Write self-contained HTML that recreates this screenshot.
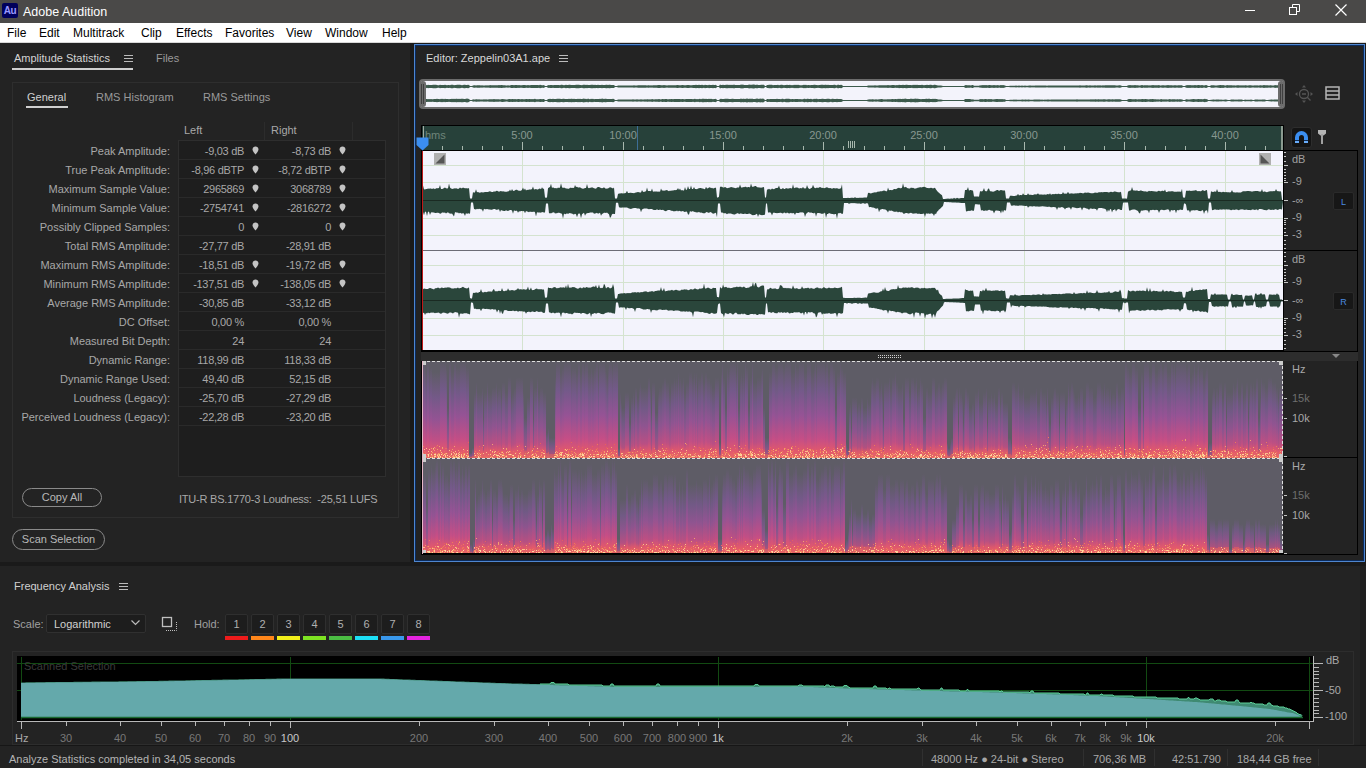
<!DOCTYPE html><html><head><meta charset="utf-8"><style>
*{margin:0;padding:0;box-sizing:border-box}
html,body{width:1366px;height:768px;overflow:hidden;background:#1a1a1a;font-family:"Liberation Sans",sans-serif;font-size:11px;color:#b0b0b0}
.a{position:absolute;white-space:nowrap}
</style></head><body>

<div class="a" style="left:0;top:0;width:1366px;height:23px;background:#4a4948"></div>
<div class="a" style="left:2px;top:3px;width:16px;height:15px;background:#00005b;border-radius:2px;color:#9999ff;font-weight:bold;font-size:10px;line-height:15px;text-align:center;letter-spacing:-0.5px">Au</div>
<div class="a" style="left:23px;top:4px;font-size:12.5px;color:#ffffff;line-height:16px">Adobe Audition</div>
<div class="a" style="left:1245px;top:10px;width:10px;height:1px;background:#fff"></div>
<svg class="a" style="left:1289px;top:4px" width="12" height="12"><rect x="0.5" y="3.5" width="7" height="7" fill="none" stroke="#fff"/><path d="M3.5 3.5V0.5H10.5V7.5H7.5" fill="none" stroke="#fff"/></svg>
<svg class="a" style="left:1335px;top:4px" width="12" height="12"><path d="M0.5 0.5L11.5 11.5M11.5 0.5L0.5 11.5" stroke="#fff" stroke-width="1.2"/></svg>
<div class="a" style="left:0;top:23px;width:1366px;height:19px;background:#ffffff"></div><div class="a" style="left:0;top:42px;width:1366px;height:1px;background:#d8d8d8"></div>
<div class="a" style="left:7px;top:26px;font-size:12px;color:#000;line-height:15px">File</div>
<div class="a" style="left:39px;top:26px;font-size:12px;color:#000;line-height:15px">Edit</div>
<div class="a" style="left:73px;top:26px;font-size:12px;color:#000;line-height:15px">Multitrack</div>
<div class="a" style="left:141px;top:26px;font-size:12px;color:#000;line-height:15px">Clip</div>
<div class="a" style="left:176px;top:26px;font-size:12px;color:#000;line-height:15px">Effects</div>
<div class="a" style="left:225px;top:26px;font-size:12px;color:#000;line-height:15px">Favorites</div>
<div class="a" style="left:286px;top:26px;font-size:12px;color:#000;line-height:15px">View</div>
<div class="a" style="left:325px;top:26px;font-size:12px;color:#000;line-height:15px">Window</div>
<div class="a" style="left:382px;top:26px;font-size:12px;color:#000;line-height:15px">Help</div>
<div class="a" style="left:0;top:43px;width:410px;height:519px;background:#232323"></div>
<div class="a" style="left:14px;top:51px;color:#d4d4d4;line-height:14px">Amplitude Statistics</div>
<div class="a" style="left:12px;top:68px;width:121px;height:2px;background:#cfcfcf"></div>
<svg class="a" style="left:124px;top:54px" width="9" height="8"><path d="M0 1.5H9M0 4.5H9M0 7.5H9" stroke="#bbb" stroke-width="1"/></svg>
<div class="a" style="left:156px;top:51px;color:#9a9a9a;line-height:14px">Files</div>
<div class="a" style="left:12px;top:82px;width:387px;height:436px;border:1px solid #2e2e2e"></div>
<div class="a" style="left:27px;top:90px;color:#cfcfcf;line-height:14px">General</div>
<div class="a" style="left:26px;top:106px;width:42px;height:2px;background:#cfcfcf"></div>
<div class="a" style="left:96px;top:90px;color:#9a9a9a;line-height:14px">RMS Histogram</div>
<div class="a" style="left:203px;top:90px;color:#9a9a9a;line-height:14px">RMS Settings</div>
<div class="a" style="left:184px;top:123px;color:#a8a8a8;line-height:14px">Left</div>
<div class="a" style="left:271px;top:123px;color:#a8a8a8;line-height:14px">Right</div>
<div class="a" style="left:264px;top:122px;width:1px;height:18px;background:#2c2c2c"></div>
<div class="a" style="left:352px;top:122px;width:1px;height:18px;background:#2c2c2c"></div>
<div class="a" style="left:178px;top:140px;width:208px;height:337px;background:#1e1e1e;border:1px solid #2e2e2e"></div>
<div class="a" style="left:179px;top:159px;width:206px;height:1px;background:#2a2a2a"></div>
<div class="a" style="right:1196px;top:144px;color:#a8a8a8;line-height:14px">Peak Amplitude:</div>
<div class="a" style="right:1122px;top:144px;letter-spacing:-0.3px;color:#a8a8a8;line-height:14px">-9,03 dB</div>
<div class="a" style="right:1035px;top:144px;letter-spacing:-0.3px;color:#a8a8a8;line-height:14px">-8,73 dB</div>
<svg class="a" style="left:252px;top:146px" width="7" height="9"><path d="M0.6 3.2C0.6 1.2 1.8 0.4 3.5 0.4C5.2 0.4 6.4 1.2 6.4 3.2C6.4 5 5 7 3.5 8.4C2 7 0.6 5 0.6 3.2Z" fill="#c4c4c4"/></svg>
<svg class="a" style="left:339px;top:146px" width="7" height="9"><path d="M0.6 3.2C0.6 1.2 1.8 0.4 3.5 0.4C5.2 0.4 6.4 1.2 6.4 3.2C6.4 5 5 7 3.5 8.4C2 7 0.6 5 0.6 3.2Z" fill="#c4c4c4"/></svg>
<div class="a" style="left:179px;top:178px;width:206px;height:1px;background:#2a2a2a"></div>
<div class="a" style="right:1196px;top:163px;color:#a8a8a8;line-height:14px">True Peak Amplitude:</div>
<div class="a" style="right:1122px;top:163px;letter-spacing:-0.3px;color:#a8a8a8;line-height:14px">-8,96 dBTP</div>
<div class="a" style="right:1035px;top:163px;letter-spacing:-0.3px;color:#a8a8a8;line-height:14px">-8,72 dBTP</div>
<svg class="a" style="left:252px;top:165px" width="7" height="9"><path d="M0.6 3.2C0.6 1.2 1.8 0.4 3.5 0.4C5.2 0.4 6.4 1.2 6.4 3.2C6.4 5 5 7 3.5 8.4C2 7 0.6 5 0.6 3.2Z" fill="#c4c4c4"/></svg>
<svg class="a" style="left:339px;top:165px" width="7" height="9"><path d="M0.6 3.2C0.6 1.2 1.8 0.4 3.5 0.4C5.2 0.4 6.4 1.2 6.4 3.2C6.4 5 5 7 3.5 8.4C2 7 0.6 5 0.6 3.2Z" fill="#c4c4c4"/></svg>
<div class="a" style="left:179px;top:197px;width:206px;height:1px;background:#2a2a2a"></div>
<div class="a" style="right:1196px;top:182px;color:#a8a8a8;line-height:14px">Maximum Sample Value:</div>
<div class="a" style="right:1122px;top:182px;letter-spacing:-0.3px;color:#a8a8a8;line-height:14px">2965869</div>
<div class="a" style="right:1035px;top:182px;letter-spacing:-0.3px;color:#a8a8a8;line-height:14px">3068789</div>
<svg class="a" style="left:252px;top:184px" width="7" height="9"><path d="M0.6 3.2C0.6 1.2 1.8 0.4 3.5 0.4C5.2 0.4 6.4 1.2 6.4 3.2C6.4 5 5 7 3.5 8.4C2 7 0.6 5 0.6 3.2Z" fill="#c4c4c4"/></svg>
<svg class="a" style="left:339px;top:184px" width="7" height="9"><path d="M0.6 3.2C0.6 1.2 1.8 0.4 3.5 0.4C5.2 0.4 6.4 1.2 6.4 3.2C6.4 5 5 7 3.5 8.4C2 7 0.6 5 0.6 3.2Z" fill="#c4c4c4"/></svg>
<div class="a" style="left:179px;top:216px;width:206px;height:1px;background:#2a2a2a"></div>
<div class="a" style="right:1196px;top:201px;color:#a8a8a8;line-height:14px">Minimum Sample Value:</div>
<div class="a" style="right:1122px;top:201px;letter-spacing:-0.3px;color:#a8a8a8;line-height:14px">-2754741</div>
<div class="a" style="right:1035px;top:201px;letter-spacing:-0.3px;color:#a8a8a8;line-height:14px">-2816272</div>
<svg class="a" style="left:252px;top:203px" width="7" height="9"><path d="M0.6 3.2C0.6 1.2 1.8 0.4 3.5 0.4C5.2 0.4 6.4 1.2 6.4 3.2C6.4 5 5 7 3.5 8.4C2 7 0.6 5 0.6 3.2Z" fill="#c4c4c4"/></svg>
<svg class="a" style="left:339px;top:203px" width="7" height="9"><path d="M0.6 3.2C0.6 1.2 1.8 0.4 3.5 0.4C5.2 0.4 6.4 1.2 6.4 3.2C6.4 5 5 7 3.5 8.4C2 7 0.6 5 0.6 3.2Z" fill="#c4c4c4"/></svg>
<div class="a" style="left:179px;top:235px;width:206px;height:1px;background:#2a2a2a"></div>
<div class="a" style="right:1196px;top:220px;color:#a8a8a8;line-height:14px">Possibly Clipped Samples:</div>
<div class="a" style="right:1122px;top:220px;letter-spacing:-0.3px;color:#a8a8a8;line-height:14px">0</div>
<div class="a" style="right:1035px;top:220px;letter-spacing:-0.3px;color:#a8a8a8;line-height:14px">0</div>
<svg class="a" style="left:252px;top:222px" width="7" height="9"><path d="M0.6 3.2C0.6 1.2 1.8 0.4 3.5 0.4C5.2 0.4 6.4 1.2 6.4 3.2C6.4 5 5 7 3.5 8.4C2 7 0.6 5 0.6 3.2Z" fill="#c4c4c4"/></svg>
<svg class="a" style="left:339px;top:222px" width="7" height="9"><path d="M0.6 3.2C0.6 1.2 1.8 0.4 3.5 0.4C5.2 0.4 6.4 1.2 6.4 3.2C6.4 5 5 7 3.5 8.4C2 7 0.6 5 0.6 3.2Z" fill="#c4c4c4"/></svg>
<div class="a" style="left:179px;top:254px;width:206px;height:1px;background:#2a2a2a"></div>
<div class="a" style="right:1196px;top:239px;color:#a8a8a8;line-height:14px">Total RMS Amplitude:</div>
<div class="a" style="right:1122px;top:239px;letter-spacing:-0.3px;color:#a8a8a8;line-height:14px">-27,77 dB</div>
<div class="a" style="right:1035px;top:239px;letter-spacing:-0.3px;color:#a8a8a8;line-height:14px">-28,91 dB</div>
<div class="a" style="left:179px;top:273px;width:206px;height:1px;background:#2a2a2a"></div>
<div class="a" style="right:1196px;top:258px;color:#a8a8a8;line-height:14px">Maximum RMS Amplitude:</div>
<div class="a" style="right:1122px;top:258px;letter-spacing:-0.3px;color:#a8a8a8;line-height:14px">-18,51 dB</div>
<div class="a" style="right:1035px;top:258px;letter-spacing:-0.3px;color:#a8a8a8;line-height:14px">-19,72 dB</div>
<svg class="a" style="left:252px;top:260px" width="7" height="9"><path d="M0.6 3.2C0.6 1.2 1.8 0.4 3.5 0.4C5.2 0.4 6.4 1.2 6.4 3.2C6.4 5 5 7 3.5 8.4C2 7 0.6 5 0.6 3.2Z" fill="#c4c4c4"/></svg>
<svg class="a" style="left:339px;top:260px" width="7" height="9"><path d="M0.6 3.2C0.6 1.2 1.8 0.4 3.5 0.4C5.2 0.4 6.4 1.2 6.4 3.2C6.4 5 5 7 3.5 8.4C2 7 0.6 5 0.6 3.2Z" fill="#c4c4c4"/></svg>
<div class="a" style="left:179px;top:292px;width:206px;height:1px;background:#2a2a2a"></div>
<div class="a" style="right:1196px;top:277px;color:#a8a8a8;line-height:14px">Minimum RMS Amplitude:</div>
<div class="a" style="right:1122px;top:277px;letter-spacing:-0.3px;color:#a8a8a8;line-height:14px">-137,51 dB</div>
<div class="a" style="right:1035px;top:277px;letter-spacing:-0.3px;color:#a8a8a8;line-height:14px">-138,05 dB</div>
<svg class="a" style="left:252px;top:279px" width="7" height="9"><path d="M0.6 3.2C0.6 1.2 1.8 0.4 3.5 0.4C5.2 0.4 6.4 1.2 6.4 3.2C6.4 5 5 7 3.5 8.4C2 7 0.6 5 0.6 3.2Z" fill="#c4c4c4"/></svg>
<svg class="a" style="left:339px;top:279px" width="7" height="9"><path d="M0.6 3.2C0.6 1.2 1.8 0.4 3.5 0.4C5.2 0.4 6.4 1.2 6.4 3.2C6.4 5 5 7 3.5 8.4C2 7 0.6 5 0.6 3.2Z" fill="#c4c4c4"/></svg>
<div class="a" style="left:179px;top:311px;width:206px;height:1px;background:#2a2a2a"></div>
<div class="a" style="right:1196px;top:296px;color:#a8a8a8;line-height:14px">Average RMS Amplitude:</div>
<div class="a" style="right:1122px;top:296px;letter-spacing:-0.3px;color:#a8a8a8;line-height:14px">-30,85 dB</div>
<div class="a" style="right:1035px;top:296px;letter-spacing:-0.3px;color:#a8a8a8;line-height:14px">-33,12 dB</div>
<div class="a" style="left:179px;top:330px;width:206px;height:1px;background:#2a2a2a"></div>
<div class="a" style="right:1196px;top:315px;color:#a8a8a8;line-height:14px">DC Offset:</div>
<div class="a" style="right:1122px;top:315px;letter-spacing:-0.3px;color:#a8a8a8;line-height:14px">0,00 %</div>
<div class="a" style="right:1035px;top:315px;letter-spacing:-0.3px;color:#a8a8a8;line-height:14px">0,00 %</div>
<div class="a" style="left:179px;top:349px;width:206px;height:1px;background:#2a2a2a"></div>
<div class="a" style="right:1196px;top:334px;color:#a8a8a8;line-height:14px">Measured Bit Depth:</div>
<div class="a" style="right:1122px;top:334px;letter-spacing:-0.3px;color:#a8a8a8;line-height:14px">24</div>
<div class="a" style="right:1035px;top:334px;letter-spacing:-0.3px;color:#a8a8a8;line-height:14px">24</div>
<div class="a" style="left:179px;top:368px;width:206px;height:1px;background:#2a2a2a"></div>
<div class="a" style="right:1196px;top:353px;color:#a8a8a8;line-height:14px">Dynamic Range:</div>
<div class="a" style="right:1122px;top:353px;letter-spacing:-0.3px;color:#a8a8a8;line-height:14px">118,99 dB</div>
<div class="a" style="right:1035px;top:353px;letter-spacing:-0.3px;color:#a8a8a8;line-height:14px">118,33 dB</div>
<div class="a" style="left:179px;top:387px;width:206px;height:1px;background:#2a2a2a"></div>
<div class="a" style="right:1196px;top:372px;color:#a8a8a8;line-height:14px">Dynamic Range Used:</div>
<div class="a" style="right:1122px;top:372px;letter-spacing:-0.3px;color:#a8a8a8;line-height:14px">49,40 dB</div>
<div class="a" style="right:1035px;top:372px;letter-spacing:-0.3px;color:#a8a8a8;line-height:14px">52,15 dB</div>
<div class="a" style="left:179px;top:406px;width:206px;height:1px;background:#2a2a2a"></div>
<div class="a" style="right:1196px;top:391px;color:#a8a8a8;line-height:14px">Loudness (Legacy):</div>
<div class="a" style="right:1122px;top:391px;letter-spacing:-0.3px;color:#a8a8a8;line-height:14px">-25,70 dB</div>
<div class="a" style="right:1035px;top:391px;letter-spacing:-0.3px;color:#a8a8a8;line-height:14px">-27,29 dB</div>
<div class="a" style="left:179px;top:425px;width:206px;height:1px;background:#2a2a2a"></div>
<div class="a" style="right:1196px;top:410px;color:#a8a8a8;line-height:14px">Perceived Loudness (Legacy):</div>
<div class="a" style="right:1122px;top:410px;letter-spacing:-0.3px;color:#a8a8a8;line-height:14px">-22,28 dB</div>
<div class="a" style="right:1035px;top:410px;letter-spacing:-0.3px;color:#a8a8a8;line-height:14px">-23,20 dB</div>
<div class="a" style="left:22px;top:488px;width:80px;height:19px;border:1px solid #8a8a8a;border-radius:10px;color:#b8b8b8;text-align:center;line-height:17px">Copy All</div>
<div class="a" style="left:179px;top:492px;letter-spacing:-0.22px;color:#a8a8a8;line-height:14px">ITU-R BS.1770-3 Loudness:&nbsp;&nbsp;-25,51 LUFS</div>
<div class="a" style="left:12px;top:529px;width:93px;height:21px;border:1px solid #8a8a8a;border-radius:11px;color:#b8b8b8;text-align:center;line-height:19px">Scan Selection</div>
<div class="a" style="left:414px;top:44px;width:951px;height:518px;background:#232323;border:1px solid #4f86cf;box-shadow:inset 0 0 0 1px #0b2b5c"></div>
<div class="a" style="left:426px;top:51px;color:#d8d8d8;line-height:14px">Editor: Zeppelin03A1.ape</div>
<svg class="a" style="left:559px;top:54px" width="9" height="8"><path d="M0 1.5H9M0 4.5H9M0 7.5H9" stroke="#bbb" stroke-width="1"/></svg>
<div class="a" style="left:419px;top:79px;width:866px;height:30px;background:#6c6c6c;border-radius:4px"></div>
<div class="a" style="left:421px;top:81px;width:862px;height:26px;background:#f3f3fb"></div>
<div class="a" style="left:419px;top:81px;width:7px;height:26px;background:#6c6c6c;border-radius:3px"></div>
<div class="a" style="left:421px;top:84px;width:1px;height:20px;background:#3f3f3f"></div><div class="a" style="left:423px;top:84px;width:1px;height:20px;background:#3f3f3f"></div>
<div class="a" style="left:1278px;top:81px;width:7px;height:26px;background:#6c6c6c;border-radius:3px"></div>
<div class="a" style="left:1280px;top:84px;width:1px;height:20px;background:#3f3f3f"></div><div class="a" style="left:1282px;top:84px;width:1px;height:20px;background:#3f3f3f"></div>
<svg class="a" style="left:1294px;top:84px" width="22" height="20"><g fill="none" stroke="#555" stroke-width="1.3"><circle cx="10" cy="10" r="4.5"/><path d="M8 10H12M13.3 13.3L16.5 16.5"/></g><g fill="#555"><path d="M10 1L8 3.5H12Z"/><path d="M10 19L8 16.5H12Z"/><path d="M1 10L3.5 8V12Z"/><path d="M19 10L16.5 8V12Z"/></g></svg>
<svg class="a" style="left:1325px;top:86px" width="16" height="15"><rect x="1" y="1" width="13" height="12" fill="none" stroke="#b5b5b5" stroke-width="1.5"/><path d="M1 5H14M1 9H14" stroke="#b5b5b5" stroke-width="1.5"/></svg>
<div class="a" style="left:421px;top:125px;width:863px;height:26px;background:#000"></div>
<div class="a" style="left:422px;top:126px;width:861px;height:24px;background:#27413a"></div>
<div class="a" style="left:422px;top:142px;width:1px;height:8px;background:#a8b8ae"></div><div class="a" style="left:442px;top:146px;width:1px;height:4px;background:#a8b8ae"></div><div class="a" style="left:462px;top:146px;width:1px;height:4px;background:#a8b8ae"></div><div class="a" style="left:482px;top:146px;width:1px;height:4px;background:#a8b8ae"></div><div class="a" style="left:502px;top:146px;width:1px;height:4px;background:#a8b8ae"></div><div class="a" style="left:522px;top:142px;width:1px;height:8px;background:#a8b8ae"></div><div class="a" style="left:542px;top:146px;width:1px;height:4px;background:#a8b8ae"></div><div class="a" style="left:562px;top:146px;width:1px;height:4px;background:#a8b8ae"></div><div class="a" style="left:583px;top:146px;width:1px;height:4px;background:#a8b8ae"></div><div class="a" style="left:603px;top:146px;width:1px;height:4px;background:#a8b8ae"></div><div class="a" style="left:623px;top:142px;width:1px;height:8px;background:#a8b8ae"></div><div class="a" style="left:643px;top:146px;width:1px;height:4px;background:#a8b8ae"></div><div class="a" style="left:663px;top:146px;width:1px;height:4px;background:#a8b8ae"></div><div class="a" style="left:683px;top:146px;width:1px;height:4px;background:#a8b8ae"></div><div class="a" style="left:703px;top:146px;width:1px;height:4px;background:#a8b8ae"></div><div class="a" style="left:723px;top:142px;width:1px;height:8px;background:#a8b8ae"></div><div class="a" style="left:743px;top:146px;width:1px;height:4px;background:#a8b8ae"></div><div class="a" style="left:763px;top:146px;width:1px;height:4px;background:#a8b8ae"></div><div class="a" style="left:783px;top:146px;width:1px;height:4px;background:#a8b8ae"></div><div class="a" style="left:803px;top:146px;width:1px;height:4px;background:#a8b8ae"></div><div class="a" style="left:823px;top:142px;width:1px;height:8px;background:#a8b8ae"></div><div class="a" style="left:843px;top:146px;width:1px;height:4px;background:#a8b8ae"></div><div class="a" style="left:864px;top:146px;width:1px;height:4px;background:#a8b8ae"></div><div class="a" style="left:884px;top:146px;width:1px;height:4px;background:#a8b8ae"></div><div class="a" style="left:904px;top:146px;width:1px;height:4px;background:#a8b8ae"></div><div class="a" style="left:924px;top:142px;width:1px;height:8px;background:#a8b8ae"></div><div class="a" style="left:944px;top:146px;width:1px;height:4px;background:#a8b8ae"></div><div class="a" style="left:964px;top:146px;width:1px;height:4px;background:#a8b8ae"></div><div class="a" style="left:984px;top:146px;width:1px;height:4px;background:#a8b8ae"></div><div class="a" style="left:1004px;top:146px;width:1px;height:4px;background:#a8b8ae"></div><div class="a" style="left:1024px;top:142px;width:1px;height:8px;background:#a8b8ae"></div><div class="a" style="left:1044px;top:146px;width:1px;height:4px;background:#a8b8ae"></div><div class="a" style="left:1064px;top:146px;width:1px;height:4px;background:#a8b8ae"></div><div class="a" style="left:1084px;top:146px;width:1px;height:4px;background:#a8b8ae"></div><div class="a" style="left:1104px;top:146px;width:1px;height:4px;background:#a8b8ae"></div><div class="a" style="left:1124px;top:142px;width:1px;height:8px;background:#a8b8ae"></div><div class="a" style="left:1145px;top:146px;width:1px;height:4px;background:#a8b8ae"></div><div class="a" style="left:1165px;top:146px;width:1px;height:4px;background:#a8b8ae"></div><div class="a" style="left:1185px;top:146px;width:1px;height:4px;background:#a8b8ae"></div><div class="a" style="left:1205px;top:146px;width:1px;height:4px;background:#a8b8ae"></div><div class="a" style="left:1225px;top:142px;width:1px;height:8px;background:#a8b8ae"></div><div class="a" style="left:1245px;top:146px;width:1px;height:4px;background:#a8b8ae"></div><div class="a" style="left:1265px;top:146px;width:1px;height:4px;background:#a8b8ae"></div>
<div class="a" style="left:492px;width:60px;text-align:center;top:128px;color:#879890;line-height:14px">5:00</div>
<div class="a" style="left:593px;width:60px;text-align:center;top:128px;color:#879890;line-height:14px">10:00</div>
<div class="a" style="left:693px;width:60px;text-align:center;top:128px;color:#879890;line-height:14px">15:00</div>
<div class="a" style="left:793px;width:60px;text-align:center;top:128px;color:#879890;line-height:14px">20:00</div>
<div class="a" style="left:894px;width:60px;text-align:center;top:128px;color:#879890;line-height:14px">25:00</div>
<div class="a" style="left:994px;width:60px;text-align:center;top:128px;color:#879890;line-height:14px">30:00</div>
<div class="a" style="left:1094px;width:60px;text-align:center;top:128px;color:#879890;line-height:14px">35:00</div>
<div class="a" style="left:1195px;width:60px;text-align:center;top:128px;color:#879890;line-height:14px">40:00</div>
<div class="a" style="left:425px;top:128px;color:#6f857a;line-height:14px">hms</div>
<div class="a" style="left:423px;top:126px;width:1px;height:14px;background:#a0aca4"></div>
<div class="a" style="left:637px;top:126px;width:1px;height:24px;background:#3d6e96"></div>
<svg class="a" style="left:847px;top:141px" width="9" height="7"><path d="M1.5 0V7M3.5 0V7M5.5 0V7M7.5 0V7" stroke="#a8b8ae" stroke-width="1"/></svg>
<div class="a" style="left:1281px;top:126px;width:2px;height:24px;background:#8a9a90"></div>
<div class="a" style="left:1291px;top:127px;width:21px;height:21px;background:#141414;border:1px solid #2d2d2d;border-radius:3px"></div>
<svg class="a" style="left:1294px;top:130px" width="15" height="15"><path d="M1 13V7.5A6.5 6.5 0 0 1 14 7.5V13H10V7.5A2.5 2.5 0 0 0 5 7.5V13Z" fill="#3b8ef0"/><path d="M1 10.5H5M10 10.5H14" stroke="#0d2a52" stroke-width="1"/><path d="M1 12H5M10 12H14" stroke="#7ab8ff" stroke-width="1.5"/></svg>
<svg class="a" style="left:1318px;top:130px" width="9" height="15"><path d="M0 0H8V3.5L5.5 5.5H2.5L0 3.5Z" fill="#b5b5b5"/><rect x="3" y="4" width="2" height="10" fill="#a0a0a0"/></svg>
<div class="a" style="left:421px;top:150px;width:863px;height:202px;background:#000"></div>
<div class="a" style="left:422px;top:151px;width:861px;height:199px;background:#f3f3fc"></div>
<div class="a" style="left:422px;top:165px;width:861px;height:1px;background:#d4e3cf"></div><div class="a" style="left:422px;top:182px;width:861px;height:1px;background:#d4e3cf"></div><div class="a" style="left:422px;top:218px;width:861px;height:1px;background:#d4e3cf"></div><div class="a" style="left:422px;top:235px;width:861px;height:1px;background:#d4e3cf"></div><div class="a" style="left:422px;top:265px;width:861px;height:1px;background:#d4e3cf"></div><div class="a" style="left:422px;top:282px;width:861px;height:1px;background:#d4e3cf"></div><div class="a" style="left:422px;top:318px;width:861px;height:1px;background:#d4e3cf"></div><div class="a" style="left:422px;top:335px;width:861px;height:1px;background:#d4e3cf"></div><div class="a" style="left:522px;top:151px;width:1px;height:199px;background:#d4e3cf"></div><div class="a" style="left:623px;top:151px;width:1px;height:199px;background:#d4e3cf"></div><div class="a" style="left:723px;top:151px;width:1px;height:199px;background:#d4e3cf"></div><div class="a" style="left:823px;top:151px;width:1px;height:199px;background:#d4e3cf"></div><div class="a" style="left:924px;top:151px;width:1px;height:199px;background:#d4e3cf"></div><div class="a" style="left:1024px;top:151px;width:1px;height:199px;background:#d4e3cf"></div><div class="a" style="left:1124px;top:151px;width:1px;height:199px;background:#d4e3cf"></div><div class="a" style="left:1225px;top:151px;width:1px;height:199px;background:#d4e3cf"></div><div class="a" style="left:422px;top:250px;width:861px;height:1px;background:#6c6c76"></div>
<svg class="a" style="left:0;top:0" width="1366" height="768"><path d="M422 189.0 L423 185.5 L424 189.3 L425 189.5 L426 189.0 L427 189.1 L428 188.4 L429 188.7 L430 188.4 L431 188.5 L432 188.9 L433 188.4 L434 188.5 L435 189.2 L436 188.3 L437 188.2 L438 188.3 L439 188.1 L440 185.1 L441 188.9 L442 189.0 L443 188.7 L444 188.0 L445 187.5 L446 188.3 L447 188.6 L448 188.3 L449 183.6 L450 187.5 L451 188.4 L452 188.7 L453 188.9 L454 188.3 L455 188.4 L456 188.3 L457 188.4 L458 188.9 L459 188.4 L460 187.6 L461 188.3 L462 188.3 L463 187.6 L464 188.1 L465 188.3 L466 188.2 L467 188.2 L468 188.4 L469 188.1 L470 198.5 L471 198.5 L472 198.5 L473 192.1 L474 192.7 L475 192.3 L476 189.2 L477 192.3 L478 192.0 L479 192.4 L480 192.7 L481 192.3 L482 192.2 L483 192.5 L484 192.3 L485 192.1 L486 191.9 L487 191.9 L488 191.9 L489 191.6 L490 191.2 L491 191.7 L492 192.0 L493 192.0 L494 191.3 L495 191.8 L496 191.1 L497 190.8 L498 191.2 L499 191.7 L500 191.3 L501 190.9 L502 191.5 L503 191.3 L504 191.5 L505 191.7 L506 191.7 L507 191.7 L508 191.3 L509 191.2 L510 189.4 L511 191.2 L512 189.1 L513 190.8 L514 191.0 L515 190.3 L516 189.7 L517 189.8 L518 190.5 L519 190.8 L520 190.7 L521 190.8 L522 189.8 L523 187.4 L524 189.9 L525 188.5 L526 190.4 L527 189.8 L528 189.9 L529 189.6 L530 189.4 L531 189.4 L532 189.0 L533 186.5 L534 189.6 L535 189.3 L536 188.9 L537 189.6 L538 189.6 L539 188.7 L540 188.6 L541 189.3 L542 187.2 L543 188.8 L544 188.8 L545 197.4 L546 197.7 L547 197.6 L548 188.3 L549 187.4 L550 187.0 L551 183.7 L552 187.9 L553 187.3 L554 188.1 L555 188.3 L556 187.9 L557 188.5 L558 187.5 L559 188.1 L560 187.4 L561 183.3 L562 187.3 L563 188.1 L564 187.6 L565 188.0 L566 188.4 L567 188.5 L568 188.7 L569 188.8 L570 187.7 L571 187.7 L572 188.1 L573 187.7 L574 188.1 L575 185.0 L576 187.0 L577 186.7 L578 187.6 L579 187.4 L580 187.2 L581 187.9 L582 188.4 L583 188.7 L584 188.4 L585 188.1 L586 188.0 L587 183.9 L588 187.8 L589 188.2 L590 187.7 L591 187.7 L592 187.3 L593 187.8 L594 188.2 L595 188.5 L596 188.7 L597 187.6 L598 187.0 L599 187.0 L600 187.6 L601 187.9 L602 188.3 L603 188.1 L604 187.3 L605 188.2 L606 188.7 L607 188.6 L608 188.5 L609 187.8 L610 187.2 L611 187.5 L612 188.0 L613 188.4 L614 187.6 L615 198.6 L616 198.5 L617 198.6 L618 193.9 L619 193.5 L620 193.4 L621 193.3 L622 193.2 L623 193.5 L624 193.3 L625 193.2 L626 192.7 L627 190.7 L628 193.1 L629 193.1 L630 192.7 L631 192.7 L632 193.0 L633 193.1 L634 193.2 L635 192.8 L636 192.6 L637 192.3 L638 191.9 L639 192.2 L640 192.5 L641 192.5 L642 190.0 L643 191.8 L644 191.9 L645 191.5 L646 191.2 L647 187.6 L648 191.0 L649 191.1 L650 191.0 L651 191.3 L652 188.5 L653 191.8 L654 191.6 L655 191.4 L656 191.4 L657 191.6 L658 191.8 L659 191.5 L660 191.8 L661 188.5 L662 190.5 L663 190.5 L664 190.7 L665 190.4 L666 190.3 L667 190.1 L668 190.7 L669 191.2 L670 190.6 L671 191.0 L672 190.2 L673 190.8 L674 190.1 L675 190.3 L676 189.9 L677 189.8 L678 188.0 L679 190.1 L680 188.5 L681 190.6 L682 190.1 L683 190.4 L684 190.5 L685 187.0 L686 190.1 L687 189.5 L688 185.9 L689 188.9 L690 189.1 L691 185.5 L692 189.0 L693 189.1 L694 186.9 L695 189.1 L696 188.9 L697 189.2 L698 188.5 L699 188.3 L700 188.0 L701 188.1 L702 188.4 L703 188.6 L704 188.9 L705 189.2 L706 186.8 L707 188.5 L708 188.2 L709 187.6 L710 187.2 L711 188.3 L712 187.7 L713 188.4 L714 188.3 L715 187.7 L716 187.7 L717 197.6 L718 197.6 L719 196.8 L720 186.8 L721 186.8 L722 186.7 L723 187.6 L724 187.4 L725 187.1 L726 187.5 L727 188.3 L728 187.9 L729 187.8 L730 187.4 L731 186.9 L732 187.3 L733 187.4 L734 187.7 L735 188.1 L736 188.3 L737 187.5 L738 187.6 L739 187.6 L740 184.6 L741 187.3 L742 187.8 L743 186.9 L744 187.2 L745 186.7 L746 186.7 L747 187.6 L748 187.1 L749 186.9 L750 187.5 L751 183.5 L752 186.7 L753 186.7 L754 186.6 L755 186.1 L756 186.1 L757 187.2 L758 187.2 L759 187.5 L760 187.6 L761 187.8 L762 187.4 L763 187.3 L764 187.1 L765 197.5 L766 197.6 L767 189.4 L768 189.4 L769 188.8 L770 189.4 L771 189.5 L772 188.5 L773 189.1 L774 189.3 L775 188.4 L776 188.0 L777 188.0 L778 187.7 L779 185.4 L780 188.6 L781 189.3 L782 188.7 L783 187.9 L784 188.9 L785 188.9 L786 188.1 L787 188.5 L788 188.5 L789 188.6 L790 188.0 L791 188.2 L792 188.6 L793 184.3 L794 188.3 L795 187.7 L796 187.4 L797 187.6 L798 187.7 L799 188.5 L800 188.2 L801 188.1 L802 188.5 L803 186.7 L804 188.5 L805 188.2 L806 188.4 L807 185.1 L808 187.8 L809 188.7 L810 188.9 L811 188.0 L812 187.8 L813 184.8 L814 187.2 L815 188.2 L816 188.0 L817 187.6 L818 188.0 L819 187.6 L820 187.1 L821 187.4 L822 188.0 L823 187.7 L824 188.2 L825 188.0 L826 187.5 L827 187.2 L828 187.8 L829 188.3 L830 188.0 L831 188.3 L832 188.7 L833 188.2 L834 188.1 L835 188.4 L836 188.3 L837 188.2 L838 188.6 L839 188.9 L840 188.4 L841 188.2 L842 184.3 L843 198.1 L844 198.1 L845 198.0 L846 198.1 L847 198.0 L848 197.8 L849 197.9 L850 198.0 L851 197.8 L852 197.7 L853 197.7 L854 197.9 L855 197.1 L856 198.0 L857 197.8 L858 197.9 L859 197.8 L860 197.7 L861 197.7 L862 197.7 L863 197.7 L864 197.5 L865 197.5 L866 197.6 L867 197.4 L868 193.1 L869 192.8 L870 193.3 L871 193.4 L872 193.1 L873 192.7 L874 192.5 L875 192.3 L876 192.6 L877 192.1 L878 191.6 L879 191.7 L880 191.3 L881 191.2 L882 191.2 L883 190.8 L884 190.6 L885 190.7 L886 191.2 L887 191.3 L888 187.6 L889 190.3 L890 189.9 L891 189.9 L892 190.2 L893 189.8 L894 189.0 L895 189.0 L896 189.3 L897 188.4 L898 188.1 L899 187.7 L900 188.2 L901 188.2 L902 187.7 L903 183.2 L904 187.2 L905 187.2 L906 186.8 L907 187.9 L908 188.2 L909 188.5 L910 188.5 L911 187.6 L912 188.1 L913 187.8 L914 188.2 L915 188.7 L916 188.2 L917 188.3 L918 187.4 L919 187.7 L920 187.0 L921 187.6 L922 187.2 L923 187.1 L924 186.8 L925 187.1 L926 187.6 L927 187.9 L928 188.1 L929 188.2 L930 188.1 L931 187.8 L932 188.0 L933 188.4 L934 188.0 L935 187.8 L936 189.5 L937 190.8 L938 192.1 L939 192.8 L940 193.7 L941 194.6 L942 195.3 L943 198.9 L944 198.9 L945 198.9 L946 198.8 L947 198.8 L948 198.4 L949 198.7 L950 198.7 L951 198.6 L952 198.6 L953 198.7 L954 197.8 L955 198.4 L956 198.5 L957 197.7 L958 198.3 L959 198.4 L960 198.2 L961 198.1 L962 198.1 L963 198.0 L964 198.1 L965 190.1 L966 190.1 L967 189.7 L968 187.0 L969 190.7 L970 190.1 L971 189.9 L972 190.4 L973 190.5 L974 196.5 L975 196.6 L976 196.4 L977 196.6 L978 196.6 L979 196.7 L980 191.3 L981 191.3 L982 191.4 L983 190.6 L984 188.1 L985 191.1 L986 191.2 L987 191.3 L988 188.7 L989 188.6 L990 191.2 L991 191.2 L992 191.6 L993 191.7 L994 191.6 L995 190.9 L996 190.5 L997 190.1 L998 190.1 L999 190.9 L1000 190.3 L1001 190.1 L1002 190.3 L1003 190.6 L1004 190.4 L1005 190.5 L1006 198.6 L1007 198.6 L1008 198.6 L1009 198.5 L1010 195.7 L1011 195.8 L1012 195.7 L1013 195.9 L1014 195.9 L1015 195.9 L1016 195.6 L1017 195.4 L1018 193.8 L1019 195.5 L1020 195.1 L1021 195.0 L1022 195.2 L1023 193.3 L1024 194.8 L1025 194.9 L1026 194.9 L1027 195.0 L1028 193.3 L1029 194.8 L1030 194.8 L1031 194.7 L1032 194.9 L1033 195.0 L1034 194.6 L1035 194.3 L1036 194.4 L1037 194.2 L1038 193.2 L1039 194.6 L1040 194.5 L1041 194.6 L1042 194.5 L1043 194.7 L1044 194.5 L1045 194.4 L1046 194.7 L1047 194.3 L1048 194.1 L1049 194.4 L1050 193.2 L1051 194.7 L1052 194.2 L1053 193.9 L1054 194.2 L1055 194.0 L1056 193.8 L1057 194.2 L1058 193.7 L1059 193.8 L1060 194.2 L1061 193.9 L1062 194.1 L1063 192.0 L1064 193.7 L1065 193.4 L1066 193.8 L1067 193.6 L1068 191.7 L1069 193.4 L1070 193.8 L1071 193.2 L1072 193.5 L1073 193.4 L1074 193.7 L1075 193.3 L1076 193.5 L1077 193.2 L1078 193.2 L1079 193.2 L1080 192.7 L1081 193.1 L1082 193.1 L1083 193.4 L1084 193.0 L1085 192.6 L1086 192.7 L1087 192.8 L1088 192.5 L1089 192.8 L1090 193.1 L1091 193.2 L1092 193.3 L1093 193.3 L1094 192.9 L1095 192.5 L1096 192.7 L1097 192.8 L1098 192.7 L1099 192.1 L1100 192.4 L1101 192.1 L1102 192.2 L1103 192.2 L1104 192.0 L1105 191.9 L1106 192.0 L1107 191.9 L1108 192.3 L1109 192.6 L1110 191.9 L1111 191.7 L1112 192.1 L1113 192.2 L1114 191.6 L1115 191.6 L1116 191.8 L1117 192.1 L1118 192.2 L1119 192.2 L1120 192.3 L1121 191.7 L1122 198.5 L1123 198.5 L1124 198.6 L1125 198.5 L1126 198.6 L1127 198.7 L1128 191.5 L1129 191.3 L1130 190.5 L1131 190.4 L1132 187.0 L1133 190.3 L1134 190.6 L1135 190.5 L1136 190.7 L1137 190.2 L1138 190.9 L1139 191.0 L1140 190.8 L1141 190.3 L1142 190.9 L1143 191.1 L1144 191.6 L1145 191.2 L1146 191.5 L1147 191.8 L1148 191.4 L1149 190.8 L1150 191.3 L1151 191.0 L1152 190.9 L1153 191.3 L1154 191.3 L1155 191.6 L1156 191.4 L1157 191.7 L1158 191.1 L1159 190.8 L1160 191.3 L1161 191.3 L1162 190.8 L1163 190.7 L1164 191.2 L1165 189.5 L1166 191.9 L1167 191.9 L1168 191.5 L1169 191.2 L1170 191.5 L1171 191.3 L1172 191.3 L1173 191.2 L1174 191.8 L1175 191.7 L1176 191.7 L1177 191.7 L1178 191.6 L1179 191.7 L1180 191.4 L1181 192.0 L1182 188.7 L1183 197.5 L1184 197.5 L1185 197.7 L1186 191.1 L1187 190.5 L1188 191.1 L1189 190.5 L1190 190.7 L1191 190.9 L1192 190.7 L1193 190.8 L1194 190.4 L1195 190.4 L1196 190.1 L1197 190.9 L1198 191.2 L1199 191.0 L1200 191.2 L1201 191.3 L1202 190.5 L1203 190.1 L1204 190.9 L1205 190.7 L1206 190.2 L1207 190.1 L1208 198.4 L1209 198.5 L1210 198.6 L1211 191.3 L1212 191.7 L1213 192.1 L1214 191.8 L1215 191.3 L1216 192.0 L1217 189.1 L1218 191.8 L1219 192.0 L1220 191.8 L1221 192.2 L1222 192.3 L1223 191.8 L1224 191.9 L1225 192.2 L1226 191.9 L1227 192.2 L1228 192.2 L1229 192.2 L1230 192.5 L1231 192.0 L1232 190.1 L1233 192.2 L1234 192.2 L1235 192.4 L1236 192.5 L1237 192.3 L1238 192.5 L1239 192.5 L1240 192.5 L1241 192.4 L1242 191.7 L1243 191.3 L1244 191.3 L1245 191.3 L1246 191.3 L1247 191.0 L1248 191.0 L1249 191.1 L1250 191.3 L1251 191.2 L1252 191.8 L1253 191.3 L1254 191.2 L1255 191.1 L1256 191.0 L1257 191.0 L1258 191.0 L1259 191.5 L1260 191.5 L1261 191.4 L1262 189.0 L1263 192.0 L1264 191.4 L1265 191.6 L1266 192.0 L1267 192.3 L1268 191.7 L1269 191.6 L1270 191.2 L1271 191.3 L1272 191.3 L1273 191.3 L1274 191.0 L1275 191.3 L1276 189.0 L1277 191.0 L1278 191.2 L1279 191.3 L1280 191.5 L1281 191.2 L1282 199.5 L1283 201.5 L1282 209.6 L1281 209.2 L1280 209.1 L1279 209.3 L1278 210.0 L1277 209.7 L1276 209.3 L1275 209.3 L1274 210.1 L1273 209.8 L1272 209.7 L1271 210.1 L1270 209.8 L1269 209.2 L1268 209.5 L1267 210.2 L1266 210.2 L1265 209.9 L1264 210.0 L1263 209.5 L1262 209.2 L1261 209.0 L1260 209.0 L1259 209.1 L1258 210.6 L1257 209.4 L1256 209.6 L1255 209.9 L1254 209.7 L1253 209.5 L1252 209.6 L1251 210.3 L1250 210.1 L1249 209.9 L1248 210.1 L1247 209.8 L1246 209.6 L1245 210.0 L1244 209.7 L1243 209.4 L1242 209.2 L1241 209.4 L1240 209.6 L1239 210.2 L1238 209.9 L1237 209.6 L1236 209.4 L1235 209.8 L1234 209.9 L1233 209.5 L1232 210.0 L1231 210.2 L1230 209.8 L1229 209.4 L1228 209.5 L1227 209.4 L1226 209.2 L1225 209.7 L1224 209.2 L1223 209.6 L1222 209.6 L1221 209.7 L1220 209.2 L1219 209.9 L1218 209.8 L1217 209.7 L1216 209.7 L1215 209.2 L1214 209.8 L1213 210.1 L1212 210.2 L1211 202.6 L1210 202.5 L1209 202.5 L1208 213.7 L1207 210.3 L1206 210.5 L1205 211.0 L1204 213.9 L1203 210.3 L1202 210.3 L1201 211.2 L1200 211.0 L1199 211.1 L1198 210.6 L1197 209.9 L1196 210.3 L1195 210.2 L1194 210.4 L1193 210.1 L1192 210.7 L1191 210.2 L1190 212.8 L1189 210.2 L1188 210.4 L1187 210.2 L1186 204.6 L1185 203.6 L1184 203.4 L1183 209.8 L1182 210.0 L1181 209.8 L1180 209.4 L1179 210.2 L1178 210.2 L1177 209.9 L1176 213.2 L1175 210.1 L1174 209.9 L1173 210.4 L1172 210.2 L1171 210.1 L1170 212.5 L1169 209.9 L1168 209.3 L1167 209.4 L1166 209.8 L1165 210.1 L1164 210.2 L1163 210.0 L1162 209.8 L1161 209.8 L1160 210.6 L1159 213.1 L1158 210.3 L1157 209.9 L1156 209.7 L1155 210.3 L1154 210.1 L1153 209.8 L1152 210.0 L1151 210.3 L1150 210.1 L1149 213.3 L1148 210.6 L1147 210.5 L1146 210.1 L1145 210.3 L1144 210.2 L1143 210.4 L1142 210.7 L1141 210.4 L1140 213.5 L1139 213.1 L1138 210.9 L1137 210.6 L1136 210.0 L1135 209.6 L1134 209.5 L1133 209.6 L1132 209.7 L1131 210.1 L1130 210.8 L1129 210.2 L1128 202.5 L1127 202.4 L1126 202.5 L1125 202.6 L1124 202.6 L1123 202.7 L1122 210.1 L1121 210.0 L1120 209.7 L1119 209.0 L1118 209.2 L1117 209.7 L1116 211.6 L1115 209.1 L1114 209.9 L1113 209.9 L1112 212.6 L1111 209.1 L1110 209.3 L1109 211.5 L1108 209.6 L1107 212.2 L1106 209.4 L1105 209.0 L1104 208.5 L1103 208.5 L1102 208.0 L1101 208.0 L1100 208.0 L1099 208.1 L1098 208.5 L1097 210.7 L1096 208.9 L1095 208.9 L1094 208.4 L1093 208.9 L1092 208.7 L1091 208.6 L1090 208.6 L1089 210.0 L1088 208.8 L1087 208.7 L1086 208.2 L1085 207.9 L1084 207.6 L1083 207.9 L1082 210.4 L1081 207.8 L1080 207.6 L1079 208.0 L1078 207.9 L1077 208.2 L1076 207.9 L1075 207.8 L1074 207.6 L1073 207.3 L1072 207.3 L1071 209.7 L1070 207.7 L1069 207.6 L1068 207.4 L1067 208.0 L1066 207.9 L1065 209.6 L1064 207.9 L1063 207.6 L1062 207.1 L1061 207.2 L1060 207.7 L1059 207.5 L1058 207.5 L1057 209.9 L1056 207.5 L1055 207.3 L1054 207.1 L1053 207.1 L1052 207.2 L1051 207.3 L1050 207.1 L1049 206.6 L1048 207.0 L1047 206.7 L1046 206.7 L1045 206.4 L1044 206.5 L1043 206.2 L1042 206.3 L1041 206.4 L1040 206.4 L1039 206.8 L1038 206.5 L1037 206.6 L1036 206.6 L1035 206.5 L1034 206.1 L1033 206.4 L1032 206.5 L1031 206.2 L1030 206.2 L1029 206.4 L1028 207.8 L1027 205.8 L1026 206.0 L1025 206.0 L1024 205.7 L1023 205.7 L1022 205.6 L1021 205.5 L1020 205.5 L1019 205.6 L1018 205.9 L1017 205.4 L1016 205.7 L1015 205.6 L1014 205.3 L1013 205.6 L1012 205.7 L1011 205.5 L1010 202.6 L1009 202.6 L1008 202.6 L1007 202.6 L1006 210.4 L1005 210.5 L1004 210.1 L1003 212.8 L1002 210.1 L1001 213.4 L1000 211.0 L999 210.9 L998 210.6 L997 210.8 L996 210.3 L995 211.2 L994 213.6 L993 210.9 L992 210.5 L991 210.7 L990 210.0 L989 209.8 L988 210.2 L987 210.8 L986 210.4 L985 210.4 L984 210.9 L983 210.6 L982 210.1 L981 210.7 L980 204.6 L979 204.4 L978 204.5 L977 204.2 L976 204.3 L975 204.3 L974 210.4 L973 211.0 L972 210.2 L971 210.5 L970 211.1 L969 210.7 L968 211.0 L967 211.3 L966 211.5 L965 202.9 L964 203.0 L963 203.0 L962 202.9 L961 202.9 L960 202.8 L959 202.7 L958 202.6 L957 202.7 L956 202.5 L955 202.4 L954 202.5 L953 202.5 L952 202.4 L951 202.3 L950 202.3 L949 202.2 L948 202.1 L947 202.2 L946 202.1 L945 202.1 L944 202.1 L943 205.8 L942 206.9 L941 207.8 L940 208.9 L939 209.6 L938 211.1 L937 211.7 L936 214.3 L935 213.6 L934 216.1 L933 214.0 L932 213.5 L931 213.2 L930 213.9 L929 213.4 L928 213.6 L927 213.8 L926 213.2 L925 217.1 L924 213.6 L923 213.8 L922 214.1 L921 214.1 L920 213.9 L919 213.6 L918 213.9 L917 213.4 L916 213.3 L915 213.6 L914 213.6 L913 213.7 L912 213.3 L911 212.8 L910 212.9 L909 213.4 L908 213.4 L907 213.0 L906 213.1 L905 213.3 L904 213.9 L903 213.2 L902 212.0 L901 212.4 L900 211.9 L899 211.8 L898 212.4 L897 211.6 L896 211.7 L895 211.7 L894 211.8 L893 211.2 L892 210.7 L891 210.5 L890 210.9 L889 210.3 L888 212.4 L887 210.8 L886 209.9 L885 209.3 L884 209.4 L883 209.1 L882 209.1 L881 209.5 L880 209.7 L879 212.3 L878 208.3 L877 208.4 L876 208.7 L875 208.2 L874 207.7 L873 207.6 L872 207.6 L871 207.1 L870 207.1 L869 207.2 L868 203.5 L867 203.2 L866 203.2 L865 204.1 L864 203.2 L863 203.2 L862 203.2 L861 204.1 L860 203.4 L859 203.5 L858 203.5 L857 203.4 L856 203.3 L855 203.2 L854 203.1 L853 203.2 L852 203.1 L851 203.3 L850 203.3 L849 203.9 L848 203.1 L847 203.1 L846 203.0 L845 203.1 L844 202.9 L843 213.4 L842 214.0 L841 213.2 L840 212.7 L839 213.4 L838 213.0 L837 218.8 L836 214.0 L835 214.0 L834 214.4 L833 214.1 L832 213.9 L831 213.7 L830 213.6 L829 213.1 L828 214.1 L827 213.9 L826 217.9 L825 212.6 L824 213.6 L823 213.6 L822 214.1 L821 213.5 L820 213.2 L819 212.9 L818 213.0 L817 213.2 L816 216.7 L815 212.6 L814 213.4 L813 213.0 L812 213.0 L811 212.3 L810 212.9 L809 212.0 L808 212.2 L807 212.9 L806 213.9 L805 216.9 L804 212.9 L803 212.5 L802 212.3 L801 212.4 L800 212.3 L799 213.0 L798 213.1 L797 213.0 L796 212.8 L795 215.0 L794 213.3 L793 212.9 L792 213.5 L791 212.8 L790 213.2 L789 213.4 L788 213.1 L787 212.4 L786 213.5 L785 212.8 L784 212.5 L783 213.5 L782 213.2 L781 212.7 L780 212.8 L779 212.9 L778 213.0 L777 213.2 L776 213.0 L775 213.1 L774 212.5 L773 213.1 L772 215.5 L771 212.9 L770 212.3 L769 212.5 L768 212.6 L767 203.4 L766 203.4 L765 214.4 L764 214.9 L763 214.9 L762 215.2 L761 215.1 L760 214.8 L759 214.3 L758 217.1 L757 213.7 L756 214.2 L755 215.1 L754 214.9 L753 215.3 L752 215.0 L751 214.2 L750 213.8 L749 213.6 L748 214.0 L747 214.0 L746 214.1 L745 213.6 L744 213.9 L743 214.1 L742 213.8 L741 213.6 L740 213.6 L739 214.3 L738 213.1 L737 213.6 L736 213.8 L735 214.6 L734 214.6 L733 214.3 L732 213.9 L731 213.4 L730 213.6 L729 213.4 L728 213.5 L727 214.2 L726 213.4 L725 212.9 L724 213.4 L723 212.7 L722 212.5 L721 212.4 L720 203.4 L719 203.5 L718 203.6 L717 217.2 L716 212.9 L715 212.8 L714 213.8 L713 213.4 L712 213.2 L711 212.1 L710 212.2 L709 212.7 L708 212.8 L707 212.1 L706 212.3 L705 213.2 L704 213.3 L703 213.2 L702 212.8 L701 212.4 L700 212.8 L699 211.8 L698 212.5 L697 212.3 L696 212.4 L695 211.7 L694 211.9 L693 211.1 L692 211.6 L691 211.7 L690 211.1 L689 214.4 L688 214.5 L687 211.7 L686 211.4 L685 211.9 L684 211.8 L683 210.9 L682 211.2 L681 211.4 L680 211.0 L679 210.7 L678 211.5 L677 210.6 L676 211.3 L675 210.9 L674 211.5 L673 210.9 L672 210.8 L671 210.8 L670 210.0 L669 210.0 L668 210.0 L667 210.4 L666 211.2 L665 210.9 L664 210.4 L663 209.7 L662 210.1 L661 210.0 L660 209.5 L659 209.9 L658 209.9 L657 209.3 L656 209.9 L655 210.1 L654 210.1 L653 209.8 L652 209.1 L651 208.9 L650 209.1 L649 209.3 L648 208.9 L647 208.5 L646 208.4 L645 208.5 L644 208.5 L643 208.9 L642 209.4 L641 212.3 L640 209.0 L639 208.4 L638 208.5 L637 208.4 L636 207.9 L635 208.0 L634 207.9 L633 208.2 L632 208.4 L631 208.9 L630 208.7 L629 208.6 L628 208.1 L627 207.4 L626 207.5 L625 207.5 L624 207.5 L623 207.5 L622 207.4 L621 207.7 L620 207.4 L619 207.3 L618 202.6 L617 203.1 L616 202.6 L615 214.0 L614 214.1 L613 213.8 L612 214.3 L611 216.7 L610 217.9 L609 214.2 L608 213.4 L607 212.5 L606 212.9 L605 212.7 L604 212.8 L603 213.5 L602 213.9 L601 215.7 L600 212.7 L599 213.3 L598 213.7 L597 212.7 L596 213.3 L595 213.5 L594 213.8 L593 212.6 L592 212.5 L591 212.5 L590 212.5 L589 212.9 L588 213.1 L587 213.3 L586 213.8 L585 215.7 L584 212.8 L583 213.5 L582 214.3 L581 218.2 L580 214.1 L579 213.2 L578 214.2 L577 217.3 L576 214.2 L575 213.8 L574 214.4 L573 214.2 L572 213.4 L571 213.6 L570 213.0 L569 213.3 L568 214.0 L567 213.3 L566 214.0 L565 214.3 L564 213.6 L563 218.8 L562 213.8 L561 213.4 L560 212.9 L559 212.7 L558 212.7 L557 213.2 L556 213.3 L555 213.5 L554 212.3 L553 212.6 L552 212.8 L551 213.5 L550 212.9 L549 213.4 L548 203.4 L547 203.4 L546 203.4 L545 212.5 L544 212.6 L543 212.3 L542 212.0 L541 212.7 L540 212.4 L539 212.6 L538 212.5 L537 212.2 L536 216.4 L535 212.2 L534 211.6 L533 211.9 L532 211.8 L531 211.9 L530 211.4 L529 212.3 L528 211.7 L527 211.4 L526 211.0 L525 213.3 L524 211.1 L523 211.2 L522 211.1 L521 211.0 L520 211.6 L519 211.2 L518 212.8 L517 210.7 L516 210.8 L515 210.9 L514 210.3 L513 213.7 L512 210.6 L511 210.0 L510 210.1 L509 210.6 L508 211.1 L507 210.8 L506 210.2 L505 211.1 L504 210.9 L503 210.7 L502 210.5 L501 209.9 L500 212.0 L499 209.3 L498 209.4 L497 209.7 L496 209.8 L495 209.0 L494 209.0 L493 209.2 L492 209.7 L491 209.7 L490 209.4 L489 209.4 L488 209.2 L487 209.0 L486 209.3 L485 209.2 L484 208.7 L483 211.7 L482 209.6 L481 209.3 L480 208.9 L479 208.7 L478 209.2 L477 208.7 L476 209.4 L475 209.2 L474 208.9 L473 202.6 L472 202.5 L471 202.6 L470 213.8 L469 213.6 L468 213.3 L467 214.0 L466 213.1 L465 216.0 L464 213.7 L463 213.1 L462 213.7 L461 213.3 L460 212.7 L459 213.6 L458 212.6 L457 212.7 L456 212.2 L455 212.3 L454 216.6 L453 215.1 L452 213.6 L451 213.7 L450 213.5 L449 213.3 L448 212.2 L447 212.8 L446 213.5 L445 212.6 L444 212.8 L443 212.6 L442 212.6 L441 213.5 L440 213.7 L439 213.0 L438 212.7 L437 212.7 L436 213.1 L435 212.9 L434 212.4 L433 212.6 L432 212.3 L431 212.4 L430 214.9 L429 211.8 L428 211.8 L427 216.1 L426 211.8 L425 211.7 L424 215.2 L423 212.0Z" fill="#2a463b"/><path d="M422 288.6 L423 289.2 L424 288.6 L425 288.8 L426 289.0 L427 288.9 L428 288.9 L429 288.2 L430 288.0 L431 288.3 L432 288.7 L433 288.9 L434 289.4 L435 288.3 L436 288.3 L437 287.9 L438 287.5 L439 288.1 L440 288.4 L441 287.8 L442 287.5 L443 288.0 L444 288.0 L445 287.6 L446 287.7 L447 287.4 L448 287.2 L449 287.5 L450 287.4 L451 288.3 L452 288.4 L453 288.5 L454 288.6 L455 287.9 L456 288.4 L457 288.1 L458 287.5 L459 288.5 L460 288.0 L461 287.9 L462 287.2 L463 286.8 L464 287.4 L465 287.9 L466 288.3 L467 288.5 L468 288.1 L469 287.2 L470 297.9 L471 298.5 L472 298.5 L473 292.7 L474 293.0 L475 292.8 L476 292.6 L477 292.5 L478 292.9 L479 292.1 L480 291.9 L481 289.0 L482 292.1 L483 292.5 L484 292.3 L485 291.7 L486 292.2 L487 291.9 L488 291.6 L489 291.5 L490 291.4 L491 291.4 L492 291.8 L493 289.7 L494 289.0 L495 291.6 L496 291.0 L497 291.6 L498 291.1 L499 290.8 L500 290.9 L501 290.9 L502 288.1 L503 290.7 L504 291.2 L505 291.0 L506 290.5 L507 290.8 L508 288.2 L509 290.2 L510 290.5 L511 290.2 L512 290.1 L513 290.3 L514 290.4 L515 290.6 L516 289.8 L517 289.6 L518 287.9 L519 289.6 L520 289.3 L521 289.3 L522 289.5 L523 289.5 L524 289.1 L525 289.8 L526 289.5 L527 289.3 L528 286.4 L529 290.0 L530 289.5 L531 287.4 L532 290.2 L533 290.1 L534 290.0 L535 289.3 L536 288.8 L537 288.5 L538 289.4 L539 289.0 L540 289.5 L541 289.0 L542 289.6 L543 289.4 L544 289.4 L545 297.7 L546 297.5 L547 297.6 L548 287.3 L549 287.9 L550 287.9 L551 287.9 L552 288.4 L553 287.4 L554 287.2 L555 286.9 L556 287.7 L557 288.4 L558 287.7 L559 288.2 L560 287.2 L561 287.5 L562 287.6 L563 287.4 L564 287.2 L565 288.0 L566 285.3 L567 288.6 L568 283.8 L569 288.1 L570 287.2 L571 287.9 L572 287.1 L573 287.2 L574 287.0 L575 287.4 L576 288.0 L577 288.4 L578 288.8 L579 288.3 L580 287.5 L581 287.8 L582 288.5 L583 287.6 L584 287.2 L585 287.9 L586 287.2 L587 286.9 L588 287.7 L589 287.5 L590 287.7 L591 287.4 L592 286.9 L593 286.6 L594 286.6 L595 286.9 L596 285.1 L597 287.9 L598 287.7 L599 284.4 L600 288.2 L601 287.8 L602 288.2 L603 287.5 L604 283.8 L605 285.3 L606 288.6 L607 287.4 L608 286.9 L609 287.6 L610 288.4 L611 287.9 L612 287.5 L613 284.1 L614 287.5 L615 298.5 L616 298.4 L617 298.6 L618 294.0 L619 294.0 L620 293.5 L621 293.6 L622 293.2 L623 293.4 L624 293.0 L625 293.3 L626 293.5 L627 292.9 L628 293.3 L629 292.9 L630 293.3 L631 292.9 L632 292.6 L633 292.3 L634 292.5 L635 292.1 L636 292.5 L637 292.5 L638 292.0 L639 292.5 L640 292.4 L641 292.0 L642 292.3 L643 292.0 L644 291.5 L645 291.5 L646 291.3 L647 291.8 L648 292.2 L649 291.7 L650 291.4 L651 291.4 L652 291.1 L653 291.4 L654 291.7 L655 291.1 L656 290.9 L657 290.7 L658 290.6 L659 290.5 L660 290.4 L661 287.0 L662 290.8 L663 290.4 L664 287.9 L665 291.4 L666 291.1 L667 291.1 L668 290.4 L669 290.4 L670 290.4 L671 290.2 L672 289.7 L673 290.6 L674 290.5 L675 290.0 L676 289.7 L677 290.0 L678 290.4 L679 290.6 L680 290.7 L681 289.9 L682 289.5 L683 290.0 L684 289.3 L685 289.4 L686 289.6 L687 289.6 L688 290.2 L689 290.1 L690 289.6 L691 289.1 L692 289.5 L693 289.4 L694 289.0 L695 288.3 L696 289.0 L697 289.2 L698 289.5 L699 289.1 L700 288.3 L701 289.0 L702 288.1 L703 288.5 L704 283.6 L705 288.4 L706 288.5 L707 288.0 L708 287.6 L709 288.1 L710 288.6 L711 289.0 L712 288.7 L713 287.7 L714 288.0 L715 288.1 L716 287.9 L717 297.1 L718 297.1 L719 297.6 L720 287.1 L721 287.9 L722 288.4 L723 284.6 L724 287.3 L725 287.3 L726 286.7 L727 287.6 L728 288.1 L729 287.4 L730 288.2 L731 287.9 L732 287.9 L733 287.6 L734 287.2 L735 287.3 L736 287.1 L737 286.5 L738 287.2 L739 286.8 L740 286.8 L741 286.8 L742 287.4 L743 286.9 L744 286.4 L745 287.5 L746 287.9 L747 287.9 L748 287.5 L749 287.7 L750 286.6 L751 286.4 L752 286.0 L753 282.0 L754 286.7 L755 283.6 L756 282.7 L757 286.4 L758 287.2 L759 287.5 L760 286.5 L761 286.0 L762 285.6 L763 285.6 L764 285.7 L765 297.5 L766 297.6 L767 289.3 L768 289.4 L769 288.9 L770 288.1 L771 287.7 L772 288.9 L773 288.6 L774 288.8 L775 288.2 L776 288.7 L777 289.3 L778 288.9 L779 288.5 L780 285.0 L781 285.5 L782 285.8 L783 288.0 L784 287.7 L785 288.2 L786 287.7 L787 288.6 L788 287.8 L789 288.6 L790 287.9 L791 288.7 L792 288.5 L793 285.2 L794 288.0 L795 288.8 L796 288.2 L797 288.3 L798 288.8 L799 289.2 L800 288.7 L801 288.8 L802 286.2 L803 288.2 L804 288.5 L805 288.3 L806 288.0 L807 288.3 L808 287.5 L809 288.3 L810 288.7 L811 287.8 L812 288.4 L813 288.6 L814 288.9 L815 288.2 L816 287.7 L817 287.6 L818 287.5 L819 288.5 L820 288.1 L821 288.6 L822 288.5 L823 287.7 L824 287.1 L825 288.0 L826 288.2 L827 288.4 L828 287.9 L829 287.5 L830 288.1 L831 288.3 L832 288.1 L833 288.2 L834 287.7 L835 287.5 L836 288.0 L837 287.9 L838 288.3 L839 287.7 L840 287.7 L841 287.2 L842 286.8 L843 297.8 L844 297.8 L845 297.9 L846 298.0 L847 298.0 L848 298.0 L849 298.1 L850 298.1 L851 298.0 L852 297.9 L853 297.9 L854 297.7 L855 297.7 L856 297.9 L857 297.7 L858 297.8 L859 297.8 L860 297.8 L861 297.9 L862 297.9 L863 297.8 L864 297.8 L865 297.6 L866 297.6 L867 297.7 L868 293.7 L869 293.2 L870 293.3 L871 293.0 L872 292.7 L873 292.5 L874 292.3 L875 292.6 L876 292.7 L877 292.7 L878 292.7 L879 292.4 L880 291.7 L881 291.2 L882 291.3 L883 288.4 L884 291.0 L885 287.0 L886 290.2 L887 290.7 L888 291.0 L889 291.0 L890 290.0 L891 289.5 L892 289.3 L893 289.3 L894 289.1 L895 289.5 L896 288.8 L897 289.2 L898 285.1 L899 288.2 L900 288.0 L901 288.6 L902 287.9 L903 287.5 L904 287.6 L905 287.7 L906 287.2 L907 288.1 L908 287.5 L909 287.4 L910 287.7 L911 287.2 L912 287.3 L913 287.6 L914 288.2 L915 287.9 L916 287.5 L917 287.8 L918 287.5 L919 288.2 L920 288.6 L921 288.6 L922 287.7 L923 288.5 L924 287.7 L925 287.9 L926 288.5 L927 288.2 L928 288.5 L929 287.9 L930 288.2 L931 288.2 L932 287.8 L933 288.1 L934 287.7 L935 288.0 L936 289.6 L937 290.6 L938 289.4 L939 293.1 L940 294.2 L941 294.9 L942 295.8 L943 299.0 L944 298.9 L945 298.9 L946 298.8 L947 298.8 L948 298.8 L949 298.7 L950 298.8 L951 298.8 L952 298.8 L953 298.6 L954 298.5 L955 298.4 L956 298.5 L957 298.4 L958 298.4 L959 298.4 L960 298.3 L961 298.2 L962 298.1 L963 297.9 L964 298.0 L965 289.0 L966 289.9 L967 290.0 L968 290.6 L969 291.0 L970 290.8 L971 290.4 L972 290.9 L973 290.2 L974 296.4 L975 296.3 L976 296.5 L977 296.4 L978 296.5 L979 296.7 L980 291.0 L981 291.0 L982 291.4 L983 289.6 L984 290.9 L985 290.3 L986 287.8 L987 290.6 L988 290.6 L989 290.4 L990 290.4 L991 290.8 L992 290.9 L993 290.6 L994 290.7 L995 290.6 L996 290.2 L997 290.6 L998 290.3 L999 290.9 L1000 290.9 L1001 290.5 L1002 290.6 L1003 290.9 L1004 291.0 L1005 290.4 L1006 298.0 L1007 298.5 L1008 298.5 L1009 298.5 L1010 295.3 L1011 295.3 L1012 295.2 L1013 295.4 L1014 295.4 L1015 294.0 L1016 295.2 L1017 295.2 L1018 295.5 L1019 295.7 L1020 295.5 L1021 295.3 L1022 295.0 L1023 295.1 L1024 295.1 L1025 295.1 L1026 295.1 L1027 295.1 L1028 294.9 L1029 294.9 L1030 295.1 L1031 295.3 L1032 294.9 L1033 294.5 L1034 294.7 L1035 294.7 L1036 294.9 L1037 294.6 L1038 294.4 L1039 294.3 L1040 294.7 L1041 294.9 L1042 295.0 L1043 293.3 L1044 294.4 L1045 294.2 L1046 294.4 L1047 294.5 L1048 294.5 L1049 294.3 L1050 294.5 L1051 294.4 L1052 294.0 L1053 293.9 L1054 294.1 L1055 294.1 L1056 294.0 L1057 293.9 L1058 294.3 L1059 293.8 L1060 293.9 L1061 294.2 L1062 294.0 L1063 293.8 L1064 293.7 L1065 293.7 L1066 293.3 L1067 293.6 L1068 293.2 L1069 293.5 L1070 293.2 L1071 293.7 L1072 293.7 L1073 293.9 L1074 291.9 L1075 293.8 L1076 293.8 L1077 293.7 L1078 293.5 L1079 293.2 L1080 293.3 L1081 292.9 L1082 293.2 L1083 293.2 L1084 292.7 L1085 293.2 L1086 293.2 L1087 290.3 L1088 292.9 L1089 292.6 L1090 292.5 L1091 292.4 L1092 292.9 L1093 293.1 L1094 293.2 L1095 293.1 L1096 292.6 L1097 290.1 L1098 292.6 L1099 292.7 L1100 292.8 L1101 292.9 L1102 292.8 L1103 292.7 L1104 292.5 L1105 292.3 L1106 292.7 L1107 292.1 L1108 292.4 L1109 290.7 L1110 292.7 L1111 292.8 L1112 292.7 L1113 292.5 L1114 291.7 L1115 291.4 L1116 291.3 L1117 292.0 L1118 291.7 L1119 291.8 L1120 289.6 L1121 291.5 L1122 298.4 L1123 297.7 L1124 298.5 L1125 298.6 L1126 298.5 L1127 298.5 L1128 290.0 L1129 290.8 L1130 291.3 L1131 291.5 L1132 290.7 L1133 290.8 L1134 290.8 L1135 291.4 L1136 291.2 L1137 290.6 L1138 291.0 L1139 290.8 L1140 290.5 L1141 291.1 L1142 290.8 L1143 290.4 L1144 290.7 L1145 291.0 L1146 291.2 L1147 287.3 L1148 290.9 L1149 291.5 L1150 288.1 L1151 291.5 L1152 291.4 L1153 290.9 L1154 290.5 L1155 291.3 L1156 291.1 L1157 291.0 L1158 291.4 L1159 291.6 L1160 291.5 L1161 291.6 L1162 291.3 L1163 289.3 L1164 291.6 L1165 291.5 L1166 291.1 L1167 290.8 L1168 291.4 L1169 291.5 L1170 291.1 L1171 290.8 L1172 291.4 L1173 291.2 L1174 291.7 L1175 292.2 L1176 292.1 L1177 292.0 L1178 292.0 L1179 291.4 L1180 291.8 L1181 291.8 L1182 291.9 L1183 297.5 L1184 297.4 L1185 297.4 L1186 291.6 L1187 292.0 L1188 291.7 L1189 291.3 L1190 290.7 L1191 290.8 L1192 286.8 L1193 290.9 L1194 290.9 L1195 290.4 L1196 290.1 L1197 290.2 L1198 290.0 L1199 290.1 L1200 289.6 L1201 290.0 L1202 290.0 L1203 289.3 L1204 289.5 L1205 289.4 L1206 289.2 L1207 289.0 L1208 299.0 L1209 299.0 L1210 299.0 L1211 294.2 L1212 294.4 L1213 294.8 L1214 294.6 L1215 292.9 L1216 294.7 L1217 294.6 L1218 294.6 L1219 294.5 L1220 294.4 L1221 294.5 L1222 294.2 L1223 294.4 L1224 294.4 L1225 294.4 L1226 294.5 L1227 294.8 L1228 299.5 L1229 299.5 L1230 299.5 L1231 294.8 L1232 293.6 L1233 294.9 L1234 294.9 L1235 294.8 L1236 294.6 L1237 294.4 L1238 294.7 L1239 295.0 L1240 295.1 L1241 295.0 L1242 294.7 L1243 299.5 L1244 299.5 L1245 295.8 L1246 295.6 L1247 295.4 L1248 295.8 L1249 295.8 L1250 295.6 L1251 295.5 L1252 295.2 L1253 299.4 L1254 299.5 L1255 294.2 L1256 293.0 L1257 294.9 L1258 294.8 L1259 294.6 L1260 294.3 L1261 292.8 L1262 294.5 L1263 294.4 L1264 294.2 L1265 294.6 L1266 299.5 L1267 299.5 L1268 299.5 L1269 294.4 L1270 294.4 L1271 294.5 L1272 294.7 L1273 294.8 L1274 294.4 L1275 294.7 L1276 294.8 L1277 293.2 L1278 294.8 L1279 294.5 L1280 299.5 L1281 299.6 L1282 299.5 L1283 301.4 L1282 301.5 L1281 301.5 L1280 306.5 L1279 306.6 L1278 308.2 L1277 306.4 L1276 306.4 L1275 306.5 L1274 306.6 L1273 306.4 L1272 306.8 L1271 306.4 L1270 306.5 L1269 301.5 L1268 301.5 L1267 301.4 L1266 306.3 L1265 306.3 L1264 306.4 L1263 306.9 L1262 306.5 L1261 308.8 L1260 306.4 L1259 308.1 L1258 307.0 L1257 306.9 L1256 306.7 L1255 301.6 L1254 301.6 L1253 305.6 L1252 305.3 L1251 305.3 L1250 305.6 L1249 305.5 L1248 305.7 L1247 305.4 L1246 305.5 L1245 301.6 L1244 301.6 L1243 306.7 L1242 306.5 L1241 306.8 L1240 306.5 L1239 306.7 L1238 306.6 L1237 306.3 L1236 308.2 L1235 306.7 L1234 306.6 L1233 308.1 L1232 306.8 L1231 301.5 L1230 301.6 L1229 301.5 L1228 306.7 L1227 306.3 L1226 306.3 L1225 306.8 L1224 306.6 L1223 306.1 L1222 306.5 L1221 306.3 L1220 306.3 L1219 306.5 L1218 306.7 L1217 306.4 L1216 306.3 L1215 306.7 L1214 306.7 L1213 306.3 L1212 306.1 L1211 302.0 L1210 302.0 L1209 302.0 L1208 312.8 L1207 312.5 L1206 311.7 L1205 311.6 L1204 312.1 L1203 311.5 L1202 311.3 L1201 311.7 L1200 311.7 L1199 310.8 L1198 310.6 L1197 310.9 L1196 311.3 L1195 311.0 L1194 310.5 L1193 312.6 L1192 310.0 L1191 309.8 L1190 310.3 L1189 310.3 L1188 309.7 L1187 309.4 L1186 303.6 L1185 303.3 L1184 303.3 L1183 308.9 L1182 309.3 L1181 309.7 L1180 311.8 L1179 309.7 L1178 309.2 L1177 309.3 L1176 309.7 L1175 309.4 L1174 309.4 L1173 309.3 L1172 309.6 L1171 309.5 L1170 309.5 L1169 309.2 L1168 309.1 L1167 309.2 L1166 309.4 L1165 309.5 L1164 309.6 L1163 309.8 L1162 310.6 L1161 310.3 L1160 309.9 L1159 310.3 L1158 309.6 L1157 310.2 L1156 310.5 L1155 310.4 L1154 310.3 L1153 309.8 L1152 309.8 L1151 310.1 L1150 310.5 L1149 310.0 L1148 309.6 L1147 310.1 L1146 310.3 L1145 310.7 L1144 310.5 L1143 310.5 L1142 310.1 L1141 310.9 L1140 310.7 L1139 310.5 L1138 310.3 L1137 309.7 L1136 310.2 L1135 310.5 L1134 310.6 L1133 310.4 L1132 310.6 L1131 310.8 L1130 310.7 L1129 313.4 L1128 302.5 L1127 302.4 L1126 302.5 L1125 303.4 L1124 302.6 L1123 302.6 L1122 309.8 L1121 309.7 L1120 309.7 L1119 312.7 L1118 309.6 L1117 309.3 L1116 309.1 L1115 309.7 L1114 309.3 L1113 309.5 L1112 309.3 L1111 309.2 L1110 309.3 L1109 309.1 L1108 308.8 L1107 308.9 L1106 308.5 L1105 308.8 L1104 309.1 L1103 308.5 L1102 308.2 L1101 308.2 L1100 308.3 L1099 311.8 L1098 309.2 L1097 308.9 L1096 308.7 L1095 308.1 L1094 308.5 L1093 308.1 L1092 307.9 L1091 308.0 L1090 308.2 L1089 307.8 L1088 308.1 L1087 308.0 L1086 308.3 L1085 311.0 L1084 308.5 L1083 308.3 L1082 308.2 L1081 309.8 L1080 308.1 L1079 308.2 L1078 308.3 L1077 308.1 L1076 307.8 L1075 307.8 L1074 307.9 L1073 307.9 L1072 307.3 L1071 307.7 L1070 307.8 L1069 309.0 L1068 307.4 L1067 307.5 L1066 307.4 L1065 307.5 L1064 307.4 L1063 307.6 L1062 307.6 L1061 307.1 L1060 307.3 L1059 307.8 L1058 307.8 L1057 307.7 L1056 307.6 L1055 307.3 L1054 307.5 L1053 307.6 L1052 307.5 L1051 307.2 L1050 307.4 L1049 307.3 L1048 307.1 L1047 306.9 L1046 306.5 L1045 306.8 L1044 306.6 L1043 306.5 L1042 306.7 L1041 306.4 L1040 306.5 L1039 306.5 L1038 306.7 L1037 306.6 L1036 306.3 L1035 306.5 L1034 306.4 L1033 306.6 L1032 306.6 L1031 306.4 L1030 305.9 L1029 306.1 L1028 306.0 L1027 306.3 L1026 306.4 L1025 307.5 L1024 306.0 L1023 306.1 L1022 305.7 L1021 305.7 L1020 305.9 L1019 307.6 L1018 306.0 L1017 306.2 L1016 306.1 L1015 305.9 L1014 305.7 L1013 305.4 L1012 305.5 L1011 307.7 L1010 302.5 L1009 302.4 L1008 302.4 L1007 302.5 L1006 310.5 L1005 312.5 L1004 310.6 L1003 310.5 L1002 310.8 L1001 310.9 L1000 312.9 L999 310.9 L998 311.0 L997 310.4 L996 311.2 L995 311.2 L994 311.3 L993 311.1 L992 311.3 L991 311.0 L990 310.5 L989 310.3 L988 310.7 L987 310.8 L986 310.3 L985 310.4 L984 310.3 L983 314.6 L982 310.2 L981 311.0 L980 304.5 L979 304.4 L978 304.5 L977 304.4 L976 304.5 L975 304.6 L974 310.8 L973 311.1 L972 310.5 L971 310.6 L970 310.7 L969 311.2 L968 311.4 L967 311.1 L966 311.5 L965 302.9 L964 303.0 L963 302.8 L962 302.8 L961 302.7 L960 302.7 L959 302.6 L958 302.5 L957 302.4 L956 302.4 L955 302.3 L954 302.4 L953 302.3 L952 302.2 L951 302.2 L950 302.2 L949 302.2 L948 302.1 L947 302.2 L946 302.0 L945 302.0 L944 302.4 L943 305.6 L942 306.5 L941 307.6 L940 308.7 L939 310.1 L938 310.8 L937 311.4 L936 314.0 L935 317.8 L934 314.3 L933 314.4 L932 318.4 L931 313.7 L930 313.8 L929 313.9 L928 314.5 L927 314.7 L926 314.5 L925 318.7 L924 313.3 L923 313.6 L922 313.0 L921 313.2 L920 316.7 L919 312.7 L918 313.0 L917 312.6 L916 312.6 L915 312.7 L914 318.0 L913 313.0 L912 313.6 L911 314.0 L910 314.4 L909 313.9 L908 313.7 L907 313.1 L906 312.5 L905 312.8 L904 312.5 L903 312.9 L902 313.5 L901 312.8 L900 312.2 L899 312.2 L898 311.8 L897 312.0 L896 312.5 L895 311.6 L894 311.5 L893 311.0 L892 311.1 L891 311.3 L890 310.5 L889 310.5 L888 313.8 L887 310.6 L886 310.3 L885 310.0 L884 310.4 L883 310.4 L882 309.8 L881 309.6 L880 309.5 L879 309.1 L878 308.9 L877 308.8 L876 308.3 L875 308.4 L874 307.8 L873 308.1 L872 307.9 L871 307.7 L870 307.6 L869 307.7 L868 303.6 L867 303.5 L866 303.4 L865 303.5 L864 303.5 L863 303.3 L862 304.0 L861 303.4 L860 303.3 L859 303.3 L858 304.0 L857 303.3 L856 303.1 L855 303.1 L854 303.2 L853 303.3 L852 303.9 L851 303.3 L850 303.2 L849 303.1 L848 302.9 L847 303.7 L846 302.9 L845 303.0 L844 303.1 L843 313.0 L842 313.5 L841 313.7 L840 313.3 L839 313.1 L838 313.4 L837 317.3 L836 313.4 L835 312.9 L834 313.3 L833 313.8 L832 313.5 L831 314.0 L830 313.4 L829 312.9 L828 313.4 L827 313.4 L826 313.5 L825 313.7 L824 313.8 L823 313.5 L822 314.8 L821 312.2 L820 312.3 L819 312.6 L818 312.7 L817 316.3 L816 317.5 L815 313.4 L814 313.6 L813 312.8 L812 312.0 L811 312.2 L810 312.5 L809 312.3 L808 312.0 L807 314.5 L806 312.0 L805 312.0 L804 315.5 L803 312.5 L802 313.0 L801 313.5 L800 312.7 L799 312.1 L798 312.6 L797 312.3 L796 312.5 L795 312.2 L794 312.2 L793 313.0 L792 312.9 L791 312.7 L790 313.4 L789 313.3 L788 312.3 L787 312.3 L786 312.9 L785 312.5 L784 312.3 L783 313.1 L782 312.5 L781 312.1 L780 312.9 L779 312.0 L778 312.4 L777 313.6 L776 313.1 L775 313.2 L774 312.5 L773 312.1 L772 312.6 L771 312.9 L770 311.9 L769 312.2 L768 312.3 L767 303.6 L766 303.6 L765 314.8 L764 314.5 L763 314.6 L762 313.9 L761 314.3 L760 314.3 L759 314.1 L758 315.1 L757 315.1 L756 314.6 L755 313.8 L754 314.5 L753 314.1 L752 314.1 L751 314.1 L750 314.3 L749 314.9 L748 314.9 L747 314.9 L746 314.5 L745 314.0 L744 313.6 L743 314.4 L742 313.4 L741 313.9 L740 314.4 L739 313.9 L738 314.4 L737 313.4 L736 312.6 L735 313.0 L734 313.7 L733 314.7 L732 314.1 L731 313.2 L730 312.9 L729 313.5 L728 314.3 L727 313.5 L726 313.5 L725 312.8 L724 317.3 L723 314.2 L722 313.7 L721 313.1 L720 303.6 L719 303.4 L718 304.6 L717 313.1 L716 313.4 L715 313.7 L714 313.7 L713 313.6 L712 312.8 L711 313.0 L710 314.0 L709 313.7 L708 313.5 L707 312.7 L706 313.0 L705 312.8 L704 312.7 L703 312.1 L702 311.9 L701 312.2 L700 312.0 L699 311.7 L698 311.4 L697 311.5 L696 311.6 L695 311.5 L694 311.8 L693 317.2 L692 312.4 L691 312.2 L690 311.4 L689 311.5 L688 311.7 L687 311.6 L686 311.3 L685 311.9 L684 311.0 L683 311.8 L682 311.2 L681 311.8 L680 311.0 L679 310.7 L678 310.6 L677 310.5 L676 310.5 L675 310.4 L674 311.0 L673 310.8 L672 310.3 L671 310.5 L670 310.2 L669 310.8 L668 310.4 L667 309.9 L666 309.6 L665 309.9 L664 309.8 L663 309.9 L662 310.0 L661 309.5 L660 309.6 L659 309.6 L658 310.0 L657 310.6 L656 310.3 L655 310.2 L654 309.8 L653 310.2 L652 310.1 L651 312.9 L650 309.3 L649 309.5 L648 308.9 L647 309.0 L646 309.6 L645 309.5 L644 309.6 L643 309.4 L642 308.8 L641 308.8 L640 308.0 L639 307.9 L638 308.0 L637 308.1 L636 308.4 L635 312.0 L634 308.9 L633 308.5 L632 308.0 L631 308.1 L630 308.2 L629 308.2 L628 308.1 L627 307.5 L626 309.9 L625 307.8 L624 307.3 L623 307.4 L622 307.6 L621 307.2 L620 307.4 L619 307.7 L618 302.6 L617 302.5 L616 302.4 L615 313.8 L614 313.4 L613 313.2 L612 313.3 L611 312.5 L610 312.8 L609 312.4 L608 312.3 L607 312.7 L606 312.7 L605 313.3 L604 314.0 L603 314.2 L602 314.0 L601 314.1 L600 313.2 L599 312.9 L598 312.7 L597 313.2 L596 313.7 L595 313.0 L594 313.3 L593 314.1 L592 313.8 L591 316.9 L590 312.8 L589 313.4 L588 314.0 L587 314.4 L586 313.8 L585 313.5 L584 313.1 L583 312.9 L582 313.0 L581 314.0 L580 313.1 L579 312.9 L578 313.1 L577 312.7 L576 313.0 L575 312.4 L574 312.8 L573 313.7 L572 314.4 L571 313.8 L570 313.7 L569 313.8 L568 313.6 L567 312.9 L566 313.1 L565 313.6 L564 312.5 L563 312.7 L562 312.7 L561 317.3 L560 313.2 L559 312.4 L558 312.7 L557 312.7 L556 312.8 L555 313.4 L554 313.1 L553 312.5 L552 312.9 L551 313.3 L550 312.3 L549 312.6 L548 303.4 L547 303.5 L546 303.6 L545 312.5 L544 312.9 L543 312.7 L542 312.1 L541 311.6 L540 312.1 L539 311.7 L538 312.0 L537 311.1 L536 311.4 L535 311.9 L534 312.1 L533 311.6 L532 311.4 L531 312.1 L530 312.2 L529 311.5 L528 312.1 L527 312.1 L526 313.8 L525 311.7 L524 311.6 L523 311.8 L522 311.1 L521 311.4 L520 311.0 L519 311.2 L518 311.7 L517 311.1 L516 310.8 L515 311.2 L514 311.0 L513 310.4 L512 311.1 L511 310.9 L510 310.9 L509 311.0 L508 310.9 L507 310.6 L506 310.1 L505 310.2 L504 310.2 L503 313.7 L502 313.6 L501 310.5 L500 313.7 L499 309.7 L498 310.2 L497 312.5 L496 309.7 L495 309.2 L494 309.7 L493 309.2 L492 309.0 L491 309.4 L490 309.4 L489 308.9 L488 309.3 L487 308.8 L486 309.0 L485 309.1 L484 308.7 L483 308.6 L482 309.0 L481 311.3 L480 309.0 L479 309.3 L478 309.0 L477 309.2 L476 309.0 L475 308.5 L474 309.1 L473 303.0 L472 302.4 L471 302.5 L470 314.4 L469 314.0 L468 313.8 L467 313.6 L466 313.0 L465 313.5 L464 313.0 L463 314.0 L462 313.6 L461 313.7 L460 313.4 L459 317.7 L458 312.6 L457 312.8 L456 312.0 L455 312.2 L454 312.5 L453 313.4 L452 313.1 L451 312.5 L450 312.6 L449 312.8 L448 313.7 L447 313.5 L446 313.3 L445 312.7 L444 312.8 L443 312.6 L442 313.3 L441 313.7 L440 313.5 L439 312.8 L438 312.4 L437 313.1 L436 312.7 L435 313.3 L434 312.8 L433 312.5 L432 312.7 L431 312.5 L430 312.9 L429 313.2 L428 312.5 L427 313.5 L426 313.1 L425 315.0 L424 312.8 L423 313.0Z" fill="#2a463b"/><path d="M422 200.5H1283M422 300.5H1283" stroke="#1a2a22" stroke-width="1"/><path d="M426 84.8 L427 85.2 L428 84.8 L429 85.0 L430 85.0 L431 85.0 L432 85.0 L433 84.7 L434 84.8 L435 84.8 L436 84.8 L437 84.9 L438 85.2 L439 85.2 L440 84.8 L441 84.9 L442 84.9 L443 85.1 L444 85.1 L445 84.7 L446 84.9 L447 85.2 L448 85.0 L449 85.0 L450 85.2 L451 84.7 L452 84.7 L453 84.8 L454 85.2 L455 85.0 L456 85.1 L457 84.8 L458 84.8 L459 84.8 L460 84.8 L461 85.1 L462 85.2 L463 85.1 L464 84.7 L465 84.7 L466 84.9 L467 85.1 L468 84.7 L469 85.1 L470 86.0 L471 86.0 L472 86.0 L473 85.4 L474 85.3 L475 85.3 L476 85.4 L477 85.2 L478 85.3 L479 85.2 L480 85.2 L481 85.5 L482 85.3 L483 85.4 L484 85.4 L485 85.4 L486 85.2 L487 85.5 L488 85.3 L489 85.4 L490 85.1 L491 85.3 L492 85.2 L493 85.3 L494 85.2 L495 85.3 L496 85.3 L497 85.2 L498 85.2 L499 85.1 L500 85.3 L501 85.1 L502 85.1 L503 85.2 L504 85.3 L505 85.2 L506 85.4 L507 85.4 L508 85.3 L509 85.4 L510 85.4 L511 85.1 L512 85.1 L513 85.1 L514 85.3 L515 85.1 L516 85.0 L517 85.1 L518 85.3 L519 85.1 L520 85.2 L521 85.2 L522 85.3 L523 85.0 L524 85.1 L525 84.9 L526 85.3 L527 85.2 L528 85.1 L529 85.3 L530 85.2 L531 85.1 L532 85.1 L533 84.9 L534 85.0 L535 85.0 L536 85.0 L537 84.9 L538 85.1 L539 85.3 L540 84.8 L541 84.9 L542 85.2 L543 85.2 L544 85.1 L545 85.9 L546 85.9 L547 85.9 L548 84.9 L549 85.2 L550 85.0 L551 85.0 L552 85.1 L553 85.2 L554 85.0 L555 85.0 L556 85.0 L557 84.9 L558 85.0 L559 85.0 L560 85.2 L561 84.7 L562 84.8 L563 84.9 L564 85.2 L565 85.0 L566 84.7 L567 84.9 L568 85.1 L569 84.7 L570 84.7 L571 85.1 L572 84.9 L573 84.9 L574 85.1 L575 85.0 L576 84.8 L577 84.8 L578 84.8 L579 84.8 L580 85.0 L581 85.1 L582 85.2 L583 84.7 L584 84.7 L585 84.7 L586 85.1 L587 84.8 L588 85.1 L589 85.0 L590 85.1 L591 84.7 L592 84.7 L593 84.7 L594 85.0 L595 84.7 L596 85.0 L597 84.9 L598 84.8 L599 85.0 L600 85.0 L601 85.1 L602 84.7 L603 85.1 L604 85.1 L605 85.0 L606 84.8 L607 84.8 L608 84.9 L609 84.7 L610 84.8 L611 85.1 L612 84.9 L613 85.1 L614 85.0 L615 86.0 L616 86.0 L617 86.0 L618 85.4 L619 85.5 L620 85.6 L621 85.6 L622 85.5 L623 85.5 L624 85.6 L625 85.6 L626 85.4 L627 85.4 L628 85.6 L629 85.4 L630 85.5 L631 85.4 L632 85.4 L633 85.5 L634 85.3 L635 85.4 L636 85.4 L637 85.4 L638 85.3 L639 85.2 L640 85.3 L641 85.3 L642 85.3 L643 85.3 L644 85.2 L645 85.2 L646 85.2 L647 85.4 L648 85.3 L649 85.3 L650 85.4 L651 85.2 L652 85.4 L653 85.2 L654 85.3 L655 85.3 L656 85.2 L657 85.2 L658 85.1 L659 85.1 L660 85.1 L661 85.3 L662 85.2 L663 85.2 L664 85.0 L665 85.2 L666 85.3 L667 85.4 L668 85.2 L669 85.2 L670 85.3 L671 85.3 L672 85.2 L673 85.3 L674 85.3 L675 85.2 L676 85.2 L677 85.1 L678 85.1 L679 85.2 L680 85.3 L681 85.3 L682 85.1 L683 84.9 L684 85.2 L685 85.2 L686 85.2 L687 85.0 L688 85.1 L689 84.9 L690 85.3 L691 85.2 L692 85.2 L693 85.1 L694 85.1 L695 85.1 L696 84.8 L697 85.1 L698 85.0 L699 84.8 L700 84.9 L701 84.9 L702 84.8 L703 85.1 L704 85.2 L705 84.7 L706 84.9 L707 84.9 L708 85.2 L709 84.8 L710 85.0 L711 84.9 L712 85.0 L713 84.7 L714 85.0 L715 85.0 L716 84.7 L717 85.9 L718 85.9 L719 85.9 L720 84.6 L721 85.1 L722 85.1 L723 84.7 L724 85.1 L725 84.9 L726 84.7 L727 84.8 L728 84.7 L729 85.1 L730 84.7 L731 85.0 L732 84.7 L733 84.9 L734 84.6 L735 84.9 L736 85.0 L737 85.1 L738 84.9 L739 85.1 L740 85.0 L741 84.6 L742 84.8 L743 84.6 L744 85.0 L745 84.9 L746 84.9 L747 85.1 L748 85.0 L749 84.6 L750 84.7 L751 84.8 L752 84.8 L753 84.6 L754 84.6 L755 84.8 L756 85.1 L757 84.6 L758 85.0 L759 85.0 L760 85.0 L761 84.8 L762 84.8 L763 84.8 L764 84.8 L765 85.9 L766 85.9 L767 85.0 L768 85.1 L769 84.8 L770 84.8 L771 84.8 L772 84.7 L773 85.2 L774 85.0 L775 85.0 L776 85.1 L777 84.9 L778 84.8 L779 85.2 L780 85.0 L781 84.7 L782 84.8 L783 85.0 L784 85.2 L785 85.0 L786 85.0 L787 84.8 L788 85.1 L789 85.1 L790 84.7 L791 85.2 L792 84.9 L793 85.2 L794 84.8 L795 85.0 L796 84.7 L797 85.1 L798 84.8 L799 85.1 L800 85.2 L801 85.2 L802 85.2 L803 85.0 L804 84.7 L805 85.0 L806 84.8 L807 85.2 L808 84.9 L809 84.9 L810 85.2 L811 84.9 L812 85.0 L813 85.0 L814 84.8 L815 84.8 L816 85.1 L817 85.1 L818 85.2 L819 85.1 L820 84.9 L821 84.7 L822 84.7 L823 84.7 L824 85.1 L825 84.8 L826 84.8 L827 84.9 L828 84.7 L829 84.9 L830 85.1 L831 85.1 L832 85.1 L833 84.9 L834 84.8 L835 84.7 L836 85.2 L837 85.2 L838 84.6 L839 85.0 L840 85.0 L841 84.7 L842 85.1 L843 85.9 L844 85.9 L845 85.9 L846 85.9 L847 86.0 L848 85.9 L849 85.9 L850 85.9 L851 85.9 L852 85.9 L853 85.9 L854 85.9 L855 85.9 L856 85.9 L857 85.9 L858 85.9 L859 85.9 L860 85.9 L861 85.9 L862 85.9 L863 85.9 L864 85.9 L865 85.9 L866 85.9 L867 85.9 L868 85.5 L869 85.4 L870 85.4 L871 85.5 L872 85.4 L873 85.5 L874 85.4 L875 85.3 L876 85.5 L877 85.4 L878 85.4 L879 85.3 L880 85.2 L881 85.3 L882 85.2 L883 85.3 L884 85.3 L885 85.2 L886 85.2 L887 85.3 L888 85.1 L889 85.2 L890 85.2 L891 85.2 L892 85.0 L893 84.9 L894 84.9 L895 85.2 L896 85.3 L897 85.0 L898 85.2 L899 84.8 L900 84.9 L901 85.0 L902 85.0 L903 84.8 L904 85.1 L905 85.0 L906 84.7 L907 84.8 L908 84.9 L909 85.1 L910 85.1 L911 85.0 L912 85.2 L913 84.8 L914 84.9 L915 84.7 L916 84.9 L917 84.7 L918 84.9 L919 84.9 L920 85.0 L921 84.9 L922 84.7 L923 84.9 L924 85.2 L925 85.0 L926 85.1 L927 84.8 L928 84.9 L929 84.9 L930 84.7 L931 84.8 L932 85.1 L933 85.2 L934 84.8 L935 84.8 L936 85.0 L937 85.2 L938 85.5 L939 85.4 L940 85.4 L941 85.6 L942 85.8 L943 86.0 L944 86.0 L945 86.0 L946 86.0 L947 86.0 L948 86.0 L949 86.0 L950 86.0 L951 86.0 L952 86.0 L953 86.0 L954 86.0 L955 86.0 L956 86.0 L957 86.0 L958 86.0 L959 86.0 L960 86.0 L961 86.0 L962 86.0 L963 86.0 L964 85.9 L965 85.3 L966 85.1 L967 85.3 L968 85.2 L969 85.3 L970 85.2 L971 85.4 L972 85.1 L973 85.1 L974 85.8 L975 85.8 L976 85.8 L977 85.8 L978 85.8 L979 85.8 L980 85.2 L981 85.4 L982 85.1 L983 85.3 L984 85.0 L985 85.2 L986 85.0 L987 85.2 L988 85.3 L989 85.1 L990 85.1 L991 85.2 L992 85.3 L993 85.2 L994 85.1 L995 85.3 L996 85.3 L997 85.2 L998 85.1 L999 85.4 L1000 85.3 L1001 85.0 L1002 85.3 L1003 85.1 L1004 85.3 L1005 85.4 L1006 86.0 L1007 86.0 L1008 86.0 L1009 86.0 L1010 85.7 L1011 85.7 L1012 85.7 L1013 85.7 L1014 85.7 L1015 85.7 L1016 85.6 L1017 85.7 L1018 85.7 L1019 85.6 L1020 85.7 L1021 85.7 L1022 85.6 L1023 85.7 L1024 85.7 L1025 85.6 L1026 85.7 L1027 85.7 L1028 85.7 L1029 85.5 L1030 85.6 L1031 85.6 L1032 85.7 L1033 85.5 L1034 85.7 L1035 85.6 L1036 85.6 L1037 85.6 L1038 85.6 L1039 85.6 L1040 85.5 L1041 85.6 L1042 85.5 L1043 85.5 L1044 85.6 L1045 85.6 L1046 85.6 L1047 85.7 L1048 85.5 L1049 85.5 L1050 85.6 L1051 85.5 L1052 85.5 L1053 85.6 L1054 85.6 L1055 85.5 L1056 85.5 L1057 85.5 L1058 85.6 L1059 85.6 L1060 85.5 L1061 85.6 L1062 85.4 L1063 85.4 L1064 85.4 L1065 85.6 L1066 85.5 L1067 85.6 L1068 85.5 L1069 85.6 L1070 85.5 L1071 85.4 L1072 85.4 L1073 85.5 L1074 85.5 L1075 85.4 L1076 85.6 L1077 85.4 L1078 85.4 L1079 85.6 L1080 85.3 L1081 85.4 L1082 85.5 L1083 85.5 L1084 85.4 L1085 85.4 L1086 85.3 L1087 85.3 L1088 85.5 L1089 85.6 L1090 85.3 L1091 85.4 L1092 85.4 L1093 85.5 L1094 85.5 L1095 85.3 L1096 85.4 L1097 85.4 L1098 85.2 L1099 85.5 L1100 85.3 L1101 85.5 L1102 85.4 L1103 85.3 L1104 85.5 L1105 85.3 L1106 85.2 L1107 85.2 L1108 85.3 L1109 85.2 L1110 85.3 L1111 85.3 L1112 85.2 L1113 85.2 L1114 85.3 L1115 85.3 L1116 85.4 L1117 85.4 L1118 85.4 L1119 85.2 L1120 85.2 L1121 85.4 L1122 86.0 L1123 86.0 L1124 86.0 L1125 86.0 L1126 86.0 L1127 86.0 L1128 85.3 L1129 85.2 L1130 85.1 L1131 85.2 L1132 85.2 L1133 85.2 L1134 85.2 L1135 85.0 L1136 85.3 L1137 85.2 L1138 85.2 L1139 85.4 L1140 85.4 L1141 85.2 L1142 85.1 L1143 85.3 L1144 85.4 L1145 85.1 L1146 85.4 L1147 85.1 L1148 85.4 L1149 85.2 L1150 85.4 L1151 85.3 L1152 85.3 L1153 85.1 L1154 85.3 L1155 85.3 L1156 85.3 L1157 85.2 L1158 85.3 L1159 85.1 L1160 85.4 L1161 85.4 L1162 85.2 L1163 85.3 L1164 85.2 L1165 85.4 L1166 85.2 L1167 85.3 L1168 85.1 L1169 85.3 L1170 85.3 L1171 85.3 L1172 85.3 L1173 85.4 L1174 85.2 L1175 85.3 L1176 85.2 L1177 85.4 L1178 85.3 L1179 85.3 L1180 85.2 L1181 85.2 L1182 85.3 L1183 85.9 L1184 85.9 L1185 85.9 L1186 85.3 L1187 85.3 L1188 85.1 L1189 85.3 L1190 85.0 L1191 85.3 L1192 85.3 L1193 85.3 L1194 85.3 L1195 85.1 L1196 85.2 L1197 85.3 L1198 85.1 L1199 85.1 L1200 85.2 L1201 85.2 L1202 85.1 L1203 85.2 L1204 85.4 L1205 85.3 L1206 85.0 L1207 85.3 L1208 86.0 L1209 86.0 L1210 86.0 L1211 85.2 L1212 85.3 L1213 85.3 L1214 85.3 L1215 85.4 L1216 85.4 L1217 85.4 L1218 85.2 L1219 85.3 L1220 85.1 L1221 85.1 L1222 85.2 L1223 85.1 L1224 85.2 L1225 85.5 L1226 85.4 L1227 85.1 L1228 85.2 L1229 85.3 L1230 85.3 L1231 85.3 L1232 85.3 L1233 85.4 L1234 85.3 L1235 85.4 L1236 85.4 L1237 85.2 L1238 85.3 L1239 85.2 L1240 85.4 L1241 85.3 L1242 85.4 L1243 85.2 L1244 85.4 L1245 85.2 L1246 85.3 L1247 85.4 L1248 85.4 L1249 85.3 L1250 85.3 L1251 85.2 L1252 85.4 L1253 85.4 L1254 85.4 L1255 85.2 L1256 85.4 L1257 85.3 L1258 85.5 L1259 85.4 L1260 85.2 L1261 85.3 L1262 85.4 L1263 85.3 L1264 85.1 L1265 85.3 L1266 85.3 L1267 85.3 L1268 85.3 L1269 85.5 L1270 85.2 L1271 85.3 L1272 85.4 L1273 85.4 L1274 85.4 L1275 85.1 L1276 85.2 L1277 85.3 L1278 85.3 L1278 87.7 L1277 87.7 L1276 87.8 L1275 87.9 L1274 87.6 L1273 87.6 L1272 87.6 L1271 87.7 L1270 87.8 L1269 87.5 L1268 87.7 L1267 87.7 L1266 87.7 L1265 87.7 L1264 87.9 L1263 87.7 L1262 87.6 L1261 87.7 L1260 87.8 L1259 87.6 L1258 87.5 L1257 87.7 L1256 87.6 L1255 87.8 L1254 87.6 L1253 87.6 L1252 87.6 L1251 87.8 L1250 87.7 L1249 87.7 L1248 87.6 L1247 87.6 L1246 87.7 L1245 87.8 L1244 87.6 L1243 87.8 L1242 87.6 L1241 87.7 L1240 87.6 L1239 87.8 L1238 87.7 L1237 87.8 L1236 87.6 L1235 87.6 L1234 87.7 L1233 87.6 L1232 87.7 L1231 87.7 L1230 87.7 L1229 87.7 L1228 87.8 L1227 87.9 L1226 87.6 L1225 87.5 L1224 87.8 L1223 87.9 L1222 87.8 L1221 87.9 L1220 87.9 L1219 87.7 L1218 87.8 L1217 87.6 L1216 87.6 L1215 87.6 L1214 87.7 L1213 87.7 L1212 87.7 L1211 87.8 L1210 87.0 L1209 87.0 L1208 87.0 L1207 87.7 L1206 88.0 L1205 87.7 L1204 87.6 L1203 87.8 L1202 87.9 L1201 87.8 L1200 87.8 L1199 87.9 L1198 87.9 L1197 87.7 L1196 87.8 L1195 87.9 L1194 87.7 L1193 87.7 L1192 87.7 L1191 87.7 L1190 88.0 L1189 87.7 L1188 87.9 L1187 87.7 L1186 87.7 L1185 87.1 L1184 87.1 L1183 87.1 L1182 87.7 L1181 87.8 L1180 87.8 L1179 87.7 L1178 87.7 L1177 87.6 L1176 87.8 L1175 87.7 L1174 87.8 L1173 87.6 L1172 87.7 L1171 87.7 L1170 87.7 L1169 87.7 L1168 87.9 L1167 87.7 L1166 87.8 L1165 87.6 L1164 87.8 L1163 87.7 L1162 87.8 L1161 87.6 L1160 87.6 L1159 87.9 L1158 87.7 L1157 87.8 L1156 87.7 L1155 87.7 L1154 87.7 L1153 87.9 L1152 87.7 L1151 87.7 L1150 87.6 L1149 87.8 L1148 87.6 L1147 87.9 L1146 87.6 L1145 87.9 L1144 87.6 L1143 87.7 L1142 87.9 L1141 87.8 L1140 87.6 L1139 87.6 L1138 87.8 L1137 87.8 L1136 87.7 L1135 88.0 L1134 87.8 L1133 87.8 L1132 87.8 L1131 87.8 L1130 87.9 L1129 87.8 L1128 87.7 L1127 87.0 L1126 87.0 L1125 87.0 L1124 87.0 L1123 87.0 L1122 87.0 L1121 87.6 L1120 87.8 L1119 87.8 L1118 87.6 L1117 87.6 L1116 87.6 L1115 87.7 L1114 87.7 L1113 87.8 L1112 87.8 L1111 87.7 L1110 87.7 L1109 87.8 L1108 87.7 L1107 87.8 L1106 87.8 L1105 87.7 L1104 87.5 L1103 87.7 L1102 87.6 L1101 87.5 L1100 87.7 L1099 87.5 L1098 87.8 L1097 87.6 L1096 87.6 L1095 87.7 L1094 87.5 L1093 87.5 L1092 87.6 L1091 87.6 L1090 87.7 L1089 87.4 L1088 87.5 L1087 87.7 L1086 87.7 L1085 87.6 L1084 87.6 L1083 87.5 L1082 87.5 L1081 87.6 L1080 87.7 L1079 87.4 L1078 87.6 L1077 87.6 L1076 87.4 L1075 87.6 L1074 87.5 L1073 87.5 L1072 87.6 L1071 87.6 L1070 87.5 L1069 87.4 L1068 87.5 L1067 87.4 L1066 87.5 L1065 87.4 L1064 87.6 L1063 87.6 L1062 87.6 L1061 87.4 L1060 87.5 L1059 87.4 L1058 87.4 L1057 87.5 L1056 87.5 L1055 87.5 L1054 87.4 L1053 87.4 L1052 87.5 L1051 87.5 L1050 87.4 L1049 87.5 L1048 87.5 L1047 87.3 L1046 87.4 L1045 87.4 L1044 87.4 L1043 87.5 L1042 87.5 L1041 87.4 L1040 87.5 L1039 87.4 L1038 87.4 L1037 87.4 L1036 87.4 L1035 87.4 L1034 87.3 L1033 87.5 L1032 87.3 L1031 87.4 L1030 87.4 L1029 87.5 L1028 87.3 L1027 87.3 L1026 87.3 L1025 87.4 L1024 87.3 L1023 87.3 L1022 87.4 L1021 87.3 L1020 87.3 L1019 87.4 L1018 87.3 L1017 87.3 L1016 87.4 L1015 87.3 L1014 87.3 L1013 87.3 L1012 87.3 L1011 87.3 L1010 87.3 L1009 87.0 L1008 87.0 L1007 87.0 L1006 87.0 L1005 87.6 L1004 87.7 L1003 87.9 L1002 87.7 L1001 88.0 L1000 87.7 L999 87.6 L998 87.9 L997 87.8 L996 87.7 L995 87.7 L994 87.9 L993 87.8 L992 87.7 L991 87.8 L990 87.9 L989 87.9 L988 87.7 L987 87.8 L986 88.0 L985 87.8 L984 88.0 L983 87.7 L982 87.9 L981 87.6 L980 87.8 L979 87.2 L978 87.2 L977 87.2 L976 87.2 L975 87.2 L974 87.2 L973 87.9 L972 87.9 L971 87.6 L970 87.8 L969 87.7 L968 87.8 L967 87.7 L966 87.9 L965 87.7 L964 87.1 L963 87.0 L962 87.0 L961 87.0 L960 87.0 L959 87.0 L958 87.0 L957 87.0 L956 87.0 L955 87.0 L954 87.0 L953 87.0 L952 87.0 L951 87.0 L950 87.0 L949 87.0 L948 87.0 L947 87.0 L946 87.0 L945 87.0 L944 87.0 L943 87.0 L942 87.2 L941 87.4 L940 87.6 L939 87.6 L938 87.5 L937 87.8 L936 88.0 L935 88.2 L934 88.2 L933 87.8 L932 87.9 L931 88.2 L930 88.3 L929 88.1 L928 88.1 L927 88.2 L926 87.9 L925 88.0 L924 87.8 L923 88.1 L922 88.3 L921 88.1 L920 88.0 L919 88.1 L918 88.1 L917 88.3 L916 88.1 L915 88.3 L914 88.1 L913 88.2 L912 87.8 L911 88.0 L910 87.9 L909 87.9 L908 88.1 L907 88.2 L906 88.3 L905 88.0 L904 87.9 L903 88.2 L902 88.0 L901 88.0 L900 88.1 L899 88.2 L898 87.8 L897 88.0 L896 87.7 L895 87.8 L894 88.1 L893 88.1 L892 88.0 L891 87.8 L890 87.8 L889 87.8 L888 87.9 L887 87.7 L886 87.8 L885 87.8 L884 87.7 L883 87.7 L882 87.8 L881 87.7 L880 87.8 L879 87.7 L878 87.6 L877 87.6 L876 87.5 L875 87.7 L874 87.6 L873 87.5 L872 87.6 L871 87.5 L870 87.6 L869 87.6 L868 87.5 L867 87.1 L866 87.1 L865 87.1 L864 87.1 L863 87.1 L862 87.1 L861 87.1 L860 87.1 L859 87.1 L858 87.1 L857 87.1 L856 87.1 L855 87.1 L854 87.1 L853 87.1 L852 87.1 L851 87.1 L850 87.1 L849 87.1 L848 87.1 L847 87.0 L846 87.1 L845 87.1 L844 87.1 L843 87.1 L842 87.9 L841 88.3 L840 88.0 L839 88.0 L838 88.4 L837 87.8 L836 87.8 L835 88.3 L834 88.2 L833 88.1 L832 87.9 L831 87.9 L830 87.9 L829 88.1 L828 88.3 L827 88.1 L826 88.2 L825 88.2 L824 87.9 L823 88.3 L822 88.3 L821 88.3 L820 88.1 L819 87.9 L818 87.8 L817 87.9 L816 87.9 L815 88.2 L814 88.2 L813 88.0 L812 88.0 L811 88.1 L810 87.8 L809 88.1 L808 88.1 L807 87.8 L806 88.2 L805 88.0 L804 88.3 L803 88.0 L802 87.8 L801 87.8 L800 87.8 L799 87.9 L798 88.2 L797 87.9 L796 88.3 L795 88.0 L794 88.2 L793 87.8 L792 88.1 L791 87.8 L790 88.3 L789 87.9 L788 87.9 L787 88.2 L786 88.0 L785 88.0 L784 87.8 L783 88.0 L782 88.2 L781 88.3 L780 88.0 L779 87.8 L778 88.2 L777 88.1 L776 87.9 L775 88.0 L774 88.0 L773 87.8 L772 88.3 L771 88.2 L770 88.2 L769 88.2 L768 87.9 L767 88.0 L766 87.1 L765 87.1 L764 88.2 L763 88.2 L762 88.2 L761 88.2 L760 88.0 L759 88.0 L758 88.0 L757 88.4 L756 87.9 L755 88.2 L754 88.4 L753 88.4 L752 88.2 L751 88.2 L750 88.3 L749 88.4 L748 88.0 L747 87.9 L746 88.1 L745 88.1 L744 88.0 L743 88.4 L742 88.2 L741 88.4 L740 88.0 L739 87.9 L738 88.1 L737 87.9 L736 88.0 L735 88.1 L734 88.4 L733 88.1 L732 88.3 L731 88.0 L730 88.3 L729 87.9 L728 88.3 L727 88.2 L726 88.3 L725 88.1 L724 87.9 L723 88.3 L722 87.9 L721 87.9 L720 88.4 L719 87.1 L718 87.1 L717 87.1 L716 88.3 L715 88.0 L714 88.0 L713 88.3 L712 88.0 L711 88.1 L710 88.0 L709 88.2 L708 87.8 L707 88.1 L706 88.1 L705 88.3 L704 87.8 L703 87.9 L702 88.2 L701 88.1 L700 88.1 L699 88.2 L698 88.0 L697 87.9 L696 88.2 L695 87.9 L694 87.9 L693 87.9 L692 87.8 L691 87.8 L690 87.7 L689 88.1 L688 87.9 L687 88.0 L686 87.8 L685 87.8 L684 87.8 L683 88.1 L682 87.9 L681 87.7 L680 87.7 L679 87.8 L678 87.9 L677 87.9 L676 87.8 L675 87.8 L674 87.7 L673 87.7 L672 87.8 L671 87.7 L670 87.7 L669 87.8 L668 87.8 L667 87.6 L666 87.7 L665 87.8 L664 88.0 L663 87.8 L662 87.8 L661 87.7 L660 87.9 L659 87.9 L658 87.9 L657 87.8 L656 87.8 L655 87.7 L654 87.7 L653 87.8 L652 87.6 L651 87.8 L650 87.6 L649 87.7 L648 87.7 L647 87.6 L646 87.8 L645 87.8 L644 87.8 L643 87.7 L642 87.7 L641 87.7 L640 87.7 L639 87.8 L638 87.7 L637 87.6 L636 87.6 L635 87.6 L634 87.7 L633 87.5 L632 87.6 L631 87.6 L630 87.5 L629 87.6 L628 87.4 L627 87.6 L626 87.6 L625 87.4 L624 87.4 L623 87.5 L622 87.5 L621 87.4 L620 87.4 L619 87.5 L618 87.6 L617 87.0 L616 87.0 L615 87.0 L614 88.0 L613 87.9 L612 88.1 L611 87.9 L610 88.2 L609 88.3 L608 88.1 L607 88.2 L606 88.2 L605 88.0 L604 87.9 L603 87.9 L602 88.3 L601 87.9 L600 88.0 L599 88.0 L598 88.2 L597 88.1 L596 88.0 L595 88.3 L594 88.0 L593 88.3 L592 88.3 L591 88.3 L590 87.9 L589 88.0 L588 87.9 L587 88.2 L586 87.9 L585 88.3 L584 88.3 L583 88.3 L582 87.8 L581 87.9 L580 88.0 L579 88.2 L578 88.2 L577 88.2 L576 88.2 L575 88.0 L574 87.9 L573 88.1 L572 88.1 L571 87.9 L570 88.3 L569 88.3 L568 87.9 L567 88.1 L566 88.3 L565 88.0 L564 87.8 L563 88.1 L562 88.2 L561 88.3 L560 87.8 L559 88.0 L558 88.0 L557 88.1 L556 88.0 L555 88.0 L554 88.0 L553 87.8 L552 87.9 L551 88.0 L550 88.0 L549 87.8 L548 88.1 L547 87.1 L546 87.1 L545 87.1 L544 87.9 L543 87.8 L542 87.8 L541 88.1 L540 88.2 L539 87.7 L538 87.9 L537 88.1 L536 88.0 L535 88.0 L534 88.0 L533 88.1 L532 87.9 L531 87.9 L530 87.8 L529 87.7 L528 87.9 L527 87.8 L526 87.7 L525 88.1 L524 87.9 L523 88.0 L522 87.7 L521 87.8 L520 87.8 L519 87.9 L518 87.7 L517 87.9 L516 88.0 L515 87.9 L514 87.7 L513 87.9 L512 87.9 L511 87.9 L510 87.6 L509 87.6 L508 87.7 L507 87.6 L506 87.6 L505 87.8 L504 87.7 L503 87.8 L502 87.9 L501 87.9 L500 87.7 L499 87.9 L498 87.8 L497 87.8 L496 87.7 L495 87.7 L494 87.8 L493 87.7 L492 87.8 L491 87.7 L490 87.9 L489 87.6 L488 87.7 L487 87.5 L486 87.8 L485 87.6 L484 87.6 L483 87.6 L482 87.7 L481 87.5 L480 87.8 L479 87.8 L478 87.7 L477 87.8 L476 87.6 L475 87.7 L474 87.7 L473 87.6 L472 87.0 L471 87.0 L470 87.0 L469 87.9 L468 88.3 L467 87.9 L466 88.1 L465 88.3 L464 88.3 L463 87.9 L462 87.8 L461 87.9 L460 88.2 L459 88.2 L458 88.2 L457 88.2 L456 87.9 L455 88.0 L454 87.8 L453 88.2 L452 88.3 L451 88.3 L450 87.8 L449 88.0 L448 88.0 L447 87.8 L446 88.1 L445 88.3 L444 87.9 L443 87.9 L442 88.1 L441 88.1 L440 88.2 L439 87.8 L438 87.8 L437 88.1 L436 88.2 L435 88.2 L434 88.2 L433 88.3 L432 88.0 L431 88.0 L430 88.0 L429 88.0 L428 88.2 L427 87.8 L426 88.2Z" fill="#3c5a4c"/><path d="M426 99.0 L427 99.1 L428 99.2 L429 98.9 L430 99.2 L431 98.9 L432 99.2 L433 99.2 L434 99.1 L435 98.9 L436 98.9 L437 98.7 L438 98.9 L439 99.0 L440 99.2 L441 98.7 L442 99.0 L443 98.8 L444 99.2 L445 98.8 L446 99.0 L447 99.1 L448 99.0 L449 99.2 L450 98.9 L451 99.1 L452 98.8 L453 99.1 L454 98.8 L455 98.9 L456 98.8 L457 98.7 L458 99.0 L459 98.8 L460 99.0 L461 98.7 L462 98.7 L463 98.8 L464 98.9 L465 99.0 L466 98.7 L467 98.6 L468 98.7 L469 99.0 L470 100.0 L471 100.0 L472 100.0 L473 99.3 L474 99.4 L475 99.4 L476 99.3 L477 99.3 L478 99.4 L479 99.2 L480 99.5 L481 99.5 L482 99.4 L483 99.5 L484 99.2 L485 99.5 L486 99.2 L487 99.4 L488 99.4 L489 99.2 L490 99.2 L491 99.3 L492 99.3 L493 99.3 L494 99.1 L495 99.3 L496 99.3 L497 99.3 L498 99.3 L499 99.2 L500 99.4 L501 99.2 L502 99.1 L503 99.1 L504 99.2 L505 99.3 L506 99.4 L507 99.4 L508 99.2 L509 99.0 L510 99.0 L511 99.3 L512 99.1 L513 99.1 L514 99.2 L515 99.0 L516 99.3 L517 99.2 L518 99.1 L519 99.0 L520 99.2 L521 99.2 L522 99.0 L523 99.2 L524 99.2 L525 99.2 L526 99.1 L527 99.0 L528 99.2 L529 99.0 L530 99.1 L531 99.3 L532 98.9 L533 99.2 L534 99.0 L535 98.8 L536 99.2 L537 99.3 L538 99.2 L539 99.2 L540 98.9 L541 99.0 L542 99.2 L543 99.1 L544 99.0 L545 99.9 L546 99.9 L547 99.9 L548 98.9 L549 99.0 L550 98.8 L551 99.1 L552 98.9 L553 98.8 L554 99.1 L555 98.9 L556 99.0 L557 98.8 L558 98.8 L559 98.7 L560 98.8 L561 99.1 L562 99.1 L563 98.8 L564 98.7 L565 99.1 L566 98.9 L567 99.0 L568 98.9 L569 98.7 L570 98.9 L571 98.8 L572 98.8 L573 99.0 L574 98.8 L575 99.0 L576 98.9 L577 98.9 L578 98.8 L579 99.1 L580 98.7 L581 99.1 L582 99.0 L583 98.7 L584 98.6 L585 99.0 L586 98.7 L587 99.2 L588 98.6 L589 99.1 L590 99.2 L591 98.8 L592 99.1 L593 98.8 L594 99.2 L595 99.1 L596 99.0 L597 99.1 L598 98.9 L599 99.0 L600 98.8 L601 98.9 L602 98.6 L603 98.7 L604 99.1 L605 98.7 L606 98.7 L607 98.9 L608 98.9 L609 99.1 L610 99.0 L611 99.1 L612 99.1 L613 98.8 L614 99.0 L615 100.0 L616 100.0 L617 100.0 L618 99.6 L619 99.4 L620 99.5 L621 99.4 L622 99.5 L623 99.4 L624 99.5 L625 99.4 L626 99.4 L627 99.5 L628 99.5 L629 99.4 L630 99.6 L631 99.4 L632 99.4 L633 99.3 L634 99.5 L635 99.4 L636 99.4 L637 99.3 L638 99.5 L639 99.4 L640 99.4 L641 99.3 L642 99.4 L643 99.4 L644 99.4 L645 99.2 L646 99.4 L647 99.2 L648 99.2 L649 99.4 L650 99.3 L651 99.5 L652 99.1 L653 99.2 L654 99.4 L655 99.3 L656 99.3 L657 99.2 L658 99.3 L659 99.1 L660 99.2 L661 99.4 L662 99.1 L663 99.1 L664 99.3 L665 99.1 L666 99.1 L667 99.1 L668 99.4 L669 99.1 L670 99.3 L671 99.1 L672 99.1 L673 99.2 L674 99.0 L675 99.0 L676 98.9 L677 98.9 L678 99.1 L679 99.0 L680 99.0 L681 99.2 L682 99.1 L683 99.1 L684 99.2 L685 99.2 L686 98.9 L687 98.9 L688 99.0 L689 99.0 L690 99.1 L691 99.0 L692 99.0 L693 99.3 L694 99.1 L695 98.8 L696 99.2 L697 99.0 L698 99.2 L699 99.1 L700 98.8 L701 99.2 L702 98.8 L703 98.8 L704 98.8 L705 99.1 L706 98.7 L707 99.0 L708 99.0 L709 98.7 L710 98.9 L711 98.8 L712 99.1 L713 99.2 L714 99.0 L715 99.1 L716 98.7 L717 99.9 L718 99.9 L719 99.9 L720 99.1 L721 98.8 L722 99.0 L723 98.9 L724 99.1 L725 98.7 L726 98.7 L727 98.8 L728 98.8 L729 99.0 L730 99.1 L731 99.0 L732 98.7 L733 98.8 L734 99.1 L735 99.0 L736 98.9 L737 99.1 L738 99.1 L739 98.9 L740 99.1 L741 98.6 L742 99.1 L743 98.7 L744 98.7 L745 99.0 L746 98.8 L747 98.6 L748 98.8 L749 98.9 L750 98.6 L751 99.0 L752 98.6 L753 98.9 L754 98.9 L755 98.9 L756 98.7 L757 98.6 L758 98.7 L759 99.0 L760 98.5 L761 98.7 L762 98.8 L763 98.6 L764 99.0 L765 99.9 L766 99.9 L767 98.9 L768 98.9 L769 99.2 L770 99.0 L771 99.1 L772 98.9 L773 99.0 L774 99.0 L775 99.0 L776 98.9 L777 98.8 L778 99.1 L779 99.1 L780 99.1 L781 99.2 L782 98.8 L783 98.8 L784 99.2 L785 99.0 L786 98.8 L787 98.8 L788 98.7 L789 98.7 L790 99.1 L791 99.2 L792 99.1 L793 99.0 L794 99.2 L795 99.1 L796 99.0 L797 98.9 L798 99.1 L799 99.2 L800 99.0 L801 99.2 L802 99.2 L803 99.2 L804 98.8 L805 98.8 L806 99.2 L807 98.8 L808 98.8 L809 98.9 L810 99.0 L811 98.8 L812 99.2 L813 99.2 L814 98.7 L815 99.1 L816 98.7 L817 98.8 L818 99.2 L819 99.1 L820 98.9 L821 99.1 L822 98.8 L823 98.8 L824 99.1 L825 98.9 L826 99.1 L827 98.7 L828 98.8 L829 98.8 L830 98.9 L831 99.2 L832 98.7 L833 98.8 L834 98.9 L835 98.9 L836 98.9 L837 98.8 L838 98.9 L839 99.0 L840 98.9 L841 99.1 L842 99.2 L843 99.9 L844 99.9 L845 99.9 L846 100.0 L847 99.9 L848 99.9 L849 99.9 L850 99.9 L851 99.9 L852 99.9 L853 99.9 L854 99.9 L855 99.9 L856 99.9 L857 99.9 L858 99.9 L859 99.9 L860 99.9 L861 99.9 L862 99.9 L863 99.9 L864 99.9 L865 99.9 L866 99.9 L867 99.9 L868 99.6 L869 99.5 L870 99.3 L871 99.5 L872 99.3 L873 99.3 L874 99.5 L875 99.5 L876 99.3 L877 99.4 L878 99.4 L879 99.3 L880 99.2 L881 99.1 L882 99.1 L883 99.2 L884 99.4 L885 99.3 L886 99.4 L887 99.3 L888 99.2 L889 99.3 L890 99.2 L891 99.3 L892 99.0 L893 99.1 L894 99.2 L895 99.0 L896 99.1 L897 99.3 L898 98.8 L899 98.9 L900 98.8 L901 99.1 L902 99.1 L903 98.8 L904 99.1 L905 98.6 L906 98.8 L907 98.9 L908 99.1 L909 99.0 L910 98.9 L911 98.6 L912 99.1 L913 98.8 L914 99.1 L915 98.6 L916 98.8 L917 98.7 L918 98.8 L919 99.1 L920 99.0 L921 99.2 L922 98.9 L923 99.1 L924 99.1 L925 99.1 L926 98.7 L927 98.7 L928 99.0 L929 98.6 L930 99.1 L931 99.1 L932 99.0 L933 98.7 L934 99.1 L935 98.7 L936 99.1 L937 99.1 L938 99.4 L939 99.5 L940 99.6 L941 99.6 L942 99.7 L943 100.0 L944 100.0 L945 100.0 L946 100.0 L947 100.0 L948 100.0 L949 100.0 L950 100.0 L951 100.0 L952 100.0 L953 100.0 L954 100.0 L955 100.0 L956 100.0 L957 100.0 L958 100.0 L959 100.0 L960 100.0 L961 100.0 L962 100.0 L963 100.0 L964 100.0 L965 99.1 L966 99.0 L967 98.9 L968 99.1 L969 99.1 L970 99.0 L971 99.2 L972 99.4 L973 99.2 L974 99.8 L975 99.8 L976 99.8 L977 99.8 L978 99.8 L979 99.8 L980 99.0 L981 99.2 L982 99.1 L983 99.3 L984 99.2 L985 99.1 L986 99.1 L987 99.2 L988 99.3 L989 99.0 L990 99.2 L991 99.1 L992 99.3 L993 99.4 L994 99.2 L995 99.2 L996 99.0 L997 99.1 L998 99.1 L999 99.2 L1000 99.1 L1001 99.3 L1002 99.0 L1003 99.2 L1004 99.2 L1005 99.3 L1006 100.0 L1007 100.0 L1008 100.0 L1009 100.0 L1010 99.7 L1011 99.7 L1012 99.7 L1013 99.7 L1014 99.6 L1015 99.7 L1016 99.6 L1017 99.8 L1018 99.7 L1019 99.7 L1020 99.7 L1021 99.7 L1022 99.6 L1023 99.6 L1024 99.7 L1025 99.6 L1026 99.6 L1027 99.7 L1028 99.6 L1029 99.6 L1030 99.7 L1031 99.7 L1032 99.7 L1033 99.7 L1034 99.6 L1035 99.6 L1036 99.5 L1037 99.6 L1038 99.5 L1039 99.6 L1040 99.6 L1041 99.7 L1042 99.6 L1043 99.7 L1044 99.7 L1045 99.5 L1046 99.7 L1047 99.6 L1048 99.6 L1049 99.6 L1050 99.7 L1051 99.6 L1052 99.5 L1053 99.6 L1054 99.6 L1055 99.5 L1056 99.6 L1057 99.4 L1058 99.6 L1059 99.6 L1060 99.6 L1061 99.5 L1062 99.4 L1063 99.4 L1064 99.6 L1065 99.5 L1066 99.5 L1067 99.4 L1068 99.4 L1069 99.5 L1070 99.5 L1071 99.5 L1072 99.5 L1073 99.5 L1074 99.5 L1075 99.6 L1076 99.5 L1077 99.3 L1078 99.5 L1079 99.5 L1080 99.4 L1081 99.4 L1082 99.4 L1083 99.5 L1084 99.4 L1085 99.5 L1086 99.4 L1087 99.6 L1088 99.5 L1089 99.5 L1090 99.5 L1091 99.3 L1092 99.5 L1093 99.3 L1094 99.5 L1095 99.3 L1096 99.3 L1097 99.4 L1098 99.3 L1099 99.2 L1100 99.4 L1101 99.3 L1102 99.5 L1103 99.3 L1104 99.3 L1105 99.3 L1106 99.5 L1107 99.5 L1108 99.3 L1109 99.3 L1110 99.3 L1111 99.4 L1112 99.3 L1113 99.2 L1114 99.4 L1115 99.2 L1116 99.2 L1117 99.3 L1118 99.3 L1119 99.3 L1120 99.3 L1121 99.4 L1122 100.0 L1123 100.0 L1124 100.0 L1125 100.0 L1126 100.0 L1127 100.0 L1128 99.2 L1129 99.0 L1130 99.0 L1131 99.1 L1132 99.2 L1133 99.3 L1134 99.2 L1135 99.3 L1136 99.1 L1137 99.4 L1138 99.2 L1139 99.3 L1140 99.3 L1141 99.2 L1142 99.0 L1143 99.0 L1144 99.3 L1145 99.1 L1146 99.1 L1147 99.2 L1148 99.2 L1149 99.4 L1150 99.1 L1151 99.2 L1152 99.1 L1153 99.1 L1154 99.2 L1155 99.2 L1156 99.2 L1157 99.4 L1158 99.3 L1159 99.4 L1160 99.4 L1161 99.1 L1162 99.3 L1163 99.4 L1164 99.3 L1165 99.4 L1166 99.2 L1167 99.4 L1168 99.4 L1169 99.2 L1170 99.1 L1171 99.5 L1172 99.2 L1173 99.3 L1174 99.3 L1175 99.3 L1176 99.5 L1177 99.3 L1178 99.3 L1179 99.4 L1180 99.1 L1181 99.4 L1182 99.2 L1183 99.9 L1184 99.9 L1185 99.9 L1186 99.3 L1187 99.2 L1188 99.4 L1189 99.4 L1190 99.4 L1191 99.2 L1192 99.2 L1193 99.0 L1194 99.0 L1195 99.2 L1196 99.2 L1197 99.3 L1198 99.0 L1199 99.1 L1200 99.3 L1201 98.9 L1202 99.3 L1203 99.2 L1204 99.1 L1205 98.8 L1206 99.2 L1207 99.1 L1208 100.0 L1209 100.0 L1210 100.0 L1211 99.7 L1212 99.7 L1213 99.6 L1214 99.5 L1215 99.7 L1216 99.6 L1217 99.5 L1218 99.5 L1219 99.5 L1220 99.7 L1221 99.6 L1222 99.7 L1223 99.7 L1224 99.7 L1225 99.6 L1226 99.6 L1227 99.7 L1228 100.0 L1229 100.0 L1230 100.0 L1231 99.5 L1232 99.6 L1233 99.5 L1234 99.5 L1235 99.7 L1236 99.6 L1237 99.7 L1238 99.6 L1239 99.6 L1240 99.6 L1241 99.5 L1242 99.6 L1243 100.0 L1244 100.0 L1245 99.6 L1246 99.8 L1247 99.7 L1248 99.8 L1249 99.7 L1250 99.7 L1251 99.6 L1252 99.7 L1253 100.0 L1254 100.0 L1255 99.6 L1256 99.5 L1257 99.5 L1258 99.6 L1259 99.7 L1260 99.5 L1261 99.7 L1262 99.5 L1263 99.5 L1264 99.6 L1265 99.5 L1266 100.0 L1267 100.0 L1268 100.0 L1269 99.7 L1270 99.7 L1271 99.6 L1272 99.6 L1273 99.7 L1274 99.6 L1275 99.6 L1276 99.6 L1277 99.5 L1278 99.6 L1278 101.4 L1277 101.5 L1276 101.4 L1275 101.4 L1274 101.4 L1273 101.3 L1272 101.4 L1271 101.4 L1270 101.3 L1269 101.3 L1268 101.0 L1267 101.0 L1266 101.0 L1265 101.5 L1264 101.4 L1263 101.5 L1262 101.5 L1261 101.3 L1260 101.5 L1259 101.3 L1258 101.4 L1257 101.5 L1256 101.5 L1255 101.4 L1254 101.0 L1253 101.0 L1252 101.3 L1251 101.4 L1250 101.3 L1249 101.3 L1248 101.2 L1247 101.3 L1246 101.2 L1245 101.4 L1244 101.0 L1243 101.0 L1242 101.4 L1241 101.5 L1240 101.4 L1239 101.4 L1238 101.4 L1237 101.3 L1236 101.4 L1235 101.3 L1234 101.5 L1233 101.5 L1232 101.4 L1231 101.5 L1230 101.0 L1229 101.0 L1228 101.0 L1227 101.3 L1226 101.4 L1225 101.4 L1224 101.3 L1223 101.3 L1222 101.3 L1221 101.4 L1220 101.3 L1219 101.5 L1218 101.5 L1217 101.5 L1216 101.4 L1215 101.3 L1214 101.5 L1213 101.4 L1212 101.3 L1211 101.3 L1210 101.0 L1209 101.0 L1208 101.0 L1207 101.9 L1206 101.8 L1205 102.2 L1204 101.9 L1203 101.8 L1202 101.7 L1201 102.1 L1200 101.7 L1199 101.9 L1198 102.0 L1197 101.7 L1196 101.8 L1195 101.8 L1194 102.0 L1193 102.0 L1192 101.8 L1191 101.8 L1190 101.6 L1189 101.6 L1188 101.6 L1187 101.8 L1186 101.7 L1185 101.1 L1184 101.1 L1183 101.1 L1182 101.8 L1181 101.6 L1180 101.9 L1179 101.6 L1178 101.7 L1177 101.7 L1176 101.5 L1175 101.7 L1174 101.7 L1173 101.7 L1172 101.8 L1171 101.5 L1170 101.9 L1169 101.8 L1168 101.6 L1167 101.6 L1166 101.8 L1165 101.6 L1164 101.7 L1163 101.6 L1162 101.7 L1161 101.9 L1160 101.6 L1159 101.6 L1158 101.7 L1157 101.6 L1156 101.8 L1155 101.8 L1154 101.8 L1153 101.9 L1152 101.9 L1151 101.8 L1150 101.9 L1149 101.6 L1148 101.8 L1147 101.8 L1146 101.9 L1145 101.9 L1144 101.7 L1143 102.0 L1142 102.0 L1141 101.8 L1140 101.7 L1139 101.7 L1138 101.8 L1137 101.6 L1136 101.9 L1135 101.7 L1134 101.8 L1133 101.7 L1132 101.8 L1131 101.9 L1130 102.0 L1129 102.0 L1128 101.8 L1127 101.0 L1126 101.0 L1125 101.0 L1124 101.0 L1123 101.0 L1122 101.0 L1121 101.6 L1120 101.7 L1119 101.7 L1118 101.7 L1117 101.7 L1116 101.8 L1115 101.8 L1114 101.6 L1113 101.8 L1112 101.7 L1111 101.6 L1110 101.7 L1109 101.7 L1108 101.7 L1107 101.5 L1106 101.5 L1105 101.7 L1104 101.7 L1103 101.7 L1102 101.5 L1101 101.7 L1100 101.6 L1099 101.8 L1098 101.7 L1097 101.6 L1096 101.7 L1095 101.7 L1094 101.5 L1093 101.7 L1092 101.5 L1091 101.7 L1090 101.5 L1089 101.5 L1088 101.5 L1087 101.4 L1086 101.6 L1085 101.5 L1084 101.6 L1083 101.5 L1082 101.6 L1081 101.6 L1080 101.6 L1079 101.5 L1078 101.5 L1077 101.7 L1076 101.5 L1075 101.4 L1074 101.5 L1073 101.5 L1072 101.5 L1071 101.5 L1070 101.5 L1069 101.5 L1068 101.6 L1067 101.6 L1066 101.5 L1065 101.5 L1064 101.4 L1063 101.6 L1062 101.6 L1061 101.5 L1060 101.4 L1059 101.4 L1058 101.4 L1057 101.6 L1056 101.4 L1055 101.5 L1054 101.4 L1053 101.4 L1052 101.5 L1051 101.4 L1050 101.3 L1049 101.4 L1048 101.4 L1047 101.4 L1046 101.3 L1045 101.5 L1044 101.3 L1043 101.3 L1042 101.4 L1041 101.3 L1040 101.4 L1039 101.4 L1038 101.5 L1037 101.4 L1036 101.5 L1035 101.4 L1034 101.4 L1033 101.3 L1032 101.3 L1031 101.3 L1030 101.3 L1029 101.4 L1028 101.4 L1027 101.3 L1026 101.4 L1025 101.4 L1024 101.3 L1023 101.4 L1022 101.4 L1021 101.3 L1020 101.3 L1019 101.3 L1018 101.3 L1017 101.2 L1016 101.4 L1015 101.3 L1014 101.4 L1013 101.3 L1012 101.3 L1011 101.3 L1010 101.3 L1009 101.0 L1008 101.0 L1007 101.0 L1006 101.0 L1005 101.7 L1004 101.8 L1003 101.8 L1002 102.0 L1001 101.7 L1000 101.9 L999 101.8 L998 101.9 L997 101.9 L996 102.0 L995 101.8 L994 101.8 L993 101.6 L992 101.7 L991 101.9 L990 101.8 L989 102.0 L988 101.7 L987 101.8 L986 101.9 L985 101.9 L984 101.8 L983 101.7 L982 101.9 L981 101.8 L980 102.0 L979 101.2 L978 101.2 L977 101.2 L976 101.2 L975 101.2 L974 101.2 L973 101.8 L972 101.6 L971 101.8 L970 102.0 L969 101.9 L968 101.9 L967 102.1 L966 102.0 L965 101.9 L964 101.0 L963 101.0 L962 101.0 L961 101.0 L960 101.0 L959 101.0 L958 101.0 L957 101.0 L956 101.0 L955 101.0 L954 101.0 L953 101.0 L952 101.0 L951 101.0 L950 101.0 L949 101.0 L948 101.0 L947 101.0 L946 101.0 L945 101.0 L944 101.0 L943 101.0 L942 101.3 L941 101.4 L940 101.4 L939 101.5 L938 101.6 L937 101.9 L936 101.9 L935 102.3 L934 101.9 L933 102.3 L932 102.0 L931 101.9 L930 101.9 L929 102.4 L928 102.0 L927 102.3 L926 102.3 L925 101.9 L924 101.9 L923 101.9 L922 102.1 L921 101.8 L920 102.0 L919 101.9 L918 102.2 L917 102.3 L916 102.2 L915 102.4 L914 101.9 L913 102.2 L912 101.9 L911 102.4 L910 102.1 L909 102.0 L908 101.9 L907 102.1 L906 102.2 L905 102.4 L904 101.9 L903 102.2 L902 101.9 L901 101.9 L900 102.2 L899 102.1 L898 102.2 L897 101.7 L896 101.9 L895 102.0 L894 101.8 L893 101.9 L892 102.0 L891 101.7 L890 101.8 L889 101.7 L888 101.8 L887 101.7 L886 101.6 L885 101.7 L884 101.6 L883 101.8 L882 101.9 L881 101.9 L880 101.8 L879 101.7 L878 101.6 L877 101.6 L876 101.7 L875 101.5 L874 101.5 L873 101.7 L872 101.7 L871 101.5 L870 101.7 L869 101.5 L868 101.4 L867 101.1 L866 101.1 L865 101.1 L864 101.1 L863 101.1 L862 101.1 L861 101.1 L860 101.1 L859 101.1 L858 101.1 L857 101.1 L856 101.1 L855 101.1 L854 101.1 L853 101.1 L852 101.1 L851 101.1 L850 101.1 L849 101.1 L848 101.1 L847 101.1 L846 101.0 L845 101.1 L844 101.1 L843 101.1 L842 101.8 L841 101.9 L840 102.1 L839 102.0 L838 102.1 L837 102.2 L836 102.1 L835 102.1 L834 102.1 L833 102.2 L832 102.3 L831 101.8 L830 102.1 L829 102.2 L828 102.2 L827 102.3 L826 101.9 L825 102.1 L824 101.9 L823 102.2 L822 102.2 L821 101.9 L820 102.1 L819 101.9 L818 101.8 L817 102.2 L816 102.3 L815 101.9 L814 102.3 L813 101.8 L812 101.8 L811 102.2 L810 102.0 L809 102.1 L808 102.2 L807 102.2 L806 101.8 L805 102.2 L804 102.2 L803 101.8 L802 101.8 L801 101.8 L800 102.0 L799 101.8 L798 101.9 L797 102.1 L796 102.0 L795 101.9 L794 101.8 L793 102.0 L792 101.9 L791 101.8 L790 101.9 L789 102.3 L788 102.3 L787 102.2 L786 102.2 L785 102.0 L784 101.8 L783 102.2 L782 102.2 L781 101.8 L780 101.9 L779 101.9 L778 101.9 L777 102.2 L776 102.1 L775 102.0 L774 102.0 L773 102.0 L772 102.1 L771 101.9 L770 102.0 L769 101.8 L768 102.1 L767 102.1 L766 101.1 L765 101.1 L764 102.0 L763 102.4 L762 102.2 L761 102.3 L760 102.5 L759 102.0 L758 102.3 L757 102.4 L756 102.3 L755 102.1 L754 102.1 L753 102.1 L752 102.4 L751 102.0 L750 102.4 L749 102.1 L748 102.2 L747 102.4 L746 102.2 L745 102.0 L744 102.3 L743 102.3 L742 101.9 L741 102.4 L740 101.9 L739 102.1 L738 101.9 L737 101.9 L736 102.1 L735 102.0 L734 101.9 L733 102.2 L732 102.3 L731 102.0 L730 101.9 L729 102.0 L728 102.2 L727 102.2 L726 102.3 L725 102.3 L724 101.9 L723 102.1 L722 102.0 L721 102.2 L720 101.9 L719 101.1 L718 101.1 L717 101.1 L716 102.3 L715 101.9 L714 102.0 L713 101.8 L712 101.9 L711 102.2 L710 102.1 L709 102.3 L708 102.0 L707 102.0 L706 102.3 L705 101.9 L704 102.2 L703 102.2 L702 102.2 L701 101.8 L700 102.2 L699 101.9 L698 101.8 L697 102.0 L696 101.8 L695 102.2 L694 101.9 L693 101.7 L692 102.0 L691 102.0 L690 101.9 L689 102.0 L688 102.0 L687 102.1 L686 102.1 L685 101.8 L684 101.8 L683 101.9 L682 101.9 L681 101.8 L680 102.0 L679 102.0 L678 101.9 L677 102.1 L676 102.1 L675 102.0 L674 102.0 L673 101.8 L672 101.9 L671 101.9 L670 101.7 L669 101.9 L668 101.6 L667 101.9 L666 101.9 L665 101.9 L664 101.7 L663 101.9 L662 101.9 L661 101.6 L660 101.8 L659 101.9 L658 101.7 L657 101.8 L656 101.7 L655 101.7 L654 101.6 L653 101.8 L652 101.9 L651 101.5 L650 101.7 L649 101.6 L648 101.8 L647 101.8 L646 101.6 L645 101.8 L644 101.6 L643 101.6 L642 101.6 L641 101.7 L640 101.6 L639 101.6 L638 101.5 L637 101.7 L636 101.6 L635 101.6 L634 101.5 L633 101.7 L632 101.6 L631 101.6 L630 101.4 L629 101.6 L628 101.5 L627 101.5 L626 101.6 L625 101.6 L624 101.5 L623 101.6 L622 101.5 L621 101.6 L620 101.5 L619 101.6 L618 101.4 L617 101.0 L616 101.0 L615 101.0 L614 102.0 L613 102.2 L612 101.9 L611 101.9 L610 102.0 L609 101.9 L608 102.1 L607 102.1 L606 102.3 L605 102.3 L604 101.9 L603 102.3 L602 102.4 L601 102.1 L600 102.2 L599 102.0 L598 102.1 L597 101.9 L596 102.0 L595 101.9 L594 101.8 L593 102.2 L592 101.9 L591 102.2 L590 101.8 L589 101.9 L588 102.4 L587 101.8 L586 102.3 L585 102.0 L584 102.4 L583 102.3 L582 102.0 L581 101.9 L580 102.3 L579 101.9 L578 102.2 L577 102.1 L576 102.1 L575 102.0 L574 102.2 L573 102.0 L572 102.2 L571 102.2 L570 102.1 L569 102.3 L568 102.1 L567 102.0 L566 102.1 L565 101.9 L564 102.3 L563 102.2 L562 101.9 L561 101.9 L560 102.2 L559 102.3 L558 102.2 L557 102.2 L556 102.0 L555 102.1 L554 101.9 L553 102.2 L552 102.1 L551 101.9 L550 102.2 L549 102.0 L548 102.1 L547 101.1 L546 101.1 L545 101.1 L544 102.0 L543 101.9 L542 101.8 L541 102.0 L540 102.1 L539 101.8 L538 101.8 L537 101.7 L536 101.8 L535 102.2 L534 102.0 L533 101.8 L532 102.1 L531 101.7 L530 101.9 L529 102.0 L528 101.8 L527 102.0 L526 101.9 L525 101.8 L524 101.8 L523 101.8 L522 102.0 L521 101.8 L520 101.8 L519 102.0 L518 101.9 L517 101.8 L516 101.7 L515 102.0 L514 101.8 L513 101.9 L512 101.9 L511 101.7 L510 102.0 L509 102.0 L508 101.8 L507 101.6 L506 101.6 L505 101.7 L504 101.8 L503 101.9 L502 101.9 L501 101.8 L500 101.6 L499 101.8 L498 101.7 L497 101.7 L496 101.7 L495 101.7 L494 101.9 L493 101.7 L492 101.7 L491 101.7 L490 101.8 L489 101.8 L488 101.6 L487 101.6 L486 101.8 L485 101.5 L484 101.8 L483 101.5 L482 101.6 L481 101.5 L480 101.5 L479 101.8 L478 101.6 L477 101.7 L476 101.7 L475 101.6 L474 101.6 L473 101.7 L472 101.0 L471 101.0 L470 101.0 L469 102.0 L468 102.3 L467 102.4 L466 102.3 L465 102.0 L464 102.1 L463 102.2 L462 102.3 L461 102.3 L460 102.0 L459 102.2 L458 102.0 L457 102.3 L456 102.2 L455 102.1 L454 102.2 L453 101.9 L452 102.2 L451 101.9 L450 102.1 L449 101.8 L448 102.0 L447 101.9 L446 102.0 L445 102.2 L444 101.8 L443 102.2 L442 102.0 L441 102.3 L440 101.8 L439 102.0 L438 102.1 L437 102.3 L436 102.1 L435 102.1 L434 101.9 L433 101.8 L432 101.8 L431 102.1 L430 101.8 L429 102.1 L428 101.8 L427 101.9 L426 102.0Z" fill="#3c5a4c"/></svg>
<div class="a" style="left:422px;top:151px;width:1px;height:199px;background:#c01818"></div>
<svg class="a" style="left:416px;top:137px" width="13" height="14"><path d="M0.5 0.5H12.5V8L6.5 13.5L0.5 8Z" fill="#3b8ef0"/></svg>
<svg class="a" style="left:434px;top:153px" width="12" height="12"><rect width="12" height="12" fill="#b0b0b0"/><path d="M1.5 10.5L10.5 1.5V10.5Z" fill="#555"/></svg>
<svg class="a" style="left:1259px;top:153px" width="12" height="12"><rect width="12" height="12" fill="#b0b0b0"/><path d="M1.5 1.5L10.5 10.5H1.5Z" fill="#555"/></svg>
<div class="a" style="left:1283px;top:150px;width:75px;height:202px;border:1px solid #000;border-left:none"></div>
<div class="a" style="left:1283px;top:250px;width:75px;height:1px;background:#000"></div>
<div class="a" style="left:1292px;top:152px;color:#a0a0a0;line-height:14px">dB</div><div class="a" style="left:1292px;top:174px;color:#a0a0a0;line-height:14px">-9</div><div class="a" style="left:1292px;top:193px;color:#a0a0a0;line-height:14px">-∞</div><div class="a" style="left:1292px;top:210px;color:#a0a0a0;line-height:14px">-9</div><div class="a" style="left:1292px;top:227px;color:#a0a0a0;line-height:14px">-3</div><div class="a" style="left:1284px;top:152px;width:2px;height:1px;background:#c8c8c8"></div><div class="a" style="left:1284px;top:156px;width:2px;height:1px;background:#c8c8c8"></div><div class="a" style="left:1284px;top:161px;width:2px;height:1px;background:#c8c8c8"></div><div class="a" style="left:1284px;top:165px;width:4px;height:1px;background:#c8c8c8"></div><div class="a" style="left:1284px;top:169px;width:2px;height:1px;background:#c8c8c8"></div><div class="a" style="left:1284px;top:172px;width:2px;height:1px;background:#c8c8c8"></div><div class="a" style="left:1284px;top:175px;width:2px;height:1px;background:#c8c8c8"></div><div class="a" style="left:1284px;top:178px;width:2px;height:1px;background:#c8c8c8"></div><div class="a" style="left:1284px;top:180px;width:2px;height:1px;background:#c8c8c8"></div><div class="a" style="left:1284px;top:182px;width:4px;height:1px;background:#c8c8c8"></div><div class="a" style="left:1284px;top:200px;width:4px;height:1px;background:#c8c8c8"></div><div class="a" style="left:1284px;top:218px;width:4px;height:1px;background:#c8c8c8"></div><div class="a" style="left:1284px;top:220px;width:2px;height:1px;background:#c8c8c8"></div><div class="a" style="left:1284px;top:222px;width:2px;height:1px;background:#c8c8c8"></div><div class="a" style="left:1284px;top:224px;width:2px;height:1px;background:#c8c8c8"></div><div class="a" style="left:1284px;top:228px;width:2px;height:1px;background:#c8c8c8"></div><div class="a" style="left:1284px;top:232px;width:2px;height:1px;background:#c8c8c8"></div><div class="a" style="left:1284px;top:235px;width:4px;height:1px;background:#c8c8c8"></div><div class="a" style="left:1284px;top:240px;width:2px;height:1px;background:#c8c8c8"></div><div class="a" style="left:1284px;top:244px;width:2px;height:1px;background:#c8c8c8"></div><div class="a" style="left:1284px;top:248px;width:2px;height:1px;background:#c8c8c8"></div><div class="a" style="left:1292px;top:252px;color:#a0a0a0;line-height:14px">dB</div><div class="a" style="left:1292px;top:274px;color:#a0a0a0;line-height:14px">-9</div><div class="a" style="left:1292px;top:293px;color:#a0a0a0;line-height:14px">-∞</div><div class="a" style="left:1292px;top:310px;color:#a0a0a0;line-height:14px">-9</div><div class="a" style="left:1292px;top:327px;color:#a0a0a0;line-height:14px">-3</div><div class="a" style="left:1284px;top:252px;width:2px;height:1px;background:#c8c8c8"></div><div class="a" style="left:1284px;top:256px;width:2px;height:1px;background:#c8c8c8"></div><div class="a" style="left:1284px;top:261px;width:2px;height:1px;background:#c8c8c8"></div><div class="a" style="left:1284px;top:265px;width:4px;height:1px;background:#c8c8c8"></div><div class="a" style="left:1284px;top:269px;width:2px;height:1px;background:#c8c8c8"></div><div class="a" style="left:1284px;top:272px;width:2px;height:1px;background:#c8c8c8"></div><div class="a" style="left:1284px;top:275px;width:2px;height:1px;background:#c8c8c8"></div><div class="a" style="left:1284px;top:278px;width:2px;height:1px;background:#c8c8c8"></div><div class="a" style="left:1284px;top:280px;width:2px;height:1px;background:#c8c8c8"></div><div class="a" style="left:1284px;top:282px;width:4px;height:1px;background:#c8c8c8"></div><div class="a" style="left:1284px;top:300px;width:4px;height:1px;background:#c8c8c8"></div><div class="a" style="left:1284px;top:318px;width:4px;height:1px;background:#c8c8c8"></div><div class="a" style="left:1284px;top:320px;width:2px;height:1px;background:#c8c8c8"></div><div class="a" style="left:1284px;top:322px;width:2px;height:1px;background:#c8c8c8"></div><div class="a" style="left:1284px;top:324px;width:2px;height:1px;background:#c8c8c8"></div><div class="a" style="left:1284px;top:328px;width:2px;height:1px;background:#c8c8c8"></div><div class="a" style="left:1284px;top:332px;width:2px;height:1px;background:#c8c8c8"></div><div class="a" style="left:1284px;top:335px;width:4px;height:1px;background:#c8c8c8"></div><div class="a" style="left:1284px;top:340px;width:2px;height:1px;background:#c8c8c8"></div><div class="a" style="left:1284px;top:344px;width:2px;height:1px;background:#c8c8c8"></div><div class="a" style="left:1284px;top:348px;width:2px;height:1px;background:#c8c8c8"></div>
<div class="a" style="left:1333px;top:192px;width:21px;height:18px;background:#171717;border:1px solid #2a2a2a;border-radius:2px;color:#4a8ae0;text-align:center;line-height:18px;font-size:9px">L</div>
<div class="a" style="left:1333px;top:292px;width:21px;height:18px;background:#171717;border:1px solid #2a2a2a;border-radius:2px;color:#4a8ae0;text-align:center;line-height:18px;font-size:9px">R</div>
<div class="a" style="left:421px;top:352px;width:937px;height:9px;background:#2d2d2d"></div><div class="a" style="left:421px;top:350px;width:863px;height:2px;background:#000"></div>
<svg class="a" style="left:877px;top:355px" width="24" height="4"><rect x="1" y="0" width="1" height="1" fill="#d0d0d0"/><rect x="1" y="2" width="1" height="1" fill="#d0d0d0"/><rect x="3" y="0" width="1" height="1" fill="#d0d0d0"/><rect x="3" y="2" width="1" height="1" fill="#d0d0d0"/><rect x="5" y="0" width="1" height="1" fill="#d0d0d0"/><rect x="5" y="2" width="1" height="1" fill="#d0d0d0"/><rect x="7" y="0" width="1" height="1" fill="#d0d0d0"/><rect x="7" y="2" width="1" height="1" fill="#d0d0d0"/><rect x="9" y="0" width="1" height="1" fill="#d0d0d0"/><rect x="9" y="2" width="1" height="1" fill="#d0d0d0"/><rect x="11" y="0" width="1" height="1" fill="#d0d0d0"/><rect x="11" y="2" width="1" height="1" fill="#d0d0d0"/><rect x="13" y="0" width="1" height="1" fill="#d0d0d0"/><rect x="13" y="2" width="1" height="1" fill="#d0d0d0"/><rect x="15" y="0" width="1" height="1" fill="#d0d0d0"/><rect x="15" y="2" width="1" height="1" fill="#d0d0d0"/><rect x="17" y="0" width="1" height="1" fill="#d0d0d0"/><rect x="17" y="2" width="1" height="1" fill="#d0d0d0"/><rect x="19" y="0" width="1" height="1" fill="#d0d0d0"/><rect x="19" y="2" width="1" height="1" fill="#d0d0d0"/><rect x="21" y="0" width="1" height="1" fill="#d0d0d0"/><rect x="21" y="2" width="1" height="1" fill="#d0d0d0"/><rect x="23" y="0" width="1" height="1" fill="#d0d0d0"/><rect x="23" y="2" width="1" height="1" fill="#d0d0d0"/></svg>
<svg class="a" style="left:1332px;top:354px" width="8" height="5"><path d="M0 0H8L4 4Z" fill="#888"/></svg>
<svg class="a" style="left:422px;top:361px" width="861" height="193"><defs><linearGradient id="g0" x1="0" y1="0" x2="0" y2="1"><stop offset="0.000" stop-color="#5e5c66"/><stop offset="0.980" stop-color="#5e5c66"/><stop offset="0.986" stop-color="#6c5a7c"/><stop offset="0.991" stop-color="#7f5783"/><stop offset="0.996" stop-color="#9d5379"/><stop offset="0.930" stop-color="#bb596a"/><stop offset="1.000" stop-color="#ce6764"/></linearGradient><linearGradient id="g1" x1="0" y1="0" x2="0" y2="1"><stop offset="0.000" stop-color="#5e5c66"/><stop offset="0.947" stop-color="#5e5c66"/><stop offset="0.963" stop-color="#6c5a7c"/><stop offset="0.976" stop-color="#805683"/><stop offset="0.989" stop-color="#9e537a"/><stop offset="0.930" stop-color="#bd596a"/><stop offset="1.000" stop-color="#d06764"/></linearGradient><linearGradient id="g2" x1="0" y1="0" x2="0" y2="1"><stop offset="0.000" stop-color="#5e5c66"/><stop offset="0.895" stop-color="#5e5c66"/><stop offset="0.926" stop-color="#6c5a7d"/><stop offset="0.953" stop-color="#815684"/><stop offset="0.979" stop-color="#a0537b"/><stop offset="0.930" stop-color="#c0596a"/><stop offset="1.000" stop-color="#d36764"/></linearGradient><linearGradient id="g3" x1="0" y1="0" x2="0" y2="1"><stop offset="0.000" stop-color="#5e5c66"/><stop offset="0.842" stop-color="#5e5c66"/><stop offset="0.889" stop-color="#6d5a7e"/><stop offset="0.929" stop-color="#825685"/><stop offset="0.968" stop-color="#a2537b"/><stop offset="0.930" stop-color="#c3596b"/><stop offset="1.000" stop-color="#d66764"/></linearGradient><linearGradient id="g4" x1="0" y1="0" x2="0" y2="1"><stop offset="0.000" stop-color="#5e5c66"/><stop offset="0.789" stop-color="#5e5c66"/><stop offset="0.853" stop-color="#6d5a7f"/><stop offset="0.905" stop-color="#845686"/><stop offset="0.958" stop-color="#a4527c"/><stop offset="0.930" stop-color="#c6596b"/><stop offset="1.000" stop-color="#d96764"/></linearGradient><linearGradient id="g5" x1="0" y1="0" x2="0" y2="1"><stop offset="0.000" stop-color="#5e5c66"/><stop offset="0.737" stop-color="#5e5c66"/><stop offset="0.816" stop-color="#6e5a7f"/><stop offset="0.882" stop-color="#855687"/><stop offset="0.947" stop-color="#a7527d"/><stop offset="0.930" stop-color="#c8596b"/><stop offset="1.000" stop-color="#dc6864"/></linearGradient><linearGradient id="g6" x1="0" y1="0" x2="0" y2="1"><stop offset="0.000" stop-color="#5e5c66"/><stop offset="0.684" stop-color="#5e5c66"/><stop offset="0.779" stop-color="#6e5a80"/><stop offset="0.858" stop-color="#865588"/><stop offset="0.937" stop-color="#a9527d"/><stop offset="0.930" stop-color="#cb596b"/><stop offset="1.000" stop-color="#df6864"/></linearGradient><linearGradient id="g7" x1="0" y1="0" x2="0" y2="1"><stop offset="0.000" stop-color="#5e5c66"/><stop offset="0.632" stop-color="#5e5c66"/><stop offset="0.742" stop-color="#6f5a81"/><stop offset="0.834" stop-color="#875589"/><stop offset="0.926" stop-color="#ab527e"/><stop offset="0.930" stop-color="#ce596b"/><stop offset="1.000" stop-color="#e26864"/></linearGradient><linearGradient id="g8" x1="0" y1="0" x2="0" y2="1"><stop offset="0.000" stop-color="#5e5c66"/><stop offset="0.579" stop-color="#5e5c66"/><stop offset="0.705" stop-color="#6f5a82"/><stop offset="0.811" stop-color="#88558a"/><stop offset="0.916" stop-color="#ad517f"/><stop offset="0.930" stop-color="#d1596b"/><stop offset="1.000" stop-color="#e56964"/></linearGradient><linearGradient id="g9" x1="0" y1="0" x2="0" y2="1"><stop offset="0.000" stop-color="#5e5c66"/><stop offset="0.526" stop-color="#5e5c66"/><stop offset="0.668" stop-color="#705a82"/><stop offset="0.787" stop-color="#89558b"/><stop offset="0.905" stop-color="#af517f"/><stop offset="0.930" stop-color="#d3586b"/><stop offset="1.000" stop-color="#e86964"/></linearGradient><linearGradient id="g10" x1="0" y1="0" x2="0" y2="1"><stop offset="0.000" stop-color="#5e5c66"/><stop offset="0.474" stop-color="#5e5c66"/><stop offset="0.632" stop-color="#705a83"/><stop offset="0.763" stop-color="#8b558c"/><stop offset="0.895" stop-color="#b15180"/><stop offset="0.930" stop-color="#d6586b"/><stop offset="1.000" stop-color="#e96964"/></linearGradient><linearGradient id="g11" x1="0" y1="0" x2="0" y2="1"><stop offset="0.000" stop-color="#5e5c66"/><stop offset="0.421" stop-color="#5e5c66"/><stop offset="0.595" stop-color="#715a84"/><stop offset="0.739" stop-color="#8c558d"/><stop offset="0.884" stop-color="#b45081"/><stop offset="0.930" stop-color="#d9586c"/><stop offset="1.000" stop-color="#e96964"/></linearGradient><linearGradient id="g12" x1="0" y1="0" x2="0" y2="1"><stop offset="0.000" stop-color="#5e5c66"/><stop offset="0.368" stop-color="#5e5c66"/><stop offset="0.558" stop-color="#715985"/><stop offset="0.716" stop-color="#8d548e"/><stop offset="0.874" stop-color="#b65081"/><stop offset="0.930" stop-color="#dc586c"/><stop offset="1.000" stop-color="#e96964"/></linearGradient><linearGradient id="g13" x1="0" y1="0" x2="0" y2="1"><stop offset="0.000" stop-color="#5e5c66"/><stop offset="0.316" stop-color="#5e5c66"/><stop offset="0.521" stop-color="#725985"/><stop offset="0.692" stop-color="#8e548f"/><stop offset="0.863" stop-color="#b85082"/><stop offset="0.930" stop-color="#df586c"/><stop offset="1.000" stop-color="#e96964"/></linearGradient><linearGradient id="g14" x1="0" y1="0" x2="0" y2="1"><stop offset="0.000" stop-color="#5e5c66"/><stop offset="0.263" stop-color="#5e5c66"/><stop offset="0.484" stop-color="#725986"/><stop offset="0.668" stop-color="#8f5490"/><stop offset="0.853" stop-color="#ba4f83"/><stop offset="0.930" stop-color="#e1586c"/><stop offset="1.000" stop-color="#e96964"/></linearGradient><linearGradient id="g15" x1="0" y1="0" x2="0" y2="1"><stop offset="0.000" stop-color="#5e5c66"/><stop offset="0.211" stop-color="#5e5c66"/><stop offset="0.447" stop-color="#735987"/><stop offset="0.645" stop-color="#905491"/><stop offset="0.842" stop-color="#bc4f83"/><stop offset="0.930" stop-color="#e2586c"/><stop offset="1.000" stop-color="#e96964"/></linearGradient><linearGradient id="g16" x1="0" y1="0" x2="0" y2="1"><stop offset="0.000" stop-color="#5e5c66"/><stop offset="0.158" stop-color="#5e5c66"/><stop offset="0.411" stop-color="#735988"/><stop offset="0.621" stop-color="#925492"/><stop offset="0.832" stop-color="#be4f84"/><stop offset="0.930" stop-color="#e2586c"/><stop offset="1.000" stop-color="#e96964"/></linearGradient><linearGradient id="g17" x1="0" y1="0" x2="0" y2="1"><stop offset="0.000" stop-color="#5e5c66"/><stop offset="0.105" stop-color="#5e5c66"/><stop offset="0.374" stop-color="#745988"/><stop offset="0.597" stop-color="#935393"/><stop offset="0.821" stop-color="#c14f85"/><stop offset="0.930" stop-color="#e2586c"/><stop offset="1.000" stop-color="#e96964"/></linearGradient><linearGradient id="g18" x1="0" y1="0" x2="0" y2="1"><stop offset="0.000" stop-color="#5e5c66"/><stop offset="0.053" stop-color="#5e5c66"/><stop offset="0.337" stop-color="#745989"/><stop offset="0.574" stop-color="#945394"/><stop offset="0.811" stop-color="#c34e85"/><stop offset="0.930" stop-color="#e2586c"/><stop offset="1.000" stop-color="#e96964"/></linearGradient><linearGradient id="g19" x1="0" y1="0" x2="0" y2="1"><stop offset="0.000" stop-color="#5e5c66"/><stop offset="0.000" stop-color="#5e5c66"/><stop offset="0.300" stop-color="#74598a"/><stop offset="0.550" stop-color="#955395"/><stop offset="0.800" stop-color="#c54e86"/><stop offset="0.930" stop-color="#e2586c"/><stop offset="1.000" stop-color="#e96964"/></linearGradient></defs><rect x="0" y="0" width="861" height="193" fill="#5e5c66"/><rect x="0" y="1" width="3" height="96" fill="url(#g19)"/><rect x="3" y="1" width="1" height="96" fill="url(#g18)"/><rect x="4" y="1" width="1" height="96" fill="url(#g17)"/><rect x="5" y="1" width="2" height="96" fill="url(#g19)"/><rect x="7" y="1" width="1" height="96" fill="url(#g17)"/><rect x="8" y="1" width="1" height="96" fill="url(#g18)"/><rect x="9" y="1" width="1" height="96" fill="url(#g18)"/><rect x="10" y="1" width="3" height="96" fill="url(#g17)"/><rect x="13" y="1" width="1" height="96" fill="url(#g17)"/><rect x="14" y="1" width="2" height="96" fill="url(#g17)"/><rect x="16" y="1" width="2" height="96" fill="url(#g17)"/><rect x="18" y="1" width="3" height="96" fill="url(#g19)"/><rect x="21" y="1" width="1" height="96" fill="url(#g19)"/><rect x="22" y="1" width="1" height="96" fill="url(#g19)"/><rect x="23" y="1" width="1" height="96" fill="url(#g19)"/><rect x="24" y="1" width="1" height="96" fill="url(#g18)"/><rect x="25" y="1" width="2" height="96" fill="url(#g10)"/><rect x="27" y="1" width="1" height="96" fill="url(#g19)"/><rect x="28" y="1" width="1" height="96" fill="url(#g19)"/><rect x="29" y="1" width="3" height="96" fill="url(#g17)"/><rect x="32" y="1" width="2" height="96" fill="url(#g19)"/><rect x="34" y="1" width="1" height="96" fill="url(#g18)"/><rect x="35" y="1" width="3" height="96" fill="url(#g18)"/><rect x="38" y="1" width="2" height="96" fill="url(#g19)"/><rect x="40" y="1" width="1" height="96" fill="url(#g19)"/><rect x="41" y="1" width="3" height="96" fill="url(#g19)"/><rect x="44" y="1" width="3" height="96" fill="url(#g18)"/><rect x="47" y="1" width="3" height="96" fill="url(#g1)"/><rect x="50" y="1" width="1" height="96" fill="url(#g2)"/><rect x="51" y="1" width="1" height="96" fill="url(#g2)"/><rect x="52" y="1" width="2" height="96" fill="url(#g13)"/><rect x="54" y="1" width="1" height="96" fill="url(#g15)"/><rect x="55" y="1" width="2" height="96" fill="url(#g13)"/><rect x="57" y="1" width="3" height="96" fill="url(#g13)"/><rect x="60" y="1" width="1" height="96" fill="url(#g14)"/><rect x="61" y="1" width="1" height="96" fill="url(#g8)"/><rect x="62" y="1" width="3" height="96" fill="url(#g13)"/><rect x="65" y="1" width="1" height="96" fill="url(#g15)"/><rect x="66" y="1" width="3" height="96" fill="url(#g13)"/><rect x="69" y="1" width="1" height="96" fill="url(#g13)"/><rect x="70" y="1" width="3" height="96" fill="url(#g14)"/><rect x="73" y="1" width="1" height="96" fill="url(#g14)"/><rect x="74" y="1" width="1" height="96" fill="url(#g15)"/><rect x="75" y="1" width="1" height="96" fill="url(#g13)"/><rect x="76" y="1" width="2" height="96" fill="url(#g14)"/><rect x="78" y="1" width="1" height="96" fill="url(#g14)"/><rect x="79" y="1" width="1" height="96" fill="url(#g12)"/><rect x="80" y="1" width="1" height="96" fill="url(#g15)"/><rect x="81" y="1" width="2" height="96" fill="url(#g15)"/><rect x="83" y="1" width="1" height="96" fill="url(#g13)"/><rect x="84" y="1" width="2" height="96" fill="url(#g13)"/><rect x="86" y="1" width="1" height="96" fill="url(#g16)"/><rect x="87" y="1" width="2" height="96" fill="url(#g16)"/><rect x="89" y="1" width="1" height="96" fill="url(#g12)"/><rect x="90" y="1" width="2" height="96" fill="url(#g13)"/><rect x="92" y="1" width="2" height="96" fill="url(#g14)"/><rect x="94" y="1" width="3" height="96" fill="url(#g16)"/><rect x="97" y="1" width="2" height="96" fill="url(#g16)"/><rect x="99" y="1" width="2" height="96" fill="url(#g16)"/><rect x="101" y="1" width="1" height="96" fill="url(#g13)"/><rect x="102" y="1" width="3" height="96" fill="url(#g8)"/><rect x="105" y="1" width="3" height="96" fill="url(#g12)"/><rect x="108" y="1" width="3" height="96" fill="url(#g16)"/><rect x="111" y="1" width="1" height="96" fill="url(#g8)"/><rect x="112" y="1" width="3" height="96" fill="url(#g14)"/><rect x="115" y="1" width="1" height="96" fill="url(#g16)"/><rect x="116" y="1" width="2" height="96" fill="url(#g13)"/><rect x="118" y="1" width="3" height="96" fill="url(#g14)"/><rect x="121" y="1" width="1" height="96" fill="url(#g13)"/><rect x="122" y="1" width="2" height="96" fill="url(#g13)"/><rect x="124" y="1" width="1" height="96" fill="url(#g5)"/><rect x="125" y="1" width="1" height="96" fill="url(#g5)"/><rect x="126" y="1" width="1" height="96" fill="url(#g6)"/><rect x="127" y="1" width="2" height="96" fill="url(#g4)"/><rect x="129" y="1" width="1" height="96" fill="url(#g4)"/><rect x="130" y="1" width="1" height="96" fill="url(#g4)"/><rect x="131" y="1" width="2" height="96" fill="url(#g4)"/><rect x="133" y="1" width="1" height="96" fill="url(#g16)"/><rect x="134" y="1" width="3" height="96" fill="url(#g19)"/><rect x="137" y="1" width="1" height="96" fill="url(#g19)"/><rect x="138" y="1" width="2" height="96" fill="url(#g17)"/><rect x="140" y="1" width="2" height="96" fill="url(#g18)"/><rect x="142" y="1" width="2" height="96" fill="url(#g19)"/><rect x="144" y="1" width="2" height="96" fill="url(#g19)"/><rect x="146" y="1" width="2" height="96" fill="url(#g19)"/><rect x="148" y="1" width="1" height="96" fill="url(#g19)"/><rect x="149" y="1" width="1" height="96" fill="url(#g17)"/><rect x="150" y="1" width="2" height="96" fill="url(#g18)"/><rect x="152" y="1" width="2" height="96" fill="url(#g18)"/><rect x="154" y="1" width="2" height="96" fill="url(#g17)"/><rect x="156" y="1" width="2" height="96" fill="url(#g19)"/><rect x="158" y="1" width="2" height="96" fill="url(#g17)"/><rect x="160" y="1" width="2" height="96" fill="url(#g19)"/><rect x="162" y="1" width="1" height="96" fill="url(#g18)"/><rect x="163" y="1" width="1" height="96" fill="url(#g19)"/><rect x="164" y="1" width="2" height="96" fill="url(#g19)"/><rect x="166" y="1" width="3" height="96" fill="url(#g17)"/><rect x="169" y="1" width="1" height="96" fill="url(#g18)"/><rect x="170" y="1" width="2" height="96" fill="url(#g17)"/><rect x="172" y="1" width="2" height="96" fill="url(#g18)"/><rect x="174" y="1" width="2" height="96" fill="url(#g19)"/><rect x="176" y="1" width="1" height="96" fill="url(#g16)"/><rect x="177" y="1" width="1" height="96" fill="url(#g19)"/><rect x="178" y="1" width="3" height="96" fill="url(#g19)"/><rect x="181" y="1" width="2" height="96" fill="url(#g19)"/><rect x="183" y="1" width="1" height="96" fill="url(#g18)"/><rect x="184" y="1" width="1" height="96" fill="url(#g17)"/><rect x="185" y="1" width="1" height="96" fill="url(#g16)"/><rect x="186" y="1" width="1" height="96" fill="url(#g18)"/><rect x="187" y="1" width="3" height="96" fill="url(#g19)"/><rect x="190" y="1" width="1" height="96" fill="url(#g18)"/><rect x="191" y="1" width="2" height="96" fill="url(#g19)"/><rect x="193" y="1" width="1" height="96" fill="url(#g19)"/><rect x="194" y="1" width="2" height="96" fill="url(#g19)"/><rect x="196" y="1" width="1" height="96" fill="url(#g2)"/><rect x="197" y="1" width="1" height="96" fill="url(#g2)"/><rect x="198" y="1" width="1" height="96" fill="url(#g13)"/><rect x="199" y="1" width="1" height="96" fill="url(#g11)"/><rect x="200" y="1" width="3" height="96" fill="url(#g10)"/><rect x="203" y="1" width="1" height="96" fill="url(#g13)"/><rect x="204" y="1" width="3" height="96" fill="url(#g13)"/><rect x="207" y="1" width="2" height="96" fill="url(#g7)"/><rect x="209" y="1" width="2" height="96" fill="url(#g12)"/><rect x="211" y="1" width="1" height="96" fill="url(#g13)"/><rect x="212" y="1" width="1" height="96" fill="url(#g11)"/><rect x="213" y="1" width="2" height="96" fill="url(#g14)"/><rect x="215" y="1" width="2" height="96" fill="url(#g12)"/><rect x="217" y="1" width="1" height="96" fill="url(#g14)"/><rect x="218" y="1" width="1" height="96" fill="url(#g15)"/><rect x="219" y="1" width="3" height="96" fill="url(#g14)"/><rect x="222" y="1" width="1" height="96" fill="url(#g14)"/><rect x="223" y="1" width="3" height="96" fill="url(#g14)"/><rect x="226" y="1" width="2" height="96" fill="url(#g16)"/><rect x="228" y="1" width="1" height="96" fill="url(#g14)"/><rect x="229" y="1" width="1" height="96" fill="url(#g9)"/><rect x="230" y="1" width="3" height="96" fill="url(#g15)"/><rect x="233" y="1" width="3" height="96" fill="url(#g9)"/><rect x="236" y="1" width="1" height="96" fill="url(#g13)"/><rect x="237" y="1" width="3" height="96" fill="url(#g14)"/><rect x="240" y="1" width="2" height="96" fill="url(#g15)"/><rect x="242" y="1" width="2" height="96" fill="url(#g16)"/><rect x="244" y="1" width="2" height="96" fill="url(#g15)"/><rect x="246" y="1" width="1" height="96" fill="url(#g15)"/><rect x="247" y="1" width="2" height="96" fill="url(#g13)"/><rect x="249" y="1" width="3" height="96" fill="url(#g15)"/><rect x="252" y="1" width="1" height="96" fill="url(#g16)"/><rect x="253" y="1" width="1" height="96" fill="url(#g15)"/><rect x="254" y="1" width="1" height="96" fill="url(#g16)"/><rect x="255" y="1" width="1" height="96" fill="url(#g15)"/><rect x="256" y="1" width="1" height="96" fill="url(#g17)"/><rect x="257" y="1" width="1" height="96" fill="url(#g15)"/><rect x="258" y="1" width="1" height="96" fill="url(#g16)"/><rect x="259" y="1" width="2" height="96" fill="url(#g15)"/><rect x="261" y="1" width="1" height="96" fill="url(#g16)"/><rect x="262" y="1" width="2" height="96" fill="url(#g13)"/><rect x="264" y="1" width="3" height="96" fill="url(#g15)"/><rect x="267" y="1" width="3" height="96" fill="url(#g17)"/><rect x="270" y="1" width="2" height="96" fill="url(#g16)"/><rect x="272" y="1" width="1" height="96" fill="url(#g17)"/><rect x="273" y="1" width="1" height="96" fill="url(#g15)"/><rect x="274" y="1" width="1" height="96" fill="url(#g17)"/><rect x="275" y="1" width="1" height="96" fill="url(#g14)"/><rect x="276" y="1" width="3" height="96" fill="url(#g16)"/><rect x="279" y="1" width="2" height="96" fill="url(#g17)"/><rect x="281" y="1" width="2" height="96" fill="url(#g15)"/><rect x="283" y="1" width="2" height="96" fill="url(#g17)"/><rect x="285" y="1" width="3" height="96" fill="url(#g16)"/><rect x="288" y="1" width="2" height="96" fill="url(#g15)"/><rect x="290" y="1" width="2" height="96" fill="url(#g14)"/><rect x="292" y="1" width="1" height="96" fill="url(#g14)"/><rect x="293" y="1" width="1" height="96" fill="url(#g16)"/><rect x="294" y="1" width="3" height="96" fill="url(#g16)"/><rect x="297" y="1" width="2" height="96" fill="url(#g3)"/><rect x="299" y="1" width="1" height="96" fill="url(#g17)"/><rect x="300" y="1" width="1" height="96" fill="url(#g19)"/><rect x="301" y="1" width="2" height="96" fill="url(#g16)"/><rect x="303" y="1" width="2" height="96" fill="url(#g10)"/><rect x="305" y="1" width="1" height="96" fill="url(#g18)"/><rect x="306" y="1" width="1" height="96" fill="url(#g17)"/><rect x="307" y="1" width="1" height="96" fill="url(#g18)"/><rect x="308" y="1" width="1" height="96" fill="url(#g19)"/><rect x="309" y="1" width="1" height="96" fill="url(#g19)"/><rect x="310" y="1" width="1" height="96" fill="url(#g19)"/><rect x="311" y="1" width="3" height="96" fill="url(#g19)"/><rect x="314" y="1" width="1" height="96" fill="url(#g17)"/><rect x="315" y="1" width="1" height="96" fill="url(#g19)"/><rect x="316" y="1" width="2" height="96" fill="url(#g10)"/><rect x="318" y="1" width="1" height="96" fill="url(#g16)"/><rect x="319" y="1" width="1" height="96" fill="url(#g17)"/><rect x="320" y="1" width="1" height="96" fill="url(#g16)"/><rect x="321" y="1" width="1" height="96" fill="url(#g17)"/><rect x="322" y="1" width="1" height="96" fill="url(#g16)"/><rect x="323" y="1" width="1" height="96" fill="url(#g19)"/><rect x="324" y="1" width="1" height="96" fill="url(#g18)"/><rect x="325" y="1" width="1" height="96" fill="url(#g18)"/><rect x="326" y="1" width="2" height="96" fill="url(#g10)"/><rect x="328" y="1" width="2" height="96" fill="url(#g16)"/><rect x="330" y="1" width="1" height="96" fill="url(#g19)"/><rect x="331" y="1" width="2" height="96" fill="url(#g15)"/><rect x="333" y="1" width="2" height="96" fill="url(#g15)"/><rect x="335" y="1" width="3" height="96" fill="url(#g16)"/><rect x="338" y="1" width="1" height="96" fill="url(#g16)"/><rect x="339" y="1" width="1" height="96" fill="url(#g17)"/><rect x="340" y="1" width="1" height="96" fill="url(#g18)"/><rect x="341" y="1" width="2" height="96" fill="url(#g10)"/><rect x="343" y="1" width="2" height="96" fill="url(#g4)"/><rect x="345" y="1" width="2" height="96" fill="url(#g4)"/><rect x="347" y="1" width="3" height="96" fill="url(#g17)"/><rect x="350" y="1" width="3" height="96" fill="url(#g19)"/><rect x="353" y="1" width="3" height="96" fill="url(#g18)"/><rect x="356" y="1" width="2" height="96" fill="url(#g19)"/><rect x="358" y="1" width="1" height="96" fill="url(#g19)"/><rect x="359" y="1" width="1" height="96" fill="url(#g19)"/><rect x="360" y="1" width="1" height="96" fill="url(#g19)"/><rect x="361" y="1" width="2" height="96" fill="url(#g18)"/><rect x="363" y="1" width="3" height="96" fill="url(#g19)"/><rect x="366" y="1" width="1" height="96" fill="url(#g19)"/><rect x="367" y="1" width="2" height="96" fill="url(#g19)"/><rect x="369" y="1" width="1" height="96" fill="url(#g17)"/><rect x="370" y="1" width="3" height="96" fill="url(#g17)"/><rect x="373" y="1" width="1" height="96" fill="url(#g19)"/><rect x="374" y="1" width="3" height="96" fill="url(#g18)"/><rect x="377" y="1" width="1" height="96" fill="url(#g19)"/><rect x="378" y="1" width="2" height="96" fill="url(#g19)"/><rect x="380" y="1" width="1" height="96" fill="url(#g19)"/><rect x="381" y="1" width="1" height="96" fill="url(#g19)"/><rect x="382" y="1" width="3" height="96" fill="url(#g17)"/><rect x="385" y="1" width="3" height="96" fill="url(#g19)"/><rect x="388" y="1" width="1" height="96" fill="url(#g19)"/><rect x="389" y="1" width="2" height="96" fill="url(#g17)"/><rect x="391" y="1" width="1" height="96" fill="url(#g17)"/><rect x="392" y="1" width="1" height="96" fill="url(#g18)"/><rect x="393" y="1" width="1" height="96" fill="url(#g19)"/><rect x="394" y="1" width="1" height="96" fill="url(#g17)"/><rect x="395" y="1" width="3" height="96" fill="url(#g19)"/><rect x="398" y="1" width="3" height="96" fill="url(#g19)"/><rect x="401" y="1" width="2" height="96" fill="url(#g19)"/><rect x="403" y="1" width="1" height="96" fill="url(#g18)"/><rect x="404" y="1" width="2" height="96" fill="url(#g19)"/><rect x="406" y="1" width="2" height="96" fill="url(#g17)"/><rect x="408" y="1" width="2" height="96" fill="url(#g19)"/><rect x="410" y="1" width="1" height="96" fill="url(#g19)"/><rect x="411" y="1" width="2" height="96" fill="url(#g18)"/><rect x="413" y="1" width="2" height="96" fill="url(#g10)"/><rect x="415" y="1" width="2" height="96" fill="url(#g17)"/><rect x="417" y="1" width="1" height="96" fill="url(#g17)"/><rect x="418" y="1" width="1" height="96" fill="url(#g19)"/><rect x="419" y="1" width="2" height="96" fill="url(#g18)"/><rect x="421" y="1" width="3" height="96" fill="url(#g17)"/><rect x="424" y="1" width="1" height="96" fill="url(#g3)"/><rect x="425" y="1" width="2" height="96" fill="url(#g2)"/><rect x="427" y="1" width="1" height="96" fill="url(#g10)"/><rect x="428" y="1" width="1" height="96" fill="url(#g11)"/><rect x="429" y="1" width="1" height="96" fill="url(#g6)"/><rect x="430" y="1" width="2" height="96" fill="url(#g12)"/><rect x="432" y="1" width="3" height="96" fill="url(#g12)"/><rect x="435" y="1" width="1" height="96" fill="url(#g10)"/><rect x="436" y="1" width="2" height="96" fill="url(#g11)"/><rect x="438" y="1" width="1" height="96" fill="url(#g10)"/><rect x="439" y="1" width="2" height="96" fill="url(#g12)"/><rect x="441" y="1" width="2" height="96" fill="url(#g10)"/><rect x="443" y="1" width="2" height="96" fill="url(#g10)"/><rect x="445" y="1" width="1" height="96" fill="url(#g12)"/><rect x="446" y="1" width="3" height="96" fill="url(#g11)"/><rect x="449" y="1" width="1" height="96" fill="url(#g15)"/><rect x="450" y="1" width="1" height="96" fill="url(#g16)"/><rect x="451" y="1" width="3" height="96" fill="url(#g15)"/><rect x="454" y="1" width="3" height="96" fill="url(#g16)"/><rect x="457" y="1" width="1" height="96" fill="url(#g14)"/><rect x="458" y="1" width="1" height="96" fill="url(#g14)"/><rect x="459" y="1" width="1" height="96" fill="url(#g15)"/><rect x="460" y="1" width="1" height="96" fill="url(#g13)"/><rect x="461" y="1" width="1" height="96" fill="url(#g8)"/><rect x="462" y="1" width="2" height="96" fill="url(#g15)"/><rect x="464" y="1" width="3" height="96" fill="url(#g15)"/><rect x="467" y="1" width="1" height="96" fill="url(#g16)"/><rect x="468" y="1" width="1" height="96" fill="url(#g14)"/><rect x="469" y="1" width="1" height="96" fill="url(#g14)"/><rect x="470" y="1" width="3" height="96" fill="url(#g16)"/><rect x="473" y="1" width="1" height="96" fill="url(#g17)"/><rect x="474" y="1" width="2" height="96" fill="url(#g15)"/><rect x="476" y="1" width="2" height="96" fill="url(#g14)"/><rect x="478" y="1" width="2" height="96" fill="url(#g14)"/><rect x="480" y="1" width="1" height="96" fill="url(#g15)"/><rect x="481" y="1" width="2" height="96" fill="url(#g8)"/><rect x="483" y="1" width="2" height="96" fill="url(#g16)"/><rect x="485" y="1" width="2" height="96" fill="url(#g16)"/><rect x="487" y="1" width="2" height="96" fill="url(#g13)"/><rect x="489" y="1" width="1" height="96" fill="url(#g16)"/><rect x="490" y="1" width="2" height="96" fill="url(#g16)"/><rect x="492" y="1" width="1" height="96" fill="url(#g15)"/><rect x="493" y="1" width="1" height="96" fill="url(#g15)"/><rect x="494" y="1" width="1" height="96" fill="url(#g16)"/><rect x="495" y="1" width="1" height="96" fill="url(#g13)"/><rect x="496" y="1" width="2" height="96" fill="url(#g14)"/><rect x="498" y="1" width="1" height="96" fill="url(#g16)"/><rect x="499" y="1" width="2" height="96" fill="url(#g15)"/><rect x="501" y="1" width="1" height="96" fill="url(#g8)"/><rect x="502" y="1" width="2" height="96" fill="url(#g8)"/><rect x="504" y="1" width="2" height="96" fill="url(#g14)"/><rect x="506" y="1" width="1" height="96" fill="url(#g13)"/><rect x="507" y="1" width="1" height="96" fill="url(#g13)"/><rect x="508" y="1" width="2" height="96" fill="url(#g13)"/><rect x="510" y="1" width="3" height="96" fill="url(#g16)"/><rect x="513" y="1" width="1" height="96" fill="url(#g13)"/><rect x="514" y="1" width="2" height="96" fill="url(#g14)"/><rect x="516" y="1" width="2" height="96" fill="url(#g15)"/><rect x="518" y="1" width="2" height="96" fill="url(#g14)"/><rect x="520" y="1" width="2" height="96" fill="url(#g15)"/><rect x="522" y="1" width="3" height="96" fill="url(#g16)"/><rect x="525" y="1" width="1" height="96" fill="url(#g3)"/><rect x="526" y="1" width="2" height="96" fill="url(#g2)"/><rect x="528" y="1" width="1" height="96" fill="url(#g3)"/><rect x="529" y="1" width="2" height="96" fill="url(#g4)"/><rect x="531" y="1" width="2" height="96" fill="url(#g12)"/><rect x="533" y="1" width="1" height="96" fill="url(#g13)"/><rect x="534" y="1" width="2" height="96" fill="url(#g14)"/><rect x="536" y="1" width="1" height="96" fill="url(#g7)"/><rect x="537" y="1" width="1" height="96" fill="url(#g14)"/><rect x="538" y="1" width="2" height="96" fill="url(#g13)"/><rect x="540" y="1" width="1" height="96" fill="url(#g12)"/><rect x="541" y="1" width="1" height="96" fill="url(#g7)"/><rect x="542" y="1" width="1" height="96" fill="url(#g11)"/><rect x="543" y="1" width="2" height="96" fill="url(#g14)"/><rect x="545" y="1" width="2" height="96" fill="url(#g13)"/><rect x="547" y="1" width="3" height="96" fill="url(#g10)"/><rect x="550" y="1" width="2" height="96" fill="url(#g11)"/><rect x="552" y="1" width="1" height="96" fill="url(#g7)"/><rect x="553" y="1" width="1" height="96" fill="url(#g13)"/><rect x="554" y="1" width="2" height="96" fill="url(#g13)"/><rect x="556" y="1" width="1" height="96" fill="url(#g14)"/><rect x="557" y="1" width="1" height="96" fill="url(#g11)"/><rect x="558" y="1" width="1" height="96" fill="url(#g11)"/><rect x="559" y="1" width="2" height="96" fill="url(#g11)"/><rect x="561" y="1" width="3" height="96" fill="url(#g13)"/><rect x="564" y="1" width="1" height="96" fill="url(#g14)"/><rect x="565" y="1" width="1" height="96" fill="url(#g7)"/><rect x="566" y="1" width="3" height="96" fill="url(#g12)"/><rect x="569" y="1" width="1" height="96" fill="url(#g13)"/><rect x="570" y="1" width="2" height="96" fill="url(#g12)"/><rect x="572" y="1" width="1" height="96" fill="url(#g13)"/><rect x="573" y="1" width="3" height="96" fill="url(#g11)"/><rect x="576" y="1" width="2" height="96" fill="url(#g14)"/><rect x="578" y="1" width="1" height="96" fill="url(#g11)"/><rect x="579" y="1" width="2" height="96" fill="url(#g13)"/><rect x="581" y="1" width="3" height="96" fill="url(#g11)"/><rect x="584" y="1" width="2" height="96" fill="url(#g11)"/><rect x="586" y="1" width="3" height="96" fill="url(#g4)"/><rect x="589" y="1" width="1" height="96" fill="url(#g3)"/><rect x="590" y="1" width="3" height="96" fill="url(#g15)"/><rect x="593" y="1" width="3" height="96" fill="url(#g14)"/><rect x="596" y="1" width="1" height="96" fill="url(#g15)"/><rect x="597" y="1" width="2" height="96" fill="url(#g13)"/><rect x="599" y="1" width="2" height="96" fill="url(#g13)"/><rect x="601" y="1" width="1" height="96" fill="url(#g14)"/><rect x="602" y="1" width="2" height="96" fill="url(#g12)"/><rect x="604" y="1" width="2" height="96" fill="url(#g12)"/><rect x="606" y="1" width="2" height="96" fill="url(#g12)"/><rect x="608" y="1" width="3" height="96" fill="url(#g13)"/><rect x="611" y="1" width="1" height="96" fill="url(#g13)"/><rect x="612" y="1" width="2" height="96" fill="url(#g13)"/><rect x="614" y="1" width="1" height="96" fill="url(#g14)"/><rect x="615" y="1" width="2" height="96" fill="url(#g11)"/><rect x="617" y="1" width="1" height="96" fill="url(#g11)"/><rect x="618" y="1" width="2" height="96" fill="url(#g14)"/><rect x="620" y="1" width="3" height="96" fill="url(#g13)"/><rect x="623" y="1" width="1" height="96" fill="url(#g13)"/><rect x="624" y="1" width="1" height="96" fill="url(#g11)"/><rect x="625" y="1" width="1" height="96" fill="url(#g14)"/><rect x="626" y="1" width="1" height="96" fill="url(#g11)"/><rect x="627" y="1" width="2" height="96" fill="url(#g7)"/><rect x="629" y="1" width="2" height="96" fill="url(#g12)"/><rect x="631" y="1" width="1" height="96" fill="url(#g13)"/><rect x="632" y="1" width="2" height="96" fill="url(#g14)"/><rect x="634" y="1" width="3" height="96" fill="url(#g13)"/><rect x="637" y="1" width="1" height="96" fill="url(#g7)"/><rect x="638" y="1" width="2" height="96" fill="url(#g13)"/><rect x="640" y="1" width="3" height="96" fill="url(#g13)"/><rect x="643" y="1" width="1" height="96" fill="url(#g7)"/><rect x="644" y="1" width="1" height="96" fill="url(#g11)"/><rect x="645" y="1" width="1" height="96" fill="url(#g12)"/><rect x="646" y="1" width="1" height="96" fill="url(#g15)"/><rect x="647" y="1" width="1" height="96" fill="url(#g13)"/><rect x="648" y="1" width="1" height="96" fill="url(#g14)"/><rect x="649" y="1" width="2" height="96" fill="url(#g15)"/><rect x="651" y="1" width="1" height="96" fill="url(#g14)"/><rect x="652" y="1" width="1" height="96" fill="url(#g13)"/><rect x="653" y="1" width="3" height="96" fill="url(#g12)"/><rect x="656" y="1" width="1" height="96" fill="url(#g13)"/><rect x="657" y="1" width="1" height="96" fill="url(#g12)"/><rect x="658" y="1" width="3" height="96" fill="url(#g14)"/><rect x="661" y="1" width="1" height="96" fill="url(#g11)"/><rect x="662" y="1" width="2" height="96" fill="url(#g12)"/><rect x="664" y="1" width="1" height="96" fill="url(#g15)"/><rect x="665" y="1" width="2" height="96" fill="url(#g15)"/><rect x="667" y="1" width="2" height="96" fill="url(#g14)"/><rect x="669" y="1" width="2" height="96" fill="url(#g14)"/><rect x="671" y="1" width="3" height="96" fill="url(#g12)"/><rect x="674" y="1" width="1" height="96" fill="url(#g13)"/><rect x="675" y="1" width="1" height="96" fill="url(#g15)"/><rect x="676" y="1" width="3" height="96" fill="url(#g15)"/><rect x="679" y="1" width="2" height="96" fill="url(#g14)"/><rect x="681" y="1" width="1" height="96" fill="url(#g13)"/><rect x="682" y="1" width="1" height="96" fill="url(#g15)"/><rect x="683" y="1" width="1" height="96" fill="url(#g13)"/><rect x="684" y="1" width="3" height="96" fill="url(#g14)"/><rect x="687" y="1" width="1" height="96" fill="url(#g13)"/><rect x="688" y="1" width="1" height="96" fill="url(#g14)"/><rect x="689" y="1" width="1" height="96" fill="url(#g12)"/><rect x="690" y="1" width="1" height="96" fill="url(#g13)"/><rect x="691" y="1" width="2" height="96" fill="url(#g13)"/><rect x="693" y="1" width="1" height="96" fill="url(#g12)"/><rect x="694" y="1" width="2" height="96" fill="url(#g15)"/><rect x="696" y="1" width="2" height="96" fill="url(#g13)"/><rect x="698" y="1" width="1" height="96" fill="url(#g13)"/><rect x="699" y="1" width="3" height="96" fill="url(#g14)"/><rect x="702" y="1" width="1" height="96" fill="url(#g3)"/><rect x="703" y="1" width="2" height="96" fill="url(#g19)"/><rect x="705" y="1" width="1" height="96" fill="url(#g18)"/><rect x="706" y="1" width="1" height="96" fill="url(#g18)"/><rect x="707" y="1" width="3" height="96" fill="url(#g17)"/><rect x="710" y="1" width="1" height="96" fill="url(#g19)"/><rect x="711" y="1" width="2" height="96" fill="url(#g19)"/><rect x="713" y="1" width="2" height="96" fill="url(#g18)"/><rect x="715" y="1" width="1" height="96" fill="url(#g18)"/><rect x="716" y="1" width="3" height="96" fill="url(#g10)"/><rect x="719" y="1" width="2" height="96" fill="url(#g17)"/><rect x="721" y="1" width="1" height="96" fill="url(#g10)"/><rect x="722" y="1" width="3" height="96" fill="url(#g19)"/><rect x="725" y="1" width="2" height="96" fill="url(#g19)"/><rect x="727" y="1" width="1" height="96" fill="url(#g17)"/><rect x="728" y="1" width="2" height="96" fill="url(#g17)"/><rect x="730" y="1" width="3" height="96" fill="url(#g19)"/><rect x="733" y="1" width="3" height="96" fill="url(#g17)"/><rect x="736" y="1" width="2" height="96" fill="url(#g18)"/><rect x="738" y="1" width="2" height="96" fill="url(#g19)"/><rect x="740" y="1" width="2" height="96" fill="url(#g18)"/><rect x="742" y="1" width="3" height="96" fill="url(#g19)"/><rect x="745" y="1" width="1" height="96" fill="url(#g17)"/><rect x="746" y="1" width="3" height="96" fill="url(#g17)"/><rect x="749" y="1" width="2" height="96" fill="url(#g19)"/><rect x="751" y="1" width="1" height="96" fill="url(#g18)"/><rect x="752" y="1" width="1" height="96" fill="url(#g19)"/><rect x="753" y="1" width="1" height="96" fill="url(#g17)"/><rect x="754" y="1" width="1" height="96" fill="url(#g19)"/><rect x="755" y="1" width="1" height="96" fill="url(#g19)"/><rect x="756" y="1" width="3" height="96" fill="url(#g19)"/><rect x="759" y="1" width="1" height="96" fill="url(#g19)"/><rect x="760" y="1" width="3" height="96" fill="url(#g19)"/><rect x="763" y="1" width="1" height="96" fill="url(#g19)"/><rect x="764" y="1" width="2" height="96" fill="url(#g18)"/><rect x="766" y="1" width="2" height="96" fill="url(#g19)"/><rect x="768" y="1" width="2" height="96" fill="url(#g16)"/><rect x="770" y="1" width="2" height="96" fill="url(#g17)"/><rect x="772" y="1" width="1" height="96" fill="url(#g19)"/><rect x="773" y="1" width="2" height="96" fill="url(#g17)"/><rect x="775" y="1" width="1" height="96" fill="url(#g18)"/><rect x="776" y="1" width="1" height="96" fill="url(#g19)"/><rect x="777" y="1" width="1" height="96" fill="url(#g17)"/><rect x="778" y="1" width="3" height="96" fill="url(#g18)"/><rect x="781" y="1" width="2" height="96" fill="url(#g16)"/><rect x="783" y="1" width="1" height="96" fill="url(#g17)"/><rect x="784" y="1" width="2" height="96" fill="url(#g18)"/><rect x="786" y="1" width="1" height="96" fill="url(#g2)"/><rect x="787" y="1" width="3" height="96" fill="url(#g3)"/><rect x="790" y="1" width="1" height="96" fill="url(#g13)"/><rect x="791" y="1" width="2" height="96" fill="url(#g14)"/><rect x="793" y="1" width="1" height="96" fill="url(#g12)"/><rect x="794" y="1" width="2" height="96" fill="url(#g14)"/><rect x="796" y="1" width="1" height="96" fill="url(#g13)"/><rect x="797" y="1" width="3" height="96" fill="url(#g15)"/><rect x="800" y="1" width="2" height="96" fill="url(#g12)"/><rect x="802" y="1" width="2" height="96" fill="url(#g15)"/><rect x="804" y="1" width="1" height="96" fill="url(#g8)"/><rect x="805" y="1" width="1" height="96" fill="url(#g13)"/><rect x="806" y="1" width="2" height="96" fill="url(#g13)"/><rect x="808" y="1" width="1" height="96" fill="url(#g13)"/><rect x="809" y="1" width="2" height="96" fill="url(#g13)"/><rect x="811" y="1" width="1" height="96" fill="url(#g15)"/><rect x="812" y="1" width="2" height="96" fill="url(#g14)"/><rect x="814" y="1" width="1" height="96" fill="url(#g15)"/><rect x="815" y="1" width="1" height="96" fill="url(#g16)"/><rect x="816" y="1" width="3" height="96" fill="url(#g13)"/><rect x="819" y="1" width="2" height="96" fill="url(#g15)"/><rect x="821" y="1" width="1" height="96" fill="url(#g12)"/><rect x="822" y="1" width="2" height="96" fill="url(#g13)"/><rect x="824" y="1" width="2" height="96" fill="url(#g15)"/><rect x="826" y="1" width="1" height="96" fill="url(#g8)"/><rect x="827" y="1" width="1" height="96" fill="url(#g13)"/><rect x="828" y="1" width="2" height="96" fill="url(#g15)"/><rect x="830" y="1" width="1" height="96" fill="url(#g14)"/><rect x="831" y="1" width="1" height="96" fill="url(#g15)"/><rect x="832" y="1" width="2" height="96" fill="url(#g14)"/><rect x="834" y="1" width="2" height="96" fill="url(#g16)"/><rect x="836" y="1" width="2" height="96" fill="url(#g8)"/><rect x="838" y="1" width="1" height="96" fill="url(#g12)"/><rect x="839" y="1" width="1" height="96" fill="url(#g16)"/><rect x="840" y="1" width="3" height="96" fill="url(#g15)"/><rect x="843" y="1" width="3" height="96" fill="url(#g14)"/><rect x="846" y="1" width="2" height="96" fill="url(#g16)"/><rect x="848" y="1" width="2" height="96" fill="url(#g16)"/><rect x="850" y="1" width="2" height="96" fill="url(#g15)"/><rect x="852" y="1" width="2" height="96" fill="url(#g15)"/><rect x="854" y="1" width="2" height="96" fill="url(#g14)"/><rect x="856" y="1" width="1" height="96" fill="url(#g12)"/><rect x="857" y="1" width="2" height="96" fill="url(#g14)"/><rect x="859" y="1" width="1" height="96" fill="url(#g14)"/><rect x="860" y="1" width="2" height="96" fill="url(#g16)"/><rect x="0" y="98" width="2" height="95" fill="url(#g16)"/><rect x="2" y="98" width="2" height="95" fill="url(#g16)"/><rect x="4" y="98" width="2" height="95" fill="url(#g10)"/><rect x="6" y="98" width="2" height="95" fill="url(#g17)"/><rect x="8" y="98" width="1" height="95" fill="url(#g16)"/><rect x="9" y="98" width="1" height="95" fill="url(#g18)"/><rect x="10" y="98" width="3" height="95" fill="url(#g17)"/><rect x="13" y="98" width="1" height="95" fill="url(#g18)"/><rect x="14" y="98" width="2" height="95" fill="url(#g19)"/><rect x="16" y="98" width="2" height="95" fill="url(#g16)"/><rect x="18" y="98" width="1" height="95" fill="url(#g19)"/><rect x="19" y="98" width="1" height="95" fill="url(#g16)"/><rect x="20" y="98" width="2" height="95" fill="url(#g18)"/><rect x="22" y="98" width="1" height="95" fill="url(#g15)"/><rect x="23" y="98" width="1" height="95" fill="url(#g16)"/><rect x="24" y="98" width="2" height="95" fill="url(#g16)"/><rect x="26" y="98" width="2" height="95" fill="url(#g15)"/><rect x="28" y="98" width="2" height="95" fill="url(#g19)"/><rect x="30" y="98" width="1" height="95" fill="url(#g18)"/><rect x="31" y="98" width="2" height="95" fill="url(#g19)"/><rect x="33" y="98" width="1" height="95" fill="url(#g17)"/><rect x="34" y="98" width="1" height="95" fill="url(#g18)"/><rect x="35" y="98" width="1" height="95" fill="url(#g17)"/><rect x="36" y="98" width="2" height="95" fill="url(#g19)"/><rect x="38" y="98" width="1" height="95" fill="url(#g16)"/><rect x="39" y="98" width="1" height="95" fill="url(#g16)"/><rect x="40" y="98" width="1" height="95" fill="url(#g18)"/><rect x="41" y="98" width="2" height="95" fill="url(#g16)"/><rect x="43" y="98" width="2" height="95" fill="url(#g18)"/><rect x="45" y="98" width="1" height="95" fill="url(#g16)"/><rect x="46" y="98" width="2" height="95" fill="url(#g18)"/><rect x="48" y="98" width="1" height="95" fill="url(#g2)"/><rect x="49" y="98" width="1" height="95" fill="url(#g2)"/><rect x="50" y="98" width="1" height="95" fill="url(#g1)"/><rect x="51" y="98" width="2" height="95" fill="url(#g3)"/><rect x="53" y="98" width="1" height="95" fill="url(#g15)"/><rect x="54" y="98" width="2" height="95" fill="url(#g11)"/><rect x="56" y="98" width="2" height="95" fill="url(#g12)"/><rect x="58" y="98" width="1" height="95" fill="url(#g13)"/><rect x="59" y="98" width="1" height="95" fill="url(#g13)"/><rect x="60" y="98" width="1" height="95" fill="url(#g15)"/><rect x="61" y="98" width="2" height="95" fill="url(#g13)"/><rect x="63" y="98" width="2" height="95" fill="url(#g12)"/><rect x="65" y="98" width="3" height="95" fill="url(#g13)"/><rect x="68" y="98" width="2" height="95" fill="url(#g15)"/><rect x="70" y="98" width="1" height="95" fill="url(#g7)"/><rect x="71" y="98" width="3" height="95" fill="url(#g13)"/><rect x="74" y="98" width="2" height="95" fill="url(#g12)"/><rect x="76" y="98" width="2" height="95" fill="url(#g15)"/><rect x="78" y="98" width="2" height="95" fill="url(#g15)"/><rect x="80" y="98" width="1" height="95" fill="url(#g14)"/><rect x="81" y="98" width="3" height="95" fill="url(#g12)"/><rect x="84" y="98" width="2" height="95" fill="url(#g12)"/><rect x="86" y="98" width="1" height="95" fill="url(#g11)"/><rect x="87" y="98" width="1" height="95" fill="url(#g12)"/><rect x="88" y="98" width="1" height="95" fill="url(#g14)"/><rect x="89" y="98" width="2" height="95" fill="url(#g14)"/><rect x="91" y="98" width="2" height="95" fill="url(#g7)"/><rect x="93" y="98" width="3" height="95" fill="url(#g13)"/><rect x="96" y="98" width="1" height="95" fill="url(#g14)"/><rect x="97" y="98" width="1" height="95" fill="url(#g12)"/><rect x="98" y="98" width="1" height="95" fill="url(#g12)"/><rect x="99" y="98" width="1" height="95" fill="url(#g13)"/><rect x="100" y="98" width="1" height="95" fill="url(#g13)"/><rect x="101" y="98" width="1" height="95" fill="url(#g12)"/><rect x="102" y="98" width="2" height="95" fill="url(#g12)"/><rect x="104" y="98" width="2" height="95" fill="url(#g12)"/><rect x="106" y="98" width="1" height="95" fill="url(#g13)"/><rect x="107" y="98" width="1" height="95" fill="url(#g13)"/><rect x="108" y="98" width="2" height="95" fill="url(#g13)"/><rect x="110" y="98" width="3" height="95" fill="url(#g15)"/><rect x="113" y="98" width="1" height="95" fill="url(#g12)"/><rect x="114" y="98" width="1" height="95" fill="url(#g7)"/><rect x="115" y="98" width="2" height="95" fill="url(#g12)"/><rect x="117" y="98" width="1" height="95" fill="url(#g15)"/><rect x="118" y="98" width="2" height="95" fill="url(#g14)"/><rect x="120" y="98" width="1" height="95" fill="url(#g7)"/><rect x="121" y="98" width="2" height="95" fill="url(#g15)"/><rect x="123" y="98" width="2" height="95" fill="url(#g4)"/><rect x="125" y="98" width="1" height="95" fill="url(#g5)"/><rect x="126" y="98" width="1" height="95" fill="url(#g5)"/><rect x="127" y="98" width="2" height="95" fill="url(#g4)"/><rect x="129" y="98" width="1" height="95" fill="url(#g6)"/><rect x="130" y="98" width="2" height="95" fill="url(#g5)"/><rect x="132" y="98" width="1" height="95" fill="url(#g17)"/><rect x="133" y="98" width="3" height="95" fill="url(#g16)"/><rect x="136" y="98" width="1" height="95" fill="url(#g18)"/><rect x="137" y="98" width="1" height="95" fill="url(#g16)"/><rect x="138" y="98" width="1" height="95" fill="url(#g19)"/><rect x="139" y="98" width="1" height="95" fill="url(#g16)"/><rect x="140" y="98" width="2" height="95" fill="url(#g15)"/><rect x="142" y="98" width="3" height="95" fill="url(#g18)"/><rect x="145" y="98" width="1" height="95" fill="url(#g10)"/><rect x="146" y="98" width="1" height="95" fill="url(#g17)"/><rect x="147" y="98" width="2" height="95" fill="url(#g19)"/><rect x="149" y="98" width="1" height="95" fill="url(#g10)"/><rect x="150" y="98" width="1" height="95" fill="url(#g17)"/><rect x="151" y="98" width="1" height="95" fill="url(#g17)"/><rect x="152" y="98" width="3" height="95" fill="url(#g17)"/><rect x="155" y="98" width="1" height="95" fill="url(#g16)"/><rect x="156" y="98" width="2" height="95" fill="url(#g17)"/><rect x="158" y="98" width="1" height="95" fill="url(#g15)"/><rect x="159" y="98" width="1" height="95" fill="url(#g17)"/><rect x="160" y="98" width="1" height="95" fill="url(#g16)"/><rect x="161" y="98" width="2" height="95" fill="url(#g16)"/><rect x="163" y="98" width="1" height="95" fill="url(#g17)"/><rect x="164" y="98" width="1" height="95" fill="url(#g16)"/><rect x="165" y="98" width="3" height="95" fill="url(#g18)"/><rect x="168" y="98" width="2" height="95" fill="url(#g18)"/><rect x="170" y="98" width="1" height="95" fill="url(#g16)"/><rect x="171" y="98" width="3" height="95" fill="url(#g16)"/><rect x="174" y="98" width="1" height="95" fill="url(#g16)"/><rect x="175" y="98" width="3" height="95" fill="url(#g17)"/><rect x="178" y="98" width="1" height="95" fill="url(#g10)"/><rect x="179" y="98" width="3" height="95" fill="url(#g18)"/><rect x="182" y="98" width="1" height="95" fill="url(#g17)"/><rect x="183" y="98" width="1" height="95" fill="url(#g19)"/><rect x="184" y="98" width="2" height="95" fill="url(#g19)"/><rect x="186" y="98" width="2" height="95" fill="url(#g18)"/><rect x="188" y="98" width="2" height="95" fill="url(#g16)"/><rect x="190" y="98" width="1" height="95" fill="url(#g19)"/><rect x="191" y="98" width="1" height="95" fill="url(#g18)"/><rect x="192" y="98" width="1" height="95" fill="url(#g19)"/><rect x="193" y="98" width="2" height="95" fill="url(#g17)"/><rect x="195" y="98" width="3" height="95" fill="url(#g3)"/><rect x="198" y="98" width="2" height="95" fill="url(#g11)"/><rect x="200" y="98" width="1" height="95" fill="url(#g11)"/><rect x="201" y="98" width="3" height="95" fill="url(#g11)"/><rect x="204" y="98" width="2" height="95" fill="url(#g14)"/><rect x="206" y="98" width="1" height="95" fill="url(#g11)"/><rect x="207" y="98" width="2" height="95" fill="url(#g11)"/><rect x="209" y="98" width="1" height="95" fill="url(#g12)"/><rect x="210" y="98" width="2" height="95" fill="url(#g12)"/><rect x="212" y="98" width="2" height="95" fill="url(#g13)"/><rect x="214" y="98" width="2" height="95" fill="url(#g11)"/><rect x="216" y="98" width="1" height="95" fill="url(#g10)"/><rect x="217" y="98" width="2" height="95" fill="url(#g12)"/><rect x="219" y="98" width="1" height="95" fill="url(#g15)"/><rect x="220" y="98" width="1" height="95" fill="url(#g13)"/><rect x="221" y="98" width="2" height="95" fill="url(#g15)"/><rect x="223" y="98" width="3" height="95" fill="url(#g15)"/><rect x="226" y="98" width="1" height="95" fill="url(#g14)"/><rect x="227" y="98" width="1" height="95" fill="url(#g14)"/><rect x="228" y="98" width="3" height="95" fill="url(#g14)"/><rect x="231" y="98" width="3" height="95" fill="url(#g16)"/><rect x="234" y="98" width="2" height="95" fill="url(#g16)"/><rect x="236" y="98" width="2" height="95" fill="url(#g14)"/><rect x="238" y="98" width="2" height="95" fill="url(#g15)"/><rect x="240" y="98" width="2" height="95" fill="url(#g13)"/><rect x="242" y="98" width="3" height="95" fill="url(#g16)"/><rect x="245" y="98" width="1" height="95" fill="url(#g15)"/><rect x="246" y="98" width="2" height="95" fill="url(#g16)"/><rect x="248" y="98" width="1" height="95" fill="url(#g16)"/><rect x="249" y="98" width="2" height="95" fill="url(#g16)"/><rect x="251" y="98" width="1" height="95" fill="url(#g14)"/><rect x="252" y="98" width="1" height="95" fill="url(#g16)"/><rect x="253" y="98" width="1" height="95" fill="url(#g16)"/><rect x="254" y="98" width="3" height="95" fill="url(#g13)"/><rect x="257" y="98" width="1" height="95" fill="url(#g15)"/><rect x="258" y="98" width="2" height="95" fill="url(#g13)"/><rect x="260" y="98" width="1" height="95" fill="url(#g14)"/><rect x="261" y="98" width="3" height="95" fill="url(#g13)"/><rect x="264" y="98" width="2" height="95" fill="url(#g17)"/><rect x="266" y="98" width="3" height="95" fill="url(#g14)"/><rect x="269" y="98" width="2" height="95" fill="url(#g14)"/><rect x="271" y="98" width="2" height="95" fill="url(#g14)"/><rect x="273" y="98" width="1" height="95" fill="url(#g14)"/><rect x="274" y="98" width="1" height="95" fill="url(#g15)"/><rect x="275" y="98" width="1" height="95" fill="url(#g14)"/><rect x="276" y="98" width="2" height="95" fill="url(#g14)"/><rect x="278" y="98" width="1" height="95" fill="url(#g14)"/><rect x="279" y="98" width="1" height="95" fill="url(#g14)"/><rect x="280" y="98" width="1" height="95" fill="url(#g13)"/><rect x="281" y="98" width="2" height="95" fill="url(#g15)"/><rect x="283" y="98" width="2" height="95" fill="url(#g15)"/><rect x="285" y="98" width="2" height="95" fill="url(#g14)"/><rect x="287" y="98" width="1" height="95" fill="url(#g16)"/><rect x="288" y="98" width="1" height="95" fill="url(#g13)"/><rect x="289" y="98" width="2" height="95" fill="url(#g14)"/><rect x="291" y="98" width="2" height="95" fill="url(#g15)"/><rect x="293" y="98" width="3" height="95" fill="url(#g16)"/><rect x="296" y="98" width="2" height="95" fill="url(#g3)"/><rect x="298" y="98" width="2" height="95" fill="url(#g3)"/><rect x="300" y="98" width="1" height="95" fill="url(#g14)"/><rect x="301" y="98" width="3" height="95" fill="url(#g16)"/><rect x="304" y="98" width="2" height="95" fill="url(#g17)"/><rect x="306" y="98" width="1" height="95" fill="url(#g17)"/><rect x="307" y="98" width="3" height="95" fill="url(#g16)"/><rect x="310" y="98" width="2" height="95" fill="url(#g15)"/><rect x="312" y="98" width="1" height="95" fill="url(#g15)"/><rect x="313" y="98" width="2" height="95" fill="url(#g14)"/><rect x="315" y="98" width="2" height="95" fill="url(#g16)"/><rect x="317" y="98" width="1" height="95" fill="url(#g18)"/><rect x="318" y="98" width="1" height="95" fill="url(#g15)"/><rect x="319" y="98" width="1" height="95" fill="url(#g17)"/><rect x="320" y="98" width="1" height="95" fill="url(#g15)"/><rect x="321" y="98" width="2" height="95" fill="url(#g18)"/><rect x="323" y="98" width="2" height="95" fill="url(#g17)"/><rect x="325" y="98" width="2" height="95" fill="url(#g17)"/><rect x="327" y="98" width="2" height="95" fill="url(#g16)"/><rect x="329" y="98" width="1" height="95" fill="url(#g16)"/><rect x="330" y="98" width="1" height="95" fill="url(#g15)"/><rect x="331" y="98" width="3" height="95" fill="url(#g17)"/><rect x="334" y="98" width="3" height="95" fill="url(#g18)"/><rect x="337" y="98" width="2" height="95" fill="url(#g18)"/><rect x="339" y="98" width="1" height="95" fill="url(#g15)"/><rect x="340" y="98" width="3" height="95" fill="url(#g9)"/><rect x="343" y="98" width="3" height="95" fill="url(#g5)"/><rect x="346" y="98" width="1" height="95" fill="url(#g19)"/><rect x="347" y="98" width="1" height="95" fill="url(#g17)"/><rect x="348" y="98" width="1" height="95" fill="url(#g17)"/><rect x="349" y="98" width="2" height="95" fill="url(#g19)"/><rect x="351" y="98" width="2" height="95" fill="url(#g16)"/><rect x="353" y="98" width="1" height="95" fill="url(#g19)"/><rect x="354" y="98" width="2" height="95" fill="url(#g10)"/><rect x="356" y="98" width="1" height="95" fill="url(#g16)"/><rect x="357" y="98" width="2" height="95" fill="url(#g18)"/><rect x="359" y="98" width="2" height="95" fill="url(#g17)"/><rect x="361" y="98" width="3" height="95" fill="url(#g10)"/><rect x="364" y="98" width="3" height="95" fill="url(#g19)"/><rect x="367" y="98" width="2" height="95" fill="url(#g16)"/><rect x="369" y="98" width="1" height="95" fill="url(#g16)"/><rect x="370" y="98" width="1" height="95" fill="url(#g16)"/><rect x="371" y="98" width="1" height="95" fill="url(#g17)"/><rect x="372" y="98" width="1" height="95" fill="url(#g17)"/><rect x="373" y="98" width="2" height="95" fill="url(#g18)"/><rect x="375" y="98" width="1" height="95" fill="url(#g16)"/><rect x="376" y="98" width="2" height="95" fill="url(#g16)"/><rect x="378" y="98" width="3" height="95" fill="url(#g16)"/><rect x="381" y="98" width="2" height="95" fill="url(#g17)"/><rect x="383" y="98" width="2" height="95" fill="url(#g17)"/><rect x="385" y="98" width="2" height="95" fill="url(#g19)"/><rect x="387" y="98" width="2" height="95" fill="url(#g16)"/><rect x="389" y="98" width="2" height="95" fill="url(#g18)"/><rect x="391" y="98" width="1" height="95" fill="url(#g16)"/><rect x="392" y="98" width="2" height="95" fill="url(#g19)"/><rect x="394" y="98" width="1" height="95" fill="url(#g15)"/><rect x="395" y="98" width="2" height="95" fill="url(#g15)"/><rect x="397" y="98" width="2" height="95" fill="url(#g16)"/><rect x="399" y="98" width="2" height="95" fill="url(#g17)"/><rect x="401" y="98" width="1" height="95" fill="url(#g17)"/><rect x="402" y="98" width="3" height="95" fill="url(#g18)"/><rect x="405" y="98" width="2" height="95" fill="url(#g16)"/><rect x="407" y="98" width="2" height="95" fill="url(#g18)"/><rect x="409" y="98" width="1" height="95" fill="url(#g15)"/><rect x="410" y="98" width="2" height="95" fill="url(#g16)"/><rect x="412" y="98" width="3" height="95" fill="url(#g18)"/><rect x="415" y="98" width="3" height="95" fill="url(#g18)"/><rect x="418" y="98" width="1" height="95" fill="url(#g15)"/><rect x="419" y="98" width="2" height="95" fill="url(#g17)"/><rect x="421" y="98" width="2" height="95" fill="url(#g19)"/><rect x="423" y="98" width="1" height="95" fill="url(#g2)"/><rect x="424" y="98" width="2" height="95" fill="url(#g3)"/><rect x="426" y="98" width="1" height="95" fill="url(#g5)"/><rect x="427" y="98" width="2" height="95" fill="url(#g8)"/><rect x="429" y="98" width="1" height="95" fill="url(#g11)"/><rect x="430" y="98" width="1" height="95" fill="url(#g5)"/><rect x="431" y="98" width="3" height="95" fill="url(#g9)"/><rect x="434" y="98" width="2" height="95" fill="url(#g8)"/><rect x="436" y="98" width="3" height="95" fill="url(#g8)"/><rect x="439" y="98" width="2" height="95" fill="url(#g10)"/><rect x="441" y="98" width="1" height="95" fill="url(#g8)"/><rect x="442" y="98" width="1" height="95" fill="url(#g8)"/><rect x="443" y="98" width="2" height="95" fill="url(#g8)"/><rect x="445" y="98" width="2" height="95" fill="url(#g9)"/><rect x="447" y="98" width="3" height="95" fill="url(#g7)"/><rect x="450" y="98" width="3" height="95" fill="url(#g8)"/><rect x="453" y="98" width="2" height="95" fill="url(#g14)"/><rect x="455" y="98" width="1" height="95" fill="url(#g14)"/><rect x="456" y="98" width="3" height="95" fill="url(#g16)"/><rect x="459" y="98" width="1" height="95" fill="url(#g16)"/><rect x="460" y="98" width="1" height="95" fill="url(#g16)"/><rect x="461" y="98" width="3" height="95" fill="url(#g13)"/><rect x="464" y="98" width="2" height="95" fill="url(#g16)"/><rect x="466" y="98" width="2" height="95" fill="url(#g16)"/><rect x="468" y="98" width="1" height="95" fill="url(#g14)"/><rect x="469" y="98" width="1" height="95" fill="url(#g14)"/><rect x="470" y="98" width="3" height="95" fill="url(#g14)"/><rect x="473" y="98" width="3" height="95" fill="url(#g15)"/><rect x="476" y="98" width="1" height="95" fill="url(#g14)"/><rect x="477" y="98" width="1" height="95" fill="url(#g13)"/><rect x="478" y="98" width="1" height="95" fill="url(#g15)"/><rect x="479" y="98" width="3" height="95" fill="url(#g15)"/><rect x="482" y="98" width="1" height="95" fill="url(#g12)"/><rect x="483" y="98" width="1" height="95" fill="url(#g14)"/><rect x="484" y="98" width="2" height="95" fill="url(#g15)"/><rect x="486" y="98" width="1" height="95" fill="url(#g13)"/><rect x="487" y="98" width="2" height="95" fill="url(#g13)"/><rect x="489" y="98" width="2" height="95" fill="url(#g14)"/><rect x="491" y="98" width="1" height="95" fill="url(#g14)"/><rect x="492" y="98" width="2" height="95" fill="url(#g12)"/><rect x="494" y="98" width="2" height="95" fill="url(#g15)"/><rect x="496" y="98" width="1" height="95" fill="url(#g14)"/><rect x="497" y="98" width="1" height="95" fill="url(#g12)"/><rect x="498" y="98" width="2" height="95" fill="url(#g14)"/><rect x="500" y="98" width="3" height="95" fill="url(#g16)"/><rect x="503" y="98" width="1" height="95" fill="url(#g13)"/><rect x="504" y="98" width="2" height="95" fill="url(#g12)"/><rect x="506" y="98" width="1" height="95" fill="url(#g15)"/><rect x="507" y="98" width="1" height="95" fill="url(#g15)"/><rect x="508" y="98" width="2" height="95" fill="url(#g15)"/><rect x="510" y="98" width="2" height="95" fill="url(#g15)"/><rect x="512" y="98" width="1" height="95" fill="url(#g12)"/><rect x="513" y="98" width="1" height="95" fill="url(#g15)"/><rect x="514" y="98" width="1" height="95" fill="url(#g16)"/><rect x="515" y="98" width="1" height="95" fill="url(#g16)"/><rect x="516" y="98" width="1" height="95" fill="url(#g15)"/><rect x="517" y="98" width="2" height="95" fill="url(#g16)"/><rect x="519" y="98" width="3" height="95" fill="url(#g13)"/><rect x="522" y="98" width="3" height="95" fill="url(#g14)"/><rect x="525" y="98" width="2" height="95" fill="url(#g3)"/><rect x="527" y="98" width="3" height="95" fill="url(#g2)"/><rect x="530" y="98" width="1" height="95" fill="url(#g7)"/><rect x="531" y="98" width="3" height="95" fill="url(#g7)"/><rect x="534" y="98" width="3" height="95" fill="url(#g10)"/><rect x="537" y="98" width="3" height="95" fill="url(#g14)"/><rect x="540" y="98" width="1" height="95" fill="url(#g14)"/><rect x="541" y="98" width="2" height="95" fill="url(#g7)"/><rect x="543" y="98" width="1" height="95" fill="url(#g13)"/><rect x="544" y="98" width="1" height="95" fill="url(#g13)"/><rect x="545" y="98" width="2" height="95" fill="url(#g11)"/><rect x="547" y="98" width="1" height="95" fill="url(#g11)"/><rect x="548" y="98" width="2" height="95" fill="url(#g12)"/><rect x="550" y="98" width="2" height="95" fill="url(#g7)"/><rect x="552" y="98" width="2" height="95" fill="url(#g14)"/><rect x="554" y="98" width="2" height="95" fill="url(#g14)"/><rect x="556" y="98" width="2" height="95" fill="url(#g7)"/><rect x="558" y="98" width="1" height="95" fill="url(#g13)"/><rect x="559" y="98" width="2" height="95" fill="url(#g14)"/><rect x="561" y="98" width="1" height="95" fill="url(#g14)"/><rect x="562" y="98" width="1" height="95" fill="url(#g11)"/><rect x="563" y="98" width="2" height="95" fill="url(#g13)"/><rect x="565" y="98" width="2" height="95" fill="url(#g13)"/><rect x="567" y="98" width="1" height="95" fill="url(#g12)"/><rect x="568" y="98" width="2" height="95" fill="url(#g12)"/><rect x="570" y="98" width="3" height="95" fill="url(#g12)"/><rect x="573" y="98" width="1" height="95" fill="url(#g14)"/><rect x="574" y="98" width="3" height="95" fill="url(#g14)"/><rect x="577" y="98" width="2" height="95" fill="url(#g11)"/><rect x="579" y="98" width="1" height="95" fill="url(#g7)"/><rect x="580" y="98" width="1" height="95" fill="url(#g14)"/><rect x="581" y="98" width="2" height="95" fill="url(#g11)"/><rect x="583" y="98" width="1" height="95" fill="url(#g12)"/><rect x="584" y="98" width="3" height="95" fill="url(#g11)"/><rect x="587" y="98" width="2" height="95" fill="url(#g4)"/><rect x="589" y="98" width="1" height="95" fill="url(#g5)"/><rect x="590" y="98" width="2" height="95" fill="url(#g12)"/><rect x="592" y="98" width="2" height="95" fill="url(#g16)"/><rect x="594" y="98" width="3" height="95" fill="url(#g14)"/><rect x="597" y="98" width="2" height="95" fill="url(#g13)"/><rect x="599" y="98" width="3" height="95" fill="url(#g8)"/><rect x="602" y="98" width="3" height="95" fill="url(#g16)"/><rect x="605" y="98" width="1" height="95" fill="url(#g8)"/><rect x="606" y="98" width="3" height="95" fill="url(#g13)"/><rect x="609" y="98" width="1" height="95" fill="url(#g16)"/><rect x="610" y="98" width="3" height="95" fill="url(#g14)"/><rect x="613" y="98" width="1" height="95" fill="url(#g16)"/><rect x="614" y="98" width="2" height="95" fill="url(#g13)"/><rect x="616" y="98" width="1" height="95" fill="url(#g15)"/><rect x="617" y="98" width="1" height="95" fill="url(#g13)"/><rect x="618" y="98" width="2" height="95" fill="url(#g15)"/><rect x="620" y="98" width="3" height="95" fill="url(#g13)"/><rect x="623" y="98" width="1" height="95" fill="url(#g14)"/><rect x="624" y="98" width="3" height="95" fill="url(#g13)"/><rect x="627" y="98" width="1" height="95" fill="url(#g12)"/><rect x="628" y="98" width="3" height="95" fill="url(#g14)"/><rect x="631" y="98" width="2" height="95" fill="url(#g12)"/><rect x="633" y="98" width="3" height="95" fill="url(#g15)"/><rect x="636" y="98" width="1" height="95" fill="url(#g15)"/><rect x="637" y="98" width="1" height="95" fill="url(#g13)"/><rect x="638" y="98" width="2" height="95" fill="url(#g8)"/><rect x="640" y="98" width="2" height="95" fill="url(#g13)"/><rect x="642" y="98" width="1" height="95" fill="url(#g13)"/><rect x="643" y="98" width="1" height="95" fill="url(#g15)"/><rect x="644" y="98" width="1" height="95" fill="url(#g8)"/><rect x="645" y="98" width="2" height="95" fill="url(#g13)"/><rect x="647" y="98" width="1" height="95" fill="url(#g16)"/><rect x="648" y="98" width="2" height="95" fill="url(#g15)"/><rect x="650" y="98" width="3" height="95" fill="url(#g13)"/><rect x="653" y="98" width="2" height="95" fill="url(#g15)"/><rect x="655" y="98" width="2" height="95" fill="url(#g13)"/><rect x="657" y="98" width="1" height="95" fill="url(#g14)"/><rect x="658" y="98" width="3" height="95" fill="url(#g8)"/><rect x="661" y="98" width="2" height="95" fill="url(#g12)"/><rect x="663" y="98" width="1" height="95" fill="url(#g13)"/><rect x="664" y="98" width="1" height="95" fill="url(#g16)"/><rect x="665" y="98" width="3" height="95" fill="url(#g13)"/><rect x="668" y="98" width="2" height="95" fill="url(#g14)"/><rect x="670" y="98" width="1" height="95" fill="url(#g15)"/><rect x="671" y="98" width="2" height="95" fill="url(#g14)"/><rect x="673" y="98" width="1" height="95" fill="url(#g14)"/><rect x="674" y="98" width="1" height="95" fill="url(#g16)"/><rect x="675" y="98" width="1" height="95" fill="url(#g15)"/><rect x="676" y="98" width="1" height="95" fill="url(#g13)"/><rect x="677" y="98" width="1" height="95" fill="url(#g14)"/><rect x="678" y="98" width="2" height="95" fill="url(#g16)"/><rect x="680" y="98" width="3" height="95" fill="url(#g12)"/><rect x="683" y="98" width="1" height="95" fill="url(#g14)"/><rect x="684" y="98" width="3" height="95" fill="url(#g13)"/><rect x="687" y="98" width="1" height="95" fill="url(#g13)"/><rect x="688" y="98" width="3" height="95" fill="url(#g16)"/><rect x="691" y="98" width="1" height="95" fill="url(#g14)"/><rect x="692" y="98" width="1" height="95" fill="url(#g8)"/><rect x="693" y="98" width="2" height="95" fill="url(#g13)"/><rect x="695" y="98" width="2" height="95" fill="url(#g16)"/><rect x="697" y="98" width="2" height="95" fill="url(#g16)"/><rect x="699" y="98" width="2" height="95" fill="url(#g12)"/><rect x="701" y="98" width="1" height="95" fill="url(#g4)"/><rect x="702" y="98" width="1" height="95" fill="url(#g3)"/><rect x="703" y="98" width="2" height="95" fill="url(#g17)"/><rect x="705" y="98" width="2" height="95" fill="url(#g15)"/><rect x="707" y="98" width="2" height="95" fill="url(#g15)"/><rect x="709" y="98" width="1" height="95" fill="url(#g17)"/><rect x="710" y="98" width="3" height="95" fill="url(#g16)"/><rect x="713" y="98" width="2" height="95" fill="url(#g16)"/><rect x="715" y="98" width="1" height="95" fill="url(#g15)"/><rect x="716" y="98" width="2" height="95" fill="url(#g17)"/><rect x="718" y="98" width="1" height="95" fill="url(#g16)"/><rect x="719" y="98" width="2" height="95" fill="url(#g15)"/><rect x="721" y="98" width="2" height="95" fill="url(#g9)"/><rect x="723" y="98" width="1" height="95" fill="url(#g16)"/><rect x="724" y="98" width="3" height="95" fill="url(#g15)"/><rect x="727" y="98" width="1" height="95" fill="url(#g17)"/><rect x="728" y="98" width="2" height="95" fill="url(#g15)"/><rect x="730" y="98" width="1" height="95" fill="url(#g17)"/><rect x="731" y="98" width="2" height="95" fill="url(#g18)"/><rect x="733" y="98" width="2" height="95" fill="url(#g9)"/><rect x="735" y="98" width="1" height="95" fill="url(#g15)"/><rect x="736" y="98" width="3" height="95" fill="url(#g15)"/><rect x="739" y="98" width="1" height="95" fill="url(#g15)"/><rect x="740" y="98" width="1" height="95" fill="url(#g16)"/><rect x="741" y="98" width="1" height="95" fill="url(#g18)"/><rect x="742" y="98" width="2" height="95" fill="url(#g15)"/><rect x="744" y="98" width="1" height="95" fill="url(#g15)"/><rect x="745" y="98" width="1" height="95" fill="url(#g15)"/><rect x="746" y="98" width="1" height="95" fill="url(#g15)"/><rect x="747" y="98" width="2" height="95" fill="url(#g18)"/><rect x="749" y="98" width="2" height="95" fill="url(#g16)"/><rect x="751" y="98" width="2" height="95" fill="url(#g18)"/><rect x="753" y="98" width="1" height="95" fill="url(#g18)"/><rect x="754" y="98" width="1" height="95" fill="url(#g17)"/><rect x="755" y="98" width="3" height="95" fill="url(#g15)"/><rect x="758" y="98" width="1" height="95" fill="url(#g16)"/><rect x="759" y="98" width="2" height="95" fill="url(#g15)"/><rect x="761" y="98" width="2" height="95" fill="url(#g17)"/><rect x="763" y="98" width="1" height="95" fill="url(#g14)"/><rect x="764" y="98" width="1" height="95" fill="url(#g15)"/><rect x="765" y="98" width="2" height="95" fill="url(#g16)"/><rect x="767" y="98" width="1" height="95" fill="url(#g15)"/><rect x="768" y="98" width="3" height="95" fill="url(#g17)"/><rect x="771" y="98" width="2" height="95" fill="url(#g15)"/><rect x="773" y="98" width="3" height="95" fill="url(#g17)"/><rect x="776" y="98" width="2" height="95" fill="url(#g16)"/><rect x="778" y="98" width="1" height="95" fill="url(#g18)"/><rect x="779" y="98" width="1" height="95" fill="url(#g16)"/><rect x="780" y="98" width="1" height="95" fill="url(#g18)"/><rect x="781" y="98" width="2" height="95" fill="url(#g17)"/><rect x="783" y="98" width="1" height="95" fill="url(#g15)"/><rect x="784" y="98" width="1" height="95" fill="url(#g16)"/><rect x="785" y="98" width="2" height="95" fill="url(#g4)"/><rect x="787" y="98" width="1" height="95" fill="url(#g2)"/><rect x="788" y="98" width="2" height="95" fill="url(#g7)"/><rect x="790" y="98" width="3" height="95" fill="url(#g7)"/><rect x="793" y="98" width="2" height="95" fill="url(#g6)"/><rect x="795" y="98" width="1" height="95" fill="url(#g6)"/><rect x="796" y="98" width="1" height="95" fill="url(#g7)"/><rect x="797" y="98" width="3" height="95" fill="url(#g7)"/><rect x="800" y="98" width="1" height="95" fill="url(#g6)"/><rect x="801" y="98" width="3" height="95" fill="url(#g7)"/><rect x="804" y="98" width="1" height="95" fill="url(#g7)"/><rect x="805" y="98" width="2" height="95" fill="url(#g7)"/><rect x="807" y="98" width="1" height="95" fill="url(#g1)"/><rect x="808" y="98" width="2" height="95" fill="url(#g1)"/><rect x="810" y="98" width="2" height="95" fill="url(#g6)"/><rect x="812" y="98" width="2" height="95" fill="url(#g7)"/><rect x="814" y="98" width="2" height="95" fill="url(#g7)"/><rect x="816" y="98" width="1" height="95" fill="url(#g7)"/><rect x="817" y="98" width="2" height="95" fill="url(#g6)"/><rect x="819" y="98" width="2" height="95" fill="url(#g6)"/><rect x="821" y="98" width="1" height="95" fill="url(#g2)"/><rect x="822" y="98" width="1" height="95" fill="url(#g3)"/><rect x="823" y="98" width="1" height="95" fill="url(#g6)"/><rect x="824" y="98" width="3" height="95" fill="url(#g7)"/><rect x="827" y="98" width="1" height="95" fill="url(#g7)"/><rect x="828" y="98" width="1" height="95" fill="url(#g6)"/><rect x="829" y="98" width="1" height="95" fill="url(#g6)"/><rect x="830" y="98" width="2" height="95" fill="url(#g6)"/><rect x="832" y="98" width="1" height="95" fill="url(#g2)"/><rect x="833" y="98" width="2" height="95" fill="url(#g7)"/><rect x="835" y="98" width="1" height="95" fill="url(#g6)"/><rect x="836" y="98" width="2" height="95" fill="url(#g7)"/><rect x="838" y="98" width="2" height="95" fill="url(#g6)"/><rect x="840" y="98" width="1" height="95" fill="url(#g6)"/><rect x="841" y="98" width="2" height="95" fill="url(#g6)"/><rect x="843" y="98" width="1" height="95" fill="url(#g6)"/><rect x="844" y="98" width="1" height="95" fill="url(#g2)"/><rect x="845" y="98" width="2" height="95" fill="url(#g2)"/><rect x="847" y="98" width="1" height="95" fill="url(#g6)"/><rect x="848" y="98" width="1" height="95" fill="url(#g6)"/><rect x="849" y="98" width="3" height="95" fill="url(#g6)"/><rect x="852" y="98" width="1" height="95" fill="url(#g6)"/><rect x="853" y="98" width="1" height="95" fill="url(#g7)"/><rect x="854" y="98" width="1" height="95" fill="url(#g6)"/><rect x="855" y="98" width="1" height="95" fill="url(#g7)"/><rect x="856" y="98" width="2" height="95" fill="url(#g6)"/><rect x="858" y="98" width="2" height="95" fill="url(#g3)"/><rect x="860" y="98" width="3" height="95" fill="url(#g2)"/><path d="M0 95.5h1M0 94.5h1M2 96.5h1M2 94.5h1M2 94.5h1M6 95.5h1M8 96.5h1M9 96.5h1M12 95.5h1M15 94.5h1M15 94.5h1M16 95.5h1M16 95.5h1M17 93.5h1M17 94.5h1M18 96.5h1M20 96.5h1M21 94.5h1M22 93.5h1M23 94.5h1M23 95.5h1M25 94.5h1M27 95.5h1M27 95.5h1M29 93.5h1M31 96.5h1M33 94.5h1M34 96.5h1M34 95.5h1M35 96.5h1M37 96.5h1M37 93.5h1M39 93.5h1M39 93.5h1M39 96.5h1M39 95.5h1M39 94.5h1M40 96.5h1M41 95.5h1M42 96.5h1M44 94.5h1M45 96.5h1M46 94.5h1M56 95.5h1M58 93.5h1M68 93.5h1M68 96.5h1M70 96.5h1M74 94.5h1M75 96.5h1M78 93.5h1M81 93.5h1M81 94.5h1M82 96.5h1M84 95.5h1M87 93.5h1M90 94.5h1M92 96.5h1M96 95.5h1M96 96.5h1M96 95.5h1M103 96.5h1M109 94.5h1M110 96.5h1M112 96.5h1M112 96.5h1M114 96.5h1M114 94.5h1M122 96.5h1M132 95.5h1M134 93.5h1M134 95.5h1M135 94.5h1M137 94.5h1M138 96.5h1M139 96.5h1M139 94.5h1M144 93.5h1M145 95.5h1M145 93.5h1M145 95.5h1M148 94.5h1M150 93.5h1M153 96.5h1M154 96.5h1M157 93.5h1M158 93.5h1M159 93.5h1M161 96.5h1M161 93.5h1M162 96.5h1M162 96.5h1M164 93.5h1M165 96.5h1M168 93.5h1M172 95.5h1M172 93.5h1M176 93.5h1M179 93.5h1M179 96.5h1M182 95.5h1M182 96.5h1M182 93.5h1M184 93.5h1M184 93.5h1M186 95.5h1M187 95.5h1M189 96.5h1M191 94.5h1M192 96.5h1M200 94.5h1M203 94.5h1M204 95.5h1M205 95.5h1M206 96.5h1M208 96.5h1M208 94.5h1M209 95.5h1M211 93.5h1M212 96.5h1M214 93.5h1M214 95.5h1M214 94.5h1M220 93.5h1M223 96.5h1M223 94.5h1M227 93.5h1M229 93.5h1M229 95.5h1M233 95.5h1M238 94.5h1M244 96.5h1M251 96.5h1M260 95.5h1M262 94.5h1M263 93.5h1M266 93.5h1M268 93.5h1M271 95.5h1M272 95.5h1M276 95.5h1M283 93.5h1M286 93.5h1M294 95.5h1M294 93.5h1M304 96.5h1M308 96.5h1M316 96.5h1M316 94.5h1M317 94.5h1M317 96.5h1M318 93.5h1M319 93.5h1M321 93.5h1M321 96.5h1M328 93.5h1M329 93.5h1M329 94.5h1M329 93.5h1M342 93.5h1M347 96.5h1M350 95.5h1M351 93.5h1M353 93.5h1M357 94.5h1M357 95.5h1M360 95.5h1M361 94.5h1M365 93.5h1M365 94.5h1M366 95.5h1M366 95.5h1M366 96.5h1M368 93.5h1M372 96.5h1M373 93.5h1M375 95.5h1M377 93.5h1M378 95.5h1M380 96.5h1M381 96.5h1M383 94.5h1M384 93.5h1M384 94.5h1M385 95.5h1M387 95.5h1M390 96.5h1M390 94.5h1M395 96.5h1M397 96.5h1M398 96.5h1M399 94.5h1M400 96.5h1M401 93.5h1M402 96.5h1M404 95.5h1M404 96.5h1M405 95.5h1M406 93.5h1M407 94.5h1M408 95.5h1M410 94.5h1M411 94.5h1M411 96.5h1M413 93.5h1M414 96.5h1M415 95.5h1M417 95.5h1M418 95.5h1M420 94.5h1M428 96.5h1M431 93.5h1M437 93.5h1M440 95.5h1M444 96.5h1M445 95.5h1M453 95.5h1M454 93.5h1M454 96.5h1M455 96.5h1M468 93.5h1M469 95.5h1M472 96.5h1M472 96.5h1M473 96.5h1M474 93.5h1M475 94.5h1M476 95.5h1M476 95.5h1M477 93.5h1M479 95.5h1M480 94.5h1M481 93.5h1M481 95.5h1M482 94.5h1M483 93.5h1M484 96.5h1M485 93.5h1M497 94.5h1M498 95.5h1M499 93.5h1M500 96.5h1M502 94.5h1M503 93.5h1M504 96.5h1M504 96.5h1M505 94.5h1M506 95.5h1M508 93.5h1M510 94.5h1M515 95.5h1M515 93.5h1M519 96.5h1M519 94.5h1M522 93.5h1M530 96.5h1M531 96.5h1M532 96.5h1M536 93.5h1M536 95.5h1M545 96.5h1M546 96.5h1M546 94.5h1M548 93.5h1M549 96.5h1M550 96.5h1M551 94.5h1M554 95.5h1M554 96.5h1M558 96.5h1M560 93.5h1M563 94.5h1M563 95.5h1M565 96.5h1M567 96.5h1M568 94.5h1M571 93.5h1M574 95.5h1M574 94.5h1M575 94.5h1M576 96.5h1M580 96.5h1M581 96.5h1M583 93.5h1M584 95.5h1M593 96.5h1M594 95.5h1M594 93.5h1M598 96.5h1M601 94.5h1M601 96.5h1M603 93.5h1M605 96.5h1M612 93.5h1M620 93.5h1M623 94.5h1M624 94.5h1M624 96.5h1M625 95.5h1M628 96.5h1M628 96.5h1M629 96.5h1M637 94.5h1M641 93.5h1M645 96.5h1M652 96.5h1M653 95.5h1M653 94.5h1M658 93.5h1M658 96.5h1M659 95.5h1M659 94.5h1M667 95.5h1M681 93.5h1M681 96.5h1M683 95.5h1M683 96.5h1M683 93.5h1M685 95.5h1M689 94.5h1M690 96.5h1M694 96.5h1M695 93.5h1M695 96.5h1M696 95.5h1M697 94.5h1M698 94.5h1M704 94.5h1M704 94.5h1M708 95.5h1M708 95.5h1M710 96.5h1M711 96.5h1M712 93.5h1M712 96.5h1M712 94.5h1M713 94.5h1M715 96.5h1M716 96.5h1M720 93.5h1M721 95.5h1M725 95.5h1M726 96.5h1M727 95.5h1M728 96.5h1M729 94.5h1M731 93.5h1M736 93.5h1M740 94.5h1M742 94.5h1M744 96.5h1M744 94.5h1M748 94.5h1M750 94.5h1M754 94.5h1M755 95.5h1M755 96.5h1M760 93.5h1M761 93.5h1M764 95.5h1M764 96.5h1M768 96.5h1M769 93.5h1M773 94.5h1M773 94.5h1M774 96.5h1M775 96.5h1M775 94.5h1M776 96.5h1M777 95.5h1M779 95.5h1M780 93.5h1M780 96.5h1M780 94.5h1M781 94.5h1M783 94.5h1M784 93.5h1M784 93.5h1M788 94.5h1M789 95.5h1M790 95.5h1M804 96.5h1M807 95.5h1M809 93.5h1M812 96.5h1M813 95.5h1M813 95.5h1M819 95.5h1M820 95.5h1M822 95.5h1M823 94.5h1M824 95.5h1M825 93.5h1M831 95.5h1M832 96.5h1M833 96.5h1M838 96.5h1M840 94.5h1M841 94.5h1M843 93.5h1M845 95.5h1M847 95.5h1M848 96.5h1M850 93.5h1M851 95.5h1M853 94.5h1M854 96.5h1M857 95.5h1" stroke="#ffc88c" stroke-width="1"/><path d="M0 91.5h1M1 92.5h1M3 91.5h1M7 92.5h1M9 87.5h1M10 91.5h1M11 88.5h1M12 89.5h1M13 92.5h1M15 88.5h1M16 92.5h1M20 87.5h1M20 92.5h1M23 92.5h1M25 92.5h1M29 90.5h1M29 92.5h1M30 88.5h1M33 90.5h1M36 89.5h1M42 92.5h1M57 92.5h1M57 89.5h1M70 91.5h1M72 90.5h1M79 91.5h1M81 92.5h1M84 88.5h1M84 87.5h1M85 90.5h1M88 90.5h1M95 89.5h1M98 91.5h1M103 92.5h1M105 92.5h1M111 92.5h1M113 92.5h1M116 90.5h1M119 91.5h1M120 88.5h1M120 91.5h1M121 89.5h1M121 92.5h1M134 90.5h1M134 90.5h1M135 91.5h1M145 88.5h1M152 91.5h1M153 92.5h1M153 88.5h1M164 90.5h1M165 91.5h1M165 91.5h1M165 87.5h1M167 89.5h1M170 89.5h1M171 91.5h1M173 90.5h1M173 90.5h1M175 90.5h1M182 90.5h1M182 91.5h1M189 91.5h1M191 91.5h1M192 91.5h1M192 89.5h1M206 91.5h1M207 91.5h1M210 91.5h1M215 90.5h1M219 90.5h1M221 88.5h1M223 92.5h1M223 92.5h1M231 92.5h1M240 92.5h1M240 87.5h1M243 89.5h1M244 92.5h1M262 92.5h1M264 91.5h1M271 88.5h1M271 92.5h1M273 92.5h1M283 89.5h1M287 91.5h1M287 90.5h1M289 87.5h1M291 91.5h1M293 88.5h1M293 92.5h1M294 90.5h1M303 92.5h1M303 92.5h1M304 91.5h1M308 87.5h1M313 87.5h1M315 92.5h1M317 90.5h1M319 87.5h1M328 92.5h1M329 90.5h1M330 88.5h1M337 90.5h1M337 92.5h1M347 90.5h1M349 91.5h1M351 90.5h1M353 89.5h1M354 89.5h1M356 92.5h1M358 92.5h1M362 87.5h1M362 88.5h1M364 92.5h1M365 90.5h1M366 90.5h1M366 88.5h1M376 89.5h1M378 92.5h1M380 90.5h1M380 89.5h1M381 89.5h1M381 88.5h1M385 89.5h1M385 87.5h1M387 88.5h1M388 89.5h1M388 88.5h1M398 89.5h1M398 91.5h1M398 88.5h1M401 90.5h1M402 92.5h1M404 90.5h1M411 90.5h1M413 92.5h1M416 90.5h1M418 91.5h1M418 91.5h1M419 90.5h1M419 90.5h1M422 92.5h1M427 90.5h1M429 92.5h1M429 91.5h1M440 92.5h1M444 92.5h1M444 90.5h1M444 92.5h1M448 88.5h1M454 90.5h1M454 91.5h1M456 92.5h1M459 91.5h1M461 88.5h1M465 92.5h1M470 92.5h1M474 90.5h1M482 91.5h1M494 90.5h1M500 91.5h1M502 91.5h1M504 89.5h1M513 91.5h1M518 92.5h1M519 89.5h1M531 92.5h1M539 91.5h1M548 91.5h1M560 91.5h1M570 92.5h1M573 92.5h1M595 91.5h1M599 89.5h1M608 91.5h1M613 90.5h1M617 88.5h1M617 89.5h1M617 87.5h1M619 90.5h1M626 92.5h1M631 92.5h1M635 92.5h1M636 90.5h1M638 92.5h1M641 90.5h1M642 88.5h1M644 91.5h1M647 91.5h1M648 91.5h1M650 90.5h1M650 92.5h1M653 91.5h1M659 89.5h1M667 88.5h1M667 91.5h1M669 92.5h1M674 88.5h1M678 88.5h1M681 92.5h1M684 90.5h1M684 91.5h1M684 91.5h1M687 91.5h1M687 92.5h1M689 91.5h1M690 91.5h1M698 90.5h1M704 92.5h1M707 87.5h1M708 90.5h1M708 87.5h1M708 90.5h1M717 90.5h1M719 90.5h1M720 91.5h1M723 92.5h1M733 91.5h1M734 88.5h1M735 92.5h1M741 91.5h1M743 88.5h1M745 91.5h1M750 90.5h1M752 92.5h1M755 90.5h1M757 89.5h1M760 90.5h1M761 92.5h1M764 89.5h1M766 89.5h1M769 92.5h1M770 91.5h1M773 89.5h1M773 92.5h1M775 90.5h1M777 89.5h1M777 87.5h1M778 89.5h1M782 91.5h1M784 92.5h1M784 91.5h1M793 89.5h1M793 90.5h1M798 92.5h1M799 90.5h1M802 89.5h1M802 89.5h1M806 92.5h1M809 91.5h1M830 91.5h1M834 91.5h1M837 88.5h1M837 88.5h1M838 90.5h1M841 92.5h1M849 91.5h1M851 91.5h1M856 87.5h1M858 90.5h1M858 92.5h1" stroke="#f59a6a" stroke-width="1"/><path d="M1 85.5h1M9 90.5h1M9 92.5h1M12 92.5h1M12 92.5h1M13 87.5h1M15 84.5h1M15 90.5h1M17 92.5h1M18 90.5h1M41 92.5h1M45 89.5h1M53 90.5h1M56 91.5h1M59 92.5h1M72 91.5h1M75 91.5h1M76 90.5h1M76 92.5h1M80 90.5h1M84 92.5h1M88 90.5h1M93 92.5h1M103 92.5h1M109 90.5h1M111 92.5h1M111 87.5h1M112 85.5h1M114 90.5h1M115 90.5h1M121 92.5h1M133 92.5h1M134 85.5h1M138 92.5h1M143 89.5h1M146 91.5h1M146 92.5h1M146 90.5h1M147 88.5h1M149 92.5h1M149 90.5h1M149 92.5h1M159 91.5h1M160 91.5h1M165 92.5h1M167 89.5h1M174 88.5h1M175 83.5h1M176 92.5h1M176 91.5h1M176 92.5h1M179 91.5h1M181 92.5h1M185 87.5h1M185 89.5h1M185 92.5h1M185 92.5h1M187 92.5h1M187 92.5h1M188 89.5h1M188 92.5h1M192 91.5h1M194 89.5h1M213 91.5h1M219 92.5h1M220 92.5h1M232 87.5h1M238 92.5h1M240 83.5h1M242 92.5h1M243 92.5h1M244 87.5h1M253 89.5h1M260 87.5h1M260 91.5h1M264 83.5h1M271 92.5h1M279 89.5h1M282 91.5h1M283 92.5h1M287 92.5h1M289 91.5h1M293 80.5h1M302 91.5h1M302 90.5h1M306 92.5h1M314 92.5h1M321 89.5h1M323 84.5h1M324 90.5h1M327 92.5h1M331 89.5h1M337 87.5h1M337 92.5h1M338 92.5h1M339 92.5h1M346 91.5h1M346 89.5h1M349 91.5h1M349 89.5h1M353 92.5h1M354 88.5h1M356 92.5h1M356 87.5h1M356 90.5h1M358 91.5h1M360 90.5h1M363 87.5h1M365 88.5h1M369 90.5h1M370 87.5h1M370 85.5h1M370 90.5h1M373 85.5h1M376 87.5h1M381 92.5h1M383 92.5h1M384 90.5h1M387 90.5h1M388 92.5h1M389 90.5h1M390 89.5h1M391 89.5h1M392 92.5h1M394 89.5h1M398 90.5h1M400 90.5h1M402 89.5h1M403 89.5h1M403 86.5h1M411 90.5h1M413 92.5h1M413 91.5h1M416 91.5h1M419 92.5h1M419 83.5h1M420 90.5h1M420 92.5h1M421 87.5h1M422 85.5h1M431 92.5h1M440 90.5h1M443 91.5h1M449 89.5h1M450 90.5h1M450 91.5h1M452 91.5h1M452 84.5h1M453 90.5h1M454 91.5h1M457 92.5h1M458 89.5h1M459 89.5h1M459 87.5h1M461 91.5h1M462 86.5h1M476 90.5h1M481 92.5h1M482 90.5h1M488 83.5h1M490 86.5h1M495 87.5h1M499 88.5h1M501 92.5h1M506 92.5h1M507 92.5h1M511 92.5h1M514 92.5h1M521 92.5h1M522 92.5h1M533 91.5h1M542 91.5h1M545 92.5h1M556 91.5h1M560 92.5h1M560 92.5h1M563 87.5h1M564 92.5h1M568 92.5h1M572 92.5h1M576 88.5h1M576 92.5h1M578 91.5h1M580 91.5h1M593 88.5h1M602 90.5h1M603 91.5h1M604 86.5h1M612 90.5h1M617 89.5h1M622 87.5h1M625 81.5h1M626 76.5h1M631 91.5h1M631 89.5h1M638 91.5h1M644 86.5h1M647 92.5h1M651 90.5h1M659 88.5h1M660 85.5h1M661 91.5h1M671 92.5h1M674 91.5h1M676 87.5h1M680 89.5h1M680 92.5h1M680 91.5h1M685 86.5h1M696 92.5h1M699 91.5h1M704 91.5h1M708 91.5h1M709 92.5h1M709 92.5h1M711 92.5h1M712 92.5h1M714 90.5h1M715 91.5h1M715 89.5h1M720 90.5h1M726 90.5h1M727 92.5h1M727 92.5h1M730 91.5h1M731 90.5h1M732 92.5h1M738 91.5h1M740 90.5h1M750 91.5h1M751 90.5h1M752 91.5h1M760 79.5h1M763 86.5h1M764 91.5h1M766 92.5h1M771 92.5h1M774 91.5h1M775 91.5h1M777 88.5h1M777 92.5h1M781 90.5h1M781 92.5h1M782 91.5h1M783 87.5h1M783 88.5h1M791 92.5h1M793 91.5h1M799 92.5h1M805 88.5h1M806 92.5h1M807 92.5h1M810 92.5h1M811 88.5h1M813 81.5h1M815 92.5h1M818 86.5h1M821 92.5h1M824 92.5h1M825 92.5h1M829 91.5h1M830 92.5h1M837 92.5h1M839 90.5h1M844 81.5h1M845 84.5h1M851 88.5h1M852 90.5h1M853 92.5h1M854 85.5h1M854 91.5h1" stroke="#f07a58" stroke-width="1"/><path d="M1 96.5h1M1 94.5h1M2 93.5h1M5 93.5h1M6 93.5h1M6 94.5h1M8 96.5h1M9 93.5h1M10 96.5h1M10 95.5h1M12 93.5h1M13 93.5h1M13 95.5h1M16 96.5h1M18 95.5h1M19 93.5h1M23 93.5h1M25 96.5h1M25 96.5h1M25 94.5h1M28 96.5h1M29 93.5h1M31 94.5h1M32 96.5h1M32 96.5h1M34 93.5h1M36 94.5h1M36 93.5h1M36 96.5h1M37 95.5h1M37 93.5h1M39 95.5h1M42 93.5h1M46 95.5h1M53 94.5h1M56 96.5h1M56 96.5h1M71 94.5h1M72 93.5h1M72 93.5h1M75 94.5h1M76 94.5h1M77 95.5h1M77 95.5h1M80 94.5h1M88 93.5h1M91 94.5h1M93 96.5h1M98 95.5h1M98 96.5h1M102 94.5h1M109 94.5h1M110 94.5h1M110 93.5h1M111 95.5h1M112 95.5h1M115 96.5h1M116 95.5h1M122 95.5h1M133 95.5h1M138 93.5h1M139 93.5h1M142 94.5h1M143 96.5h1M146 94.5h1M149 96.5h1M150 96.5h1M151 95.5h1M155 96.5h1M156 96.5h1M156 94.5h1M157 95.5h1M159 93.5h1M159 95.5h1M160 93.5h1M160 94.5h1M161 94.5h1M162 94.5h1M162 94.5h1M165 96.5h1M167 95.5h1M168 96.5h1M169 95.5h1M171 95.5h1M175 93.5h1M176 93.5h1M178 94.5h1M180 95.5h1M182 95.5h1M183 95.5h1M184 93.5h1M186 95.5h1M187 93.5h1M188 95.5h1M188 95.5h1M188 96.5h1M194 96.5h1M199 95.5h1M199 96.5h1M203 94.5h1M210 96.5h1M211 94.5h1M214 96.5h1M215 96.5h1M217 96.5h1M217 96.5h1M219 94.5h1M221 96.5h1M226 96.5h1M228 94.5h1M229 94.5h1M233 93.5h1M234 95.5h1M235 95.5h1M238 94.5h1M241 93.5h1M242 93.5h1M242 96.5h1M242 93.5h1M244 95.5h1M247 95.5h1M254 94.5h1M259 93.5h1M261 95.5h1M263 93.5h1M270 95.5h1M276 94.5h1M277 95.5h1M282 95.5h1M282 96.5h1M286 95.5h1M286 95.5h1M287 95.5h1M287 93.5h1M289 95.5h1M289 96.5h1M299 95.5h1M301 96.5h1M302 96.5h1M307 94.5h1M313 94.5h1M316 93.5h1M316 96.5h1M317 93.5h1M318 94.5h1M319 94.5h1M319 96.5h1M319 93.5h1M323 94.5h1M323 93.5h1M323 95.5h1M324 95.5h1M326 93.5h1M329 96.5h1M330 94.5h1M330 93.5h1M332 94.5h1M333 95.5h1M334 96.5h1M336 93.5h1M339 93.5h1M346 96.5h1M347 94.5h1M349 94.5h1M350 95.5h1M351 95.5h1M353 95.5h1M354 96.5h1M356 96.5h1M359 94.5h1M363 95.5h1M364 95.5h1M364 95.5h1M368 93.5h1M370 94.5h1M373 95.5h1M374 93.5h1M380 95.5h1M383 95.5h1M385 96.5h1M387 93.5h1M389 96.5h1M390 96.5h1M391 95.5h1M391 93.5h1M391 93.5h1M400 94.5h1M404 95.5h1M408 96.5h1M409 96.5h1M409 95.5h1M409 93.5h1M410 95.5h1M410 93.5h1M412 96.5h1M413 95.5h1M419 96.5h1M422 95.5h1M426 96.5h1M428 95.5h1M430 94.5h1M430 94.5h1M432 93.5h1M433 95.5h1M442 96.5h1M443 95.5h1M445 94.5h1M446 94.5h1M446 94.5h1M447 96.5h1M456 93.5h1M457 93.5h1M462 94.5h1M462 96.5h1M464 94.5h1M465 94.5h1M467 95.5h1M472 96.5h1M475 95.5h1M477 93.5h1M478 93.5h1M478 96.5h1M481 93.5h1M485 93.5h1M489 93.5h1M491 94.5h1M493 95.5h1M494 96.5h1M496 95.5h1M496 96.5h1M498 93.5h1M498 94.5h1M499 93.5h1M499 94.5h1M500 95.5h1M500 96.5h1M501 95.5h1M502 94.5h1M508 95.5h1M513 95.5h1M516 96.5h1M519 95.5h1M519 96.5h1M520 93.5h1M522 94.5h1M522 93.5h1M530 93.5h1M531 95.5h1M535 93.5h1M538 94.5h1M539 96.5h1M540 95.5h1M542 93.5h1M548 94.5h1M548 96.5h1M549 95.5h1M550 95.5h1M550 95.5h1M551 95.5h1M555 94.5h1M555 96.5h1M556 95.5h1M557 93.5h1M564 96.5h1M564 94.5h1M566 95.5h1M567 96.5h1M568 94.5h1M569 93.5h1M569 94.5h1M571 95.5h1M571 96.5h1M572 94.5h1M573 95.5h1M577 94.5h1M579 95.5h1M582 96.5h1M582 96.5h1M583 95.5h1M583 94.5h1M585 96.5h1M598 96.5h1M601 94.5h1M602 94.5h1M606 96.5h1M606 96.5h1M609 95.5h1M610 94.5h1M611 95.5h1M611 95.5h1M612 93.5h1M613 96.5h1M614 96.5h1M614 96.5h1M618 95.5h1M620 93.5h1M620 93.5h1M621 95.5h1M621 96.5h1M628 93.5h1M630 96.5h1M631 96.5h1M634 94.5h1M638 93.5h1M642 96.5h1M644 94.5h1M645 94.5h1M657 96.5h1M658 95.5h1M660 94.5h1M663 95.5h1M664 94.5h1M665 95.5h1M665 94.5h1M667 93.5h1M668 96.5h1M669 95.5h1M674 95.5h1M678 94.5h1M679 94.5h1M679 93.5h1M690 95.5h1M696 93.5h1M696 96.5h1M698 94.5h1M699 96.5h1M704 94.5h1M708 93.5h1M709 96.5h1M710 96.5h1M711 95.5h1M712 94.5h1M713 96.5h1M716 94.5h1M719 95.5h1M719 95.5h1M721 95.5h1M724 93.5h1M725 96.5h1M726 94.5h1M726 95.5h1M727 94.5h1M728 94.5h1M730 96.5h1M736 96.5h1M737 93.5h1M737 95.5h1M737 93.5h1M738 94.5h1M740 95.5h1M740 95.5h1M746 94.5h1M746 94.5h1M748 96.5h1M750 95.5h1M751 96.5h1M752 94.5h1M753 96.5h1M756 94.5h1M757 95.5h1M760 95.5h1M761 94.5h1M763 93.5h1M767 94.5h1M768 94.5h1M769 95.5h1M769 96.5h1M771 93.5h1M774 96.5h1M774 93.5h1M776 93.5h1M778 94.5h1M778 95.5h1M778 96.5h1M779 96.5h1M781 96.5h1M781 95.5h1M781 93.5h1M782 94.5h1M790 95.5h1M794 95.5h1M798 95.5h1M799 95.5h1M800 94.5h1M800 95.5h1M800 93.5h1M800 94.5h1M805 96.5h1M805 96.5h1M818 95.5h1M818 93.5h1M820 93.5h1M820 93.5h1M821 93.5h1M825 93.5h1M829 96.5h1M829 93.5h1M829 96.5h1M830 93.5h1M832 94.5h1M835 93.5h1M836 93.5h1M840 94.5h1M841 96.5h1M841 94.5h1M850 96.5h1M853 96.5h1M857 96.5h1M858 96.5h1" stroke="#ffd8a0" stroke-width="1"/><path d="M1 95.5h1M3 93.5h1M3 93.5h1M4 95.5h1M9 94.5h1M10 95.5h1M10 94.5h1M12 94.5h1M15 95.5h1M16 94.5h1M17 95.5h1M20 93.5h1M23 93.5h1M28 94.5h1M32 95.5h1M32 93.5h1M33 95.5h1M36 95.5h1M36 93.5h1M36 95.5h1M41 96.5h1M41 94.5h1M41 93.5h1M42 94.5h1M45 94.5h1M46 94.5h1M52 94.5h1M52 94.5h1M54 96.5h1M55 94.5h1M57 96.5h1M57 94.5h1M64 96.5h1M75 95.5h1M80 93.5h1M80 96.5h1M81 93.5h1M82 94.5h1M84 94.5h1M91 95.5h1M96 95.5h1M98 93.5h1M98 94.5h1M98 93.5h1M99 94.5h1M103 96.5h1M103 94.5h1M107 95.5h1M109 96.5h1M110 94.5h1M111 93.5h1M116 96.5h1M118 95.5h1M119 93.5h1M119 94.5h1M120 96.5h1M121 96.5h1M132 93.5h1M132 96.5h1M132 96.5h1M134 94.5h1M135 95.5h1M136 95.5h1M137 93.5h1M143 96.5h1M149 94.5h1M154 93.5h1M159 93.5h1M161 95.5h1M162 94.5h1M165 96.5h1M166 94.5h1M167 96.5h1M171 93.5h1M172 96.5h1M174 94.5h1M174 94.5h1M175 95.5h1M176 95.5h1M178 95.5h1M179 96.5h1M181 94.5h1M183 95.5h1M185 96.5h1M186 94.5h1M187 93.5h1M188 95.5h1M188 96.5h1M188 95.5h1M191 95.5h1M191 93.5h1M198 95.5h1M199 95.5h1M199 93.5h1M201 95.5h1M201 95.5h1M203 96.5h1M206 94.5h1M207 93.5h1M207 96.5h1M210 94.5h1M211 94.5h1M211 93.5h1M212 95.5h1M215 95.5h1M215 93.5h1M216 96.5h1M216 96.5h1M217 96.5h1M218 96.5h1M218 96.5h1M219 94.5h1M221 95.5h1M221 94.5h1M221 94.5h1M226 96.5h1M228 96.5h1M229 94.5h1M237 95.5h1M237 94.5h1M238 96.5h1M240 95.5h1M240 95.5h1M242 93.5h1M243 95.5h1M244 93.5h1M246 95.5h1M247 93.5h1M248 93.5h1M248 96.5h1M250 93.5h1M251 95.5h1M254 94.5h1M254 94.5h1M255 93.5h1M259 95.5h1M260 93.5h1M262 94.5h1M267 96.5h1M268 94.5h1M273 94.5h1M281 96.5h1M282 94.5h1M282 95.5h1M287 96.5h1M288 95.5h1M289 95.5h1M290 93.5h1M291 96.5h1M294 93.5h1M299 95.5h1M300 96.5h1M302 94.5h1M308 95.5h1M312 93.5h1M313 93.5h1M321 93.5h1M323 96.5h1M327 93.5h1M328 93.5h1M328 93.5h1M329 95.5h1M333 96.5h1M333 94.5h1M335 96.5h1M341 93.5h1M346 95.5h1M346 94.5h1M347 94.5h1M348 96.5h1M351 93.5h1M351 96.5h1M351 95.5h1M352 96.5h1M356 96.5h1M365 95.5h1M365 94.5h1M368 95.5h1M368 95.5h1M368 93.5h1M373 94.5h1M373 96.5h1M374 96.5h1M376 95.5h1M381 96.5h1M381 95.5h1M383 94.5h1M387 94.5h1M388 94.5h1M389 96.5h1M390 94.5h1M390 93.5h1M391 94.5h1M394 95.5h1M394 95.5h1M397 95.5h1M399 95.5h1M404 93.5h1M404 94.5h1M409 96.5h1M410 96.5h1M412 96.5h1M414 94.5h1M416 96.5h1M420 95.5h1M421 93.5h1M422 94.5h1M426 95.5h1M426 94.5h1M430 96.5h1M434 94.5h1M438 95.5h1M439 96.5h1M441 93.5h1M441 95.5h1M442 94.5h1M443 95.5h1M449 94.5h1M450 94.5h1M450 94.5h1M457 96.5h1M461 93.5h1M461 95.5h1M468 96.5h1M468 94.5h1M469 96.5h1M469 94.5h1M470 94.5h1M474 95.5h1M475 94.5h1M477 94.5h1M478 94.5h1M481 95.5h1M483 94.5h1M486 96.5h1M489 96.5h1M492 93.5h1M493 95.5h1M494 95.5h1M496 95.5h1M500 95.5h1M502 96.5h1M504 94.5h1M505 95.5h1M506 96.5h1M515 93.5h1M517 93.5h1M518 94.5h1M530 93.5h1M534 93.5h1M535 93.5h1M538 96.5h1M539 96.5h1M541 96.5h1M541 96.5h1M543 96.5h1M544 95.5h1M545 94.5h1M551 96.5h1M552 96.5h1M553 93.5h1M553 94.5h1M555 93.5h1M557 96.5h1M561 96.5h1M566 96.5h1M566 94.5h1M567 94.5h1M567 96.5h1M568 95.5h1M570 95.5h1M574 95.5h1M576 93.5h1M580 94.5h1M594 94.5h1M601 93.5h1M602 94.5h1M602 95.5h1M604 94.5h1M605 94.5h1M605 96.5h1M607 93.5h1M607 95.5h1M608 95.5h1M610 94.5h1M615 93.5h1M616 95.5h1M618 96.5h1M620 94.5h1M620 94.5h1M621 95.5h1M621 95.5h1M623 96.5h1M623 93.5h1M629 94.5h1M630 94.5h1M633 93.5h1M635 96.5h1M636 93.5h1M636 95.5h1M636 93.5h1M638 93.5h1M638 96.5h1M640 93.5h1M640 94.5h1M640 94.5h1M640 95.5h1M641 95.5h1M644 95.5h1M644 96.5h1M645 96.5h1M645 94.5h1M645 94.5h1M647 93.5h1M647 93.5h1M647 94.5h1M650 93.5h1M653 94.5h1M657 96.5h1M657 95.5h1M657 96.5h1M658 95.5h1M658 96.5h1M662 96.5h1M666 93.5h1M667 95.5h1M668 95.5h1M668 94.5h1M671 96.5h1M672 95.5h1M672 93.5h1M672 93.5h1M674 93.5h1M682 94.5h1M693 93.5h1M693 96.5h1M697 93.5h1M697 94.5h1M703 96.5h1M710 93.5h1M712 96.5h1M712 96.5h1M713 94.5h1M714 95.5h1M714 95.5h1M715 94.5h1M716 95.5h1M720 94.5h1M720 96.5h1M723 96.5h1M725 95.5h1M726 93.5h1M727 93.5h1M729 96.5h1M729 93.5h1M731 94.5h1M732 94.5h1M737 94.5h1M739 96.5h1M743 96.5h1M743 95.5h1M746 93.5h1M748 96.5h1M749 93.5h1M749 96.5h1M750 94.5h1M752 95.5h1M753 93.5h1M753 93.5h1M753 96.5h1M754 96.5h1M755 93.5h1M757 93.5h1M757 93.5h1M758 93.5h1M761 96.5h1M762 94.5h1M762 94.5h1M764 93.5h1M765 94.5h1M767 95.5h1M767 95.5h1M767 96.5h1M768 93.5h1M776 95.5h1M778 96.5h1M779 94.5h1M780 96.5h1M781 96.5h1M782 95.5h1M783 94.5h1M784 94.5h1M784 96.5h1M784 94.5h1M793 95.5h1M795 93.5h1M797 96.5h1M797 96.5h1M797 94.5h1M800 96.5h1M802 93.5h1M804 94.5h1M808 96.5h1M808 93.5h1M814 95.5h1M819 95.5h1M820 96.5h1M821 95.5h1M824 94.5h1M826 96.5h1M828 93.5h1M833 94.5h1M835 94.5h1M837 93.5h1M839 95.5h1M843 94.5h1M847 94.5h1M848 96.5h1M850 95.5h1M852 95.5h1M852 93.5h1M856 96.5h1M857 96.5h1M857 94.5h1" stroke="#f58a60" stroke-width="1"/><path d="M2 90.5h1M3 92.5h1M3 91.5h1M10 89.5h1M15 90.5h1M22 90.5h1M22 92.5h1M23 87.5h1M24 92.5h1M24 87.5h1M25 92.5h1M31 91.5h1M32 92.5h1M33 91.5h1M37 90.5h1M39 91.5h1M41 90.5h1M42 89.5h1M43 92.5h1M64 91.5h1M68 88.5h1M68 92.5h1M71 88.5h1M76 92.5h1M77 92.5h1M79 90.5h1M91 90.5h1M93 91.5h1M93 92.5h1M94 91.5h1M99 89.5h1M101 88.5h1M109 91.5h1M110 90.5h1M111 88.5h1M116 90.5h1M118 89.5h1M120 88.5h1M122 90.5h1M133 91.5h1M137 92.5h1M137 87.5h1M137 89.5h1M138 91.5h1M142 88.5h1M150 90.5h1M156 92.5h1M159 92.5h1M162 91.5h1M163 89.5h1M164 90.5h1M164 90.5h1M164 88.5h1M166 90.5h1M167 90.5h1M168 88.5h1M171 91.5h1M174 89.5h1M175 87.5h1M179 92.5h1M180 89.5h1M181 90.5h1M181 92.5h1M190 90.5h1M191 91.5h1M205 91.5h1M208 91.5h1M211 91.5h1M224 92.5h1M227 91.5h1M233 89.5h1M241 88.5h1M245 89.5h1M250 88.5h1M254 91.5h1M260 91.5h1M260 92.5h1M271 90.5h1M271 92.5h1M275 92.5h1M278 87.5h1M281 87.5h1M281 92.5h1M286 88.5h1M288 92.5h1M291 92.5h1M292 89.5h1M294 89.5h1M294 91.5h1M303 91.5h1M305 92.5h1M305 91.5h1M311 91.5h1M312 92.5h1M313 87.5h1M316 92.5h1M319 92.5h1M321 89.5h1M322 87.5h1M323 92.5h1M330 92.5h1M335 87.5h1M337 92.5h1M338 88.5h1M338 91.5h1M340 88.5h1M348 92.5h1M348 92.5h1M348 92.5h1M349 92.5h1M350 89.5h1M350 90.5h1M360 92.5h1M371 89.5h1M385 92.5h1M388 91.5h1M390 88.5h1M398 92.5h1M398 89.5h1M400 92.5h1M402 92.5h1M411 87.5h1M412 88.5h1M415 89.5h1M415 91.5h1M417 90.5h1M417 88.5h1M420 92.5h1M421 92.5h1M422 91.5h1M426 90.5h1M428 88.5h1M429 91.5h1M433 92.5h1M445 92.5h1M448 89.5h1M451 91.5h1M451 89.5h1M452 91.5h1M461 92.5h1M462 90.5h1M468 92.5h1M473 89.5h1M477 90.5h1M480 90.5h1M481 90.5h1M483 92.5h1M486 90.5h1M489 92.5h1M493 92.5h1M495 90.5h1M496 92.5h1M503 91.5h1M506 91.5h1M508 91.5h1M512 91.5h1M513 92.5h1M518 90.5h1M521 89.5h1M535 87.5h1M535 92.5h1M535 92.5h1M540 89.5h1M552 92.5h1M553 92.5h1M573 89.5h1M584 91.5h1M593 91.5h1M596 87.5h1M603 90.5h1M605 91.5h1M606 92.5h1M611 91.5h1M616 90.5h1M617 89.5h1M624 92.5h1M625 90.5h1M625 89.5h1M626 87.5h1M627 92.5h1M631 89.5h1M640 92.5h1M641 92.5h1M642 92.5h1M652 89.5h1M654 91.5h1M663 88.5h1M672 92.5h1M680 90.5h1M682 92.5h1M684 91.5h1M692 91.5h1M695 89.5h1M697 92.5h1M699 90.5h1M704 88.5h1M708 90.5h1M711 87.5h1M713 92.5h1M713 89.5h1M714 90.5h1M716 90.5h1M717 88.5h1M719 92.5h1M719 89.5h1M719 89.5h1M720 88.5h1M721 91.5h1M721 92.5h1M730 91.5h1M737 87.5h1M737 91.5h1M743 91.5h1M743 91.5h1M747 90.5h1M748 92.5h1M753 87.5h1M763 90.5h1M768 90.5h1M768 91.5h1M769 92.5h1M773 92.5h1M773 91.5h1M775 87.5h1M775 92.5h1M776 90.5h1M781 92.5h1M789 90.5h1M796 91.5h1M798 90.5h1M798 90.5h1M801 89.5h1M812 92.5h1M814 91.5h1M815 91.5h1M821 87.5h1M824 87.5h1M828 87.5h1M831 90.5h1M835 89.5h1M840 92.5h1M840 92.5h1M843 90.5h1M844 89.5h1M845 89.5h1M848 92.5h1M850 91.5h1M852 90.5h1M853 89.5h1M857 91.5h1M860 88.5h1" stroke="#ea6a60" stroke-width="1"/><path d="M2 88.5h1M4 87.5h1M6 90.5h1M7 88.5h1M9 90.5h1M11 87.5h1M18 89.5h1M19 91.5h1M24 92.5h1M27 89.5h1M29 92.5h1M31 91.5h1M31 91.5h1M32 92.5h1M33 90.5h1M34 92.5h1M36 92.5h1M37 91.5h1M41 88.5h1M45 89.5h1M45 92.5h1M52 92.5h1M55 92.5h1M61 92.5h1M64 91.5h1M68 89.5h1M70 90.5h1M72 91.5h1M73 90.5h1M77 92.5h1M80 91.5h1M81 87.5h1M84 91.5h1M86 91.5h1M87 90.5h1M93 92.5h1M93 92.5h1M97 92.5h1M106 91.5h1M110 89.5h1M115 87.5h1M121 92.5h1M122 92.5h1M133 91.5h1M137 92.5h1M138 91.5h1M139 91.5h1M139 92.5h1M140 91.5h1M143 92.5h1M143 88.5h1M144 89.5h1M153 88.5h1M158 92.5h1M160 92.5h1M162 92.5h1M163 88.5h1M166 89.5h1M184 92.5h1M185 90.5h1M194 92.5h1M199 92.5h1M200 92.5h1M212 88.5h1M218 92.5h1M218 92.5h1M224 92.5h1M233 91.5h1M236 89.5h1M237 90.5h1M238 90.5h1M241 89.5h1M242 91.5h1M250 90.5h1M252 92.5h1M256 91.5h1M258 91.5h1M259 88.5h1M263 92.5h1M264 89.5h1M278 89.5h1M288 88.5h1M289 91.5h1M291 90.5h1M293 90.5h1M300 88.5h1M304 89.5h1M308 89.5h1M316 92.5h1M317 90.5h1M318 92.5h1M318 92.5h1M318 92.5h1M324 90.5h1M328 90.5h1M328 91.5h1M329 92.5h1M330 91.5h1M332 92.5h1M340 92.5h1M342 91.5h1M351 88.5h1M359 91.5h1M365 92.5h1M368 90.5h1M368 91.5h1M368 89.5h1M369 87.5h1M369 92.5h1M378 91.5h1M380 91.5h1M383 90.5h1M383 92.5h1M384 90.5h1M385 90.5h1M386 92.5h1M386 91.5h1M391 92.5h1M391 90.5h1M394 91.5h1M401 91.5h1M401 88.5h1M402 87.5h1M402 89.5h1M404 91.5h1M409 90.5h1M411 89.5h1M412 89.5h1M412 91.5h1M415 87.5h1M415 89.5h1M418 88.5h1M419 89.5h1M419 88.5h1M419 90.5h1M420 87.5h1M427 90.5h1M430 91.5h1M432 91.5h1M443 91.5h1M445 92.5h1M450 90.5h1M455 92.5h1M456 90.5h1M468 88.5h1M473 92.5h1M475 91.5h1M477 92.5h1M478 89.5h1M482 91.5h1M484 92.5h1M484 91.5h1M495 88.5h1M496 89.5h1M499 90.5h1M506 91.5h1M533 92.5h1M538 91.5h1M538 92.5h1M540 90.5h1M540 92.5h1M543 92.5h1M545 92.5h1M547 92.5h1M553 92.5h1M563 92.5h1M571 89.5h1M572 92.5h1M573 92.5h1M573 92.5h1M578 92.5h1M578 89.5h1M597 92.5h1M597 91.5h1M601 90.5h1M607 91.5h1M614 91.5h1M614 87.5h1M614 89.5h1M618 91.5h1M620 89.5h1M624 88.5h1M627 90.5h1M636 91.5h1M639 92.5h1M646 92.5h1M649 91.5h1M650 88.5h1M652 89.5h1M656 92.5h1M662 92.5h1M664 92.5h1M678 90.5h1M678 91.5h1M683 89.5h1M686 92.5h1M687 89.5h1M693 88.5h1M696 92.5h1M698 91.5h1M703 88.5h1M707 92.5h1M712 88.5h1M717 88.5h1M721 88.5h1M724 92.5h1M727 91.5h1M728 88.5h1M732 90.5h1M736 88.5h1M737 91.5h1M743 88.5h1M745 88.5h1M746 90.5h1M747 92.5h1M751 88.5h1M751 89.5h1M751 91.5h1M753 92.5h1M753 89.5h1M754 91.5h1M754 89.5h1M754 91.5h1M755 90.5h1M757 92.5h1M757 91.5h1M761 88.5h1M764 91.5h1M767 90.5h1M768 92.5h1M768 91.5h1M769 90.5h1M778 87.5h1M780 91.5h1M780 92.5h1M780 92.5h1M788 90.5h1M791 89.5h1M796 92.5h1M799 92.5h1M800 90.5h1M802 90.5h1M803 90.5h1M806 90.5h1M806 92.5h1M806 91.5h1M813 89.5h1M815 92.5h1M817 91.5h1M819 90.5h1M821 90.5h1M823 90.5h1M823 92.5h1M823 92.5h1M824 88.5h1M832 89.5h1M838 89.5h1M843 92.5h1M844 92.5h1M845 92.5h1M847 91.5h1M847 92.5h1M851 92.5h1M853 92.5h1M858 87.5h1M859 87.5h1" stroke="#ffc08a" stroke-width="1"/><path d="M3 96.5h1M5 93.5h1M9 96.5h1M12 96.5h1M13 94.5h1M15 93.5h1M16 93.5h1M17 96.5h1M23 96.5h1M24 96.5h1M25 96.5h1M30 95.5h1M30 95.5h1M31 95.5h1M31 94.5h1M31 94.5h1M33 96.5h1M33 93.5h1M33 93.5h1M37 96.5h1M41 94.5h1M42 96.5h1M45 95.5h1M56 93.5h1M57 96.5h1M58 95.5h1M66 93.5h1M69 95.5h1M73 93.5h1M74 93.5h1M78 96.5h1M79 95.5h1M79 93.5h1M80 96.5h1M83 95.5h1M86 93.5h1M89 93.5h1M91 96.5h1M96 94.5h1M96 95.5h1M102 96.5h1M109 94.5h1M113 96.5h1M113 96.5h1M114 93.5h1M119 94.5h1M119 94.5h1M122 94.5h1M133 93.5h1M134 95.5h1M134 96.5h1M135 93.5h1M137 94.5h1M138 94.5h1M139 96.5h1M141 95.5h1M141 96.5h1M141 94.5h1M142 96.5h1M143 95.5h1M145 96.5h1M145 94.5h1M146 93.5h1M146 96.5h1M147 93.5h1M147 95.5h1M153 95.5h1M153 94.5h1M156 94.5h1M157 95.5h1M158 95.5h1M158 94.5h1M159 93.5h1M164 93.5h1M165 96.5h1M166 96.5h1M166 96.5h1M171 93.5h1M172 93.5h1M174 93.5h1M181 93.5h1M182 95.5h1M185 94.5h1M185 95.5h1M186 94.5h1M187 96.5h1M189 94.5h1M189 96.5h1M190 93.5h1M191 93.5h1M194 96.5h1M204 96.5h1M204 93.5h1M206 94.5h1M206 94.5h1M212 95.5h1M215 94.5h1M221 93.5h1M221 95.5h1M224 94.5h1M229 93.5h1M229 93.5h1M234 94.5h1M238 94.5h1M242 93.5h1M246 94.5h1M248 94.5h1M249 95.5h1M251 96.5h1M251 96.5h1M252 94.5h1M257 96.5h1M258 95.5h1M259 96.5h1M260 95.5h1M262 96.5h1M263 93.5h1M264 95.5h1M266 96.5h1M266 94.5h1M267 93.5h1M268 94.5h1M268 96.5h1M269 95.5h1M272 93.5h1M273 94.5h1M274 95.5h1M276 95.5h1M277 96.5h1M278 96.5h1M278 94.5h1M278 95.5h1M283 93.5h1M291 93.5h1M292 95.5h1M300 93.5h1M300 96.5h1M300 93.5h1M300 95.5h1M303 93.5h1M306 93.5h1M312 95.5h1M313 96.5h1M317 96.5h1M318 96.5h1M318 96.5h1M319 95.5h1M322 93.5h1M323 93.5h1M326 96.5h1M328 94.5h1M333 96.5h1M333 94.5h1M333 93.5h1M335 93.5h1M337 94.5h1M339 96.5h1M340 93.5h1M342 94.5h1M346 94.5h1M348 94.5h1M359 94.5h1M362 94.5h1M363 94.5h1M363 96.5h1M366 95.5h1M366 96.5h1M366 95.5h1M367 96.5h1M370 96.5h1M370 95.5h1M370 94.5h1M378 94.5h1M381 93.5h1M384 96.5h1M386 94.5h1M386 96.5h1M386 96.5h1M394 95.5h1M394 94.5h1M398 96.5h1M402 95.5h1M402 94.5h1M403 93.5h1M406 96.5h1M408 95.5h1M409 95.5h1M412 96.5h1M413 95.5h1M414 96.5h1M415 93.5h1M415 96.5h1M432 95.5h1M437 93.5h1M437 93.5h1M439 95.5h1M441 96.5h1M446 96.5h1M448 93.5h1M449 96.5h1M453 96.5h1M454 93.5h1M456 96.5h1M457 96.5h1M462 95.5h1M463 93.5h1M464 94.5h1M466 94.5h1M469 94.5h1M471 93.5h1M472 93.5h1M475 94.5h1M475 96.5h1M476 94.5h1M478 96.5h1M482 94.5h1M483 93.5h1M486 94.5h1M486 94.5h1M489 95.5h1M498 96.5h1M498 96.5h1M499 95.5h1M503 96.5h1M505 95.5h1M507 93.5h1M512 96.5h1M513 96.5h1M518 96.5h1M518 93.5h1M522 93.5h1M530 96.5h1M534 95.5h1M538 93.5h1M539 96.5h1M546 95.5h1M547 96.5h1M550 95.5h1M551 95.5h1M553 96.5h1M554 93.5h1M555 96.5h1M556 95.5h1M562 94.5h1M563 96.5h1M567 94.5h1M568 95.5h1M571 96.5h1M572 95.5h1M572 96.5h1M574 96.5h1M576 96.5h1M577 95.5h1M578 96.5h1M582 96.5h1M583 96.5h1M584 94.5h1M584 93.5h1M593 94.5h1M595 94.5h1M598 94.5h1M602 94.5h1M607 93.5h1M607 95.5h1M608 93.5h1M610 95.5h1M612 95.5h1M612 95.5h1M613 93.5h1M616 95.5h1M616 94.5h1M618 95.5h1M622 96.5h1M624 96.5h1M628 94.5h1M628 94.5h1M632 96.5h1M632 96.5h1M635 93.5h1M635 96.5h1M636 93.5h1M638 96.5h1M642 96.5h1M647 94.5h1M648 96.5h1M652 96.5h1M654 93.5h1M656 94.5h1M658 93.5h1M659 94.5h1M659 96.5h1M660 93.5h1M665 95.5h1M666 93.5h1M667 96.5h1M671 93.5h1M672 95.5h1M676 96.5h1M678 96.5h1M679 95.5h1M680 95.5h1M683 96.5h1M683 95.5h1M685 94.5h1M688 93.5h1M692 93.5h1M693 93.5h1M697 95.5h1M699 95.5h1M699 94.5h1M703 96.5h1M707 94.5h1M707 96.5h1M710 94.5h1M710 94.5h1M716 96.5h1M719 95.5h1M721 96.5h1M723 96.5h1M726 94.5h1M738 95.5h1M740 95.5h1M743 94.5h1M743 95.5h1M746 94.5h1M750 95.5h1M751 93.5h1M752 96.5h1M752 94.5h1M752 96.5h1M754 93.5h1M756 94.5h1M760 95.5h1M763 94.5h1M764 95.5h1M764 95.5h1M765 95.5h1M771 96.5h1M774 94.5h1M775 94.5h1M778 93.5h1M778 93.5h1M779 95.5h1M782 95.5h1M782 95.5h1M784 95.5h1M791 93.5h1M792 95.5h1M793 94.5h1M793 95.5h1M795 93.5h1M797 93.5h1M798 95.5h1M798 94.5h1M802 96.5h1M804 96.5h1M805 93.5h1M805 95.5h1M808 96.5h1M808 93.5h1M810 95.5h1M812 96.5h1M815 95.5h1M815 93.5h1M818 96.5h1M818 94.5h1M819 94.5h1M819 94.5h1M824 93.5h1M830 93.5h1M835 93.5h1M835 96.5h1M837 94.5h1M838 94.5h1M844 94.5h1M846 93.5h1M850 94.5h1M850 95.5h1M852 96.5h1M852 93.5h1" stroke="#f6a070" stroke-width="1"/><path d="M12 86.5h1M17 85.5h1M20 86.5h1M32 85.5h1M61 84.5h1M70 83.5h1M95 85.5h1M103 85.5h1M150 86.5h1M189 86.5h1M263 82.5h1M272 85.5h1M305 86.5h1M312 84.5h1M317 85.5h1M369 86.5h1M420 86.5h1M468 85.5h1M519 85.5h1M603 84.5h1M609 83.5h1M619 86.5h1M621 84.5h1M623 84.5h1M633 86.5h1M654 86.5h1M655 85.5h1M665 85.5h1M693 86.5h1M697 84.5h1M698 86.5h1M763 78.5h1M763 79.5h1M775 84.5h1M803 85.5h1M828 79.5h1M831 86.5h1M839 83.5h1" stroke="#f4a070" stroke-width="1"/><path d="M14 85.5h1M39 86.5h1M46 81.5h1M57 85.5h1M60 86.5h1M97 84.5h1M118 82.5h1M149 81.5h1M156 85.5h1M160 86.5h1M170 85.5h1M183 83.5h1M184 86.5h1M192 83.5h1M218 86.5h1M273 86.5h1M277 86.5h1M348 86.5h1M406 86.5h1M415 86.5h1M508 86.5h1M517 84.5h1M592 86.5h1M603 85.5h1M610 85.5h1M665 86.5h1M668 85.5h1M687 86.5h1M725 86.5h1M725 85.5h1M744 85.5h1M753 84.5h1M754 86.5h1M845 86.5h1M851 86.5h1" stroke="#e8605c" stroke-width="1"/><path d="M0 190.5h1M5 190.5h1M5 191.5h1M6 190.5h1M6 192.5h1M7 191.5h1M7 190.5h1M8 191.5h1M10 191.5h1M12 192.5h1M13 192.5h1M16 192.5h1M20 189.5h1M20 190.5h1M23 189.5h1M25 190.5h1M26 189.5h1M27 190.5h1M28 192.5h1M28 192.5h1M29 192.5h1M34 191.5h1M35 192.5h1M35 191.5h1M36 192.5h1M39 191.5h1M41 189.5h1M44 192.5h1M46 192.5h1M54 192.5h1M54 192.5h1M57 189.5h1M57 191.5h1M57 192.5h1M58 190.5h1M58 189.5h1M62 190.5h1M62 192.5h1M63 190.5h1M63 191.5h1M67 190.5h1M69 191.5h1M74 189.5h1M76 192.5h1M79 192.5h1M81 191.5h1M87 191.5h1M88 189.5h1M90 192.5h1M95 190.5h1M98 190.5h1M98 192.5h1M107 191.5h1M108 192.5h1M110 190.5h1M111 190.5h1M114 189.5h1M114 192.5h1M120 192.5h1M120 191.5h1M122 189.5h1M133 191.5h1M134 191.5h1M137 191.5h1M139 191.5h1M140 192.5h1M144 190.5h1M146 190.5h1M147 190.5h1M148 192.5h1M148 190.5h1M148 192.5h1M150 191.5h1M152 192.5h1M152 189.5h1M155 191.5h1M155 190.5h1M155 190.5h1M156 190.5h1M157 189.5h1M159 190.5h1M161 190.5h1M161 192.5h1M162 191.5h1M162 190.5h1M165 190.5h1M166 190.5h1M168 191.5h1M169 191.5h1M171 191.5h1M172 190.5h1M173 191.5h1M173 189.5h1M175 191.5h1M177 189.5h1M177 192.5h1M179 190.5h1M181 191.5h1M182 191.5h1M184 192.5h1M192 192.5h1M200 192.5h1M200 192.5h1M201 190.5h1M202 192.5h1M203 189.5h1M206 190.5h1M207 192.5h1M208 192.5h1M210 189.5h1M211 191.5h1M212 190.5h1M214 191.5h1M218 190.5h1M222 191.5h1M224 191.5h1M225 191.5h1M226 189.5h1M232 191.5h1M233 191.5h1M234 191.5h1M234 192.5h1M236 191.5h1M237 192.5h1M237 192.5h1M238 190.5h1M241 189.5h1M242 192.5h1M243 191.5h1M246 191.5h1M247 190.5h1M252 191.5h1M253 190.5h1M254 191.5h1M255 192.5h1M255 189.5h1M257 192.5h1M262 191.5h1M265 189.5h1M265 192.5h1M272 190.5h1M272 191.5h1M273 191.5h1M274 190.5h1M275 190.5h1M275 191.5h1M276 192.5h1M281 189.5h1M282 191.5h1M284 191.5h1M287 190.5h1M300 190.5h1M311 192.5h1M312 192.5h1M315 190.5h1M315 192.5h1M319 190.5h1M321 191.5h1M323 189.5h1M325 192.5h1M325 192.5h1M326 189.5h1M331 190.5h1M339 189.5h1M340 191.5h1M341 190.5h1M347 191.5h1M349 191.5h1M349 190.5h1M350 190.5h1M350 191.5h1M352 191.5h1M353 190.5h1M353 190.5h1M353 192.5h1M354 189.5h1M354 189.5h1M355 191.5h1M356 190.5h1M356 192.5h1M357 192.5h1M358 192.5h1M359 189.5h1M359 189.5h1M362 192.5h1M365 189.5h1M366 189.5h1M366 189.5h1M367 190.5h1M367 191.5h1M368 189.5h1M370 192.5h1M378 191.5h1M378 190.5h1M383 192.5h1M385 189.5h1M388 192.5h1M391 191.5h1M391 191.5h1M394 189.5h1M397 189.5h1M405 190.5h1M407 189.5h1M409 191.5h1M410 190.5h1M411 191.5h1M412 191.5h1M414 192.5h1M417 189.5h1M420 192.5h1M422 189.5h1M422 189.5h1M426 192.5h1M430 189.5h1M433 191.5h1M434 192.5h1M434 192.5h1M436 191.5h1M444 190.5h1M444 190.5h1M449 192.5h1M450 190.5h1M450 190.5h1M452 189.5h1M452 191.5h1M455 191.5h1M459 190.5h1M460 190.5h1M460 192.5h1M461 189.5h1M463 192.5h1M466 190.5h1M466 192.5h1M468 192.5h1M473 190.5h1M474 191.5h1M476 192.5h1M484 189.5h1M487 190.5h1M487 190.5h1M488 190.5h1M489 191.5h1M491 190.5h1M492 192.5h1M496 191.5h1M499 190.5h1M503 190.5h1M510 189.5h1M511 191.5h1M515 191.5h1M516 191.5h1M517 189.5h1M519 190.5h1M521 189.5h1M534 192.5h1M536 192.5h1M541 191.5h1M541 190.5h1M549 191.5h1M549 189.5h1M555 192.5h1M555 189.5h1M556 190.5h1M557 192.5h1M562 189.5h1M565 192.5h1M567 191.5h1M567 190.5h1M570 192.5h1M575 190.5h1M575 191.5h1M584 192.5h1M594 190.5h1M595 191.5h1M597 191.5h1M600 189.5h1M601 192.5h1M607 189.5h1M609 192.5h1M609 191.5h1M610 192.5h1M613 190.5h1M613 191.5h1M615 192.5h1M616 192.5h1M619 189.5h1M623 189.5h1M623 191.5h1M628 191.5h1M630 189.5h1M632 189.5h1M634 190.5h1M637 191.5h1M638 192.5h1M639 190.5h1M641 191.5h1M642 191.5h1M648 192.5h1M649 190.5h1M649 189.5h1M650 191.5h1M659 191.5h1M660 190.5h1M660 189.5h1M660 190.5h1M661 189.5h1M667 191.5h1M667 192.5h1M669 190.5h1M669 191.5h1M669 192.5h1M669 190.5h1M676 191.5h1M676 190.5h1M678 190.5h1M680 192.5h1M680 189.5h1M680 189.5h1M687 190.5h1M689 192.5h1M691 189.5h1M691 192.5h1M692 192.5h1M693 191.5h1M693 191.5h1M695 189.5h1M704 191.5h1M706 189.5h1M706 189.5h1M709 190.5h1M710 192.5h1M712 192.5h1M717 192.5h1M718 189.5h1M720 192.5h1M723 191.5h1M723 190.5h1M724 191.5h1M726 192.5h1M727 192.5h1M732 189.5h1M734 191.5h1M740 189.5h1M740 191.5h1M742 191.5h1M744 192.5h1M744 192.5h1M745 189.5h1M746 191.5h1M746 190.5h1M747 191.5h1M749 190.5h1M750 192.5h1M752 190.5h1M754 190.5h1M754 189.5h1M755 190.5h1M756 192.5h1M757 190.5h1M758 192.5h1M759 192.5h1M760 192.5h1M760 192.5h1M762 191.5h1M762 192.5h1M763 190.5h1M765 189.5h1M765 191.5h1M769 191.5h1M772 192.5h1M776 190.5h1M776 191.5h1M777 190.5h1M779 192.5h1M780 190.5h1M780 191.5h1M782 191.5h1M792 191.5h1M794 192.5h1M797 191.5h1M798 191.5h1M805 190.5h1M817 192.5h1M820 189.5h1M835 190.5h1M838 189.5h1M854 189.5h1M857 192.5h1" stroke="#ffd8a0" stroke-width="1"/><path d="M1 185.5h1M3 188.5h1M6 188.5h1M14 188.5h1M25 183.5h1M26 186.5h1M27 187.5h1M30 186.5h1M31 188.5h1M34 186.5h1M39 184.5h1M40 186.5h1M41 188.5h1M61 183.5h1M63 188.5h1M69 188.5h1M69 188.5h1M71 185.5h1M73 188.5h1M78 184.5h1M79 188.5h1M84 187.5h1M89 188.5h1M100 188.5h1M104 186.5h1M111 187.5h1M116 188.5h1M118 184.5h1M133 188.5h1M134 188.5h1M135 186.5h1M141 186.5h1M148 184.5h1M148 188.5h1M152 184.5h1M152 185.5h1M153 183.5h1M154 186.5h1M154 188.5h1M155 186.5h1M155 187.5h1M155 186.5h1M159 188.5h1M162 185.5h1M166 187.5h1M175 186.5h1M177 184.5h1M179 185.5h1M183 186.5h1M184 183.5h1M188 187.5h1M191 185.5h1M191 184.5h1M191 188.5h1M202 187.5h1M209 188.5h1M211 188.5h1M212 187.5h1M215 188.5h1M222 188.5h1M223 184.5h1M226 184.5h1M229 187.5h1M230 187.5h1M231 186.5h1M231 184.5h1M233 185.5h1M236 185.5h1M243 185.5h1M244 188.5h1M248 184.5h1M250 188.5h1M252 183.5h1M259 187.5h1M262 184.5h1M263 187.5h1M268 187.5h1M269 186.5h1M289 187.5h1M291 187.5h1M292 185.5h1M299 184.5h1M302 185.5h1M303 187.5h1M305 184.5h1M312 185.5h1M323 185.5h1M323 185.5h1M323 185.5h1M328 187.5h1M329 185.5h1M335 184.5h1M337 188.5h1M339 188.5h1M346 187.5h1M350 184.5h1M350 185.5h1M352 186.5h1M353 186.5h1M366 185.5h1M366 188.5h1M370 183.5h1M371 186.5h1M371 187.5h1M372 188.5h1M372 188.5h1M375 185.5h1M381 188.5h1M382 184.5h1M382 185.5h1M386 183.5h1M387 188.5h1M391 185.5h1M393 185.5h1M395 186.5h1M399 188.5h1M400 187.5h1M404 183.5h1M405 188.5h1M407 186.5h1M407 188.5h1M409 186.5h1M412 188.5h1M420 183.5h1M422 188.5h1M430 186.5h1M435 187.5h1M438 188.5h1M439 188.5h1M451 183.5h1M453 185.5h1M457 185.5h1M458 188.5h1M459 188.5h1M473 183.5h1M476 187.5h1M477 187.5h1M481 187.5h1M487 186.5h1M492 188.5h1M494 183.5h1M496 188.5h1M496 188.5h1M496 188.5h1M497 183.5h1M499 188.5h1M499 186.5h1M503 184.5h1M507 186.5h1M512 185.5h1M514 187.5h1M516 186.5h1M516 186.5h1M520 186.5h1M536 185.5h1M547 184.5h1M552 187.5h1M554 184.5h1M570 188.5h1M579 188.5h1M591 187.5h1M592 187.5h1M594 187.5h1M596 187.5h1M608 188.5h1M610 185.5h1M611 184.5h1M617 185.5h1M618 187.5h1M619 184.5h1M627 184.5h1M627 188.5h1M632 183.5h1M635 186.5h1M636 187.5h1M639 187.5h1M642 187.5h1M647 187.5h1M648 184.5h1M653 187.5h1M654 186.5h1M654 187.5h1M658 184.5h1M660 188.5h1M663 186.5h1M671 185.5h1M673 186.5h1M686 187.5h1M689 187.5h1M690 188.5h1M691 188.5h1M693 187.5h1M695 187.5h1M697 187.5h1M697 183.5h1M704 185.5h1M707 184.5h1M707 186.5h1M711 186.5h1M713 185.5h1M717 184.5h1M717 188.5h1M720 187.5h1M722 185.5h1M723 186.5h1M723 183.5h1M724 188.5h1M724 188.5h1M726 183.5h1M727 187.5h1M729 186.5h1M729 187.5h1M730 187.5h1M731 185.5h1M737 184.5h1M738 187.5h1M740 187.5h1M754 187.5h1M762 188.5h1M765 188.5h1M769 183.5h1M804 188.5h1M811 188.5h1M812 188.5h1M836 188.5h1" stroke="#ea6a60" stroke-width="1"/><path d="M1 186.5h1M2 186.5h1M10 187.5h1M15 185.5h1M16 185.5h1M26 183.5h1M27 184.5h1M28 185.5h1M28 185.5h1M31 188.5h1M33 186.5h1M34 187.5h1M45 185.5h1M46 186.5h1M46 187.5h1M52 186.5h1M56 187.5h1M60 185.5h1M62 188.5h1M70 188.5h1M73 187.5h1M79 183.5h1M87 188.5h1M87 188.5h1M90 188.5h1M94 188.5h1M97 188.5h1M100 188.5h1M101 188.5h1M102 188.5h1M104 188.5h1M116 184.5h1M136 186.5h1M137 188.5h1M137 188.5h1M141 186.5h1M142 186.5h1M142 188.5h1M144 188.5h1M144 188.5h1M151 187.5h1M162 188.5h1M166 187.5h1M168 184.5h1M169 186.5h1M169 188.5h1M171 185.5h1M176 187.5h1M176 183.5h1M181 188.5h1M187 187.5h1M187 186.5h1M202 184.5h1M205 188.5h1M212 187.5h1M212 187.5h1M214 188.5h1M219 186.5h1M221 183.5h1M224 183.5h1M225 188.5h1M228 188.5h1M234 185.5h1M237 187.5h1M243 186.5h1M245 183.5h1M245 183.5h1M245 186.5h1M251 188.5h1M251 185.5h1M261 188.5h1M262 186.5h1M262 187.5h1M263 183.5h1M276 186.5h1M279 188.5h1M283 188.5h1M289 188.5h1M292 188.5h1M293 187.5h1M300 186.5h1M300 188.5h1M304 186.5h1M304 187.5h1M304 183.5h1M307 187.5h1M309 185.5h1M311 187.5h1M325 183.5h1M328 185.5h1M333 187.5h1M335 185.5h1M349 186.5h1M353 186.5h1M354 185.5h1M357 183.5h1M364 184.5h1M365 188.5h1M365 188.5h1M366 188.5h1M368 187.5h1M372 185.5h1M378 188.5h1M379 187.5h1M381 188.5h1M382 188.5h1M383 187.5h1M384 184.5h1M385 185.5h1M386 188.5h1M392 188.5h1M393 188.5h1M393 188.5h1M395 188.5h1M395 188.5h1M399 188.5h1M400 187.5h1M400 187.5h1M409 185.5h1M411 188.5h1M414 188.5h1M417 188.5h1M419 184.5h1M421 187.5h1M422 188.5h1M430 188.5h1M433 187.5h1M438 186.5h1M446 183.5h1M447 188.5h1M452 187.5h1M454 188.5h1M459 188.5h1M460 185.5h1M468 185.5h1M472 184.5h1M477 184.5h1M479 185.5h1M482 183.5h1M509 186.5h1M513 185.5h1M516 187.5h1M518 185.5h1M518 188.5h1M536 188.5h1M539 187.5h1M566 186.5h1M573 188.5h1M577 186.5h1M584 188.5h1M598 187.5h1M601 186.5h1M607 185.5h1M609 187.5h1M610 187.5h1M611 188.5h1M615 188.5h1M616 186.5h1M619 188.5h1M635 187.5h1M636 183.5h1M638 188.5h1M641 188.5h1M646 184.5h1M654 185.5h1M658 188.5h1M659 186.5h1M665 188.5h1M674 187.5h1M676 186.5h1M679 187.5h1M683 185.5h1M685 187.5h1M687 187.5h1M699 187.5h1M703 186.5h1M706 184.5h1M712 187.5h1M712 184.5h1M727 188.5h1M729 188.5h1M730 185.5h1M730 187.5h1M731 188.5h1M755 188.5h1M760 185.5h1M760 188.5h1M761 183.5h1M762 183.5h1M763 184.5h1M768 187.5h1M772 186.5h1M775 184.5h1M776 187.5h1M780 186.5h1M781 188.5h1M791 187.5h1M799 186.5h1M800 188.5h1M802 187.5h1M834 188.5h1M851 188.5h1M853 188.5h1" stroke="#ffc08a" stroke-width="1"/><path d="M1 191.5h1M2 192.5h1M3 191.5h1M3 189.5h1M3 192.5h1M5 192.5h1M11 192.5h1M12 191.5h1M12 189.5h1M15 192.5h1M16 191.5h1M16 191.5h1M18 190.5h1M18 189.5h1M19 191.5h1M20 189.5h1M22 191.5h1M25 192.5h1M25 191.5h1M27 191.5h1M28 192.5h1M30 190.5h1M30 190.5h1M35 189.5h1M36 191.5h1M36 191.5h1M40 190.5h1M40 191.5h1M43 192.5h1M46 189.5h1M53 191.5h1M53 190.5h1M53 190.5h1M56 192.5h1M57 192.5h1M63 190.5h1M65 191.5h1M67 191.5h1M68 192.5h1M70 190.5h1M70 190.5h1M70 192.5h1M71 192.5h1M71 192.5h1M73 192.5h1M75 192.5h1M78 190.5h1M82 189.5h1M82 192.5h1M82 189.5h1M85 190.5h1M85 192.5h1M86 189.5h1M95 189.5h1M99 189.5h1M100 192.5h1M100 191.5h1M112 189.5h1M114 191.5h1M116 189.5h1M117 192.5h1M132 192.5h1M133 189.5h1M134 190.5h1M134 191.5h1M139 192.5h1M144 191.5h1M145 189.5h1M146 192.5h1M147 192.5h1M147 189.5h1M147 189.5h1M150 189.5h1M151 191.5h1M151 192.5h1M154 192.5h1M156 189.5h1M158 190.5h1M158 189.5h1M158 190.5h1M164 191.5h1M165 192.5h1M166 191.5h1M170 191.5h1M173 189.5h1M178 190.5h1M180 192.5h1M180 191.5h1M180 192.5h1M181 192.5h1M184 189.5h1M187 191.5h1M187 190.5h1M188 191.5h1M188 190.5h1M189 190.5h1M190 190.5h1M193 192.5h1M193 189.5h1M199 191.5h1M200 191.5h1M202 189.5h1M204 192.5h1M206 190.5h1M206 192.5h1M207 189.5h1M207 192.5h1M207 191.5h1M208 190.5h1M208 191.5h1M209 191.5h1M210 191.5h1M212 189.5h1M217 192.5h1M219 191.5h1M222 190.5h1M224 191.5h1M225 192.5h1M231 192.5h1M233 192.5h1M235 191.5h1M236 189.5h1M236 192.5h1M237 190.5h1M240 192.5h1M240 190.5h1M242 189.5h1M242 192.5h1M244 189.5h1M245 192.5h1M251 189.5h1M251 189.5h1M252 190.5h1M252 191.5h1M254 192.5h1M255 192.5h1M257 192.5h1M260 191.5h1M263 191.5h1M264 192.5h1M266 190.5h1M271 191.5h1M272 189.5h1M274 192.5h1M275 190.5h1M276 191.5h1M278 189.5h1M281 191.5h1M285 192.5h1M286 190.5h1M287 190.5h1M289 189.5h1M292 191.5h1M294 189.5h1M294 192.5h1M299 191.5h1M299 192.5h1M300 191.5h1M304 189.5h1M304 191.5h1M307 190.5h1M307 192.5h1M311 190.5h1M311 192.5h1M312 192.5h1M315 190.5h1M318 189.5h1M318 192.5h1M320 192.5h1M321 192.5h1M321 192.5h1M322 189.5h1M323 192.5h1M325 189.5h1M327 189.5h1M331 189.5h1M335 189.5h1M336 190.5h1M336 192.5h1M337 190.5h1M341 189.5h1M346 192.5h1M349 192.5h1M352 192.5h1M354 189.5h1M354 190.5h1M355 192.5h1M355 189.5h1M356 191.5h1M359 192.5h1M365 192.5h1M367 189.5h1M369 191.5h1M372 192.5h1M373 190.5h1M373 192.5h1M378 192.5h1M381 189.5h1M384 192.5h1M385 192.5h1M387 191.5h1M387 192.5h1M387 190.5h1M388 189.5h1M390 190.5h1M390 191.5h1M390 190.5h1M391 192.5h1M392 191.5h1M396 190.5h1M397 192.5h1M397 189.5h1M403 192.5h1M403 192.5h1M408 192.5h1M411 191.5h1M412 190.5h1M413 189.5h1M414 192.5h1M414 191.5h1M418 191.5h1M419 190.5h1M419 190.5h1M426 191.5h1M432 192.5h1M433 191.5h1M434 191.5h1M437 192.5h1M441 192.5h1M444 189.5h1M446 191.5h1M450 192.5h1M450 190.5h1M451 190.5h1M451 191.5h1M451 192.5h1M453 192.5h1M454 192.5h1M455 191.5h1M455 189.5h1M458 191.5h1M459 190.5h1M460 189.5h1M460 189.5h1M464 192.5h1M464 189.5h1M478 192.5h1M483 191.5h1M490 190.5h1M492 190.5h1M497 189.5h1M501 189.5h1M502 192.5h1M503 191.5h1M509 191.5h1M510 192.5h1M516 191.5h1M521 192.5h1M530 190.5h1M534 189.5h1M536 189.5h1M538 191.5h1M538 192.5h1M540 192.5h1M548 190.5h1M548 190.5h1M555 192.5h1M557 190.5h1M558 192.5h1M560 190.5h1M564 189.5h1M568 189.5h1M569 191.5h1M571 191.5h1M573 190.5h1M583 190.5h1M592 189.5h1M593 189.5h1M593 191.5h1M595 191.5h1M595 191.5h1M596 189.5h1M597 190.5h1M597 190.5h1M598 191.5h1M599 192.5h1M604 191.5h1M604 190.5h1M605 192.5h1M606 191.5h1M606 190.5h1M606 192.5h1M610 191.5h1M613 192.5h1M614 191.5h1M615 190.5h1M617 191.5h1M618 192.5h1M622 190.5h1M624 190.5h1M627 191.5h1M627 189.5h1M632 191.5h1M632 189.5h1M633 190.5h1M634 192.5h1M640 190.5h1M644 190.5h1M644 190.5h1M647 189.5h1M648 190.5h1M649 189.5h1M650 189.5h1M652 189.5h1M657 192.5h1M661 192.5h1M661 192.5h1M661 190.5h1M664 189.5h1M665 191.5h1M665 190.5h1M671 192.5h1M673 191.5h1M674 189.5h1M674 189.5h1M676 192.5h1M676 192.5h1M678 191.5h1M685 190.5h1M685 192.5h1M689 190.5h1M693 189.5h1M693 189.5h1M698 189.5h1M699 191.5h1M703 192.5h1M707 190.5h1M711 191.5h1M712 191.5h1M713 192.5h1M713 190.5h1M716 191.5h1M717 189.5h1M717 191.5h1M718 190.5h1M721 192.5h1M722 190.5h1M723 192.5h1M726 192.5h1M728 191.5h1M729 191.5h1M730 192.5h1M731 192.5h1M731 191.5h1M737 192.5h1M740 191.5h1M742 189.5h1M743 189.5h1M746 190.5h1M747 192.5h1M748 192.5h1M751 189.5h1M751 190.5h1M755 189.5h1M756 190.5h1M757 190.5h1M757 189.5h1M759 190.5h1M759 189.5h1M763 189.5h1M763 190.5h1M765 191.5h1M766 190.5h1M768 191.5h1M770 190.5h1M772 192.5h1M775 191.5h1M779 192.5h1M780 190.5h1M781 191.5h1M782 190.5h1M784 190.5h1M792 190.5h1M793 189.5h1M798 192.5h1M804 189.5h1M810 189.5h1M812 190.5h1M813 190.5h1M819 189.5h1M823 191.5h1M829 192.5h1M833 191.5h1M839 191.5h1M839 190.5h1M841 192.5h1M841 191.5h1M854 190.5h1M857 190.5h1" stroke="#f6a070" stroke-width="1"/><path d="M2 188.5h1M5 185.5h1M6 188.5h1M7 179.5h1M10 186.5h1M14 187.5h1M15 182.5h1M17 179.5h1M18 187.5h1M19 187.5h1M20 186.5h1M20 186.5h1M21 185.5h1M21 185.5h1M22 184.5h1M23 186.5h1M24 182.5h1M26 186.5h1M26 187.5h1M26 186.5h1M28 185.5h1M29 184.5h1M30 181.5h1M31 184.5h1M32 188.5h1M36 183.5h1M36 182.5h1M37 180.5h1M40 187.5h1M41 183.5h1M41 186.5h1M42 188.5h1M45 188.5h1M55 186.5h1M61 186.5h1M62 186.5h1M66 185.5h1M69 188.5h1M73 186.5h1M74 187.5h1M75 187.5h1M75 188.5h1M84 188.5h1M87 187.5h1M91 186.5h1M92 185.5h1M95 186.5h1M96 186.5h1M98 180.5h1M98 185.5h1M107 188.5h1M107 182.5h1M108 188.5h1M110 188.5h1M116 182.5h1M117 188.5h1M117 178.5h1M120 187.5h1M133 181.5h1M134 184.5h1M134 186.5h1M137 187.5h1M139 186.5h1M140 188.5h1M144 185.5h1M144 187.5h1M145 188.5h1M145 187.5h1M145 188.5h1M147 187.5h1M149 188.5h1M150 186.5h1M151 185.5h1M152 187.5h1M152 182.5h1M153 187.5h1M154 188.5h1M156 188.5h1M158 187.5h1M159 188.5h1M160 188.5h1M160 186.5h1M161 180.5h1M163 183.5h1M165 187.5h1M169 185.5h1M173 188.5h1M176 188.5h1M176 187.5h1M177 182.5h1M179 187.5h1M182 186.5h1M184 188.5h1M187 187.5h1M188 187.5h1M214 188.5h1M220 184.5h1M225 186.5h1M226 186.5h1M231 187.5h1M233 187.5h1M235 186.5h1M239 187.5h1M240 188.5h1M240 188.5h1M244 185.5h1M245 183.5h1M256 183.5h1M259 187.5h1M262 186.5h1M269 188.5h1M269 188.5h1M271 187.5h1M272 184.5h1M274 184.5h1M281 186.5h1M282 182.5h1M284 185.5h1M288 185.5h1M289 187.5h1M290 186.5h1M292 187.5h1M292 182.5h1M306 188.5h1M312 187.5h1M313 186.5h1M317 188.5h1M321 187.5h1M323 180.5h1M334 187.5h1M335 188.5h1M335 183.5h1M341 188.5h1M350 188.5h1M350 188.5h1M352 187.5h1M352 187.5h1M356 183.5h1M358 186.5h1M358 183.5h1M360 188.5h1M362 186.5h1M362 187.5h1M362 187.5h1M363 186.5h1M368 188.5h1M375 187.5h1M375 188.5h1M375 185.5h1M376 185.5h1M377 188.5h1M378 183.5h1M380 184.5h1M381 183.5h1M384 187.5h1M384 180.5h1M386 188.5h1M388 187.5h1M388 187.5h1M391 188.5h1M393 188.5h1M393 182.5h1M394 186.5h1M396 185.5h1M399 181.5h1M400 182.5h1M400 186.5h1M402 187.5h1M403 184.5h1M403 183.5h1M403 187.5h1M404 187.5h1M407 185.5h1M409 186.5h1M409 186.5h1M411 187.5h1M411 187.5h1M414 187.5h1M417 186.5h1M418 188.5h1M428 186.5h1M442 186.5h1M453 186.5h1M464 187.5h1M465 188.5h1M466 180.5h1M469 178.5h1M470 186.5h1M470 182.5h1M474 188.5h1M481 185.5h1M482 186.5h1M482 183.5h1M487 186.5h1M491 188.5h1M493 181.5h1M497 187.5h1M499 186.5h1M500 188.5h1M501 184.5h1M504 188.5h1M509 186.5h1M510 186.5h1M512 184.5h1M513 187.5h1M516 188.5h1M518 184.5h1M519 188.5h1M519 181.5h1M530 184.5h1M531 188.5h1M533 188.5h1M537 185.5h1M552 186.5h1M555 188.5h1M555 186.5h1M558 188.5h1M561 185.5h1M573 188.5h1M573 188.5h1M574 188.5h1M578 188.5h1M578 188.5h1M580 183.5h1M584 186.5h1M593 186.5h1M594 185.5h1M596 185.5h1M604 186.5h1M609 184.5h1M611 188.5h1M613 186.5h1M615 185.5h1M618 186.5h1M624 188.5h1M625 187.5h1M625 188.5h1M626 188.5h1M626 179.5h1M630 188.5h1M632 186.5h1M637 184.5h1M640 186.5h1M641 188.5h1M643 187.5h1M647 188.5h1M648 186.5h1M652 188.5h1M658 184.5h1M660 184.5h1M662 182.5h1M665 186.5h1M666 188.5h1M666 183.5h1M667 180.5h1M668 184.5h1M671 187.5h1M676 188.5h1M679 187.5h1M686 188.5h1M688 188.5h1M697 186.5h1M698 188.5h1M698 185.5h1M699 187.5h1M699 186.5h1M706 188.5h1M707 182.5h1M708 187.5h1M711 188.5h1M711 187.5h1M713 184.5h1M717 185.5h1M725 188.5h1M726 188.5h1M729 183.5h1M730 188.5h1M732 183.5h1M735 188.5h1M737 184.5h1M737 187.5h1M745 184.5h1M747 183.5h1M748 187.5h1M751 181.5h1M752 188.5h1M752 188.5h1M758 187.5h1M758 184.5h1M760 187.5h1M760 186.5h1M762 188.5h1M763 188.5h1M763 184.5h1M765 184.5h1M768 184.5h1M775 187.5h1M776 187.5h1M780 186.5h1M782 188.5h1M816 188.5h1M824 187.5h1M826 188.5h1M838 187.5h1" stroke="#f07a58" stroke-width="1"/><path d="M2 189.5h1M3 191.5h1M6 191.5h1M6 191.5h1M7 189.5h1M11 189.5h1M12 189.5h1M12 190.5h1M14 192.5h1M16 192.5h1M16 192.5h1M17 191.5h1M17 192.5h1M18 191.5h1M19 192.5h1M22 189.5h1M22 189.5h1M23 190.5h1M27 189.5h1M27 192.5h1M29 190.5h1M29 192.5h1M29 190.5h1M30 189.5h1M30 191.5h1M31 191.5h1M32 192.5h1M34 192.5h1M34 191.5h1M39 192.5h1M39 192.5h1M40 192.5h1M43 192.5h1M45 190.5h1M46 192.5h1M53 191.5h1M61 189.5h1M69 192.5h1M72 191.5h1M73 191.5h1M78 190.5h1M78 191.5h1M80 189.5h1M82 189.5h1M85 189.5h1M89 191.5h1M90 189.5h1M93 189.5h1M95 190.5h1M96 192.5h1M96 191.5h1M98 189.5h1M100 191.5h1M100 192.5h1M104 191.5h1M106 192.5h1M108 190.5h1M114 191.5h1M114 192.5h1M116 191.5h1M117 192.5h1M117 191.5h1M136 189.5h1M138 189.5h1M139 190.5h1M139 192.5h1M140 191.5h1M140 191.5h1M150 192.5h1M150 191.5h1M150 189.5h1M152 192.5h1M153 189.5h1M154 190.5h1M155 189.5h1M165 191.5h1M166 189.5h1M166 192.5h1M169 191.5h1M171 189.5h1M174 191.5h1M174 191.5h1M175 190.5h1M177 191.5h1M182 192.5h1M183 192.5h1M185 189.5h1M185 189.5h1M185 190.5h1M187 190.5h1M192 189.5h1M193 190.5h1M193 190.5h1M199 191.5h1M199 192.5h1M200 189.5h1M205 191.5h1M207 191.5h1M211 192.5h1M213 191.5h1M214 192.5h1M216 191.5h1M217 192.5h1M217 191.5h1M219 189.5h1M219 189.5h1M220 189.5h1M221 189.5h1M226 189.5h1M228 192.5h1M230 189.5h1M230 190.5h1M237 192.5h1M239 192.5h1M240 189.5h1M243 190.5h1M246 189.5h1M251 192.5h1M255 192.5h1M257 189.5h1M259 190.5h1M260 192.5h1M261 191.5h1M262 189.5h1M267 192.5h1M267 191.5h1M269 191.5h1M276 192.5h1M278 190.5h1M278 192.5h1M283 189.5h1M287 190.5h1M287 190.5h1M290 191.5h1M291 189.5h1M291 191.5h1M292 191.5h1M293 190.5h1M293 189.5h1M299 191.5h1M300 192.5h1M300 191.5h1M302 191.5h1M302 191.5h1M303 192.5h1M303 192.5h1M304 191.5h1M305 189.5h1M306 189.5h1M307 189.5h1M309 191.5h1M311 191.5h1M313 189.5h1M313 190.5h1M314 189.5h1M318 190.5h1M321 191.5h1M329 190.5h1M330 190.5h1M334 192.5h1M336 191.5h1M337 189.5h1M337 189.5h1M338 189.5h1M339 190.5h1M339 191.5h1M341 189.5h1M347 191.5h1M349 190.5h1M349 192.5h1M350 192.5h1M353 192.5h1M353 192.5h1M363 190.5h1M366 191.5h1M366 190.5h1M367 191.5h1M370 192.5h1M372 192.5h1M373 190.5h1M374 190.5h1M377 189.5h1M377 190.5h1M379 192.5h1M381 191.5h1M381 190.5h1M383 191.5h1M383 191.5h1M384 192.5h1M388 189.5h1M390 192.5h1M391 192.5h1M393 191.5h1M399 192.5h1M405 189.5h1M405 192.5h1M407 190.5h1M407 189.5h1M413 191.5h1M416 192.5h1M417 191.5h1M418 190.5h1M419 191.5h1M419 192.5h1M422 191.5h1M426 189.5h1M426 189.5h1M428 190.5h1M434 190.5h1M441 189.5h1M442 189.5h1M444 192.5h1M449 189.5h1M449 190.5h1M450 189.5h1M451 189.5h1M456 189.5h1M470 191.5h1M474 190.5h1M475 191.5h1M475 190.5h1M479 191.5h1M480 190.5h1M481 192.5h1M481 191.5h1M487 191.5h1M489 191.5h1M491 191.5h1M492 191.5h1M494 192.5h1M494 192.5h1M494 189.5h1M497 189.5h1M500 191.5h1M501 191.5h1M501 192.5h1M503 192.5h1M504 190.5h1M506 191.5h1M507 190.5h1M507 190.5h1M508 190.5h1M509 189.5h1M511 192.5h1M511 189.5h1M512 191.5h1M513 189.5h1M513 190.5h1M514 189.5h1M518 189.5h1M530 191.5h1M531 190.5h1M532 190.5h1M534 192.5h1M537 192.5h1M537 192.5h1M540 191.5h1M541 191.5h1M549 191.5h1M551 192.5h1M554 190.5h1M554 190.5h1M558 190.5h1M561 192.5h1M561 192.5h1M563 191.5h1M564 191.5h1M565 192.5h1M565 191.5h1M567 189.5h1M567 190.5h1M573 189.5h1M574 190.5h1M575 191.5h1M582 191.5h1M585 189.5h1M590 190.5h1M591 191.5h1M594 189.5h1M595 192.5h1M596 189.5h1M597 189.5h1M598 192.5h1M601 191.5h1M602 189.5h1M608 190.5h1M611 189.5h1M614 191.5h1M614 190.5h1M618 191.5h1M620 191.5h1M622 190.5h1M624 192.5h1M625 189.5h1M625 189.5h1M628 190.5h1M630 192.5h1M634 189.5h1M635 191.5h1M636 189.5h1M638 191.5h1M639 191.5h1M645 190.5h1M647 191.5h1M648 192.5h1M650 192.5h1M650 189.5h1M652 189.5h1M652 190.5h1M657 191.5h1M658 189.5h1M658 189.5h1M659 189.5h1M660 191.5h1M661 189.5h1M665 191.5h1M666 190.5h1M667 192.5h1M672 189.5h1M672 189.5h1M673 189.5h1M674 192.5h1M674 192.5h1M675 191.5h1M675 192.5h1M677 191.5h1M678 191.5h1M679 192.5h1M683 191.5h1M683 189.5h1M689 191.5h1M689 189.5h1M692 192.5h1M694 192.5h1M694 191.5h1M695 192.5h1M695 192.5h1M696 189.5h1M697 189.5h1M698 192.5h1M707 189.5h1M708 190.5h1M718 190.5h1M724 190.5h1M727 191.5h1M729 192.5h1M732 192.5h1M735 192.5h1M737 189.5h1M744 189.5h1M745 192.5h1M746 189.5h1M748 191.5h1M757 191.5h1M759 192.5h1M765 192.5h1M768 190.5h1M770 189.5h1M781 192.5h1M789 189.5h1M793 190.5h1M797 190.5h1M799 190.5h1M813 191.5h1M823 189.5h1M824 190.5h1M829 192.5h1M847 191.5h1M850 191.5h1M850 191.5h1M851 190.5h1M852 191.5h1M855 192.5h1M855 190.5h1" stroke="#ffc88c" stroke-width="1"/><path d="M3 178.5h1M22 182.5h1M34 180.5h1M42 180.5h1M63 180.5h1M87 180.5h1M90 178.5h1M121 182.5h1M140 179.5h1M148 182.5h1M172 181.5h1M173 178.5h1M258 182.5h1M274 181.5h1M286 180.5h1M311 182.5h1M313 178.5h1M315 182.5h1M326 182.5h1M335 178.5h1M368 181.5h1M370 179.5h1M375 182.5h1M390 178.5h1M397 182.5h1M522 179.5h1M617 180.5h1M619 181.5h1M642 178.5h1M696 182.5h1M736 181.5h1" stroke="#e8605c" stroke-width="1"/><path d="M3 190.5h1M5 191.5h1M7 189.5h1M8 191.5h1M8 191.5h1M9 191.5h1M9 192.5h1M11 189.5h1M11 190.5h1M15 191.5h1M17 191.5h1M18 192.5h1M19 190.5h1M20 191.5h1M20 189.5h1M21 189.5h1M24 192.5h1M26 189.5h1M29 191.5h1M29 192.5h1M31 189.5h1M32 189.5h1M33 189.5h1M36 191.5h1M36 192.5h1M39 190.5h1M39 192.5h1M45 190.5h1M45 189.5h1M46 191.5h1M52 189.5h1M52 190.5h1M52 192.5h1M53 189.5h1M54 191.5h1M56 189.5h1M56 190.5h1M62 192.5h1M68 189.5h1M68 189.5h1M70 191.5h1M72 192.5h1M72 190.5h1M75 192.5h1M81 192.5h1M83 191.5h1M84 191.5h1M85 191.5h1M89 190.5h1M93 192.5h1M94 191.5h1M96 192.5h1M98 191.5h1M102 191.5h1M108 190.5h1M118 190.5h1M118 189.5h1M119 190.5h1M134 192.5h1M135 191.5h1M137 191.5h1M137 192.5h1M137 192.5h1M138 191.5h1M140 190.5h1M142 192.5h1M143 189.5h1M144 191.5h1M150 191.5h1M152 190.5h1M153 191.5h1M156 190.5h1M158 192.5h1M158 191.5h1M159 189.5h1M162 191.5h1M165 192.5h1M167 189.5h1M168 192.5h1M170 189.5h1M170 192.5h1M176 189.5h1M179 191.5h1M179 191.5h1M179 191.5h1M180 192.5h1M180 191.5h1M182 189.5h1M182 189.5h1M183 191.5h1M186 190.5h1M188 190.5h1M189 191.5h1M190 192.5h1M198 191.5h1M200 191.5h1M202 190.5h1M203 190.5h1M206 192.5h1M206 192.5h1M208 189.5h1M209 191.5h1M215 191.5h1M220 190.5h1M223 189.5h1M225 190.5h1M226 192.5h1M227 190.5h1M228 191.5h1M229 190.5h1M230 191.5h1M236 189.5h1M241 189.5h1M245 192.5h1M260 190.5h1M261 191.5h1M272 190.5h1M274 190.5h1M276 192.5h1M279 192.5h1M282 189.5h1M286 190.5h1M287 190.5h1M291 191.5h1M294 189.5h1M299 191.5h1M300 190.5h1M304 192.5h1M307 191.5h1M317 189.5h1M317 189.5h1M318 191.5h1M320 190.5h1M322 190.5h1M325 192.5h1M326 191.5h1M329 192.5h1M329 192.5h1M334 192.5h1M346 190.5h1M349 191.5h1M357 191.5h1M361 189.5h1M363 190.5h1M363 191.5h1M367 190.5h1M368 190.5h1M368 189.5h1M368 192.5h1M369 191.5h1M372 192.5h1M373 192.5h1M375 192.5h1M375 190.5h1M376 190.5h1M376 192.5h1M376 189.5h1M377 189.5h1M377 190.5h1M378 190.5h1M379 191.5h1M379 191.5h1M379 190.5h1M380 192.5h1M382 190.5h1M382 190.5h1M383 191.5h1M385 190.5h1M387 190.5h1M388 189.5h1M388 189.5h1M394 190.5h1M394 192.5h1M395 190.5h1M395 190.5h1M397 192.5h1M397 192.5h1M397 192.5h1M398 192.5h1M399 190.5h1M401 192.5h1M404 190.5h1M412 192.5h1M412 192.5h1M414 191.5h1M416 190.5h1M417 189.5h1M418 190.5h1M419 191.5h1M419 192.5h1M422 191.5h1M422 190.5h1M427 192.5h1M431 191.5h1M432 189.5h1M433 189.5h1M435 192.5h1M438 192.5h1M446 192.5h1M449 192.5h1M449 192.5h1M452 189.5h1M460 190.5h1M462 192.5h1M464 189.5h1M468 192.5h1M469 189.5h1M470 191.5h1M479 192.5h1M484 191.5h1M491 191.5h1M492 192.5h1M495 192.5h1M496 192.5h1M497 191.5h1M497 189.5h1M499 190.5h1M503 191.5h1M505 191.5h1M513 190.5h1M514 191.5h1M519 189.5h1M520 189.5h1M521 190.5h1M522 191.5h1M532 190.5h1M532 190.5h1M532 191.5h1M533 191.5h1M534 190.5h1M536 192.5h1M538 190.5h1M538 189.5h1M546 191.5h1M546 190.5h1M548 189.5h1M552 190.5h1M553 190.5h1M554 190.5h1M556 192.5h1M557 190.5h1M558 190.5h1M564 192.5h1M564 192.5h1M564 190.5h1M567 192.5h1M569 190.5h1M569 189.5h1M569 189.5h1M574 189.5h1M575 192.5h1M578 190.5h1M579 191.5h1M579 189.5h1M581 191.5h1M581 190.5h1M581 192.5h1M583 189.5h1M592 190.5h1M594 191.5h1M594 189.5h1M596 191.5h1M598 192.5h1M598 192.5h1M600 190.5h1M600 192.5h1M600 192.5h1M601 190.5h1M607 192.5h1M608 190.5h1M613 191.5h1M615 191.5h1M615 190.5h1M616 192.5h1M619 189.5h1M623 191.5h1M623 192.5h1M626 189.5h1M626 192.5h1M627 190.5h1M628 191.5h1M629 192.5h1M638 192.5h1M638 192.5h1M639 189.5h1M641 190.5h1M642 191.5h1M643 191.5h1M643 192.5h1M643 189.5h1M651 192.5h1M654 191.5h1M657 191.5h1M658 191.5h1M662 190.5h1M665 192.5h1M667 191.5h1M667 192.5h1M673 192.5h1M675 190.5h1M675 190.5h1M677 189.5h1M680 192.5h1M680 189.5h1M681 192.5h1M681 191.5h1M683 190.5h1M685 192.5h1M690 190.5h1M695 190.5h1M696 189.5h1M698 190.5h1M699 189.5h1M704 190.5h1M706 192.5h1M707 190.5h1M708 189.5h1M708 190.5h1M715 189.5h1M720 189.5h1M720 189.5h1M721 189.5h1M722 191.5h1M724 189.5h1M724 192.5h1M724 192.5h1M726 192.5h1M727 190.5h1M727 190.5h1M728 190.5h1M729 191.5h1M730 189.5h1M730 190.5h1M731 192.5h1M732 189.5h1M737 189.5h1M740 191.5h1M744 191.5h1M747 189.5h1M748 192.5h1M751 192.5h1M754 191.5h1M756 190.5h1M757 189.5h1M758 192.5h1M759 191.5h1M760 191.5h1M765 191.5h1M768 191.5h1M772 189.5h1M774 192.5h1M775 191.5h1M776 191.5h1M780 190.5h1M781 189.5h1M781 191.5h1M781 192.5h1M782 189.5h1M783 192.5h1M783 192.5h1M788 192.5h1M789 191.5h1M794 192.5h1M800 190.5h1M801 190.5h1M803 191.5h1M804 192.5h1M826 189.5h1M828 191.5h1M829 192.5h1M842 191.5h1" stroke="#f58a60" stroke-width="1"/><path d="M3 184.5h1M6 185.5h1M7 187.5h1M8 187.5h1M11 187.5h1M11 187.5h1M12 187.5h1M12 188.5h1M13 185.5h1M15 188.5h1M16 186.5h1M17 188.5h1M19 187.5h1M24 183.5h1M31 184.5h1M34 186.5h1M36 187.5h1M45 186.5h1M52 187.5h1M54 188.5h1M54 186.5h1M56 188.5h1M57 185.5h1M68 183.5h1M72 184.5h1M73 185.5h1M76 183.5h1M82 187.5h1M84 184.5h1M86 188.5h1M89 187.5h1M90 188.5h1M92 184.5h1M93 187.5h1M104 184.5h1M115 185.5h1M117 185.5h1M135 186.5h1M136 188.5h1M137 184.5h1M139 187.5h1M139 186.5h1M143 184.5h1M145 188.5h1M151 187.5h1M154 188.5h1M156 188.5h1M158 188.5h1M161 185.5h1M165 185.5h1M166 185.5h1M168 187.5h1M169 188.5h1M169 187.5h1M175 187.5h1M176 188.5h1M180 187.5h1M181 188.5h1M183 188.5h1M187 186.5h1M191 185.5h1M192 186.5h1M192 184.5h1M192 183.5h1M193 186.5h1M199 187.5h1M225 188.5h1M231 183.5h1M233 188.5h1M237 183.5h1M240 185.5h1M242 185.5h1M250 188.5h1M251 188.5h1M255 187.5h1M257 187.5h1M259 185.5h1M263 185.5h1M271 185.5h1M273 186.5h1M275 184.5h1M276 187.5h1M278 188.5h1M280 187.5h1M287 187.5h1M288 187.5h1M302 187.5h1M303 188.5h1M312 184.5h1M313 187.5h1M321 187.5h1M340 188.5h1M340 183.5h1M351 188.5h1M352 184.5h1M361 187.5h1M362 186.5h1M363 187.5h1M365 186.5h1M374 188.5h1M379 187.5h1M379 187.5h1M387 183.5h1M390 186.5h1M396 185.5h1M402 184.5h1M406 186.5h1M407 188.5h1M412 186.5h1M414 187.5h1M418 187.5h1M420 186.5h1M430 185.5h1M448 186.5h1M452 186.5h1M453 184.5h1M461 187.5h1M469 185.5h1M469 187.5h1M470 188.5h1M480 186.5h1M486 185.5h1M488 185.5h1M491 187.5h1M500 186.5h1M502 185.5h1M503 186.5h1M509 184.5h1M513 188.5h1M514 188.5h1M518 186.5h1M521 188.5h1M521 183.5h1M533 187.5h1M540 186.5h1M585 186.5h1M585 188.5h1M590 185.5h1M595 188.5h1M596 187.5h1M602 186.5h1M607 184.5h1M608 185.5h1M614 187.5h1M616 188.5h1M620 186.5h1M623 184.5h1M627 188.5h1M633 185.5h1M635 188.5h1M637 187.5h1M639 187.5h1M639 183.5h1M647 185.5h1M651 186.5h1M657 188.5h1M657 186.5h1M661 186.5h1M675 185.5h1M677 183.5h1M677 188.5h1M680 187.5h1M681 187.5h1M683 187.5h1M685 186.5h1M690 186.5h1M694 186.5h1M695 188.5h1M698 186.5h1M703 184.5h1M703 185.5h1M706 186.5h1M707 183.5h1M710 186.5h1M715 185.5h1M715 185.5h1M726 184.5h1M731 187.5h1M735 188.5h1M740 187.5h1M741 188.5h1M743 187.5h1M743 184.5h1M745 186.5h1M746 186.5h1M747 187.5h1M747 185.5h1M748 187.5h1M754 188.5h1M755 188.5h1M756 188.5h1M759 188.5h1M761 184.5h1M763 188.5h1M770 184.5h1M780 187.5h1M781 188.5h1M825 188.5h1M842 188.5h1M843 188.5h1M848 188.5h1M853 188.5h1M856 188.5h1" stroke="#f59a6a" stroke-width="1"/><path d="M37 181.5h1M45 182.5h1M46 180.5h1M54 177.5h1M76 181.5h1M76 182.5h1M114 179.5h1M115 182.5h1M135 182.5h1M185 182.5h1M194 182.5h1M230 181.5h1M246 179.5h1M269 180.5h1M272 177.5h1M309 176.5h1M329 179.5h1M337 179.5h1M337 178.5h1M341 180.5h1M361 181.5h1M381 180.5h1M396 179.5h1M398 179.5h1M405 182.5h1M453 182.5h1M459 182.5h1M496 178.5h1M509 182.5h1M522 178.5h1M522 181.5h1M601 181.5h1M610 182.5h1M638 181.5h1M646 181.5h1M652 177.5h1M653 178.5h1M655 180.5h1M670 180.5h1M682 182.5h1M689 180.5h1M694 178.5h1M708 180.5h1M715 182.5h1M735 182.5h1M749 182.5h1M782 181.5h1" stroke="#f4a070" stroke-width="1"/><path d="M0 0.5H861M0 97.5H861M0 192.5H861" stroke="#e0e0e0" stroke-width="1" stroke-dasharray="3 2"/><path d="M860.5 0V193" stroke="#e0e0e0" stroke-width="1" stroke-dasharray="3 2"/><rect x="0" y="0" width="4" height="4" fill="#ccc"/><rect x="0" y="93" width="4" height="4" fill="#ccc"/><rect x="0" y="97" width="4" height="4" fill="#ccc"/><rect x="0" y="189" width="4" height="4" fill="#ccc"/><rect x="857" y="0" width="4" height="4" fill="#ccc"/><rect x="857" y="93" width="4" height="4" fill="#ccc"/><rect x="857" y="97" width="4" height="4" fill="#ccc"/><rect x="857" y="189" width="4" height="4" fill="#ccc"/></svg>
<div class="a" style="left:421px;top:553px;width:863px;height:2px;background:#000"></div>
<div class="a" style="left:421px;top:361px;width:1px;height:193px;background:#000"></div><div class="a" style="left:422px;top:361px;width:1px;height:193px;background:#e8b8c8"></div>
<div class="a" style="left:1283px;top:457px;width:75px;height:1px;background:#000"></div>
<div class="a" style="left:1357px;top:361px;width:1px;height:194px;background:#000"></div>
<div class="a" style="left:1283px;top:554px;width:75px;height:1px;background:#000"></div>
<div class="a" style="left:1292px;top:362px;color:#a8a8a8;line-height:14px">Hz</div>
<div class="a" style="left:1292px;top:391px;color:#6e6e6e;line-height:14px">15k</div>
<div class="a" style="left:1292px;top:411px;color:#a8a8a8;line-height:14px">10k</div>
<div class="a" style="left:1284px;top:398px;width:3px;height:1px;background:#c0c0c0"></div>
<div class="a" style="left:1284px;top:418px;width:3px;height:1px;background:#c0c0c0"></div>
<div class="a" style="left:1284px;top:456px;width:3px;height:1px;background:#c0c0c0"></div>
<div class="a" style="left:1292px;top:459px;color:#a8a8a8;line-height:14px">Hz</div>
<div class="a" style="left:1292px;top:488px;color:#6e6e6e;line-height:14px">15k</div>
<div class="a" style="left:1292px;top:508px;color:#a8a8a8;line-height:14px">10k</div>
<div class="a" style="left:1284px;top:495px;width:3px;height:1px;background:#c0c0c0"></div>
<div class="a" style="left:1284px;top:515px;width:3px;height:1px;background:#c0c0c0"></div>
<div class="a" style="left:1284px;top:553px;width:3px;height:1px;background:#c0c0c0"></div>
<div class="a" style="left:0;top:566px;width:1366px;height:180px;background:#232323"></div>
<div class="a" style="left:14px;top:579px;color:#d0d0d0;line-height:14px">Frequency Analysis</div>
<svg class="a" style="left:119px;top:582px" width="9" height="8"><path d="M0 1.5H9M0 4.5H9M0 7.5H9" stroke="#bbb" stroke-width="1"/></svg>
<div class="a" style="left:13px;top:617px;color:#a0a0a0;line-height:14px">Scale:</div>
<div class="a" style="left:46px;top:614px;width:100px;height:19px;background:#1d1d1d;border:1px solid #303030;border-radius:2px"></div>
<div class="a" style="left:54px;top:617px;color:#d0d0d0;line-height:14px">Logarithmic</div>
<svg class="a" style="left:131px;top:620px" width="9" height="6"><path d="M0.5 0.5L4.5 4.5L8.5 0.5" fill="none" stroke="#bbb" stroke-width="1.2"/></svg>
<svg class="a" style="left:161px;top:616px" width="17" height="16"><rect x="1.5" y="1.5" width="9" height="9" fill="none" stroke="#c0c0c0" stroke-width="1.3"/><path d="M5 14.5H15.5V5" fill="none" stroke="#c0c0c0" stroke-width="1" stroke-dasharray="1 1"/></svg>
<div class="a" style="left:194px;top:617px;color:#a0a0a0;line-height:14px">Hold:</div>
<div class="a" style="left:225px;top:614px;width:23px;height:20px;background:#1d1d1d;border:1px solid #2f2f2f;border-radius:2px;color:#b0b0b0;text-align:center;line-height:18px">1</div>
<div class="a" style="left:225px;top:636px;width:23px;height:4px;background:#ee1b1b"></div>
<div class="a" style="left:251px;top:614px;width:23px;height:20px;background:#1d1d1d;border:1px solid #2f2f2f;border-radius:2px;color:#b0b0b0;text-align:center;line-height:18px">2</div>
<div class="a" style="left:251px;top:636px;width:23px;height:4px;background:#ff861a"></div>
<div class="a" style="left:277px;top:614px;width:23px;height:20px;background:#1d1d1d;border:1px solid #2f2f2f;border-radius:2px;color:#b0b0b0;text-align:center;line-height:18px">3</div>
<div class="a" style="left:277px;top:636px;width:23px;height:4px;background:#f2ef1a"></div>
<div class="a" style="left:303px;top:614px;width:23px;height:20px;background:#1d1d1d;border:1px solid #2f2f2f;border-radius:2px;color:#b0b0b0;text-align:center;line-height:18px">4</div>
<div class="a" style="left:303px;top:636px;width:23px;height:4px;background:#7ee322"></div>
<div class="a" style="left:329px;top:614px;width:23px;height:20px;background:#1d1d1d;border:1px solid #2f2f2f;border-radius:2px;color:#b0b0b0;text-align:center;line-height:18px">5</div>
<div class="a" style="left:329px;top:636px;width:23px;height:4px;background:#4bbd43"></div>
<div class="a" style="left:355px;top:614px;width:23px;height:20px;background:#1d1d1d;border:1px solid #2f2f2f;border-radius:2px;color:#b0b0b0;text-align:center;line-height:18px">6</div>
<div class="a" style="left:355px;top:636px;width:23px;height:4px;background:#1ddff5"></div>
<div class="a" style="left:381px;top:614px;width:23px;height:20px;background:#1d1d1d;border:1px solid #2f2f2f;border-radius:2px;color:#b0b0b0;text-align:center;line-height:18px">7</div>
<div class="a" style="left:381px;top:636px;width:23px;height:4px;background:#3998ec"></div>
<div class="a" style="left:407px;top:614px;width:23px;height:20px;background:#1d1d1d;border:1px solid #2f2f2f;border-radius:2px;color:#b0b0b0;text-align:center;line-height:18px">8</div>
<div class="a" style="left:407px;top:636px;width:23px;height:4px;background:#e524e0"></div>
<div class="a" style="left:1360px;top:566px;width:6px;height:179px;background:#1f1f1f"></div>
<div class="a" style="left:12px;top:651px;width:1342px;height:94px;border:1px solid #2d2d2d"></div>
<div class="a" style="left:17px;top:656px;width:1297px;height:65px;background:#000"></div>
<svg class="a" style="left:0;top:0" width="1366" height="768"><path d="M17 663.5H1313M17 690.5H1313" stroke="#124a12" stroke-width="1"/><path d="M21.5 657V720M290.5 657V720M718.5 657V720M1146.5 657V720M1309.5 657V720" stroke="#124a12" stroke-width="1"/><path d="M21 717.5 L21 682.4 L22 682.4 L23 682.4 L24 682.4 L25 682.4 L26 682.3 L27 682.3 L28 682.3 L29 682.3 L30 682.3 L31 682.3 L32 682.3 L33 682.3 L34 682.3 L35 682.3 L36 682.2 L37 682.2 L38 682.2 L39 682.2 L40 682.2 L41 682.2 L42 682.2 L43 682.2 L44 682.2 L45 682.2 L46 682.1 L47 682.1 L48 682.1 L49 682.1 L50 682.1 L51 682.1 L52 682.1 L53 682.1 L54 682.1 L55 682.1 L56 682.0 L57 682.0 L58 682.0 L59 682.0 L60 682.0 L61 682.0 L62 682.0 L63 682.0 L64 682.0 L65 681.9 L66 681.9 L67 681.9 L68 681.9 L69 681.9 L70 681.9 L71 681.9 L72 681.9 L73 681.9 L74 681.8 L75 681.8 L76 681.8 L77 681.8 L78 681.8 L79 681.8 L80 681.8 L81 681.8 L82 681.8 L83 681.7 L84 681.7 L85 681.7 L86 681.7 L87 681.7 L88 681.7 L89 681.7 L90 681.7 L91 681.7 L92 681.6 L93 681.6 L94 681.6 L95 681.6 L96 681.6 L97 681.6 L98 681.6 L99 681.6 L100 681.6 L101 681.5 L102 681.5 L103 681.5 L104 681.5 L105 681.5 L106 681.5 L107 681.5 L108 681.5 L109 681.5 L110 681.4 L111 681.4 L112 681.4 L113 681.4 L114 681.4 L115 681.4 L116 681.4 L117 681.4 L118 681.4 L119 681.3 L120 681.3 L121 681.3 L122 681.3 L123 681.3 L124 681.3 L125 681.3 L126 681.3 L127 681.3 L128 681.2 L129 681.2 L130 681.2 L131 681.2 L132 681.2 L133 681.2 L134 681.2 L135 681.2 L136 681.2 L137 681.1 L138 681.1 L139 681.1 L140 681.1 L141 681.1 L142 681.1 L143 681.1 L144 681.1 L145 681.1 L146 681.0 L147 681.0 L148 681.0 L149 681.0 L150 681.0 L151 681.0 L152 681.0 L153 680.9 L154 680.9 L155 680.9 L156 680.9 L157 680.9 L158 680.9 L159 680.8 L160 680.8 L161 680.8 L162 680.8 L163 680.8 L164 680.7 L165 680.7 L166 680.7 L167 680.7 L168 680.7 L169 680.6 L170 680.6 L171 680.6 L172 680.6 L173 680.6 L174 680.6 L175 680.5 L176 680.5 L177 680.5 L178 680.5 L179 680.5 L180 680.4 L181 680.4 L182 680.4 L183 680.4 L184 680.4 L185 680.4 L186 680.3 L187 680.3 L188 680.3 L189 680.3 L190 680.3 L191 680.2 L192 680.2 L193 680.2 L194 680.2 L195 680.2 L196 680.1 L197 680.1 L198 680.1 L199 680.1 L200 680.1 L201 680.1 L202 680.0 L203 680.0 L204 680.0 L205 680.0 L206 680.0 L207 679.9 L208 679.9 L209 679.9 L210 679.9 L211 679.9 L212 679.8 L213 679.8 L214 679.8 L215 679.8 L216 679.8 L217 679.8 L218 679.7 L219 679.7 L220 679.7 L221 679.7 L222 679.7 L223 679.6 L224 679.6 L225 679.6 L226 679.6 L227 679.6 L228 679.6 L229 679.5 L230 679.5 L231 679.5 L232 679.5 L233 679.5 L234 679.4 L235 679.4 L236 679.4 L237 679.4 L238 679.4 L239 679.3 L240 679.3 L241 679.3 L242 679.3 L243 679.3 L244 679.3 L245 679.2 L246 679.2 L247 679.2 L248 679.2 L249 679.2 L250 679.1 L251 679.1 L252 679.1 L253 679.1 L254 679.1 L255 679.0 L256 679.0 L257 679.0 L258 679.0 L259 679.0 L260 679.0 L261 678.9 L262 678.9 L263 678.9 L264 678.9 L265 678.9 L266 678.8 L267 678.8 L268 678.8 L269 678.8 L270 678.8 L271 678.8 L272 678.7 L273 678.7 L274 678.7 L275 678.7 L276 678.7 L277 678.6 L278 678.6 L279 678.6 L280 678.6 L281 678.6 L282 678.5 L283 678.5 L284 678.5 L285 678.5 L286 678.5 L287 678.5 L288 678.4 L289 678.4 L290 678.4 L291 678.4 L292 678.4 L293 678.4 L294 678.4 L295 678.4 L296 678.4 L297 678.4 L298 678.4 L299 678.4 L300 678.4 L301 678.4 L302 678.4 L303 678.4 L304 678.4 L305 678.4 L306 678.4 L307 678.4 L308 678.4 L309 678.4 L310 678.4 L311 678.4 L312 678.4 L313 678.4 L314 678.4 L315 678.4 L316 678.4 L317 678.4 L318 678.4 L319 678.4 L320 678.4 L321 678.4 L322 678.4 L323 678.4 L324 678.4 L325 678.4 L326 678.4 L327 678.4 L328 678.4 L329 678.4 L330 678.4 L331 678.4 L332 678.4 L333 678.4 L334 678.4 L335 678.5 L336 678.5 L337 678.5 L338 678.5 L339 678.5 L340 678.5 L341 678.5 L342 678.5 L343 678.5 L344 678.5 L345 678.5 L346 678.5 L347 678.5 L348 678.5 L349 678.5 L350 678.5 L351 678.5 L352 678.5 L353 678.5 L354 678.5 L355 678.5 L356 678.5 L357 678.5 L358 678.5 L359 678.5 L360 678.5 L361 678.5 L362 678.5 L363 678.5 L364 678.5 L365 678.5 L366 678.5 L367 678.5 L368 678.5 L369 678.5 L370 678.5 L371 678.5 L372 678.5 L373 678.5 L374 678.5 L375 678.5 L376 678.5 L377 678.5 L378 678.5 L379 678.5 L380 678.5 L381 678.5 L382 678.6 L383 678.6 L384 678.6 L385 678.7 L386 678.7 L387 678.8 L388 678.8 L389 678.8 L390 678.9 L391 678.9 L392 679.0 L393 679.0 L394 679.0 L395 679.1 L396 679.1 L397 679.1 L398 679.2 L399 679.2 L400 679.2 L401 679.3 L402 679.3 L403 679.4 L404 679.4 L405 679.4 L406 679.5 L407 679.5 L408 679.5 L409 679.6 L410 679.6 L411 679.7 L412 679.7 L413 679.7 L414 679.8 L415 679.8 L416 679.9 L417 679.9 L418 679.9 L419 680.0 L420 680.0 L421 680.0 L422 680.1 L423 680.1 L424 680.1 L425 680.2 L426 680.2 L427 680.3 L428 680.3 L429 680.3 L430 680.4 L431 680.4 L432 680.5 L433 680.5 L434 680.5 L435 680.6 L436 680.6 L437 680.6 L438 680.7 L439 680.7 L440 680.8 L441 680.8 L442 680.8 L443 680.9 L444 680.9 L445 680.9 L446 681.0 L447 681.0 L448 681.0 L449 681.1 L450 681.1 L451 681.2 L452 681.2 L453 681.2 L454 681.3 L455 681.3 L456 681.4 L457 681.4 L458 681.4 L459 681.5 L460 681.5 L461 681.5 L462 681.6 L463 681.6 L464 681.6 L465 681.7 L466 681.7 L467 681.8 L468 681.8 L469 681.8 L470 681.9 L471 681.9 L472 682.0 L473 682.0 L474 682.0 L475 682.1 L476 682.1 L477 682.1 L478 682.2 L479 682.2 L480 682.2 L481 682.3 L482 682.3 L483 682.4 L484 682.4 L485 682.4 L486 682.5 L487 682.5 L488 682.5 L489 682.6 L490 682.6 L491 682.7 L492 682.7 L493 682.7 L494 682.8 L495 682.8 L496 682.9 L497 682.9 L498 682.9 L499 683.0 L500 683.0 L501 683.0 L502 683.1 L503 683.1 L504 683.1 L505 683.1 L506 683.2 L507 683.2 L508 683.2 L509 683.3 L510 683.3 L511 683.3 L512 683.4 L513 683.4 L514 683.4 L515 683.4 L516 683.5 L517 683.5 L518 683.5 L519 683.6 L520 683.6 L521 683.6 L522 683.6 L523 683.7 L524 683.7 L525 683.7 L526 683.8 L527 683.8 L528 683.8 L529 683.8 L530 683.9 L531 683.9 L532 683.9 L533 684.0 L534 684.0 L535 684.0 L536 684.0 L537 684.1 L538 684.1 L539 684.1 L540 684.0 L541 684.0 L542 684.0 L543 684.0 L544 684.0 L545 684.0 L546 684.0 L547 684.0 L548 684.0 L549 684.0 L550 684.0 L551 682.5 L552 682.5 L553 682.5 L554 682.5 L555 684.0 L556 684.0 L557 684.0 L558 684.0 L559 684.0 L560 684.0 L561 684.0 L562 684.0 L563 684.0 L564 684.0 L565 684.0 L566 684.0 L567 684.0 L568 684.0 L569 685.0 L570 685.0 L571 685.0 L572 685.0 L573 685.0 L574 685.0 L575 685.0 L576 685.0 L577 685.0 L578 685.0 L579 685.0 L580 685.0 L581 685.0 L582 685.0 L583 685.0 L584 685.0 L585 685.0 L586 685.0 L587 685.0 L588 685.0 L589 685.0 L590 685.0 L591 685.0 L592 685.0 L593 685.0 L594 685.0 L595 685.0 L596 685.0 L597 685.0 L598 685.0 L599 685.0 L600 685.0 L601 685.0 L602 685.0 L603 686.0 L604 686.0 L605 686.0 L606 686.0 L607 686.0 L608 686.0 L609 686.0 L610 686.0 L611 684.0 L612 684.0 L613 684.0 L614 686.0 L615 686.0 L616 686.0 L617 686.0 L618 686.0 L619 686.0 L620 686.0 L621 686.0 L622 686.0 L623 686.0 L624 686.0 L625 686.0 L626 686.0 L627 686.0 L628 686.0 L629 686.0 L630 686.0 L631 686.0 L632 686.0 L633 686.0 L634 686.0 L635 686.0 L636 686.0 L637 686.0 L638 686.0 L639 686.0 L640 686.0 L641 686.0 L642 686.0 L643 686.0 L644 686.0 L645 686.0 L646 686.0 L647 686.0 L648 686.0 L649 686.0 L650 686.0 L651 686.0 L652 686.0 L653 686.0 L654 686.0 L655 686.0 L656 686.0 L657 684.0 L658 684.0 L659 684.0 L660 686.0 L661 686.0 L662 686.0 L663 686.0 L664 686.0 L665 686.0 L666 686.0 L667 686.0 L668 686.0 L669 686.0 L670 686.0 L671 686.0 L672 686.0 L673 686.0 L674 686.0 L675 686.0 L676 686.0 L677 686.0 L678 686.0 L679 686.0 L680 686.0 L681 686.0 L682 686.0 L683 686.0 L684 686.0 L685 686.0 L686 686.0 L687 686.0 L688 686.0 L689 686.0 L690 686.0 L691 686.0 L692 686.0 L693 686.0 L694 686.0 L695 686.0 L696 686.0 L697 686.0 L698 686.0 L699 686.0 L700 686.0 L701 686.0 L702 686.0 L703 686.0 L704 686.0 L705 686.0 L706 686.0 L707 686.0 L708 686.0 L709 686.0 L710 686.0 L711 686.0 L712 686.0 L713 686.0 L714 686.0 L715 686.0 L716 686.0 L717 686.0 L718 686.0 L719 686.0 L720 686.0 L721 686.0 L722 686.0 L723 686.0 L724 686.0 L725 686.0 L726 686.0 L727 686.0 L728 686.0 L729 686.0 L730 686.0 L731 686.0 L732 686.0 L733 686.0 L734 686.0 L735 686.0 L736 686.0 L737 686.0 L738 686.0 L739 686.0 L740 686.0 L741 686.0 L742 686.0 L743 686.0 L744 686.0 L745 686.0 L746 686.0 L747 686.0 L748 686.0 L749 686.0 L750 686.0 L751 686.0 L752 686.0 L753 686.0 L754 686.0 L755 684.5 L756 684.5 L757 684.5 L758 684.5 L759 686.0 L760 686.0 L761 686.0 L762 686.0 L763 686.0 L764 686.0 L765 686.0 L766 686.0 L767 686.0 L768 686.0 L769 686.0 L770 686.0 L771 686.0 L772 686.0 L773 686.0 L774 686.0 L775 686.0 L776 686.0 L777 686.0 L778 686.0 L779 686.0 L780 686.0 L781 686.0 L782 686.0 L783 686.0 L784 686.0 L785 686.0 L786 686.0 L787 686.0 L788 686.0 L789 686.0 L790 686.0 L791 686.0 L792 686.0 L793 686.0 L794 686.0 L795 686.0 L796 686.0 L797 686.0 L798 686.0 L799 685.0 L800 685.0 L801 685.0 L802 685.0 L803 686.0 L804 686.0 L805 686.0 L806 686.0 L807 686.0 L808 686.0 L809 686.0 L810 686.0 L811 686.0 L812 686.0 L813 686.0 L814 686.0 L815 686.0 L816 686.0 L817 686.0 L818 686.0 L819 686.0 L820 686.0 L821 686.0 L822 686.0 L823 686.0 L824 686.0 L825 687.0 L826 685.0 L827 685.0 L828 685.0 L829 685.0 L830 687.0 L831 686.0 L832 686.0 L833 686.0 L834 686.0 L835 687.0 L836 687.0 L837 687.0 L838 687.0 L839 687.0 L840 687.0 L841 687.0 L842 687.0 L843 687.0 L844 685.5 L845 685.5 L846 685.5 L847 685.5 L848 687.0 L849 687.0 L850 688.0 L851 688.0 L852 688.0 L853 688.0 L854 688.0 L855 688.0 L856 688.0 L857 688.0 L858 688.0 L859 688.0 L860 688.0 L861 688.0 L862 688.0 L863 688.0 L864 688.0 L865 688.0 L866 688.0 L867 688.0 L868 688.0 L869 688.0 L870 688.0 L871 688.0 L872 688.0 L873 688.0 L874 686.0 L875 686.0 L876 686.0 L877 688.0 L878 688.0 L879 688.0 L880 688.0 L881 688.0 L882 688.0 L883 688.0 L884 688.0 L885 688.0 L886 688.0 L887 689.0 L888 689.0 L889 688.0 L890 688.0 L891 689.0 L892 689.0 L893 689.0 L894 689.0 L895 689.0 L896 689.0 L897 689.0 L898 689.0 L899 689.0 L900 689.0 L901 689.0 L902 689.0 L903 689.0 L904 689.0 L905 689.0 L906 689.0 L907 689.0 L908 689.0 L909 689.0 L910 689.0 L911 689.0 L912 689.0 L913 689.0 L914 689.0 L915 689.0 L916 689.0 L917 689.0 L918 688.0 L919 688.0 L920 689.0 L921 690.0 L922 690.0 L923 690.0 L924 690.0 L925 690.0 L926 690.0 L927 690.0 L928 690.0 L929 690.0 L930 690.0 L931 690.0 L932 690.0 L933 690.0 L934 690.0 L935 690.0 L936 690.0 L937 690.0 L938 690.0 L939 690.0 L940 690.0 L941 688.0 L942 688.0 L943 690.0 L944 690.0 L945 690.0 L946 690.0 L947 690.0 L948 690.0 L949 690.0 L950 690.0 L951 690.0 L952 690.0 L953 690.0 L954 690.0 L955 690.0 L956 690.0 L957 690.0 L958 690.0 L959 690.0 L960 691.0 L961 691.0 L962 691.0 L963 691.0 L964 691.0 L965 691.0 L966 691.0 L967 689.5 L968 689.5 L969 691.0 L970 691.0 L971 691.0 L972 691.0 L973 691.0 L974 691.0 L975 691.0 L976 691.0 L977 691.0 L978 691.0 L979 691.0 L980 691.0 L981 691.0 L982 691.0 L983 691.0 L984 691.0 L985 691.0 L986 691.0 L987 691.0 L988 691.0 L989 691.0 L990 691.0 L991 691.0 L992 691.0 L993 691.0 L994 691.0 L995 691.0 L996 691.0 L997 691.0 L998 691.0 L999 691.0 L1000 692.0 L1001 691.0 L1002 691.0 L1003 692.0 L1004 692.0 L1005 692.0 L1006 692.0 L1007 692.0 L1008 692.0 L1009 692.0 L1010 692.0 L1011 692.0 L1012 692.0 L1013 692.0 L1014 692.0 L1015 692.0 L1016 692.0 L1017 692.0 L1018 692.0 L1019 692.0 L1020 692.0 L1021 692.0 L1022 692.0 L1023 692.0 L1024 692.0 L1025 692.0 L1026 692.0 L1027 692.0 L1028 692.0 L1029 692.0 L1030 693.0 L1031 691.0 L1032 691.0 L1033 691.0 L1034 693.0 L1035 693.0 L1036 693.0 L1037 693.0 L1038 693.0 L1039 693.0 L1040 693.0 L1041 693.0 L1042 693.0 L1043 693.0 L1044 693.0 L1045 693.0 L1046 693.0 L1047 693.0 L1048 693.0 L1049 693.0 L1050 693.0 L1051 693.0 L1052 693.0 L1053 693.0 L1054 693.0 L1055 693.0 L1056 693.0 L1057 693.0 L1058 693.0 L1059 693.0 L1060 694.0 L1061 694.0 L1062 694.0 L1063 694.0 L1064 694.0 L1065 694.0 L1066 694.0 L1067 694.0 L1068 694.0 L1069 694.0 L1070 694.0 L1071 694.0 L1072 694.0 L1073 694.0 L1074 694.0 L1075 694.0 L1076 694.0 L1077 694.0 L1078 694.0 L1079 694.0 L1080 694.0 L1081 694.0 L1082 694.0 L1083 694.0 L1084 694.0 L1085 695.0 L1086 695.0 L1087 693.0 L1088 693.0 L1089 695.0 L1090 695.0 L1091 695.0 L1092 695.0 L1093 695.0 L1094 695.0 L1095 695.0 L1096 695.0 L1097 695.0 L1098 695.0 L1099 695.0 L1100 695.0 L1101 694.0 L1102 694.0 L1103 695.0 L1104 695.0 L1105 695.0 L1106 695.0 L1107 695.0 L1108 695.0 L1109 695.0 L1110 695.0 L1111 695.0 L1112 695.0 L1113 695.0 L1114 696.0 L1115 696.0 L1116 696.0 L1117 696.0 L1118 696.0 L1119 696.0 L1120 696.0 L1121 696.0 L1122 696.0 L1123 696.0 L1124 696.0 L1125 696.0 L1126 696.0 L1127 696.0 L1128 696.0 L1129 696.0 L1130 696.0 L1131 696.0 L1132 696.0 L1133 696.0 L1134 697.0 L1135 697.0 L1136 697.0 L1137 697.0 L1138 697.0 L1139 697.0 L1140 697.0 L1141 697.0 L1142 697.0 L1143 697.0 L1144 697.0 L1145 697.0 L1146 697.0 L1147 697.0 L1148 697.0 L1149 697.0 L1150 697.0 L1151 697.0 L1152 697.0 L1153 697.0 L1154 697.0 L1155 697.0 L1156 697.0 L1157 698.0 L1158 698.0 L1159 698.0 L1160 698.0 L1161 698.0 L1162 698.0 L1163 698.0 L1164 698.0 L1165 698.0 L1166 698.0 L1167 698.0 L1168 698.0 L1169 698.0 L1170 698.0 L1171 698.0 L1172 698.0 L1173 698.0 L1174 698.0 L1175 698.0 L1176 698.0 L1177 698.0 L1178 698.0 L1179 699.0 L1180 699.0 L1181 699.0 L1182 699.0 L1183 699.0 L1184 699.0 L1185 699.0 L1186 699.0 L1187 699.0 L1188 697.5 L1189 697.5 L1190 699.0 L1191 699.0 L1192 699.0 L1193 699.0 L1194 699.0 L1195 698.0 L1196 698.0 L1197 698.0 L1198 699.0 L1199 699.0 L1200 700.0 L1201 700.0 L1202 700.0 L1203 700.0 L1204 700.0 L1205 700.0 L1206 700.0 L1207 700.0 L1208 700.0 L1209 700.0 L1210 699.0 L1211 699.0 L1212 699.0 L1213 699.0 L1214 701.0 L1215 701.0 L1216 701.0 L1217 700.0 L1218 700.0 L1219 700.0 L1220 700.0 L1221 701.0 L1222 701.0 L1223 701.0 L1224 701.0 L1225 701.0 L1226 701.0 L1227 702.0 L1228 702.0 L1229 702.0 L1230 702.0 L1231 702.0 L1232 702.0 L1233 702.0 L1234 702.0 L1235 702.0 L1236 700.0 L1237 700.0 L1238 700.0 L1239 702.0 L1240 703.0 L1241 703.0 L1242 703.0 L1243 703.0 L1244 703.0 L1245 703.0 L1246 703.0 L1247 703.0 L1248 703.0 L1249 703.0 L1250 703.0 L1251 702.0 L1252 703.0 L1253 703.0 L1254 703.0 L1255 704.0 L1256 704.0 L1257 704.0 L1258 704.0 L1259 704.0 L1260 704.0 L1261 704.0 L1262 704.0 L1263 704.0 L1264 705.0 L1265 705.0 L1266 705.0 L1267 705.0 L1268 703.0 L1269 703.0 L1270 703.0 L1271 705.0 L1272 705.0 L1273 706.0 L1274 706.0 L1275 706.0 L1276 706.0 L1277 706.0 L1278 706.0 L1279 707.0 L1280 707.0 L1281 707.0 L1282 707.0 L1283 707.0 L1284 707.0 L1285 708.0 L1286 708.0 L1287 708.0 L1288 709.0 L1289 709.0 L1290 709.0 L1291 710.0 L1292 710.0 L1293 711.0 L1294 711.0 L1295 712.0 L1296 712.0 L1297 713.0 L1298 714.0 L1299 714.0 L1300 715.0 L1301 714.5 L1302 715.5 L1302 717.5Z" fill="#3f8a72"/><path d="M21 717.5 L21 683.0 L22 683.0 L23 683.0 L24 683.0 L25 683.0 L26 682.9 L27 682.9 L28 682.9 L29 682.9 L30 682.9 L31 682.9 L32 682.9 L33 682.9 L34 682.9 L35 682.9 L36 682.8 L37 682.8 L38 682.8 L39 682.8 L40 682.8 L41 682.8 L42 682.8 L43 682.8 L44 682.8 L45 682.8 L46 682.7 L47 682.7 L48 682.7 L49 682.7 L50 682.7 L51 682.7 L52 682.7 L53 682.7 L54 682.7 L55 682.7 L56 682.6 L57 682.6 L58 682.6 L59 682.6 L60 682.6 L61 682.6 L62 682.6 L63 682.6 L64 682.6 L65 682.5 L66 682.5 L67 682.5 L68 682.5 L69 682.5 L70 682.5 L71 682.5 L72 682.5 L73 682.5 L74 682.4 L75 682.4 L76 682.4 L77 682.4 L78 682.4 L79 682.4 L80 682.4 L81 682.4 L82 682.4 L83 682.3 L84 682.3 L85 682.3 L86 682.3 L87 682.3 L88 682.3 L89 682.3 L90 682.3 L91 682.3 L92 682.2 L93 682.2 L94 682.2 L95 682.2 L96 682.2 L97 682.2 L98 682.2 L99 682.2 L100 682.2 L101 682.1 L102 682.1 L103 682.1 L104 682.1 L105 682.1 L106 682.1 L107 682.1 L108 682.1 L109 682.1 L110 682.0 L111 682.0 L112 682.0 L113 682.0 L114 682.0 L115 682.0 L116 682.0 L117 682.0 L118 682.0 L119 681.9 L120 681.9 L121 681.9 L122 681.9 L123 681.9 L124 681.9 L125 681.9 L126 681.9 L127 681.9 L128 681.8 L129 681.8 L130 681.8 L131 681.8 L132 681.8 L133 681.8 L134 681.8 L135 681.8 L136 681.8 L137 681.7 L138 681.7 L139 681.7 L140 681.7 L141 681.7 L142 681.7 L143 681.7 L144 681.7 L145 681.7 L146 681.6 L147 681.6 L148 681.6 L149 681.6 L150 681.6 L151 681.6 L152 681.6 L153 681.5 L154 681.5 L155 681.5 L156 681.5 L157 681.5 L158 681.5 L159 681.4 L160 681.4 L161 681.4 L162 681.4 L163 681.4 L164 681.3 L165 681.3 L166 681.3 L167 681.3 L168 681.3 L169 681.2 L170 681.2 L171 681.2 L172 681.2 L173 681.2 L174 681.2 L175 681.1 L176 681.1 L177 681.1 L178 681.1 L179 681.1 L180 681.0 L181 681.0 L182 681.0 L183 681.0 L184 681.0 L185 681.0 L186 680.9 L187 680.9 L188 680.9 L189 680.9 L190 680.9 L191 680.8 L192 680.8 L193 680.8 L194 680.8 L195 680.8 L196 680.7 L197 680.7 L198 680.7 L199 680.7 L200 680.7 L201 680.7 L202 680.6 L203 680.6 L204 680.6 L205 680.6 L206 680.6 L207 680.5 L208 680.5 L209 680.5 L210 680.5 L211 680.5 L212 680.4 L213 680.4 L214 680.4 L215 680.4 L216 680.4 L217 680.4 L218 680.3 L219 680.3 L220 680.3 L221 680.3 L222 680.3 L223 680.2 L224 680.2 L225 680.2 L226 680.2 L227 680.2 L228 680.2 L229 680.1 L230 680.1 L231 680.1 L232 680.1 L233 680.1 L234 680.0 L235 680.0 L236 680.0 L237 680.0 L238 680.0 L239 679.9 L240 679.9 L241 679.9 L242 679.9 L243 679.9 L244 679.9 L245 679.8 L246 679.8 L247 679.8 L248 679.8 L249 679.8 L250 679.7 L251 679.7 L252 679.7 L253 679.7 L254 679.7 L255 679.6 L256 679.6 L257 679.6 L258 679.6 L259 679.6 L260 679.6 L261 679.5 L262 679.5 L263 679.5 L264 679.5 L265 679.5 L266 679.4 L267 679.4 L268 679.4 L269 679.4 L270 679.4 L271 679.4 L272 679.3 L273 679.3 L274 679.3 L275 679.3 L276 679.3 L277 679.2 L278 679.2 L279 679.2 L280 679.2 L281 679.2 L282 679.1 L283 679.1 L284 679.1 L285 679.1 L286 679.1 L287 679.1 L288 679.0 L289 679.0 L290 679.0 L291 679.0 L292 679.0 L293 679.0 L294 679.0 L295 679.0 L296 679.0 L297 679.0 L298 679.0 L299 679.0 L300 679.0 L301 679.0 L302 679.0 L303 679.0 L304 679.0 L305 679.0 L306 679.0 L307 679.0 L308 679.0 L309 679.0 L310 679.0 L311 679.0 L312 679.0 L313 679.0 L314 679.0 L315 679.0 L316 679.0 L317 679.0 L318 679.0 L319 679.0 L320 679.0 L321 679.0 L322 679.0 L323 679.0 L324 679.0 L325 679.0 L326 679.0 L327 679.0 L328 679.0 L329 679.0 L330 679.0 L331 679.0 L332 679.0 L333 679.0 L334 679.0 L335 679.1 L336 679.1 L337 679.1 L338 679.1 L339 679.1 L340 679.1 L341 679.1 L342 679.1 L343 679.1 L344 679.1 L345 679.1 L346 679.1 L347 679.1 L348 679.1 L349 679.1 L350 679.1 L351 679.1 L352 679.1 L353 679.1 L354 679.1 L355 679.1 L356 679.1 L357 679.1 L358 679.1 L359 679.1 L360 679.1 L361 679.1 L362 679.1 L363 679.1 L364 679.1 L365 679.1 L366 679.1 L367 679.1 L368 679.1 L369 679.1 L370 679.1 L371 679.1 L372 679.1 L373 679.1 L374 679.1 L375 679.1 L376 679.1 L377 679.1 L378 679.1 L379 679.1 L380 679.1 L381 679.1 L382 679.2 L383 679.2 L384 679.2 L385 679.3 L386 679.3 L387 679.4 L388 679.4 L389 679.4 L390 679.5 L391 679.5 L392 679.6 L393 679.6 L394 679.6 L395 679.7 L396 679.7 L397 679.7 L398 679.8 L399 679.8 L400 679.9 L401 679.9 L402 679.9 L403 680.0 L404 680.0 L405 680.0 L406 680.1 L407 680.1 L408 680.1 L409 680.2 L410 680.2 L411 680.3 L412 680.3 L413 680.3 L414 680.4 L415 680.4 L416 680.5 L417 680.5 L418 680.5 L419 680.6 L420 680.6 L421 680.6 L422 680.7 L423 680.7 L424 680.8 L425 680.8 L426 680.8 L427 680.9 L428 680.9 L429 680.9 L430 681.0 L431 681.0 L432 681.1 L433 681.1 L434 681.1 L435 681.2 L436 681.2 L437 681.2 L438 681.3 L439 681.3 L440 681.4 L441 681.4 L442 681.4 L443 681.5 L444 681.5 L445 681.5 L446 681.6 L447 681.6 L448 681.6 L449 681.7 L450 681.7 L451 681.8 L452 681.8 L453 681.8 L454 681.9 L455 681.9 L456 682.0 L457 682.0 L458 682.0 L459 682.1 L460 682.1 L461 682.1 L462 682.2 L463 682.2 L464 682.2 L465 682.3 L466 682.3 L467 682.4 L468 682.4 L469 682.4 L470 682.5 L471 682.5 L472 682.6 L473 682.6 L474 682.6 L475 682.7 L476 682.7 L477 682.7 L478 682.8 L479 682.8 L480 682.9 L481 682.9 L482 682.9 L483 683.0 L484 683.0 L485 683.0 L486 683.1 L487 683.1 L488 683.1 L489 683.2 L490 683.2 L491 683.3 L492 683.3 L493 683.3 L494 683.4 L495 683.4 L496 683.5 L497 683.5 L498 683.5 L499 683.6 L500 683.6 L501 683.6 L502 683.7 L503 683.7 L504 683.7 L505 683.7 L506 683.8 L507 683.8 L508 683.8 L509 683.9 L510 683.9 L511 683.9 L512 684.0 L513 684.0 L514 684.0 L515 684.0 L516 684.1 L517 684.1 L518 684.1 L519 684.2 L520 684.2 L521 684.2 L522 684.2 L523 684.3 L524 684.3 L525 684.3 L526 684.4 L527 684.4 L528 684.4 L529 684.4 L530 684.5 L531 684.5 L532 684.5 L533 684.6 L534 684.6 L535 684.6 L536 684.6 L537 684.7 L538 684.7 L539 684.7 L540 684.8 L541 684.8 L542 684.8 L543 684.9 L544 684.9 L545 684.9 L546 684.9 L547 685.0 L548 685.0 L549 685.0 L550 685.1 L551 685.1 L552 685.1 L553 685.1 L554 685.2 L555 685.2 L556 685.2 L557 685.3 L558 685.3 L559 685.3 L560 685.4 L561 685.4 L562 685.4 L563 685.4 L564 685.5 L565 685.5 L566 685.5 L567 685.6 L568 685.6 L569 685.6 L570 685.6 L571 685.7 L572 685.7 L573 685.7 L574 685.8 L575 685.8 L576 685.8 L577 685.8 L578 685.9 L579 685.9 L580 685.9 L581 686.0 L582 686.0 L583 686.0 L584 686.1 L585 686.1 L586 686.1 L587 686.1 L588 686.2 L589 686.2 L590 686.2 L591 686.3 L592 686.3 L593 686.3 L594 686.3 L595 686.4 L596 686.4 L597 686.4 L598 686.5 L599 686.5 L600 686.5 L601 686.5 L602 686.6 L603 686.6 L604 686.6 L605 686.7 L606 686.7 L607 686.7 L608 686.8 L609 686.8 L610 686.8 L611 686.8 L612 686.9 L613 686.9 L614 686.9 L615 687.0 L616 687.0 L617 687.0 L618 687.0 L619 687.1 L620 687.1 L621 687.1 L622 687.1 L623 687.1 L624 687.1 L625 687.1 L626 687.1 L627 687.1 L628 687.1 L629 687.1 L630 687.1 L631 687.1 L632 687.1 L633 687.1 L634 687.1 L635 687.1 L636 687.1 L637 687.1 L638 687.1 L639 687.1 L640 687.1 L641 687.1 L642 687.1 L643 687.1 L644 687.1 L645 687.1 L646 687.1 L647 687.1 L648 687.1 L649 687.1 L650 687.1 L651 687.1 L652 687.1 L653 687.1 L654 687.1 L655 687.1 L656 687.1 L657 687.1 L658 687.1 L659 687.1 L660 687.1 L661 687.1 L662 687.1 L663 687.1 L664 687.1 L665 687.1 L666 687.1 L667 687.1 L668 687.1 L669 687.1 L670 687.1 L671 687.1 L672 687.1 L673 687.1 L674 687.1 L675 687.1 L676 687.1 L677 687.1 L678 687.1 L679 687.1 L680 687.1 L681 687.1 L682 687.1 L683 687.1 L684 687.1 L685 687.1 L686 687.1 L687 687.1 L688 687.1 L689 687.1 L690 687.1 L691 687.1 L692 687.1 L693 687.1 L694 687.1 L695 687.1 L696 687.1 L697 687.1 L698 687.1 L699 687.1 L700 687.1 L701 687.1 L702 687.1 L703 687.1 L704 687.1 L705 687.1 L706 687.1 L707 687.1 L708 687.1 L709 687.1 L710 687.1 L711 687.1 L712 687.1 L713 687.1 L714 687.1 L715 687.1 L716 687.1 L717 687.1 L718 687.1 L719 687.1 L720 687.1 L721 687.1 L722 687.1 L723 687.1 L724 687.1 L725 687.1 L726 687.1 L727 687.0 L728 687.0 L729 687.0 L730 687.0 L731 687.0 L732 687.0 L733 687.0 L734 687.0 L735 687.0 L736 687.0 L737 687.0 L738 687.0 L739 687.0 L740 687.0 L741 687.0 L742 687.0 L743 686.9 L744 686.9 L745 686.9 L746 686.9 L747 686.9 L748 686.9 L749 686.9 L750 686.9 L751 686.9 L752 686.9 L753 686.9 L754 686.9 L755 686.9 L756 686.9 L757 686.9 L758 686.9 L759 686.9 L760 686.8 L761 686.8 L762 686.8 L763 686.8 L764 686.8 L765 686.8 L766 686.8 L767 686.8 L768 686.8 L769 686.8 L770 686.8 L771 686.8 L772 686.8 L773 686.8 L774 686.8 L775 686.8 L776 686.7 L777 686.7 L778 686.7 L779 686.7 L780 686.7 L781 686.7 L782 686.7 L783 686.7 L784 686.7 L785 686.7 L786 686.7 L787 686.7 L788 686.7 L789 686.7 L790 686.7 L791 686.7 L792 686.6 L793 686.6 L794 686.6 L795 686.6 L796 686.6 L797 686.6 L798 686.6 L799 686.6 L800 686.6 L801 686.6 L802 686.7 L803 686.7 L804 686.8 L805 686.8 L806 686.8 L807 686.9 L808 686.9 L809 687.0 L810 687.0 L811 687.0 L812 687.1 L813 687.1 L814 687.2 L815 687.2 L816 687.2 L817 687.3 L818 687.3 L819 687.4 L820 687.4 L821 687.4 L822 687.5 L823 687.5 L824 687.6 L825 687.6 L826 687.6 L827 687.7 L828 687.7 L829 687.8 L830 687.8 L831 687.8 L832 687.9 L833 687.9 L834 688.0 L835 688.0 L836 688.0 L837 688.1 L838 688.1 L839 688.2 L840 688.2 L841 688.2 L842 688.3 L843 688.3 L844 688.4 L845 688.4 L846 688.4 L847 688.5 L848 688.5 L849 688.6 L850 688.6 L851 688.6 L852 688.7 L853 688.7 L854 688.7 L855 688.7 L856 688.8 L857 688.8 L858 688.8 L859 688.9 L860 688.9 L861 688.9 L862 688.9 L863 689.0 L864 689.0 L865 689.0 L866 689.1 L867 689.1 L868 689.1 L869 689.1 L870 689.2 L871 689.2 L872 689.2 L873 689.3 L874 689.3 L875 689.3 L876 689.3 L877 689.4 L878 689.4 L879 689.4 L880 689.5 L881 689.5 L882 689.5 L883 689.5 L884 689.6 L885 689.6 L886 689.6 L887 689.7 L888 689.7 L889 689.7 L890 689.7 L891 689.8 L892 689.8 L893 689.8 L894 689.9 L895 689.9 L896 689.9 L897 689.9 L898 690.0 L899 690.0 L900 690.0 L901 690.1 L902 690.1 L903 690.1 L904 690.1 L905 690.2 L906 690.2 L907 690.2 L908 690.3 L909 690.3 L910 690.3 L911 690.3 L912 690.4 L913 690.4 L914 690.4 L915 690.5 L916 690.5 L917 690.5 L918 690.5 L919 690.6 L920 690.6 L921 690.6 L922 690.6 L923 690.7 L924 690.7 L925 690.7 L926 690.8 L927 690.8 L928 690.8 L929 690.8 L930 690.9 L931 690.9 L932 690.9 L933 690.9 L934 691.0 L935 691.0 L936 691.0 L937 691.0 L938 691.1 L939 691.1 L940 691.1 L941 691.1 L942 691.1 L943 691.2 L944 691.2 L945 691.2 L946 691.2 L947 691.3 L948 691.3 L949 691.3 L950 691.4 L951 691.4 L952 691.4 L953 691.4 L954 691.5 L955 691.5 L956 691.5 L957 691.5 L958 691.6 L959 691.6 L960 691.6 L961 691.6 L962 691.6 L963 691.7 L964 691.7 L965 691.7 L966 691.8 L967 691.8 L968 691.8 L969 691.8 L970 691.9 L971 691.9 L972 691.9 L973 691.9 L974 692.0 L975 692.0 L976 692.0 L977 692.0 L978 692.1 L979 692.1 L980 692.1 L981 692.1 L982 692.1 L983 692.2 L984 692.2 L985 692.2 L986 692.2 L987 692.3 L988 692.3 L989 692.3 L990 692.4 L991 692.4 L992 692.4 L993 692.4 L994 692.5 L995 692.5 L996 692.5 L997 692.5 L998 692.6 L999 692.6 L1000 692.6 L1001 692.6 L1002 692.7 L1003 692.7 L1004 692.7 L1005 692.8 L1006 692.8 L1007 692.8 L1008 692.9 L1009 692.9 L1010 692.9 L1011 693.0 L1012 693.0 L1013 693.0 L1014 693.1 L1015 693.1 L1016 693.1 L1017 693.2 L1018 693.2 L1019 693.2 L1020 693.3 L1021 693.3 L1022 693.3 L1023 693.4 L1024 693.4 L1025 693.4 L1026 693.5 L1027 693.5 L1028 693.5 L1029 693.6 L1030 693.6 L1031 693.6 L1032 693.7 L1033 693.7 L1034 693.7 L1035 693.8 L1036 693.8 L1037 693.8 L1038 693.9 L1039 693.9 L1040 693.9 L1041 694.0 L1042 694.0 L1043 694.0 L1044 694.1 L1045 694.1 L1046 694.1 L1047 694.2 L1048 694.2 L1049 694.2 L1050 694.3 L1051 694.3 L1052 694.3 L1053 694.4 L1054 694.4 L1055 694.4 L1056 694.5 L1057 694.5 L1058 694.5 L1059 694.6 L1060 694.6 L1061 694.6 L1062 694.7 L1063 694.7 L1064 694.8 L1065 694.8 L1066 694.8 L1067 694.9 L1068 694.9 L1069 695.0 L1070 695.0 L1071 695.0 L1072 695.1 L1073 695.1 L1074 695.2 L1075 695.2 L1076 695.3 L1077 695.3 L1078 695.3 L1079 695.4 L1080 695.4 L1081 695.5 L1082 695.5 L1083 695.5 L1084 695.6 L1085 695.6 L1086 695.7 L1087 695.7 L1088 695.7 L1089 695.8 L1090 695.8 L1091 695.9 L1092 695.9 L1093 695.9 L1094 696.0 L1095 696.0 L1096 696.1 L1097 696.1 L1098 696.1 L1099 696.2 L1100 696.2 L1101 696.3 L1102 696.3 L1103 696.4 L1104 696.5 L1105 696.5 L1106 696.6 L1107 696.6 L1108 696.7 L1109 696.7 L1110 696.8 L1111 696.9 L1112 696.9 L1113 697.0 L1114 697.0 L1115 697.1 L1116 697.2 L1117 697.2 L1118 697.3 L1119 697.3 L1120 697.4 L1121 697.4 L1122 697.5 L1123 697.6 L1124 697.6 L1125 697.7 L1126 697.7 L1127 697.8 L1128 697.9 L1129 697.9 L1130 698.0 L1131 698.0 L1132 698.1 L1133 698.1 L1134 698.2 L1135 698.3 L1136 698.3 L1137 698.4 L1138 698.4 L1139 698.5 L1140 698.5 L1141 698.6 L1142 698.7 L1143 698.7 L1144 698.8 L1145 698.8 L1146 698.9 L1147 699.0 L1148 699.0 L1149 699.1 L1150 699.2 L1151 699.2 L1152 699.3 L1153 699.3 L1154 699.4 L1155 699.5 L1156 699.5 L1157 699.6 L1158 699.7 L1159 699.7 L1160 699.8 L1161 699.8 L1162 699.9 L1163 700.0 L1164 700.0 L1165 700.1 L1166 700.2 L1167 700.2 L1168 700.3 L1169 700.4 L1170 700.4 L1171 700.5 L1172 700.5 L1173 700.6 L1174 700.7 L1175 700.7 L1176 700.8 L1177 700.9 L1178 700.9 L1179 701.0 L1180 701.1 L1181 701.1 L1182 701.2 L1183 701.2 L1184 701.3 L1185 701.4 L1186 701.4 L1187 701.5 L1188 701.6 L1189 701.6 L1190 701.7 L1191 701.8 L1192 701.8 L1193 701.9 L1194 701.9 L1195 702.0 L1196 702.1 L1197 702.1 L1198 702.2 L1199 702.3 L1200 702.3 L1201 702.4 L1202 702.5 L1203 702.6 L1204 702.7 L1205 702.8 L1206 702.9 L1207 703.0 L1208 703.1 L1209 703.2 L1210 703.3 L1211 703.3 L1212 703.4 L1213 703.5 L1214 703.6 L1215 703.7 L1216 703.8 L1217 703.9 L1218 704.0 L1219 704.1 L1220 704.2 L1221 704.3 L1222 704.4 L1223 704.5 L1224 704.5 L1225 704.6 L1226 704.7 L1227 704.8 L1228 704.9 L1229 705.0 L1230 705.1 L1231 705.2 L1232 705.3 L1233 705.4 L1234 705.5 L1235 705.6 L1236 705.7 L1237 705.7 L1238 705.8 L1239 705.9 L1240 706.0 L1241 706.1 L1242 706.2 L1243 706.3 L1244 706.4 L1245 706.5 L1246 706.6 L1247 706.7 L1248 706.8 L1249 706.9 L1250 707.0 L1251 707.1 L1252 707.2 L1253 707.3 L1254 707.4 L1255 707.5 L1256 707.6 L1257 707.7 L1258 707.8 L1259 707.9 L1260 708.0 L1261 708.1 L1262 708.2 L1263 708.3 L1264 708.4 L1265 708.5 L1266 708.6 L1267 708.7 L1268 708.8 L1269 708.9 L1270 709.0 L1271 709.2 L1272 709.4 L1273 709.6 L1274 709.8 L1275 710.0 L1276 710.1 L1277 710.3 L1278 710.5 L1279 710.7 L1280 710.9 L1281 711.1 L1282 711.2 L1283 711.4 L1284 711.6 L1285 711.8 L1286 712.1 L1287 712.3 L1288 712.4 L1289 712.6 L1290 712.7 L1291 712.8 L1292 713.0 L1293 713.1 L1294 713.5 L1295 713.8 L1296 714.2 L1297 714.6 L1298 714.9 L1299 715.6 L1300 716.2 L1301 716.9 L1302 717.5 L1302 717.5Z" fill="#64a9ab"/><path d="M540 684.0 L541 684.0 L542 684.0 L543 684.0 L544 684.0 L545 684.0 L546 684.0 L547 684.0 L548 684.0 L549 684.0 L550 684.0 L551 682.5 L552 682.5 L553 682.5 L554 682.5 L555 684.0 L556 684.0 L557 684.0 L558 684.0 L559 684.0 L560 684.0 L561 684.0 L562 684.0 L563 684.0 L564 684.0 L565 684.0 L566 684.0 L567 684.0 L568 684.0 L569 685.0 L570 685.0 L571 685.0 L572 685.0 L573 685.0 L574 685.0 L575 685.0 L576 685.0 L577 685.0 L578 685.0 L579 685.0 L580 685.0 L581 685.0 L582 685.0 L583 685.0 L584 685.0 L585 685.0 L586 685.0 L587 685.0 L588 685.0 L589 685.0 L590 685.0 L591 685.0 L592 685.0 L593 685.0 L594 685.0 L595 685.0 L596 685.0 L597 685.0 L598 685.0 L599 685.0 L600 685.0 L601 685.0 L602 685.0 L603 686.0 L604 686.0 L605 686.0 L606 686.0 L607 686.0 L608 686.0 L609 686.0 L610 686.0 L611 684.0 L612 684.0 L613 684.0 L614 686.0 L615 686.0 L616 686.0 L617 686.0 L618 686.0 L619 686.0 L620 686.0 L621 686.0 L622 686.0 L623 686.0 L624 686.0 L625 686.0 L626 686.0 L627 686.0 L628 686.0 L629 686.0 L630 686.0 L631 686.0 L632 686.0 L633 686.0 L634 686.0 L635 686.0 L636 686.0 L637 686.0 L638 686.0 L639 686.0 L640 686.0 L641 686.0 L642 686.0 L643 686.0 L644 686.0 L645 686.0 L646 686.0 L647 686.0 L648 686.0 L649 686.0 L650 686.0 L651 686.0 L652 686.0 L653 686.0 L654 686.0 L655 686.0 L656 686.0 L657 684.0 L658 684.0 L659 684.0 L660 686.0 L661 686.0 L662 686.0 L663 686.0 L664 686.0 L665 686.0 L666 686.0 L667 686.0 L668 686.0 L669 686.0 L670 686.0 L671 686.0 L672 686.0 L673 686.0 L674 686.0 L675 686.0 L676 686.0 L677 686.0 L678 686.0 L679 686.0 L680 686.0 L681 686.0 L682 686.0 L683 686.0 L684 686.0 L685 686.0 L686 686.0 L687 686.0 L688 686.0 L689 686.0 L690 686.0 L691 686.0 L692 686.0 L693 686.0 L694 686.0 L695 686.0 L696 686.0 L697 686.0 L698 686.0 L699 686.0 L700 686.0 L701 686.0 L702 686.0 L703 686.0 L704 686.0 L705 686.0 L706 686.0 L707 686.0 L708 686.0 L709 686.0 L710 686.0 L711 686.0 L712 686.0 L713 686.0 L714 686.0 L715 686.0 L716 686.0 L717 686.0 L718 686.0 L719 686.0 L720 686.0 L721 686.0 L722 686.0 L723 686.0 L724 686.0 L725 686.0 L726 686.0 L727 686.0 L728 686.0 L729 686.0 L730 686.0 L731 686.0 L732 686.0 L733 686.0 L734 686.0 L735 686.0 L736 686.0 L737 686.0 L738 686.0 L739 686.0 L740 686.0 L741 686.0 L742 686.0 L743 686.0 L744 686.0 L745 686.0 L746 686.0 L747 686.0 L748 686.0 L749 686.0 L750 686.0 L751 686.0 L752 686.0 L753 686.0 L754 686.0 L755 684.5 L756 684.5 L757 684.5 L758 684.5 L759 686.0 L760 686.0 L761 686.0 L762 686.0 L763 686.0 L764 686.0 L765 686.0 L766 686.0 L767 686.0 L768 686.0 L769 686.0 L770 686.0 L771 686.0 L772 686.0 L773 686.0 L774 686.0 L775 686.0 L776 686.0 L777 686.0 L778 686.0 L779 686.0 L780 686.0 L781 686.0 L782 686.0 L783 686.0 L784 686.0 L785 686.0 L786 686.0 L787 686.0 L788 686.0 L789 686.0 L790 686.0 L791 686.0 L792 686.0 L793 686.0 L794 686.0 L795 686.0 L796 686.0 L797 686.0 L798 686.0 L799 685.0 L800 685.0 L801 685.0 L802 685.0 L803 686.0 L804 686.0 L805 686.0 L806 686.0 L807 686.0 L808 686.0 L809 686.0 L810 686.0 L811 686.0 L812 686.0 L813 686.0 L814 686.0 L815 686.0 L816 686.0 L817 686.0 L818 686.0 L819 686.0 L820 686.0 L821 686.0 L822 686.0 L823 686.0 L824 686.0 L825 687.0 L826 685.0 L827 685.0 L828 685.0 L829 685.0 L830 687.0 L831 686.0 L832 686.0 L833 686.0 L834 686.0 L835 687.0 L836 687.0 L837 687.0 L838 687.0 L839 687.0 L840 687.0 L841 687.0 L842 687.0 L843 687.0 L844 685.5 L845 685.5 L846 685.5 L847 685.5 L848 687.0 L849 687.0 L850 688.0 L851 688.0 L852 688.0 L853 688.0 L854 688.0 L855 688.0 L856 688.0 L857 688.0 L858 688.0 L859 688.0 L860 688.0 L861 688.0 L862 688.0 L863 688.0 L864 688.0 L865 688.0 L866 688.0 L867 688.0 L868 688.0 L869 688.0 L870 688.0 L871 688.0 L872 688.0 L873 688.0 L874 686.0 L875 686.0 L876 686.0 L877 688.0 L878 688.0 L879 688.0 L880 688.0 L881 688.0 L882 688.0 L883 688.0 L884 688.0 L885 688.0 L886 688.0 L887 689.0 L888 689.0 L889 688.0 L890 688.0 L891 689.0 L892 689.0 L893 689.0 L894 689.0 L895 689.0 L896 689.0 L897 689.0 L898 689.0 L899 689.0 L900 689.0 L901 689.0 L902 689.0 L903 689.0 L904 689.0 L905 689.0 L906 689.0 L907 689.0 L908 689.0 L909 689.0 L910 689.0 L911 689.0 L912 689.0 L913 689.0 L914 689.0 L915 689.0 L916 689.0 L917 689.0 L918 688.0 L919 688.0 L920 689.0 L921 690.0 L922 690.0 L923 690.0 L924 690.0 L925 690.0 L926 690.0 L927 690.0 L928 690.0 L929 690.0 L930 690.0 L931 690.0 L932 690.0 L933 690.0 L934 690.0 L935 690.0 L936 690.0 L937 690.0 L938 690.0 L939 690.0 L940 690.0 L941 688.0 L942 688.0 L943 690.0 L944 690.0 L945 690.0 L946 690.0 L947 690.0 L948 690.0 L949 690.0 L950 690.0 L951 690.0 L952 690.0 L953 690.0 L954 690.0 L955 690.0 L956 690.0 L957 690.0 L958 690.0 L959 690.0 L960 691.0 L961 691.0 L962 691.0 L963 691.0 L964 691.0 L965 691.0 L966 691.0 L967 689.5 L968 689.5 L969 691.0 L970 691.0 L971 691.0 L972 691.0 L973 691.0 L974 691.0 L975 691.0 L976 691.0 L977 691.0 L978 691.0 L979 691.0 L980 691.0 L981 691.0 L982 691.0 L983 691.0 L984 691.0 L985 691.0 L986 691.0 L987 691.0 L988 691.0 L989 691.0 L990 691.0 L991 691.0 L992 691.0 L993 691.0 L994 691.0 L995 691.0 L996 691.0 L997 691.0 L998 691.0 L999 691.0 L1000 692.0 L1001 691.0 L1002 691.0 L1003 692.0 L1004 692.0 L1005 692.0 L1006 692.0 L1007 692.0 L1008 692.0 L1009 692.0 L1010 692.0 L1011 692.0 L1012 692.0 L1013 692.0 L1014 692.0 L1015 692.0 L1016 692.0 L1017 692.0 L1018 692.0 L1019 692.0 L1020 692.0 L1021 692.0 L1022 692.0 L1023 692.0 L1024 692.0 L1025 692.0 L1026 692.0 L1027 692.0 L1028 692.0 L1029 692.0 L1030 693.0 L1031 691.0 L1032 691.0 L1033 691.0 L1034 693.0 L1035 693.0 L1036 693.0 L1037 693.0 L1038 693.0 L1039 693.0 L1040 693.0 L1041 693.0 L1042 693.0 L1043 693.0 L1044 693.0 L1045 693.0 L1046 693.0 L1047 693.0 L1048 693.0 L1049 693.0 L1050 693.0 L1051 693.0 L1052 693.0 L1053 693.0 L1054 693.0 L1055 693.0 L1056 693.0 L1057 693.0 L1058 693.0 L1059 693.0 L1060 694.0 L1061 694.0 L1062 694.0 L1063 694.0 L1064 694.0 L1065 694.0 L1066 694.0 L1067 694.0 L1068 694.0 L1069 694.0 L1070 694.0 L1071 694.0 L1072 694.0 L1073 694.0 L1074 694.0 L1075 694.0 L1076 694.0 L1077 694.0 L1078 694.0 L1079 694.0 L1080 694.0 L1081 694.0 L1082 694.0 L1083 694.0 L1084 694.0 L1085 695.0 L1086 695.0 L1087 693.0 L1088 693.0 L1089 695.0 L1090 695.0 L1091 695.0 L1092 695.0 L1093 695.0 L1094 695.0 L1095 695.0 L1096 695.0 L1097 695.0 L1098 695.0 L1099 695.0 L1100 695.0 L1101 694.0 L1102 694.0 L1103 695.0 L1104 695.0 L1105 695.0 L1106 695.0 L1107 695.0 L1108 695.0 L1109 695.0 L1110 695.0 L1111 695.0 L1112 695.0 L1113 695.0 L1114 696.0 L1115 696.0 L1116 696.0 L1117 696.0 L1118 696.0 L1119 696.0 L1120 696.0 L1121 696.0 L1122 696.0 L1123 696.0 L1124 696.0 L1125 696.0 L1126 696.0 L1127 696.0 L1128 696.0 L1129 696.0 L1130 696.0 L1131 696.0 L1132 696.0 L1133 696.0 L1134 697.0 L1135 697.0 L1136 697.0 L1137 697.0 L1138 697.0 L1139 697.0 L1140 697.0 L1141 697.0 L1142 697.0 L1143 697.0 L1144 697.0 L1145 697.0 L1146 697.0 L1147 697.0 L1148 697.0 L1149 697.0 L1150 697.0 L1151 697.0 L1152 697.0 L1153 697.0 L1154 697.0 L1155 697.0 L1156 697.0 L1157 698.0 L1158 698.0 L1159 698.0 L1160 698.0 L1161 698.0 L1162 698.0 L1163 698.0 L1164 698.0 L1165 698.0 L1166 698.0 L1167 698.0 L1168 698.0 L1169 698.0 L1170 698.0 L1171 698.0 L1172 698.0 L1173 698.0 L1174 698.0 L1175 698.0 L1176 698.0 L1177 698.0 L1178 698.0 L1179 699.0 L1180 699.0 L1181 699.0 L1182 699.0 L1183 699.0 L1184 699.0 L1185 699.0 L1186 699.0 L1187 699.0 L1188 697.5 L1189 697.5 L1190 699.0 L1191 699.0 L1192 699.0 L1193 699.0 L1194 699.0 L1195 698.0 L1196 698.0 L1197 698.0 L1198 699.0 L1199 699.0 L1200 700.0 L1201 700.0 L1202 700.0 L1203 700.0 L1204 700.0 L1205 700.0 L1206 700.0 L1207 700.0 L1208 700.0 L1209 700.0 L1210 699.0 L1211 699.0 L1212 699.0 L1213 699.0 L1214 701.0 L1215 701.0 L1216 701.0 L1217 700.0 L1218 700.0 L1219 700.0 L1220 700.0 L1221 701.0 L1222 701.0 L1223 701.0 L1224 701.0 L1225 701.0 L1226 701.0 L1227 702.0 L1228 702.0 L1229 702.0 L1230 702.0 L1231 702.0 L1232 702.0 L1233 702.0 L1234 702.0 L1235 702.0 L1236 700.0 L1237 700.0 L1238 700.0 L1239 702.0 L1240 703.0 L1241 703.0 L1242 703.0 L1243 703.0 L1244 703.0 L1245 703.0 L1246 703.0 L1247 703.0 L1248 703.0 L1249 703.0 L1250 703.0 L1251 702.0 L1252 703.0 L1253 703.0 L1254 703.0 L1255 704.0 L1256 704.0 L1257 704.0 L1258 704.0 L1259 704.0 L1260 704.0 L1261 704.0 L1262 704.0 L1263 704.0 L1264 705.0 L1265 705.0 L1266 705.0 L1267 705.0 L1268 703.0 L1269 703.0 L1270 703.0 L1271 705.0 L1272 705.0 L1273 706.0 L1274 706.0 L1275 706.0 L1276 706.0 L1277 706.0 L1278 706.0 L1279 707.0 L1280 707.0 L1281 707.0 L1282 707.0 L1283 707.0 L1284 707.0 L1285 708.0 L1286 708.0 L1287 708.0 L1288 709.0 L1289 709.0 L1290 709.0 L1291 710.0 L1292 710.0 L1293 711.0 L1294 711.0 L1295 712.0 L1296 712.0 L1297 713.0 L1298 714.0 L1299 714.0 L1300 715.0 L1301 714.5 L1302 715.5" fill="none" stroke="#5ccf98" stroke-width="1"/><path d="M21 717.5H1303" stroke="#1a6a30" stroke-width="1.5"/><path d="M17 721.5H1314M1313.5 656V722" stroke="#b8b8b8" stroke-width="1"/><path d="M21.5 722V729 M66.5 722V726 M120.5 722V726 M161.5 722V726 M195.5 722V726 M224.5 722V726 M249.5 722V726 M270.5 722V726 M290.5 722V728 M419.5 722V726 M494.5 722V726 M548.5 722V726 M589.5 722V726 M623.5 722V726 M652.5 722V726 M677.5 722V726 M698.5 722V726 M718.5 722V728 M847.5 722V726 M922.5 722V726 M976.5 722V726 M1017.5 722V726 M1051.5 722V726 M1080.5 722V726 M1105.5 722V726 M1126.5 722V726 M1146.5 722V728 M1275.5 722V726 M1309.5 722V729" stroke="#b8b8b8" stroke-width="1"/><path d="M1314 663.5H1323 M1314 667.5H1319 M1314 671.5H1319 M1314 674.5H1319 M1314 678.5H1319 M1314 682.5H1319 M1314 686.5H1319 M1314 690.5H1323 M1314 694.5H1319 M1314 698.5H1319 M1314 702.5H1319 M1314 706.5H1319 M1314 710.5H1319 M1314 713.5H1319 M1314 717.5H1323" stroke="#b8b8b8" stroke-width="1"/></svg>
<div class="a" style="left:24px;top:659px;color:#3a3a3a;line-height:14px">Scanned Selection</div>
<div class="a" style="left:15px;top:731px;color:#a8a8a8;line-height:14px">Hz</div>
<div class="a" style="left:46px;width:40px;text-align:center;top:731px;color:#787878;line-height:14px">30</div>
<div class="a" style="left:100px;width:40px;text-align:center;top:731px;color:#787878;line-height:14px">40</div>
<div class="a" style="left:141px;width:40px;text-align:center;top:731px;color:#787878;line-height:14px">50</div>
<div class="a" style="left:175px;width:40px;text-align:center;top:731px;color:#787878;line-height:14px">60</div>
<div class="a" style="left:204px;width:40px;text-align:center;top:731px;color:#787878;line-height:14px">70</div>
<div class="a" style="left:229px;width:40px;text-align:center;top:731px;color:#787878;line-height:14px">80</div>
<div class="a" style="left:250px;width:40px;text-align:center;top:731px;color:#787878;line-height:14px">90</div>
<div class="a" style="left:270px;width:40px;text-align:center;top:731px;color:#c8c8c8;line-height:14px">100</div>
<div class="a" style="left:399px;width:40px;text-align:center;top:731px;color:#787878;line-height:14px">200</div>
<div class="a" style="left:474px;width:40px;text-align:center;top:731px;color:#787878;line-height:14px">300</div>
<div class="a" style="left:528px;width:40px;text-align:center;top:731px;color:#787878;line-height:14px">400</div>
<div class="a" style="left:569px;width:40px;text-align:center;top:731px;color:#787878;line-height:14px">500</div>
<div class="a" style="left:603px;width:40px;text-align:center;top:731px;color:#787878;line-height:14px">600</div>
<div class="a" style="left:632px;width:40px;text-align:center;top:731px;color:#787878;line-height:14px">700</div>
<div class="a" style="left:657px;width:40px;text-align:center;top:731px;color:#787878;line-height:14px">800</div>
<div class="a" style="left:678px;width:40px;text-align:center;top:731px;color:#787878;line-height:14px">900</div>
<div class="a" style="left:698px;width:40px;text-align:center;top:731px;color:#c8c8c8;line-height:14px">1k</div>
<div class="a" style="left:827px;width:40px;text-align:center;top:731px;color:#787878;line-height:14px">2k</div>
<div class="a" style="left:902px;width:40px;text-align:center;top:731px;color:#787878;line-height:14px">3k</div>
<div class="a" style="left:956px;width:40px;text-align:center;top:731px;color:#787878;line-height:14px">4k</div>
<div class="a" style="left:997px;width:40px;text-align:center;top:731px;color:#787878;line-height:14px">5k</div>
<div class="a" style="left:1031px;width:40px;text-align:center;top:731px;color:#787878;line-height:14px">6k</div>
<div class="a" style="left:1060px;width:40px;text-align:center;top:731px;color:#787878;line-height:14px">7k</div>
<div class="a" style="left:1085px;width:40px;text-align:center;top:731px;color:#787878;line-height:14px">8k</div>
<div class="a" style="left:1106px;width:40px;text-align:center;top:731px;color:#787878;line-height:14px">9k</div>
<div class="a" style="left:1126px;width:40px;text-align:center;top:731px;color:#c8c8c8;line-height:14px">10k</div>
<div class="a" style="left:1255px;width:40px;text-align:center;top:731px;color:#787878;line-height:14px">20k</div>
<div class="a" style="left:1326px;top:653px;color:#a8a8a8;line-height:14px">dB</div>
<div class="a" style="left:1325px;top:683px;color:#a8a8a8;line-height:14px">-50</div>
<div class="a" style="left:1325px;top:709px;color:#a8a8a8;line-height:14px">-100</div>
<div class="a" style="left:0;top:745px;width:1366px;height:1px;background:#161616"></div>
<div class="a" style="left:0;top:746px;width:1366px;height:22px;background:#232323"></div>
<div class="a" style="left:9px;top:752px;color:#b4b4b4;line-height:14px">Analyze Statistics completed in 34,05 seconds</div>
<div class="a" style="left:922px;top:749px;width:1px;height:17px;background:#303030"></div>
<div class="a" style="left:1083px;top:749px;width:1px;height:17px;background:#303030"></div>
<div class="a" style="left:1154px;top:749px;width:1px;height:17px;background:#303030"></div>
<div class="a" style="left:1227px;top:749px;width:1px;height:17px;background:#303030"></div>
<div class="a" style="left:1318px;top:749px;width:1px;height:17px;background:#303030"></div>
<div class="a" style="left:931px;top:752px;color:#a8a8a8;line-height:14px">48000 Hz ● 24-bit ● Stereo</div>
<div class="a" style="left:1093px;top:752px;color:#a8a8a8;line-height:14px">706,36 MB</div>
<div class="a" style="left:1172px;top:752px;color:#a8a8a8;line-height:14px">42:51.790</div>
<div class="a" style="left:1237px;top:752px;color:#a8a8a8;line-height:14px">184,44 GB free</div>
</body></html>
